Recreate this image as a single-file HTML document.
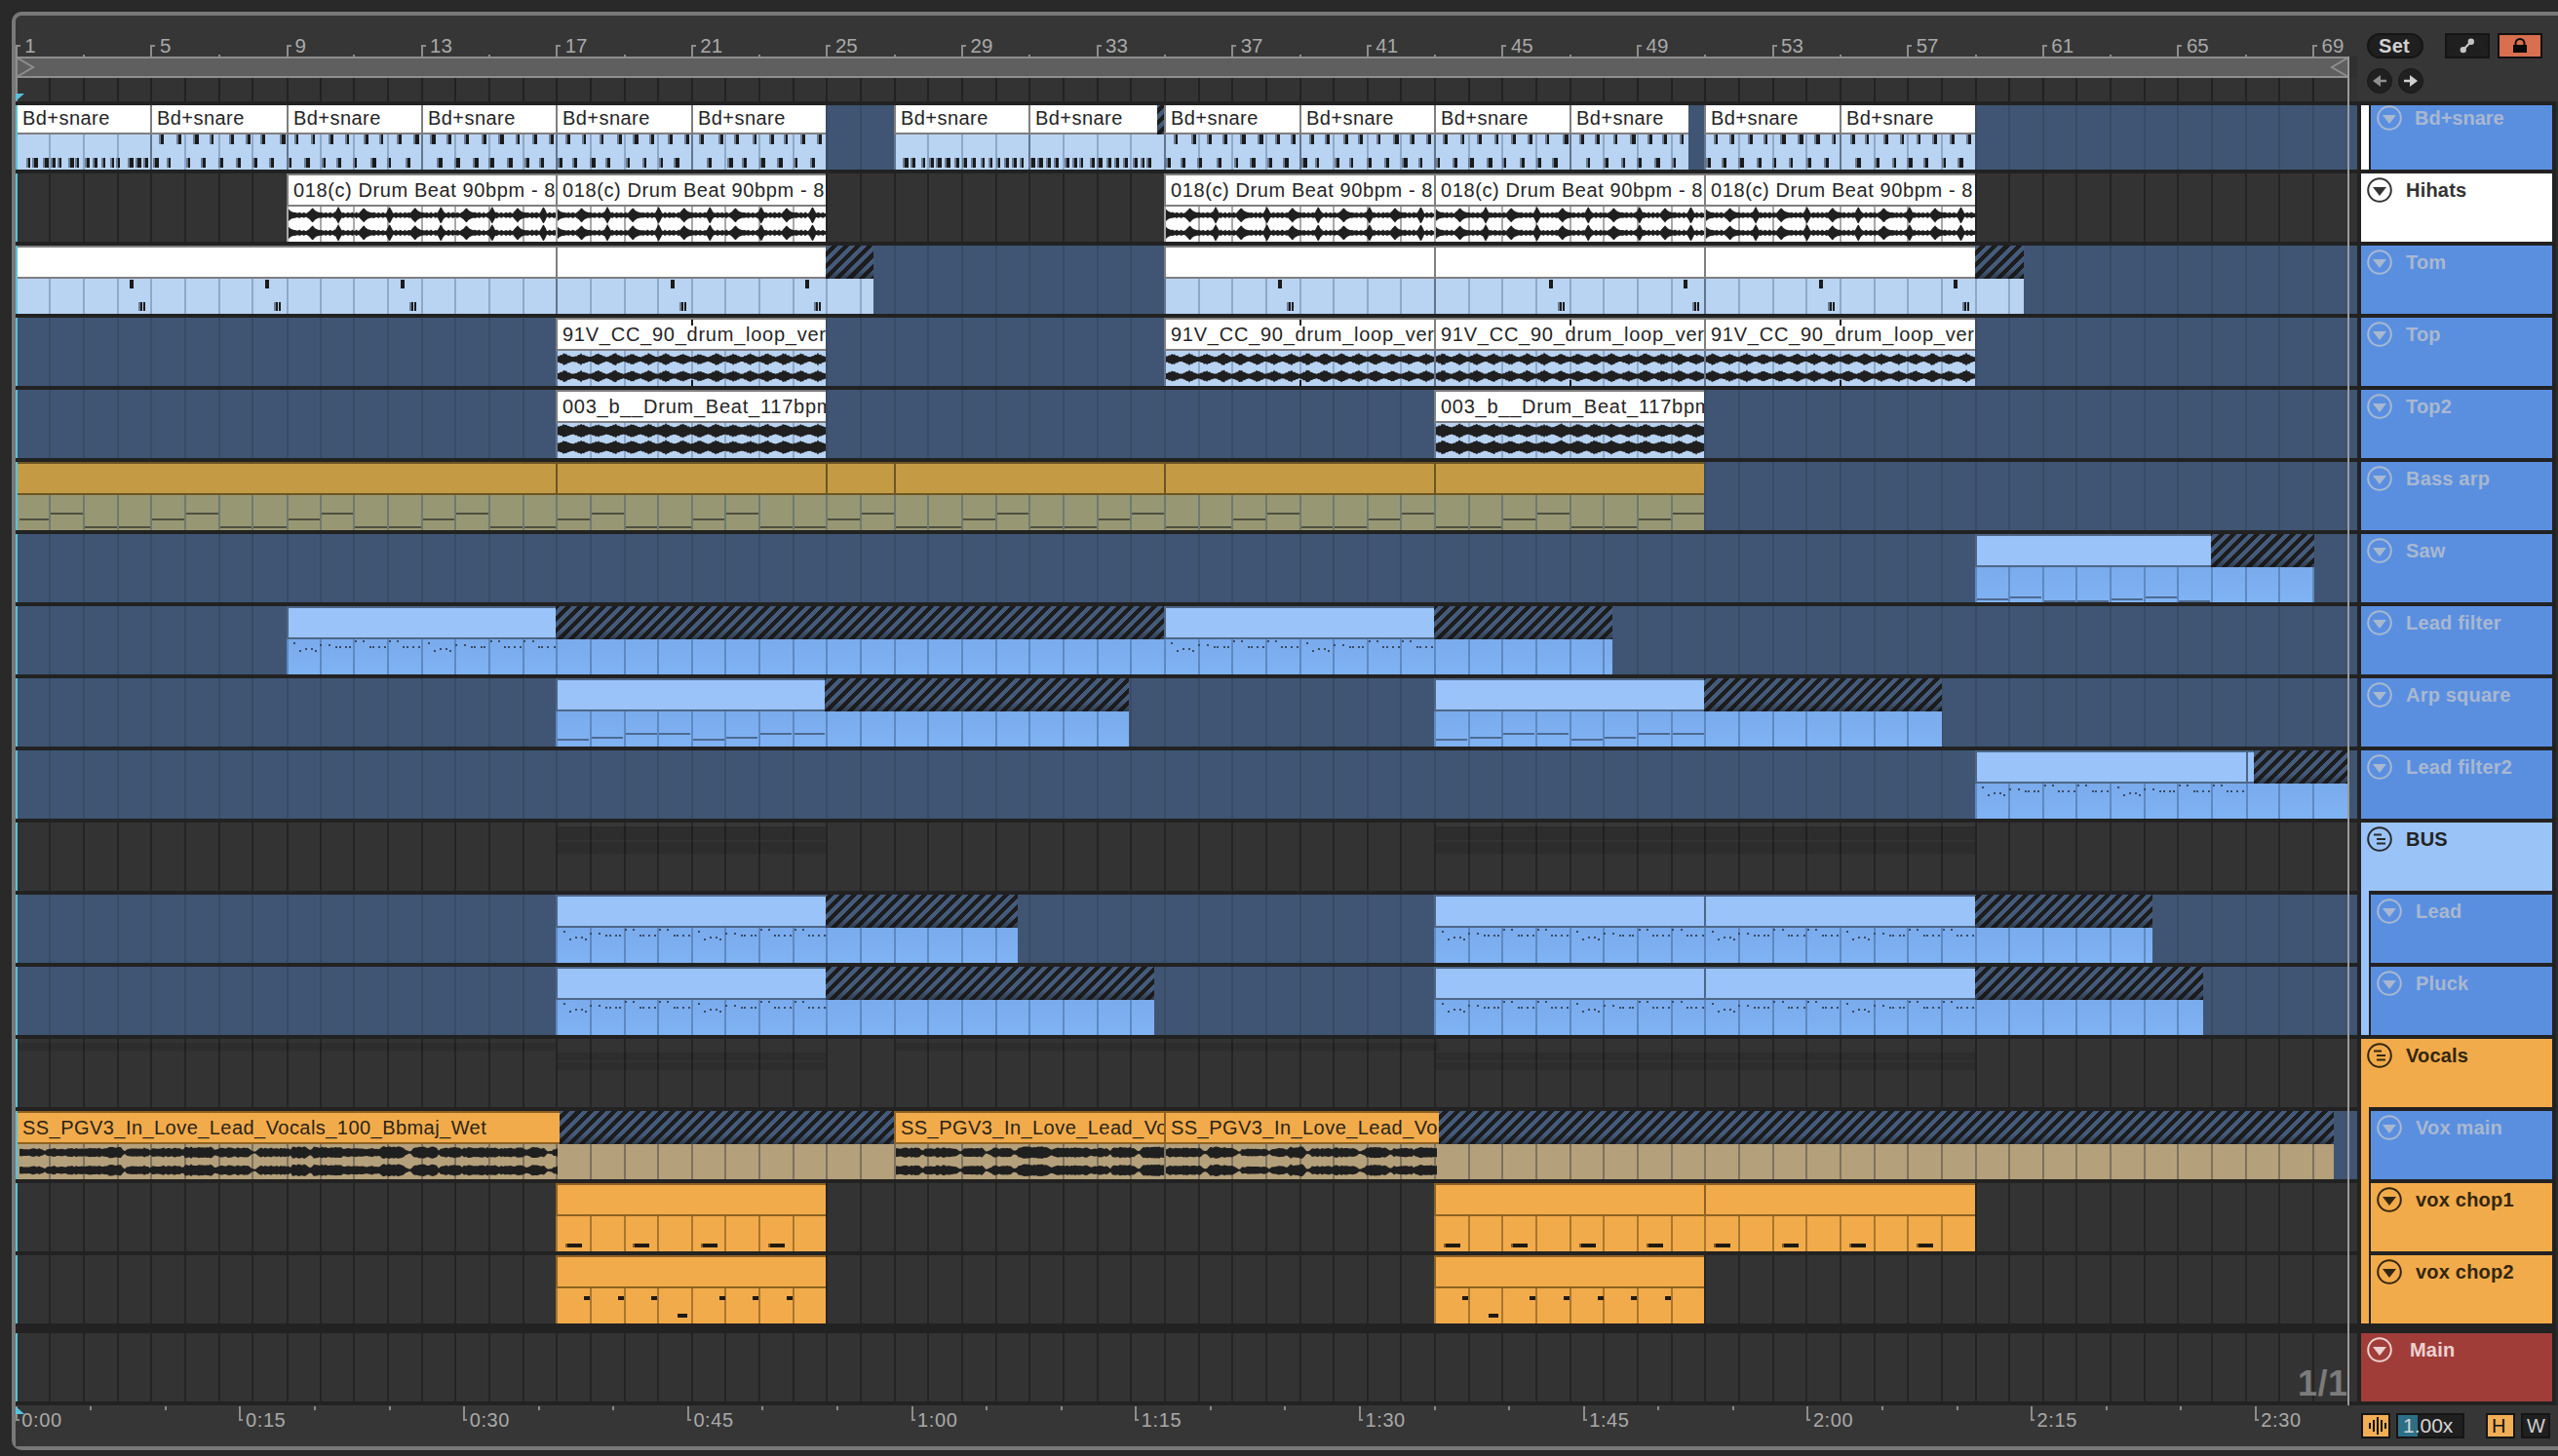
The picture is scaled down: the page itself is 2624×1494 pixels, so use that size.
<!DOCTYPE html><html><head><meta charset="utf-8"><style>html,body{margin:0;padding:0;width:2624px;height:1494px;overflow:hidden;background:#292929}#r{position:relative;width:2624px;height:1494px;overflow:hidden;font-family:"Liberation Sans",sans-serif}#r div,#r span,#r svg,#r i{position:absolute;box-sizing:content-box;display:block}#r svg path,#r svg line,#r svg circle,#r svg polygon,#r svg rect,#r svg polyline{position:static}</style></head><body><div id="r"><i style="left:0px;top:0px;width:2624px;height:1494px;background:#292929;"></i>
<div style="left:12px;top:12px;width:2640px;height:1468px;border:4px solid #787878;border-radius:10px;background:#363636;"></div>
<i style="left:16px;top:46px;width:2px;height:12px;background:#8c8c8c;"></i>
<i style="left:16px;top:46px;width:5px;height:2px;background:#8c8c8c;"></i>
<span style="left:25.3px;top:35.75px;font-size:20.5px;line-height:22.90px;color:#a9a9a9;font-weight:normal;">1</span>
<i style="left:154px;top:46px;width:2px;height:12px;background:#8c8c8c;"></i>
<i style="left:154px;top:46px;width:5px;height:2px;background:#8c8c8c;"></i>
<span style="left:163.9px;top:35.75px;font-size:20.5px;line-height:22.90px;color:#a9a9a9;font-weight:normal;">5</span>
<i style="left:294px;top:46px;width:2px;height:12px;background:#8c8c8c;"></i>
<i style="left:294px;top:46px;width:5px;height:2px;background:#8c8c8c;"></i>
<span style="left:302.5px;top:35.75px;font-size:20.5px;line-height:22.90px;color:#a9a9a9;font-weight:normal;">9</span>
<i style="left:432px;top:46px;width:2px;height:12px;background:#8c8c8c;"></i>
<i style="left:432px;top:46px;width:5px;height:2px;background:#8c8c8c;"></i>
<span style="left:441.1px;top:35.75px;font-size:20.5px;line-height:22.90px;color:#a9a9a9;font-weight:normal;">13</span>
<i style="left:570px;top:46px;width:2px;height:12px;background:#8c8c8c;"></i>
<i style="left:570px;top:46px;width:5px;height:2px;background:#8c8c8c;"></i>
<span style="left:579.7px;top:35.75px;font-size:20.5px;line-height:22.90px;color:#a9a9a9;font-weight:normal;">17</span>
<i style="left:709px;top:46px;width:2px;height:12px;background:#8c8c8c;"></i>
<i style="left:709px;top:46px;width:5px;height:2px;background:#8c8c8c;"></i>
<span style="left:718.3px;top:35.75px;font-size:20.5px;line-height:22.90px;color:#a9a9a9;font-weight:normal;">21</span>
<i style="left:847px;top:46px;width:2px;height:12px;background:#8c8c8c;"></i>
<i style="left:847px;top:46px;width:5px;height:2px;background:#8c8c8c;"></i>
<span style="left:856.9px;top:35.75px;font-size:20.5px;line-height:22.90px;color:#a9a9a9;font-weight:normal;">25</span>
<i style="left:986px;top:46px;width:2px;height:12px;background:#8c8c8c;"></i>
<i style="left:986px;top:46px;width:5px;height:2px;background:#8c8c8c;"></i>
<span style="left:995.5px;top:35.75px;font-size:20.5px;line-height:22.90px;color:#a9a9a9;font-weight:normal;">29</span>
<i style="left:1125px;top:46px;width:2px;height:12px;background:#8c8c8c;"></i>
<i style="left:1125px;top:46px;width:5px;height:2px;background:#8c8c8c;"></i>
<span style="left:1134.1px;top:35.75px;font-size:20.5px;line-height:22.90px;color:#a9a9a9;font-weight:normal;">33</span>
<i style="left:1263px;top:46px;width:2px;height:12px;background:#8c8c8c;"></i>
<i style="left:1263px;top:46px;width:5px;height:2px;background:#8c8c8c;"></i>
<span style="left:1272.7px;top:35.75px;font-size:20.5px;line-height:22.90px;color:#a9a9a9;font-weight:normal;">37</span>
<i style="left:1402px;top:46px;width:2px;height:12px;background:#8c8c8c;"></i>
<i style="left:1402px;top:46px;width:5px;height:2px;background:#8c8c8c;"></i>
<span style="left:1411.3px;top:35.75px;font-size:20.5px;line-height:22.90px;color:#a9a9a9;font-weight:normal;">41</span>
<i style="left:1540px;top:46px;width:2px;height:12px;background:#8c8c8c;"></i>
<i style="left:1540px;top:46px;width:5px;height:2px;background:#8c8c8c;"></i>
<span style="left:1549.9px;top:35.75px;font-size:20.5px;line-height:22.90px;color:#a9a9a9;font-weight:normal;">45</span>
<i style="left:1679px;top:46px;width:2px;height:12px;background:#8c8c8c;"></i>
<i style="left:1679px;top:46px;width:5px;height:2px;background:#8c8c8c;"></i>
<span style="left:1688.5px;top:35.75px;font-size:20.5px;line-height:22.90px;color:#a9a9a9;font-weight:normal;">49</span>
<i style="left:1818px;top:46px;width:2px;height:12px;background:#8c8c8c;"></i>
<i style="left:1818px;top:46px;width:5px;height:2px;background:#8c8c8c;"></i>
<span style="left:1827.1px;top:35.75px;font-size:20.5px;line-height:22.90px;color:#a9a9a9;font-weight:normal;">53</span>
<i style="left:1956px;top:46px;width:2px;height:12px;background:#8c8c8c;"></i>
<i style="left:1956px;top:46px;width:5px;height:2px;background:#8c8c8c;"></i>
<span style="left:1965.7px;top:35.75px;font-size:20.5px;line-height:22.90px;color:#a9a9a9;font-weight:normal;">57</span>
<i style="left:2095px;top:46px;width:2px;height:12px;background:#8c8c8c;"></i>
<i style="left:2095px;top:46px;width:5px;height:2px;background:#8c8c8c;"></i>
<span style="left:2104.3px;top:35.75px;font-size:20.5px;line-height:22.90px;color:#a9a9a9;font-weight:normal;">61</span>
<i style="left:2233px;top:46px;width:2px;height:12px;background:#8c8c8c;"></i>
<i style="left:2233px;top:46px;width:5px;height:2px;background:#8c8c8c;"></i>
<span style="left:2242.9px;top:35.75px;font-size:20.5px;line-height:22.90px;color:#a9a9a9;font-weight:normal;">65</span>
<i style="left:2372px;top:46px;width:2px;height:12px;background:#8c8c8c;"></i>
<i style="left:2372px;top:46px;width:5px;height:2px;background:#8c8c8c;"></i>
<span style="left:2381.5px;top:35.75px;font-size:20.5px;line-height:22.90px;color:#a9a9a9;font-weight:normal;">69</span>
<i style="left:85px;top:56px;width:2px;height:2px;background:#8c8c8c;"></i>
<i style="left:224px;top:56px;width:2px;height:2px;background:#8c8c8c;"></i>
<i style="left:362px;top:56px;width:2px;height:2px;background:#8c8c8c;"></i>
<i style="left:501px;top:56px;width:2px;height:2px;background:#8c8c8c;"></i>
<i style="left:640px;top:56px;width:2px;height:2px;background:#8c8c8c;"></i>
<i style="left:778px;top:56px;width:2px;height:2px;background:#8c8c8c;"></i>
<i style="left:917px;top:56px;width:2px;height:2px;background:#8c8c8c;"></i>
<i style="left:1055px;top:56px;width:2px;height:2px;background:#8c8c8c;"></i>
<i style="left:1194px;top:56px;width:2px;height:2px;background:#8c8c8c;"></i>
<i style="left:1333px;top:56px;width:2px;height:2px;background:#8c8c8c;"></i>
<i style="left:1471px;top:56px;width:2px;height:2px;background:#8c8c8c;"></i>
<i style="left:1610px;top:56px;width:2px;height:2px;background:#8c8c8c;"></i>
<i style="left:1748px;top:56px;width:2px;height:2px;background:#8c8c8c;"></i>
<i style="left:1887px;top:56px;width:2px;height:2px;background:#8c8c8c;"></i>
<i style="left:2026px;top:56px;width:2px;height:2px;background:#8c8c8c;"></i>
<i style="left:2164px;top:56px;width:2px;height:2px;background:#8c8c8c;"></i>
<i style="left:2303px;top:56px;width:2px;height:2px;background:#8c8c8c;"></i>
<i style="left:16px;top:58px;width:2394px;height:22px;background:#8e8e8e;"></i>
<i style="left:18px;top:60px;width:2390px;height:18px;background:#5f5f5f;"></i>
<svg style="left:16px;top:58px" width="24" height="22"><polyline points="1,1 18,11 1,21" fill="none" stroke="#8e8e8e" stroke-width="2"/></svg>
<svg style="left:2388px;top:58px" width="24" height="22"><polyline points="21,1 4,11 21,21" fill="none" stroke="#8e8e8e" stroke-width="2"/></svg>
<i style="left:2410px;top:58px;width:8px;height:46px;background:#303030;"></i>
<i style="left:18px;top:80px;width:2400px;height:24px;background:#333333;"></i>
<svg style="left:50px;top:80px" width="2324" height="24"><path d="M1 0v24M36 0v24M71 0v24M105 0v24M140 0v24M175 0v24M209 0v24M245 0v24M279 0v24M313 0v24M348 0v24M383 0v24M417 0v24M452 0v24M487 0v24M521 0v24M556 0v24M591 0v24M625 0v24M660 0v24M694 0v24M729 0v24M764 0v24M798 0v24M833 0v24M868 0v24M902 0v24M937 0v24M972 0v24M1006 0v24M1041 0v24M1076 0v24M1110 0v24M1145 0v24M1180 0v24M1214 0v24M1249 0v24M1284 0v24M1318 0v24M1353 0v24M1387 0v24M1422 0v24M1457 0v24M1491 0v24M1526 0v24M1561 0v24M1595 0v24M1630 0v24M1665 0v24M1699 0v24M1734 0v24M1769 0v24M1803 0v24M1838 0v24M1873 0v24M1907 0v24M1942 0v24M1977 0v24M2011 0v24M2046 0v24M2080 0v24M2115 0v24M2150 0v24M2184 0v24M2219 0v24M2254 0v24M2288 0v24M2323 0v24" stroke="#222222" stroke-width="2"/></svg>
<i style="left:16px;top:80px;width:2px;height:24px;background:#8a8a8a;"></i>
<svg style="left:16px;top:96px" width="10" height="9"><polygon points="0,0 9,0 0,8" fill="#55c3dc"/></svg>
<i style="left:16px;top:104px;width:2402px;height:1338px;background:#222222;"></i>
<i style="left:18px;top:108px;width:2400px;height:66px;background:#3f5573;"></i>
<svg style="left:50px;top:108px" width="2324" height="66"><path d="M1 0v66M36 0v66M71 0v66M105 0v66M140 0v66M175 0v66M209 0v66M245 0v66M279 0v66M313 0v66M348 0v66M383 0v66M417 0v66M452 0v66M487 0v66M521 0v66M556 0v66M591 0v66M625 0v66M660 0v66M694 0v66M729 0v66M764 0v66M798 0v66M833 0v66M868 0v66M902 0v66M937 0v66M972 0v66M1006 0v66M1041 0v66M1076 0v66M1110 0v66M1145 0v66M1180 0v66M1214 0v66M1249 0v66M1284 0v66M1318 0v66M1353 0v66M1387 0v66M1422 0v66M1457 0v66M1491 0v66M1526 0v66M1561 0v66M1595 0v66M1630 0v66M1665 0v66M1699 0v66M1734 0v66M1769 0v66M1803 0v66M1838 0v66M1873 0v66M1907 0v66M1942 0v66M1977 0v66M2011 0v66M2046 0v66M2080 0v66M2115 0v66M2150 0v66M2184 0v66M2219 0v66M2254 0v66M2288 0v66M2323 0v66" stroke="#384b67" stroke-width="2"/></svg>
<i style="left:16px;top:108px;width:2px;height:66px;background:#55c3dc;"></i>
<i style="left:18px;top:178px;width:2400px;height:70px;background:#333333;"></i>
<svg style="left:50px;top:178px" width="2324" height="70"><path d="M1 0v70M36 0v70M71 0v70M105 0v70M140 0v70M175 0v70M209 0v70M245 0v70M279 0v70M313 0v70M348 0v70M383 0v70M417 0v70M452 0v70M487 0v70M521 0v70M556 0v70M591 0v70M625 0v70M660 0v70M694 0v70M729 0v70M764 0v70M798 0v70M833 0v70M868 0v70M902 0v70M937 0v70M972 0v70M1006 0v70M1041 0v70M1076 0v70M1110 0v70M1145 0v70M1180 0v70M1214 0v70M1249 0v70M1284 0v70M1318 0v70M1353 0v70M1387 0v70M1422 0v70M1457 0v70M1491 0v70M1526 0v70M1561 0v70M1595 0v70M1630 0v70M1665 0v70M1699 0v70M1734 0v70M1769 0v70M1803 0v70M1838 0v70M1873 0v70M1907 0v70M1942 0v70M1977 0v70M2011 0v70M2046 0v70M2080 0v70M2115 0v70M2150 0v70M2184 0v70M2219 0v70M2254 0v70M2288 0v70M2323 0v70" stroke="#242424" stroke-width="2"/></svg>
<i style="left:16px;top:178px;width:2px;height:70px;background:#55c3dc;"></i>
<i style="left:18px;top:252px;width:2400px;height:70px;background:#3f5573;"></i>
<svg style="left:50px;top:252px" width="2324" height="70"><path d="M1 0v70M36 0v70M71 0v70M105 0v70M140 0v70M175 0v70M209 0v70M245 0v70M279 0v70M313 0v70M348 0v70M383 0v70M417 0v70M452 0v70M487 0v70M521 0v70M556 0v70M591 0v70M625 0v70M660 0v70M694 0v70M729 0v70M764 0v70M798 0v70M833 0v70M868 0v70M902 0v70M937 0v70M972 0v70M1006 0v70M1041 0v70M1076 0v70M1110 0v70M1145 0v70M1180 0v70M1214 0v70M1249 0v70M1284 0v70M1318 0v70M1353 0v70M1387 0v70M1422 0v70M1457 0v70M1491 0v70M1526 0v70M1561 0v70M1595 0v70M1630 0v70M1665 0v70M1699 0v70M1734 0v70M1769 0v70M1803 0v70M1838 0v70M1873 0v70M1907 0v70M1942 0v70M1977 0v70M2011 0v70M2046 0v70M2080 0v70M2115 0v70M2150 0v70M2184 0v70M2219 0v70M2254 0v70M2288 0v70M2323 0v70" stroke="#384b67" stroke-width="2"/></svg>
<i style="left:16px;top:252px;width:2px;height:70px;background:#55c3dc;"></i>
<i style="left:18px;top:326px;width:2400px;height:70px;background:#3f5573;"></i>
<svg style="left:50px;top:326px" width="2324" height="70"><path d="M1 0v70M36 0v70M71 0v70M105 0v70M140 0v70M175 0v70M209 0v70M245 0v70M279 0v70M313 0v70M348 0v70M383 0v70M417 0v70M452 0v70M487 0v70M521 0v70M556 0v70M591 0v70M625 0v70M660 0v70M694 0v70M729 0v70M764 0v70M798 0v70M833 0v70M868 0v70M902 0v70M937 0v70M972 0v70M1006 0v70M1041 0v70M1076 0v70M1110 0v70M1145 0v70M1180 0v70M1214 0v70M1249 0v70M1284 0v70M1318 0v70M1353 0v70M1387 0v70M1422 0v70M1457 0v70M1491 0v70M1526 0v70M1561 0v70M1595 0v70M1630 0v70M1665 0v70M1699 0v70M1734 0v70M1769 0v70M1803 0v70M1838 0v70M1873 0v70M1907 0v70M1942 0v70M1977 0v70M2011 0v70M2046 0v70M2080 0v70M2115 0v70M2150 0v70M2184 0v70M2219 0v70M2254 0v70M2288 0v70M2323 0v70" stroke="#384b67" stroke-width="2"/></svg>
<i style="left:16px;top:326px;width:2px;height:70px;background:#55c3dc;"></i>
<i style="left:18px;top:400px;width:2400px;height:70px;background:#3f5573;"></i>
<svg style="left:50px;top:400px" width="2324" height="70"><path d="M1 0v70M36 0v70M71 0v70M105 0v70M140 0v70M175 0v70M209 0v70M245 0v70M279 0v70M313 0v70M348 0v70M383 0v70M417 0v70M452 0v70M487 0v70M521 0v70M556 0v70M591 0v70M625 0v70M660 0v70M694 0v70M729 0v70M764 0v70M798 0v70M833 0v70M868 0v70M902 0v70M937 0v70M972 0v70M1006 0v70M1041 0v70M1076 0v70M1110 0v70M1145 0v70M1180 0v70M1214 0v70M1249 0v70M1284 0v70M1318 0v70M1353 0v70M1387 0v70M1422 0v70M1457 0v70M1491 0v70M1526 0v70M1561 0v70M1595 0v70M1630 0v70M1665 0v70M1699 0v70M1734 0v70M1769 0v70M1803 0v70M1838 0v70M1873 0v70M1907 0v70M1942 0v70M1977 0v70M2011 0v70M2046 0v70M2080 0v70M2115 0v70M2150 0v70M2184 0v70M2219 0v70M2254 0v70M2288 0v70M2323 0v70" stroke="#384b67" stroke-width="2"/></svg>
<i style="left:16px;top:400px;width:2px;height:70px;background:#55c3dc;"></i>
<i style="left:18px;top:474px;width:2400px;height:70px;background:#3f5573;"></i>
<svg style="left:50px;top:474px" width="2324" height="70"><path d="M1 0v70M36 0v70M71 0v70M105 0v70M140 0v70M175 0v70M209 0v70M245 0v70M279 0v70M313 0v70M348 0v70M383 0v70M417 0v70M452 0v70M487 0v70M521 0v70M556 0v70M591 0v70M625 0v70M660 0v70M694 0v70M729 0v70M764 0v70M798 0v70M833 0v70M868 0v70M902 0v70M937 0v70M972 0v70M1006 0v70M1041 0v70M1076 0v70M1110 0v70M1145 0v70M1180 0v70M1214 0v70M1249 0v70M1284 0v70M1318 0v70M1353 0v70M1387 0v70M1422 0v70M1457 0v70M1491 0v70M1526 0v70M1561 0v70M1595 0v70M1630 0v70M1665 0v70M1699 0v70M1734 0v70M1769 0v70M1803 0v70M1838 0v70M1873 0v70M1907 0v70M1942 0v70M1977 0v70M2011 0v70M2046 0v70M2080 0v70M2115 0v70M2150 0v70M2184 0v70M2219 0v70M2254 0v70M2288 0v70M2323 0v70" stroke="#384b67" stroke-width="2"/></svg>
<i style="left:16px;top:474px;width:2px;height:70px;background:#55c3dc;"></i>
<i style="left:18px;top:548px;width:2400px;height:70px;background:#3f5573;"></i>
<svg style="left:50px;top:548px" width="2324" height="70"><path d="M1 0v70M36 0v70M71 0v70M105 0v70M140 0v70M175 0v70M209 0v70M245 0v70M279 0v70M313 0v70M348 0v70M383 0v70M417 0v70M452 0v70M487 0v70M521 0v70M556 0v70M591 0v70M625 0v70M660 0v70M694 0v70M729 0v70M764 0v70M798 0v70M833 0v70M868 0v70M902 0v70M937 0v70M972 0v70M1006 0v70M1041 0v70M1076 0v70M1110 0v70M1145 0v70M1180 0v70M1214 0v70M1249 0v70M1284 0v70M1318 0v70M1353 0v70M1387 0v70M1422 0v70M1457 0v70M1491 0v70M1526 0v70M1561 0v70M1595 0v70M1630 0v70M1665 0v70M1699 0v70M1734 0v70M1769 0v70M1803 0v70M1838 0v70M1873 0v70M1907 0v70M1942 0v70M1977 0v70M2011 0v70M2046 0v70M2080 0v70M2115 0v70M2150 0v70M2184 0v70M2219 0v70M2254 0v70M2288 0v70M2323 0v70" stroke="#384b67" stroke-width="2"/></svg>
<i style="left:16px;top:548px;width:2px;height:70px;background:#55c3dc;"></i>
<i style="left:18px;top:622px;width:2400px;height:70px;background:#3f5573;"></i>
<svg style="left:50px;top:622px" width="2324" height="70"><path d="M1 0v70M36 0v70M71 0v70M105 0v70M140 0v70M175 0v70M209 0v70M245 0v70M279 0v70M313 0v70M348 0v70M383 0v70M417 0v70M452 0v70M487 0v70M521 0v70M556 0v70M591 0v70M625 0v70M660 0v70M694 0v70M729 0v70M764 0v70M798 0v70M833 0v70M868 0v70M902 0v70M937 0v70M972 0v70M1006 0v70M1041 0v70M1076 0v70M1110 0v70M1145 0v70M1180 0v70M1214 0v70M1249 0v70M1284 0v70M1318 0v70M1353 0v70M1387 0v70M1422 0v70M1457 0v70M1491 0v70M1526 0v70M1561 0v70M1595 0v70M1630 0v70M1665 0v70M1699 0v70M1734 0v70M1769 0v70M1803 0v70M1838 0v70M1873 0v70M1907 0v70M1942 0v70M1977 0v70M2011 0v70M2046 0v70M2080 0v70M2115 0v70M2150 0v70M2184 0v70M2219 0v70M2254 0v70M2288 0v70M2323 0v70" stroke="#384b67" stroke-width="2"/></svg>
<i style="left:16px;top:622px;width:2px;height:70px;background:#55c3dc;"></i>
<i style="left:18px;top:696px;width:2400px;height:70px;background:#3f5573;"></i>
<svg style="left:50px;top:696px" width="2324" height="70"><path d="M1 0v70M36 0v70M71 0v70M105 0v70M140 0v70M175 0v70M209 0v70M245 0v70M279 0v70M313 0v70M348 0v70M383 0v70M417 0v70M452 0v70M487 0v70M521 0v70M556 0v70M591 0v70M625 0v70M660 0v70M694 0v70M729 0v70M764 0v70M798 0v70M833 0v70M868 0v70M902 0v70M937 0v70M972 0v70M1006 0v70M1041 0v70M1076 0v70M1110 0v70M1145 0v70M1180 0v70M1214 0v70M1249 0v70M1284 0v70M1318 0v70M1353 0v70M1387 0v70M1422 0v70M1457 0v70M1491 0v70M1526 0v70M1561 0v70M1595 0v70M1630 0v70M1665 0v70M1699 0v70M1734 0v70M1769 0v70M1803 0v70M1838 0v70M1873 0v70M1907 0v70M1942 0v70M1977 0v70M2011 0v70M2046 0v70M2080 0v70M2115 0v70M2150 0v70M2184 0v70M2219 0v70M2254 0v70M2288 0v70M2323 0v70" stroke="#384b67" stroke-width="2"/></svg>
<i style="left:16px;top:696px;width:2px;height:70px;background:#55c3dc;"></i>
<i style="left:18px;top:770px;width:2400px;height:70px;background:#3f5573;"></i>
<svg style="left:50px;top:770px" width="2324" height="70"><path d="M1 0v70M36 0v70M71 0v70M105 0v70M140 0v70M175 0v70M209 0v70M245 0v70M279 0v70M313 0v70M348 0v70M383 0v70M417 0v70M452 0v70M487 0v70M521 0v70M556 0v70M591 0v70M625 0v70M660 0v70M694 0v70M729 0v70M764 0v70M798 0v70M833 0v70M868 0v70M902 0v70M937 0v70M972 0v70M1006 0v70M1041 0v70M1076 0v70M1110 0v70M1145 0v70M1180 0v70M1214 0v70M1249 0v70M1284 0v70M1318 0v70M1353 0v70M1387 0v70M1422 0v70M1457 0v70M1491 0v70M1526 0v70M1561 0v70M1595 0v70M1630 0v70M1665 0v70M1699 0v70M1734 0v70M1769 0v70M1803 0v70M1838 0v70M1873 0v70M1907 0v70M1942 0v70M1977 0v70M2011 0v70M2046 0v70M2080 0v70M2115 0v70M2150 0v70M2184 0v70M2219 0v70M2254 0v70M2288 0v70M2323 0v70" stroke="#384b67" stroke-width="2"/></svg>
<i style="left:16px;top:770px;width:2px;height:70px;background:#55c3dc;"></i>
<i style="left:18px;top:844px;width:2400px;height:70px;background:#333333;"></i>
<svg style="left:50px;top:844px" width="2324" height="70"><path d="M1 0v70M36 0v70M71 0v70M105 0v70M140 0v70M175 0v70M209 0v70M245 0v70M279 0v70M313 0v70M348 0v70M383 0v70M417 0v70M452 0v70M487 0v70M521 0v70M556 0v70M591 0v70M625 0v70M660 0v70M694 0v70M729 0v70M764 0v70M798 0v70M833 0v70M868 0v70M902 0v70M937 0v70M972 0v70M1006 0v70M1041 0v70M1076 0v70M1110 0v70M1145 0v70M1180 0v70M1214 0v70M1249 0v70M1284 0v70M1318 0v70M1353 0v70M1387 0v70M1422 0v70M1457 0v70M1491 0v70M1526 0v70M1561 0v70M1595 0v70M1630 0v70M1665 0v70M1699 0v70M1734 0v70M1769 0v70M1803 0v70M1838 0v70M1873 0v70M1907 0v70M1942 0v70M1977 0v70M2011 0v70M2046 0v70M2080 0v70M2115 0v70M2150 0v70M2184 0v70M2219 0v70M2254 0v70M2288 0v70M2323 0v70" stroke="#242424" stroke-width="2"/></svg>
<i style="left:16px;top:844px;width:2px;height:70px;background:#55c3dc;"></i>
<i style="left:18px;top:918px;width:2400px;height:70px;background:#3f5573;"></i>
<svg style="left:50px;top:918px" width="2324" height="70"><path d="M1 0v70M36 0v70M71 0v70M105 0v70M140 0v70M175 0v70M209 0v70M245 0v70M279 0v70M313 0v70M348 0v70M383 0v70M417 0v70M452 0v70M487 0v70M521 0v70M556 0v70M591 0v70M625 0v70M660 0v70M694 0v70M729 0v70M764 0v70M798 0v70M833 0v70M868 0v70M902 0v70M937 0v70M972 0v70M1006 0v70M1041 0v70M1076 0v70M1110 0v70M1145 0v70M1180 0v70M1214 0v70M1249 0v70M1284 0v70M1318 0v70M1353 0v70M1387 0v70M1422 0v70M1457 0v70M1491 0v70M1526 0v70M1561 0v70M1595 0v70M1630 0v70M1665 0v70M1699 0v70M1734 0v70M1769 0v70M1803 0v70M1838 0v70M1873 0v70M1907 0v70M1942 0v70M1977 0v70M2011 0v70M2046 0v70M2080 0v70M2115 0v70M2150 0v70M2184 0v70M2219 0v70M2254 0v70M2288 0v70M2323 0v70" stroke="#384b67" stroke-width="2"/></svg>
<i style="left:16px;top:918px;width:2px;height:70px;background:#55c3dc;"></i>
<i style="left:18px;top:992px;width:2400px;height:70px;background:#3f5573;"></i>
<svg style="left:50px;top:992px" width="2324" height="70"><path d="M1 0v70M36 0v70M71 0v70M105 0v70M140 0v70M175 0v70M209 0v70M245 0v70M279 0v70M313 0v70M348 0v70M383 0v70M417 0v70M452 0v70M487 0v70M521 0v70M556 0v70M591 0v70M625 0v70M660 0v70M694 0v70M729 0v70M764 0v70M798 0v70M833 0v70M868 0v70M902 0v70M937 0v70M972 0v70M1006 0v70M1041 0v70M1076 0v70M1110 0v70M1145 0v70M1180 0v70M1214 0v70M1249 0v70M1284 0v70M1318 0v70M1353 0v70M1387 0v70M1422 0v70M1457 0v70M1491 0v70M1526 0v70M1561 0v70M1595 0v70M1630 0v70M1665 0v70M1699 0v70M1734 0v70M1769 0v70M1803 0v70M1838 0v70M1873 0v70M1907 0v70M1942 0v70M1977 0v70M2011 0v70M2046 0v70M2080 0v70M2115 0v70M2150 0v70M2184 0v70M2219 0v70M2254 0v70M2288 0v70M2323 0v70" stroke="#384b67" stroke-width="2"/></svg>
<i style="left:16px;top:992px;width:2px;height:70px;background:#55c3dc;"></i>
<i style="left:18px;top:1066px;width:2400px;height:70px;background:#333333;"></i>
<svg style="left:50px;top:1066px" width="2324" height="70"><path d="M1 0v70M36 0v70M71 0v70M105 0v70M140 0v70M175 0v70M209 0v70M245 0v70M279 0v70M313 0v70M348 0v70M383 0v70M417 0v70M452 0v70M487 0v70M521 0v70M556 0v70M591 0v70M625 0v70M660 0v70M694 0v70M729 0v70M764 0v70M798 0v70M833 0v70M868 0v70M902 0v70M937 0v70M972 0v70M1006 0v70M1041 0v70M1076 0v70M1110 0v70M1145 0v70M1180 0v70M1214 0v70M1249 0v70M1284 0v70M1318 0v70M1353 0v70M1387 0v70M1422 0v70M1457 0v70M1491 0v70M1526 0v70M1561 0v70M1595 0v70M1630 0v70M1665 0v70M1699 0v70M1734 0v70M1769 0v70M1803 0v70M1838 0v70M1873 0v70M1907 0v70M1942 0v70M1977 0v70M2011 0v70M2046 0v70M2080 0v70M2115 0v70M2150 0v70M2184 0v70M2219 0v70M2254 0v70M2288 0v70M2323 0v70" stroke="#242424" stroke-width="2"/></svg>
<i style="left:16px;top:1066px;width:2px;height:70px;background:#55c3dc;"></i>
<i style="left:18px;top:1140px;width:2400px;height:70px;background:#3f5573;"></i>
<svg style="left:50px;top:1140px" width="2324" height="70"><path d="M1 0v70M36 0v70M71 0v70M105 0v70M140 0v70M175 0v70M209 0v70M245 0v70M279 0v70M313 0v70M348 0v70M383 0v70M417 0v70M452 0v70M487 0v70M521 0v70M556 0v70M591 0v70M625 0v70M660 0v70M694 0v70M729 0v70M764 0v70M798 0v70M833 0v70M868 0v70M902 0v70M937 0v70M972 0v70M1006 0v70M1041 0v70M1076 0v70M1110 0v70M1145 0v70M1180 0v70M1214 0v70M1249 0v70M1284 0v70M1318 0v70M1353 0v70M1387 0v70M1422 0v70M1457 0v70M1491 0v70M1526 0v70M1561 0v70M1595 0v70M1630 0v70M1665 0v70M1699 0v70M1734 0v70M1769 0v70M1803 0v70M1838 0v70M1873 0v70M1907 0v70M1942 0v70M1977 0v70M2011 0v70M2046 0v70M2080 0v70M2115 0v70M2150 0v70M2184 0v70M2219 0v70M2254 0v70M2288 0v70M2323 0v70" stroke="#384b67" stroke-width="2"/></svg>
<i style="left:16px;top:1140px;width:2px;height:70px;background:#55c3dc;"></i>
<i style="left:18px;top:1214px;width:2400px;height:70px;background:#333333;"></i>
<svg style="left:50px;top:1214px" width="2324" height="70"><path d="M1 0v70M36 0v70M71 0v70M105 0v70M140 0v70M175 0v70M209 0v70M245 0v70M279 0v70M313 0v70M348 0v70M383 0v70M417 0v70M452 0v70M487 0v70M521 0v70M556 0v70M591 0v70M625 0v70M660 0v70M694 0v70M729 0v70M764 0v70M798 0v70M833 0v70M868 0v70M902 0v70M937 0v70M972 0v70M1006 0v70M1041 0v70M1076 0v70M1110 0v70M1145 0v70M1180 0v70M1214 0v70M1249 0v70M1284 0v70M1318 0v70M1353 0v70M1387 0v70M1422 0v70M1457 0v70M1491 0v70M1526 0v70M1561 0v70M1595 0v70M1630 0v70M1665 0v70M1699 0v70M1734 0v70M1769 0v70M1803 0v70M1838 0v70M1873 0v70M1907 0v70M1942 0v70M1977 0v70M2011 0v70M2046 0v70M2080 0v70M2115 0v70M2150 0v70M2184 0v70M2219 0v70M2254 0v70M2288 0v70M2323 0v70" stroke="#242424" stroke-width="2"/></svg>
<i style="left:16px;top:1214px;width:2px;height:70px;background:#55c3dc;"></i>
<i style="left:18px;top:1288px;width:2400px;height:70px;background:#333333;"></i>
<svg style="left:50px;top:1288px" width="2324" height="70"><path d="M1 0v70M36 0v70M71 0v70M105 0v70M140 0v70M175 0v70M209 0v70M245 0v70M279 0v70M313 0v70M348 0v70M383 0v70M417 0v70M452 0v70M487 0v70M521 0v70M556 0v70M591 0v70M625 0v70M660 0v70M694 0v70M729 0v70M764 0v70M798 0v70M833 0v70M868 0v70M902 0v70M937 0v70M972 0v70M1006 0v70M1041 0v70M1076 0v70M1110 0v70M1145 0v70M1180 0v70M1214 0v70M1249 0v70M1284 0v70M1318 0v70M1353 0v70M1387 0v70M1422 0v70M1457 0v70M1491 0v70M1526 0v70M1561 0v70M1595 0v70M1630 0v70M1665 0v70M1699 0v70M1734 0v70M1769 0v70M1803 0v70M1838 0v70M1873 0v70M1907 0v70M1942 0v70M1977 0v70M2011 0v70M2046 0v70M2080 0v70M2115 0v70M2150 0v70M2184 0v70M2219 0v70M2254 0v70M2288 0v70M2323 0v70" stroke="#242424" stroke-width="2"/></svg>
<i style="left:16px;top:1288px;width:2px;height:70px;background:#55c3dc;"></i>
<i style="left:18px;top:1368px;width:2400px;height:70px;background:#333333;"></i>
<svg style="left:50px;top:1368px" width="2324" height="70"><path d="M1 0v70M36 0v70M71 0v70M105 0v70M140 0v70M175 0v70M209 0v70M245 0v70M279 0v70M313 0v70M348 0v70M383 0v70M417 0v70M452 0v70M487 0v70M521 0v70M556 0v70M591 0v70M625 0v70M660 0v70M694 0v70M729 0v70M764 0v70M798 0v70M833 0v70M868 0v70M902 0v70M937 0v70M972 0v70M1006 0v70M1041 0v70M1076 0v70M1110 0v70M1145 0v70M1180 0v70M1214 0v70M1249 0v70M1284 0v70M1318 0v70M1353 0v70M1387 0v70M1422 0v70M1457 0v70M1491 0v70M1526 0v70M1561 0v70M1595 0v70M1630 0v70M1665 0v70M1699 0v70M1734 0v70M1769 0v70M1803 0v70M1838 0v70M1873 0v70M1907 0v70M1942 0v70M1977 0v70M2011 0v70M2046 0v70M2080 0v70M2115 0v70M2150 0v70M2184 0v70M2219 0v70M2254 0v70M2288 0v70M2323 0v70" stroke="#242424" stroke-width="2"/></svg>
<i style="left:16px;top:1368px;width:2px;height:70px;background:#55c3dc;"></i>
<i style="left:18px;top:104px;width:136px;height:2px;background:#7f7f7f;"></i>
<i style="left:18px;top:106px;width:136px;height:30px;background:#ffffff;"></i>
<i style="left:18px;top:136px;width:136px;height:2px;background:#7f7f7f;"></i>
<i style="left:18px;top:138px;width:136px;height:36px;background:#b9d3f2;"></i>
<svg style="left:50px;top:138px" width="72" height="36"><path d="M1 0v36M36 0v36M71 0v36" stroke="#8ea8c8" stroke-width="2"/></svg>
<div style="left:18px;top:106px;width:136px;height:30px;overflow:hidden"><span style="left:5px;top:3.90px;font-size:20px;line-height:22.34px;color:#242424;white-space:nowrap;letter-spacing:0.45px">Bd+snare</span></div>
<i style="left:27px;top:162px;width:2px;height:10px;background:#6b7e96;"></i>
<i style="left:29px;top:162px;width:2px;height:10px;background:#1b1b1b;"></i>
<i style="left:33px;top:162px;width:2px;height:10px;background:#6b7e96;"></i>
<i style="left:35px;top:162px;width:4px;height:10px;background:#1b1b1b;"></i>
<i style="left:44px;top:162px;width:2px;height:10px;background:#6b7e96;"></i>
<i style="left:46px;top:162px;width:4px;height:10px;background:#1b1b1b;"></i>
<i style="left:52px;top:162px;width:2px;height:10px;background:#6b7e96;"></i>
<i style="left:54px;top:162px;width:3px;height:10px;background:#1b1b1b;"></i>
<i style="left:59px;top:162px;width:2px;height:10px;background:#6b7e96;"></i>
<i style="left:61px;top:162px;width:2px;height:10px;background:#1b1b1b;"></i>
<i style="left:70px;top:162px;width:2px;height:10px;background:#6b7e96;"></i>
<i style="left:72px;top:162px;width:4px;height:10px;background:#1b1b1b;"></i>
<i style="left:77px;top:162px;width:2px;height:10px;background:#6b7e96;"></i>
<i style="left:79px;top:162px;width:2px;height:10px;background:#1b1b1b;"></i>
<i style="left:87px;top:162px;width:2px;height:10px;background:#6b7e96;"></i>
<i style="left:89px;top:162px;width:3px;height:10px;background:#1b1b1b;"></i>
<i style="left:95px;top:162px;width:2px;height:10px;background:#6b7e96;"></i>
<i style="left:97px;top:162px;width:3px;height:10px;background:#1b1b1b;"></i>
<i style="left:104px;top:162px;width:2px;height:10px;background:#6b7e96;"></i>
<i style="left:106px;top:162px;width:2px;height:10px;background:#1b1b1b;"></i>
<i style="left:113px;top:162px;width:2px;height:10px;background:#6b7e96;"></i>
<i style="left:115px;top:162px;width:2px;height:10px;background:#1b1b1b;"></i>
<i style="left:119px;top:162px;width:2px;height:10px;background:#6b7e96;"></i>
<i style="left:121px;top:162px;width:2px;height:10px;background:#1b1b1b;"></i>
<i style="left:131px;top:162px;width:2px;height:10px;background:#6b7e96;"></i>
<i style="left:133px;top:162px;width:4px;height:10px;background:#1b1b1b;"></i>
<i style="left:139px;top:162px;width:2px;height:10px;background:#6b7e96;"></i>
<i style="left:141px;top:162px;width:4px;height:10px;background:#1b1b1b;"></i>
<i style="left:147px;top:162px;width:2px;height:10px;background:#6b7e96;"></i>
<i style="left:149px;top:162px;width:3px;height:10px;background:#1b1b1b;"></i>
<i style="left:154px;top:104px;width:2px;height:34px;background:#7f7f7f;"></i>
<i style="left:154px;top:104px;width:140px;height:2px;background:#7f7f7f;"></i>
<i style="left:156px;top:106px;width:138px;height:30px;background:#ffffff;"></i>
<i style="left:154px;top:136px;width:140px;height:2px;background:#7f7f7f;"></i>
<i style="left:154px;top:138px;width:140px;height:36px;background:#b9d3f2;"></i>
<i style="left:154px;top:138px;width:2px;height:36px;background:#63758c;"></i>
<svg style="left:189px;top:138px" width="71" height="36"><path d="M1 0v36M36 0v36M70 0v36" stroke="#8ea8c8" stroke-width="2"/></svg>
<div style="left:156px;top:106px;width:138px;height:30px;overflow:hidden"><span style="left:5px;top:3.90px;font-size:20px;line-height:22.34px;color:#242424;white-space:nowrap;letter-spacing:0.45px">Bd+snare</span></div>
<i style="left:163px;top:138px;width:2px;height:10px;background:#6b7e96;"></i>
<i style="left:165px;top:138px;width:3px;height:10px;background:#1b1b1b;"></i>
<i style="left:181px;top:138px;width:2px;height:10px;background:#6b7e96;"></i>
<i style="left:183px;top:138px;width:3px;height:10px;background:#1b1b1b;"></i>
<i style="left:157px;top:162px;width:2px;height:10px;background:#6b7e96;"></i>
<i style="left:159px;top:162px;width:4px;height:10px;background:#1b1b1b;"></i>
<i style="left:171px;top:162px;width:2px;height:10px;background:#6b7e96;"></i>
<i style="left:173px;top:162px;width:2px;height:10px;background:#1b1b1b;"></i>
<i style="left:198px;top:138px;width:2px;height:10px;background:#6b7e96;"></i>
<i style="left:200px;top:138px;width:4px;height:10px;background:#1b1b1b;"></i>
<i style="left:215px;top:138px;width:2px;height:10px;background:#6b7e96;"></i>
<i style="left:217px;top:138px;width:2px;height:10px;background:#1b1b1b;"></i>
<i style="left:191px;top:162px;width:2px;height:10px;background:#6b7e96;"></i>
<i style="left:193px;top:162px;width:2px;height:10px;background:#1b1b1b;"></i>
<i style="left:206px;top:162px;width:2px;height:10px;background:#6b7e96;"></i>
<i style="left:208px;top:162px;width:3px;height:10px;background:#1b1b1b;"></i>
<i style="left:235px;top:138px;width:2px;height:10px;background:#6b7e96;"></i>
<i style="left:237px;top:138px;width:3px;height:10px;background:#1b1b1b;"></i>
<i style="left:252px;top:138px;width:2px;height:10px;background:#6b7e96;"></i>
<i style="left:254px;top:138px;width:3px;height:10px;background:#1b1b1b;"></i>
<i style="left:224px;top:162px;width:2px;height:10px;background:#6b7e96;"></i>
<i style="left:226px;top:162px;width:3px;height:10px;background:#1b1b1b;"></i>
<i style="left:242px;top:162px;width:2px;height:10px;background:#6b7e96;"></i>
<i style="left:244px;top:162px;width:3px;height:10px;background:#1b1b1b;"></i>
<i style="left:267px;top:138px;width:2px;height:10px;background:#6b7e96;"></i>
<i style="left:269px;top:138px;width:3px;height:10px;background:#1b1b1b;"></i>
<i style="left:287px;top:138px;width:2px;height:10px;background:#6b7e96;"></i>
<i style="left:289px;top:138px;width:4px;height:10px;background:#1b1b1b;"></i>
<i style="left:259px;top:162px;width:2px;height:10px;background:#6b7e96;"></i>
<i style="left:261px;top:162px;width:3px;height:10px;background:#1b1b1b;"></i>
<i style="left:276px;top:162px;width:2px;height:10px;background:#6b7e96;"></i>
<i style="left:278px;top:162px;width:3px;height:10px;background:#1b1b1b;"></i>
<i style="left:294px;top:104px;width:2px;height:34px;background:#7f7f7f;"></i>
<i style="left:294px;top:104px;width:138px;height:2px;background:#7f7f7f;"></i>
<i style="left:296px;top:106px;width:136px;height:30px;background:#ffffff;"></i>
<i style="left:294px;top:136px;width:138px;height:2px;background:#7f7f7f;"></i>
<i style="left:294px;top:138px;width:138px;height:36px;background:#b9d3f2;"></i>
<i style="left:294px;top:138px;width:2px;height:36px;background:#63758c;"></i>
<svg style="left:328px;top:138px" width="71" height="36"><path d="M1 0v36M35 0v36M70 0v36" stroke="#8ea8c8" stroke-width="2"/></svg>
<div style="left:296px;top:106px;width:136px;height:30px;overflow:hidden"><span style="left:5px;top:3.90px;font-size:20px;line-height:22.34px;color:#242424;white-space:nowrap;letter-spacing:0.45px">Bd+snare</span></div>
<i style="left:302px;top:138px;width:2px;height:10px;background:#6b7e96;"></i>
<i style="left:304px;top:138px;width:2px;height:10px;background:#1b1b1b;"></i>
<i style="left:319px;top:138px;width:2px;height:10px;background:#6b7e96;"></i>
<i style="left:321px;top:138px;width:2px;height:10px;background:#1b1b1b;"></i>
<i style="left:295px;top:162px;width:2px;height:10px;background:#6b7e96;"></i>
<i style="left:297px;top:162px;width:2px;height:10px;background:#1b1b1b;"></i>
<i style="left:312px;top:162px;width:2px;height:10px;background:#6b7e96;"></i>
<i style="left:314px;top:162px;width:4px;height:10px;background:#1b1b1b;"></i>
<i style="left:337px;top:138px;width:2px;height:10px;background:#6b7e96;"></i>
<i style="left:339px;top:138px;width:3px;height:10px;background:#1b1b1b;"></i>
<i style="left:354px;top:138px;width:2px;height:10px;background:#6b7e96;"></i>
<i style="left:356px;top:138px;width:2px;height:10px;background:#1b1b1b;"></i>
<i style="left:330px;top:162px;width:2px;height:10px;background:#6b7e96;"></i>
<i style="left:332px;top:162px;width:2px;height:10px;background:#1b1b1b;"></i>
<i style="left:345px;top:162px;width:2px;height:10px;background:#6b7e96;"></i>
<i style="left:347px;top:162px;width:3px;height:10px;background:#1b1b1b;"></i>
<i style="left:373px;top:138px;width:2px;height:10px;background:#6b7e96;"></i>
<i style="left:375px;top:138px;width:3px;height:10px;background:#1b1b1b;"></i>
<i style="left:389px;top:138px;width:2px;height:10px;background:#6b7e96;"></i>
<i style="left:391px;top:138px;width:2px;height:10px;background:#1b1b1b;"></i>
<i style="left:362px;top:162px;width:2px;height:10px;background:#6b7e96;"></i>
<i style="left:364px;top:162px;width:2px;height:10px;background:#1b1b1b;"></i>
<i style="left:380px;top:162px;width:2px;height:10px;background:#6b7e96;"></i>
<i style="left:382px;top:162px;width:4px;height:10px;background:#1b1b1b;"></i>
<i style="left:407px;top:138px;width:2px;height:10px;background:#6b7e96;"></i>
<i style="left:409px;top:138px;width:3px;height:10px;background:#1b1b1b;"></i>
<i style="left:424px;top:138px;width:2px;height:10px;background:#6b7e96;"></i>
<i style="left:426px;top:138px;width:4px;height:10px;background:#1b1b1b;"></i>
<i style="left:397px;top:162px;width:2px;height:10px;background:#6b7e96;"></i>
<i style="left:399px;top:162px;width:2px;height:10px;background:#1b1b1b;"></i>
<i style="left:416px;top:162px;width:2px;height:10px;background:#6b7e96;"></i>
<i style="left:418px;top:162px;width:3px;height:10px;background:#1b1b1b;"></i>
<i style="left:432px;top:104px;width:2px;height:34px;background:#7f7f7f;"></i>
<i style="left:432px;top:104px;width:138px;height:2px;background:#7f7f7f;"></i>
<i style="left:434px;top:106px;width:136px;height:30px;background:#ffffff;"></i>
<i style="left:432px;top:136px;width:138px;height:2px;background:#7f7f7f;"></i>
<i style="left:432px;top:138px;width:138px;height:36px;background:#b9d3f2;"></i>
<i style="left:432px;top:138px;width:2px;height:36px;background:#63758c;"></i>
<svg style="left:466px;top:138px" width="72" height="36"><path d="M1 0v36M36 0v36M71 0v36" stroke="#8ea8c8" stroke-width="2"/></svg>
<div style="left:434px;top:106px;width:136px;height:30px;overflow:hidden"><span style="left:5px;top:3.90px;font-size:20px;line-height:22.34px;color:#242424;white-space:nowrap;letter-spacing:0.45px">Bd+snare</span></div>
<i style="left:441px;top:138px;width:2px;height:10px;background:#6b7e96;"></i>
<i style="left:443px;top:138px;width:4px;height:10px;background:#1b1b1b;"></i>
<i style="left:458px;top:138px;width:2px;height:10px;background:#6b7e96;"></i>
<i style="left:460px;top:138px;width:3px;height:10px;background:#1b1b1b;"></i>
<i style="left:448px;top:162px;width:2px;height:10px;background:#6b7e96;"></i>
<i style="left:450px;top:162px;width:4px;height:10px;background:#1b1b1b;"></i>
<i style="left:476px;top:138px;width:2px;height:10px;background:#6b7e96;"></i>
<i style="left:478px;top:138px;width:3px;height:10px;background:#1b1b1b;"></i>
<i style="left:494px;top:138px;width:2px;height:10px;background:#6b7e96;"></i>
<i style="left:496px;top:138px;width:3px;height:10px;background:#1b1b1b;"></i>
<i style="left:466px;top:162px;width:2px;height:10px;background:#6b7e96;"></i>
<i style="left:468px;top:162px;width:4px;height:10px;background:#1b1b1b;"></i>
<i style="left:485px;top:162px;width:2px;height:10px;background:#6b7e96;"></i>
<i style="left:487px;top:162px;width:4px;height:10px;background:#1b1b1b;"></i>
<i style="left:511px;top:138px;width:2px;height:10px;background:#6b7e96;"></i>
<i style="left:513px;top:138px;width:4px;height:10px;background:#1b1b1b;"></i>
<i style="left:529px;top:138px;width:2px;height:10px;background:#6b7e96;"></i>
<i style="left:531px;top:138px;width:2px;height:10px;background:#1b1b1b;"></i>
<i style="left:501px;top:162px;width:2px;height:10px;background:#6b7e96;"></i>
<i style="left:503px;top:162px;width:4px;height:10px;background:#1b1b1b;"></i>
<i style="left:520px;top:162px;width:2px;height:10px;background:#6b7e96;"></i>
<i style="left:522px;top:162px;width:4px;height:10px;background:#1b1b1b;"></i>
<i style="left:546px;top:138px;width:2px;height:10px;background:#6b7e96;"></i>
<i style="left:548px;top:138px;width:3px;height:10px;background:#1b1b1b;"></i>
<i style="left:563px;top:138px;width:2px;height:10px;background:#6b7e96;"></i>
<i style="left:565px;top:138px;width:3px;height:10px;background:#1b1b1b;"></i>
<i style="left:538px;top:162px;width:2px;height:10px;background:#6b7e96;"></i>
<i style="left:540px;top:162px;width:3px;height:10px;background:#1b1b1b;"></i>
<i style="left:553px;top:162px;width:2px;height:10px;background:#6b7e96;"></i>
<i style="left:555px;top:162px;width:3px;height:10px;background:#1b1b1b;"></i>
<i style="left:570px;top:104px;width:2px;height:34px;background:#7f7f7f;"></i>
<i style="left:570px;top:104px;width:139px;height:2px;background:#7f7f7f;"></i>
<i style="left:572px;top:106px;width:137px;height:30px;background:#ffffff;"></i>
<i style="left:570px;top:136px;width:139px;height:2px;background:#7f7f7f;"></i>
<i style="left:570px;top:138px;width:139px;height:36px;background:#b9d3f2;"></i>
<i style="left:570px;top:138px;width:2px;height:36px;background:#63758c;"></i>
<svg style="left:605px;top:138px" width="71" height="36"><path d="M1 0v36M36 0v36M70 0v36" stroke="#8ea8c8" stroke-width="2"/></svg>
<div style="left:572px;top:106px;width:137px;height:30px;overflow:hidden"><span style="left:5px;top:3.90px;font-size:20px;line-height:22.34px;color:#242424;white-space:nowrap;letter-spacing:0.45px">Bd+snare</span></div>
<i style="left:580px;top:138px;width:2px;height:10px;background:#6b7e96;"></i>
<i style="left:582px;top:138px;width:3px;height:10px;background:#1b1b1b;"></i>
<i style="left:597px;top:138px;width:2px;height:10px;background:#6b7e96;"></i>
<i style="left:599px;top:138px;width:2px;height:10px;background:#1b1b1b;"></i>
<i style="left:572px;top:162px;width:2px;height:10px;background:#6b7e96;"></i>
<i style="left:574px;top:162px;width:3px;height:10px;background:#1b1b1b;"></i>
<i style="left:587px;top:162px;width:2px;height:10px;background:#6b7e96;"></i>
<i style="left:589px;top:162px;width:3px;height:10px;background:#1b1b1b;"></i>
<i style="left:615px;top:138px;width:2px;height:10px;background:#6b7e96;"></i>
<i style="left:617px;top:138px;width:2px;height:10px;background:#1b1b1b;"></i>
<i style="left:633px;top:138px;width:2px;height:10px;background:#6b7e96;"></i>
<i style="left:635px;top:138px;width:3px;height:10px;background:#1b1b1b;"></i>
<i style="left:605px;top:162px;width:2px;height:10px;background:#6b7e96;"></i>
<i style="left:607px;top:162px;width:4px;height:10px;background:#1b1b1b;"></i>
<i style="left:621px;top:162px;width:2px;height:10px;background:#6b7e96;"></i>
<i style="left:623px;top:162px;width:3px;height:10px;background:#1b1b1b;"></i>
<i style="left:649px;top:138px;width:2px;height:10px;background:#6b7e96;"></i>
<i style="left:651px;top:138px;width:4px;height:10px;background:#1b1b1b;"></i>
<i style="left:666px;top:138px;width:2px;height:10px;background:#6b7e96;"></i>
<i style="left:668px;top:138px;width:3px;height:10px;background:#1b1b1b;"></i>
<i style="left:642px;top:162px;width:2px;height:10px;background:#6b7e96;"></i>
<i style="left:644px;top:162px;width:2px;height:10px;background:#1b1b1b;"></i>
<i style="left:659px;top:162px;width:2px;height:10px;background:#6b7e96;"></i>
<i style="left:661px;top:162px;width:2px;height:10px;background:#1b1b1b;"></i>
<i style="left:685px;top:138px;width:2px;height:10px;background:#6b7e96;"></i>
<i style="left:687px;top:138px;width:3px;height:10px;background:#1b1b1b;"></i>
<i style="left:702px;top:138px;width:2px;height:10px;background:#6b7e96;"></i>
<i style="left:704px;top:138px;width:3px;height:10px;background:#1b1b1b;"></i>
<i style="left:676px;top:162px;width:2px;height:10px;background:#6b7e96;"></i>
<i style="left:678px;top:162px;width:2px;height:10px;background:#1b1b1b;"></i>
<i style="left:691px;top:162px;width:2px;height:10px;background:#6b7e96;"></i>
<i style="left:693px;top:162px;width:4px;height:10px;background:#1b1b1b;"></i>
<i style="left:709px;top:104px;width:2px;height:34px;background:#7f7f7f;"></i>
<i style="left:709px;top:104px;width:138px;height:2px;background:#7f7f7f;"></i>
<i style="left:711px;top:106px;width:136px;height:30px;background:#ffffff;"></i>
<i style="left:709px;top:136px;width:138px;height:2px;background:#7f7f7f;"></i>
<i style="left:709px;top:138px;width:138px;height:36px;background:#b9d3f2;"></i>
<i style="left:709px;top:138px;width:2px;height:36px;background:#63758c;"></i>
<svg style="left:743px;top:138px" width="72" height="36"><path d="M1 0v36M36 0v36M71 0v36" stroke="#8ea8c8" stroke-width="2"/></svg>
<div style="left:711px;top:106px;width:136px;height:30px;overflow:hidden"><span style="left:5px;top:3.90px;font-size:20px;line-height:22.34px;color:#242424;white-space:nowrap;letter-spacing:0.45px">Bd+snare</span></div>
<i style="left:717px;top:138px;width:2px;height:10px;background:#6b7e96;"></i>
<i style="left:719px;top:138px;width:3px;height:10px;background:#1b1b1b;"></i>
<i style="left:737px;top:138px;width:2px;height:10px;background:#6b7e96;"></i>
<i style="left:739px;top:138px;width:3px;height:10px;background:#1b1b1b;"></i>
<i style="left:725px;top:162px;width:2px;height:10px;background:#6b7e96;"></i>
<i style="left:727px;top:162px;width:3px;height:10px;background:#1b1b1b;"></i>
<i style="left:753px;top:138px;width:2px;height:10px;background:#6b7e96;"></i>
<i style="left:755px;top:138px;width:3px;height:10px;background:#1b1b1b;"></i>
<i style="left:772px;top:138px;width:2px;height:10px;background:#6b7e96;"></i>
<i style="left:774px;top:138px;width:2px;height:10px;background:#1b1b1b;"></i>
<i style="left:746px;top:162px;width:2px;height:10px;background:#6b7e96;"></i>
<i style="left:748px;top:162px;width:4px;height:10px;background:#1b1b1b;"></i>
<i style="left:761px;top:162px;width:2px;height:10px;background:#6b7e96;"></i>
<i style="left:763px;top:162px;width:3px;height:10px;background:#1b1b1b;"></i>
<i style="left:789px;top:138px;width:2px;height:10px;background:#6b7e96;"></i>
<i style="left:791px;top:138px;width:3px;height:10px;background:#1b1b1b;"></i>
<i style="left:804px;top:138px;width:2px;height:10px;background:#6b7e96;"></i>
<i style="left:806px;top:138px;width:2px;height:10px;background:#1b1b1b;"></i>
<i style="left:779px;top:162px;width:2px;height:10px;background:#6b7e96;"></i>
<i style="left:781px;top:162px;width:4px;height:10px;background:#1b1b1b;"></i>
<i style="left:797px;top:162px;width:2px;height:10px;background:#6b7e96;"></i>
<i style="left:799px;top:162px;width:4px;height:10px;background:#1b1b1b;"></i>
<i style="left:821px;top:138px;width:2px;height:10px;background:#6b7e96;"></i>
<i style="left:823px;top:138px;width:3px;height:10px;background:#1b1b1b;"></i>
<i style="left:838px;top:138px;width:2px;height:10px;background:#6b7e96;"></i>
<i style="left:840px;top:138px;width:3px;height:10px;background:#1b1b1b;"></i>
<i style="left:814px;top:162px;width:2px;height:10px;background:#6b7e96;"></i>
<i style="left:816px;top:162px;width:2px;height:10px;background:#1b1b1b;"></i>
<i style="left:831px;top:162px;width:2px;height:10px;background:#6b7e96;"></i>
<i style="left:833px;top:162px;width:3px;height:10px;background:#1b1b1b;"></i>
<i style="left:917px;top:104px;width:2px;height:34px;background:#7f7f7f;"></i>
<i style="left:917px;top:104px;width:138px;height:2px;background:#7f7f7f;"></i>
<i style="left:919px;top:106px;width:136px;height:30px;background:#ffffff;"></i>
<i style="left:917px;top:136px;width:138px;height:2px;background:#7f7f7f;"></i>
<i style="left:917px;top:138px;width:138px;height:36px;background:#b9d3f2;"></i>
<i style="left:917px;top:138px;width:2px;height:36px;background:#63758c;"></i>
<svg style="left:951px;top:138px" width="72" height="36"><path d="M1 0v36M36 0v36M71 0v36" stroke="#8ea8c8" stroke-width="2"/></svg>
<div style="left:919px;top:106px;width:136px;height:30px;overflow:hidden"><span style="left:5px;top:3.90px;font-size:20px;line-height:22.34px;color:#242424;white-space:nowrap;letter-spacing:0.45px">Bd+snare</span></div>
<i style="left:926px;top:162px;width:2px;height:10px;background:#6b7e96;"></i>
<i style="left:928px;top:162px;width:4px;height:10px;background:#1b1b1b;"></i>
<i style="left:934px;top:162px;width:2px;height:10px;background:#6b7e96;"></i>
<i style="left:936px;top:162px;width:3px;height:10px;background:#1b1b1b;"></i>
<i style="left:945px;top:162px;width:2px;height:10px;background:#6b7e96;"></i>
<i style="left:947px;top:162px;width:2px;height:10px;background:#1b1b1b;"></i>
<i style="left:953px;top:162px;width:2px;height:10px;background:#6b7e96;"></i>
<i style="left:955px;top:162px;width:3px;height:10px;background:#1b1b1b;"></i>
<i style="left:960px;top:162px;width:2px;height:10px;background:#6b7e96;"></i>
<i style="left:962px;top:162px;width:4px;height:10px;background:#1b1b1b;"></i>
<i style="left:969px;top:162px;width:2px;height:10px;background:#6b7e96;"></i>
<i style="left:971px;top:162px;width:4px;height:10px;background:#1b1b1b;"></i>
<i style="left:979px;top:162px;width:2px;height:10px;background:#6b7e96;"></i>
<i style="left:981px;top:162px;width:3px;height:10px;background:#1b1b1b;"></i>
<i style="left:987px;top:162px;width:2px;height:10px;background:#6b7e96;"></i>
<i style="left:989px;top:162px;width:3px;height:10px;background:#1b1b1b;"></i>
<i style="left:996px;top:162px;width:2px;height:10px;background:#6b7e96;"></i>
<i style="left:998px;top:162px;width:3px;height:10px;background:#1b1b1b;"></i>
<i style="left:1006px;top:162px;width:2px;height:10px;background:#6b7e96;"></i>
<i style="left:1008px;top:162px;width:2px;height:10px;background:#1b1b1b;"></i>
<i style="left:1014px;top:162px;width:2px;height:10px;background:#6b7e96;"></i>
<i style="left:1016px;top:162px;width:2px;height:10px;background:#1b1b1b;"></i>
<i style="left:1022px;top:162px;width:2px;height:10px;background:#6b7e96;"></i>
<i style="left:1024px;top:162px;width:2px;height:10px;background:#1b1b1b;"></i>
<i style="left:1030px;top:162px;width:2px;height:10px;background:#6b7e96;"></i>
<i style="left:1032px;top:162px;width:3px;height:10px;background:#1b1b1b;"></i>
<i style="left:1038px;top:162px;width:2px;height:10px;background:#6b7e96;"></i>
<i style="left:1040px;top:162px;width:3px;height:10px;background:#1b1b1b;"></i>
<i style="left:1046px;top:162px;width:2px;height:10px;background:#6b7e96;"></i>
<i style="left:1048px;top:162px;width:2px;height:10px;background:#1b1b1b;"></i>
<i style="left:1055px;top:104px;width:2px;height:34px;background:#7f7f7f;"></i>
<i style="left:1055px;top:104px;width:132px;height:2px;background:#7f7f7f;"></i>
<i style="left:1057px;top:106px;width:130px;height:30px;background:#ffffff;"></i>
<i style="left:1055px;top:136px;width:132px;height:2px;background:#7f7f7f;"></i>
<i style="left:1055px;top:138px;width:132px;height:36px;background:#b9d3f2;"></i>
<i style="left:1055px;top:138px;width:2px;height:36px;background:#63758c;"></i>
<svg style="left:1090px;top:138px" width="71" height="36"><path d="M1 0v36M36 0v36M70 0v36" stroke="#8ea8c8" stroke-width="2"/></svg>
<div style="left:1057px;top:106px;width:130px;height:30px;overflow:hidden"><span style="left:5px;top:3.90px;font-size:20px;line-height:22.34px;color:#242424;white-space:nowrap;letter-spacing:0.45px">Bd+snare</span></div>
<i style="left:1056px;top:162px;width:2px;height:10px;background:#6b7e96;"></i>
<i style="left:1058px;top:162px;width:4px;height:10px;background:#1b1b1b;"></i>
<i style="left:1064px;top:162px;width:2px;height:10px;background:#6b7e96;"></i>
<i style="left:1066px;top:162px;width:4px;height:10px;background:#1b1b1b;"></i>
<i style="left:1073px;top:162px;width:2px;height:10px;background:#6b7e96;"></i>
<i style="left:1075px;top:162px;width:3px;height:10px;background:#1b1b1b;"></i>
<i style="left:1081px;top:162px;width:2px;height:10px;background:#6b7e96;"></i>
<i style="left:1083px;top:162px;width:3px;height:10px;background:#1b1b1b;"></i>
<i style="left:1092px;top:162px;width:2px;height:10px;background:#6b7e96;"></i>
<i style="left:1094px;top:162px;width:3px;height:10px;background:#1b1b1b;"></i>
<i style="left:1100px;top:162px;width:2px;height:10px;background:#6b7e96;"></i>
<i style="left:1102px;top:162px;width:3px;height:10px;background:#1b1b1b;"></i>
<i style="left:1107px;top:162px;width:2px;height:10px;background:#6b7e96;"></i>
<i style="left:1109px;top:162px;width:2px;height:10px;background:#1b1b1b;"></i>
<i style="left:1118px;top:162px;width:2px;height:10px;background:#6b7e96;"></i>
<i style="left:1120px;top:162px;width:3px;height:10px;background:#1b1b1b;"></i>
<i style="left:1125px;top:162px;width:2px;height:10px;background:#6b7e96;"></i>
<i style="left:1127px;top:162px;width:4px;height:10px;background:#1b1b1b;"></i>
<i style="left:1135px;top:162px;width:2px;height:10px;background:#6b7e96;"></i>
<i style="left:1137px;top:162px;width:3px;height:10px;background:#1b1b1b;"></i>
<i style="left:1143px;top:162px;width:2px;height:10px;background:#6b7e96;"></i>
<i style="left:1145px;top:162px;width:3px;height:10px;background:#1b1b1b;"></i>
<i style="left:1152px;top:162px;width:2px;height:10px;background:#6b7e96;"></i>
<i style="left:1154px;top:162px;width:3px;height:10px;background:#1b1b1b;"></i>
<i style="left:1162px;top:162px;width:2px;height:10px;background:#6b7e96;"></i>
<i style="left:1164px;top:162px;width:3px;height:10px;background:#1b1b1b;"></i>
<i style="left:1170px;top:162px;width:2px;height:10px;background:#6b7e96;"></i>
<i style="left:1172px;top:162px;width:2px;height:10px;background:#1b1b1b;"></i>
<i style="left:1176px;top:162px;width:2px;height:10px;background:#6b7e96;"></i>
<i style="left:1178px;top:162px;width:3px;height:10px;background:#1b1b1b;"></i>
<i style="left:1194px;top:104px;width:2px;height:34px;background:#7f7f7f;"></i>
<i style="left:1194px;top:104px;width:139px;height:2px;background:#7f7f7f;"></i>
<i style="left:1196px;top:106px;width:137px;height:30px;background:#ffffff;"></i>
<i style="left:1194px;top:136px;width:139px;height:2px;background:#7f7f7f;"></i>
<i style="left:1194px;top:138px;width:139px;height:36px;background:#b9d3f2;"></i>
<i style="left:1194px;top:138px;width:2px;height:36px;background:#63758c;"></i>
<svg style="left:1229px;top:138px" width="71" height="36"><path d="M1 0v36M35 0v36M70 0v36" stroke="#8ea8c8" stroke-width="2"/></svg>
<div style="left:1196px;top:106px;width:137px;height:30px;overflow:hidden"><span style="left:5px;top:3.90px;font-size:20px;line-height:22.34px;color:#242424;white-space:nowrap;letter-spacing:0.45px">Bd+snare</span></div>
<i style="left:1204px;top:138px;width:2px;height:10px;background:#6b7e96;"></i>
<i style="left:1206px;top:138px;width:2px;height:10px;background:#1b1b1b;"></i>
<i style="left:1222px;top:138px;width:2px;height:10px;background:#6b7e96;"></i>
<i style="left:1224px;top:138px;width:3px;height:10px;background:#1b1b1b;"></i>
<i style="left:1196px;top:162px;width:2px;height:10px;background:#6b7e96;"></i>
<i style="left:1198px;top:162px;width:3px;height:10px;background:#1b1b1b;"></i>
<i style="left:1211px;top:162px;width:2px;height:10px;background:#6b7e96;"></i>
<i style="left:1213px;top:162px;width:3px;height:10px;background:#1b1b1b;"></i>
<i style="left:1238px;top:138px;width:2px;height:10px;background:#6b7e96;"></i>
<i style="left:1240px;top:138px;width:3px;height:10px;background:#1b1b1b;"></i>
<i style="left:1254px;top:138px;width:2px;height:10px;background:#6b7e96;"></i>
<i style="left:1256px;top:138px;width:3px;height:10px;background:#1b1b1b;"></i>
<i style="left:1228px;top:162px;width:2px;height:10px;background:#6b7e96;"></i>
<i style="left:1230px;top:162px;width:3px;height:10px;background:#1b1b1b;"></i>
<i style="left:1248px;top:162px;width:2px;height:10px;background:#6b7e96;"></i>
<i style="left:1250px;top:162px;width:3px;height:10px;background:#1b1b1b;"></i>
<i style="left:1272px;top:138px;width:2px;height:10px;background:#6b7e96;"></i>
<i style="left:1274px;top:138px;width:4px;height:10px;background:#1b1b1b;"></i>
<i style="left:1290px;top:138px;width:2px;height:10px;background:#6b7e96;"></i>
<i style="left:1292px;top:138px;width:4px;height:10px;background:#1b1b1b;"></i>
<i style="left:1266px;top:162px;width:2px;height:10px;background:#6b7e96;"></i>
<i style="left:1268px;top:162px;width:2px;height:10px;background:#1b1b1b;"></i>
<i style="left:1282px;top:162px;width:2px;height:10px;background:#6b7e96;"></i>
<i style="left:1284px;top:162px;width:4px;height:10px;background:#1b1b1b;"></i>
<i style="left:1308px;top:138px;width:2px;height:10px;background:#6b7e96;"></i>
<i style="left:1310px;top:138px;width:3px;height:10px;background:#1b1b1b;"></i>
<i style="left:1324px;top:138px;width:2px;height:10px;background:#6b7e96;"></i>
<i style="left:1326px;top:138px;width:3px;height:10px;background:#1b1b1b;"></i>
<i style="left:1300px;top:162px;width:2px;height:10px;background:#6b7e96;"></i>
<i style="left:1302px;top:162px;width:3px;height:10px;background:#1b1b1b;"></i>
<i style="left:1316px;top:162px;width:2px;height:10px;background:#6b7e96;"></i>
<i style="left:1318px;top:162px;width:4px;height:10px;background:#1b1b1b;"></i>
<i style="left:1333px;top:104px;width:2px;height:34px;background:#7f7f7f;"></i>
<i style="left:1333px;top:104px;width:138px;height:2px;background:#7f7f7f;"></i>
<i style="left:1335px;top:106px;width:136px;height:30px;background:#ffffff;"></i>
<i style="left:1333px;top:136px;width:138px;height:2px;background:#7f7f7f;"></i>
<i style="left:1333px;top:138px;width:138px;height:36px;background:#b9d3f2;"></i>
<i style="left:1333px;top:138px;width:2px;height:36px;background:#63758c;"></i>
<svg style="left:1367px;top:138px" width="71" height="36"><path d="M1 0v36M36 0v36M70 0v36" stroke="#8ea8c8" stroke-width="2"/></svg>
<div style="left:1335px;top:106px;width:136px;height:30px;overflow:hidden"><span style="left:5px;top:3.90px;font-size:20px;line-height:22.34px;color:#242424;white-space:nowrap;letter-spacing:0.45px">Bd+snare</span></div>
<i style="left:1343px;top:138px;width:2px;height:10px;background:#6b7e96;"></i>
<i style="left:1345px;top:138px;width:3px;height:10px;background:#1b1b1b;"></i>
<i style="left:1359px;top:138px;width:2px;height:10px;background:#6b7e96;"></i>
<i style="left:1361px;top:138px;width:3px;height:10px;background:#1b1b1b;"></i>
<i style="left:1335px;top:162px;width:2px;height:10px;background:#6b7e96;"></i>
<i style="left:1337px;top:162px;width:4px;height:10px;background:#1b1b1b;"></i>
<i style="left:1349px;top:162px;width:2px;height:10px;background:#6b7e96;"></i>
<i style="left:1351px;top:162px;width:2px;height:10px;background:#1b1b1b;"></i>
<i style="left:1378px;top:138px;width:2px;height:10px;background:#6b7e96;"></i>
<i style="left:1380px;top:138px;width:3px;height:10px;background:#1b1b1b;"></i>
<i style="left:1393px;top:138px;width:2px;height:10px;background:#6b7e96;"></i>
<i style="left:1395px;top:138px;width:3px;height:10px;background:#1b1b1b;"></i>
<i style="left:1369px;top:162px;width:2px;height:10px;background:#6b7e96;"></i>
<i style="left:1371px;top:162px;width:3px;height:10px;background:#1b1b1b;"></i>
<i style="left:1384px;top:162px;width:2px;height:10px;background:#6b7e96;"></i>
<i style="left:1386px;top:162px;width:2px;height:10px;background:#1b1b1b;"></i>
<i style="left:1412px;top:138px;width:2px;height:10px;background:#6b7e96;"></i>
<i style="left:1414px;top:138px;width:2px;height:10px;background:#1b1b1b;"></i>
<i style="left:1429px;top:138px;width:2px;height:10px;background:#6b7e96;"></i>
<i style="left:1431px;top:138px;width:4px;height:10px;background:#1b1b1b;"></i>
<i style="left:1402px;top:162px;width:2px;height:10px;background:#6b7e96;"></i>
<i style="left:1404px;top:162px;width:3px;height:10px;background:#1b1b1b;"></i>
<i style="left:1420px;top:162px;width:2px;height:10px;background:#6b7e96;"></i>
<i style="left:1422px;top:162px;width:3px;height:10px;background:#1b1b1b;"></i>
<i style="left:1446px;top:138px;width:2px;height:10px;background:#6b7e96;"></i>
<i style="left:1448px;top:138px;width:3px;height:10px;background:#1b1b1b;"></i>
<i style="left:1463px;top:138px;width:2px;height:10px;background:#6b7e96;"></i>
<i style="left:1465px;top:138px;width:3px;height:10px;background:#1b1b1b;"></i>
<i style="left:1438px;top:162px;width:2px;height:10px;background:#6b7e96;"></i>
<i style="left:1440px;top:162px;width:4px;height:10px;background:#1b1b1b;"></i>
<i style="left:1455px;top:162px;width:2px;height:10px;background:#6b7e96;"></i>
<i style="left:1457px;top:162px;width:2px;height:10px;background:#1b1b1b;"></i>
<i style="left:1471px;top:104px;width:2px;height:34px;background:#7f7f7f;"></i>
<i style="left:1471px;top:104px;width:139px;height:2px;background:#7f7f7f;"></i>
<i style="left:1473px;top:106px;width:137px;height:30px;background:#ffffff;"></i>
<i style="left:1471px;top:136px;width:139px;height:2px;background:#7f7f7f;"></i>
<i style="left:1471px;top:138px;width:139px;height:36px;background:#b9d3f2;"></i>
<i style="left:1471px;top:138px;width:2px;height:36px;background:#63758c;"></i>
<svg style="left:1506px;top:138px" width="71" height="36"><path d="M1 0v36M35 0v36M70 0v36" stroke="#8ea8c8" stroke-width="2"/></svg>
<div style="left:1473px;top:106px;width:137px;height:30px;overflow:hidden"><span style="left:5px;top:3.90px;font-size:20px;line-height:22.34px;color:#242424;white-space:nowrap;letter-spacing:0.45px">Bd+snare</span></div>
<i style="left:1480px;top:138px;width:2px;height:10px;background:#6b7e96;"></i>
<i style="left:1482px;top:138px;width:3px;height:10px;background:#1b1b1b;"></i>
<i style="left:1498px;top:138px;width:2px;height:10px;background:#6b7e96;"></i>
<i style="left:1500px;top:138px;width:2px;height:10px;background:#1b1b1b;"></i>
<i style="left:1473px;top:162px;width:2px;height:10px;background:#6b7e96;"></i>
<i style="left:1475px;top:162px;width:2px;height:10px;background:#1b1b1b;"></i>
<i style="left:1490px;top:162px;width:2px;height:10px;background:#6b7e96;"></i>
<i style="left:1492px;top:162px;width:3px;height:10px;background:#1b1b1b;"></i>
<i style="left:1515px;top:138px;width:2px;height:10px;background:#6b7e96;"></i>
<i style="left:1517px;top:138px;width:3px;height:10px;background:#1b1b1b;"></i>
<i style="left:1533px;top:138px;width:2px;height:10px;background:#6b7e96;"></i>
<i style="left:1535px;top:138px;width:2px;height:10px;background:#1b1b1b;"></i>
<i style="left:1506px;top:162px;width:2px;height:10px;background:#6b7e96;"></i>
<i style="left:1508px;top:162px;width:4px;height:10px;background:#1b1b1b;"></i>
<i style="left:1525px;top:162px;width:2px;height:10px;background:#6b7e96;"></i>
<i style="left:1527px;top:162px;width:4px;height:10px;background:#1b1b1b;"></i>
<i style="left:1550px;top:138px;width:2px;height:10px;background:#6b7e96;"></i>
<i style="left:1552px;top:138px;width:3px;height:10px;background:#1b1b1b;"></i>
<i style="left:1567px;top:138px;width:2px;height:10px;background:#6b7e96;"></i>
<i style="left:1569px;top:138px;width:3px;height:10px;background:#1b1b1b;"></i>
<i style="left:1541px;top:162px;width:2px;height:10px;background:#6b7e96;"></i>
<i style="left:1543px;top:162px;width:2px;height:10px;background:#1b1b1b;"></i>
<i style="left:1559px;top:162px;width:2px;height:10px;background:#6b7e96;"></i>
<i style="left:1561px;top:162px;width:3px;height:10px;background:#1b1b1b;"></i>
<i style="left:1585px;top:138px;width:2px;height:10px;background:#6b7e96;"></i>
<i style="left:1587px;top:138px;width:2px;height:10px;background:#1b1b1b;"></i>
<i style="left:1603px;top:138px;width:2px;height:10px;background:#6b7e96;"></i>
<i style="left:1605px;top:138px;width:4px;height:10px;background:#1b1b1b;"></i>
<i style="left:1576px;top:162px;width:2px;height:10px;background:#6b7e96;"></i>
<i style="left:1578px;top:162px;width:3px;height:10px;background:#1b1b1b;"></i>
<i style="left:1592px;top:162px;width:2px;height:10px;background:#6b7e96;"></i>
<i style="left:1594px;top:162px;width:4px;height:10px;background:#1b1b1b;"></i>
<i style="left:1610px;top:104px;width:2px;height:34px;background:#7f7f7f;"></i>
<i style="left:1610px;top:104px;width:122px;height:2px;background:#7f7f7f;"></i>
<i style="left:1612px;top:106px;width:120px;height:30px;background:#ffffff;"></i>
<i style="left:1610px;top:136px;width:122px;height:2px;background:#7f7f7f;"></i>
<i style="left:1610px;top:138px;width:122px;height:36px;background:#b9d3f2;"></i>
<i style="left:1610px;top:138px;width:2px;height:36px;background:#63758c;"></i>
<svg style="left:1644px;top:138px" width="72" height="36"><path d="M1 0v36M36 0v36M71 0v36" stroke="#8ea8c8" stroke-width="2"/></svg>
<div style="left:1612px;top:106px;width:120px;height:30px;overflow:hidden"><span style="left:5px;top:3.90px;font-size:20px;line-height:22.34px;color:#242424;white-space:nowrap;letter-spacing:0.45px">Bd+snare</span></div>
<i style="left:1620px;top:138px;width:2px;height:10px;background:#6b7e96;"></i>
<i style="left:1622px;top:138px;width:3px;height:10px;background:#1b1b1b;"></i>
<i style="left:1636px;top:138px;width:2px;height:10px;background:#6b7e96;"></i>
<i style="left:1638px;top:138px;width:3px;height:10px;background:#1b1b1b;"></i>
<i style="left:1627px;top:162px;width:2px;height:10px;background:#6b7e96;"></i>
<i style="left:1629px;top:162px;width:2px;height:10px;background:#1b1b1b;"></i>
<i style="left:1655px;top:138px;width:2px;height:10px;background:#6b7e96;"></i>
<i style="left:1657px;top:138px;width:2px;height:10px;background:#1b1b1b;"></i>
<i style="left:1672px;top:138px;width:2px;height:10px;background:#6b7e96;"></i>
<i style="left:1674px;top:138px;width:4px;height:10px;background:#1b1b1b;"></i>
<i style="left:1645px;top:162px;width:2px;height:10px;background:#6b7e96;"></i>
<i style="left:1647px;top:162px;width:3px;height:10px;background:#1b1b1b;"></i>
<i style="left:1663px;top:162px;width:2px;height:10px;background:#6b7e96;"></i>
<i style="left:1665px;top:162px;width:2px;height:10px;background:#1b1b1b;"></i>
<i style="left:1690px;top:138px;width:2px;height:10px;background:#6b7e96;"></i>
<i style="left:1692px;top:138px;width:3px;height:10px;background:#1b1b1b;"></i>
<i style="left:1705px;top:138px;width:2px;height:10px;background:#6b7e96;"></i>
<i style="left:1707px;top:138px;width:3px;height:10px;background:#1b1b1b;"></i>
<i style="left:1679px;top:162px;width:2px;height:10px;background:#6b7e96;"></i>
<i style="left:1681px;top:162px;width:3px;height:10px;background:#1b1b1b;"></i>
<i style="left:1697px;top:162px;width:2px;height:10px;background:#6b7e96;"></i>
<i style="left:1699px;top:162px;width:4px;height:10px;background:#1b1b1b;"></i>
<i style="left:1723px;top:138px;width:2px;height:10px;background:#6b7e96;"></i>
<i style="left:1725px;top:138px;width:2px;height:10px;background:#1b1b1b;"></i>
<i style="left:1715px;top:162px;width:2px;height:10px;background:#6b7e96;"></i>
<i style="left:1717px;top:162px;width:2px;height:10px;background:#1b1b1b;"></i>
<i style="left:1748px;top:104px;width:2px;height:34px;background:#7f7f7f;"></i>
<i style="left:1748px;top:104px;width:139px;height:2px;background:#7f7f7f;"></i>
<i style="left:1750px;top:106px;width:137px;height:30px;background:#ffffff;"></i>
<i style="left:1748px;top:136px;width:139px;height:2px;background:#7f7f7f;"></i>
<i style="left:1748px;top:138px;width:139px;height:36px;background:#b9d3f2;"></i>
<i style="left:1748px;top:138px;width:2px;height:36px;background:#63758c;"></i>
<svg style="left:1783px;top:138px" width="71" height="36"><path d="M1 0v36M36 0v36M70 0v36" stroke="#8ea8c8" stroke-width="2"/></svg>
<div style="left:1750px;top:106px;width:137px;height:30px;overflow:hidden"><span style="left:5px;top:3.90px;font-size:20px;line-height:22.34px;color:#242424;white-space:nowrap;letter-spacing:0.45px">Bd+snare</span></div>
<i style="left:1758px;top:138px;width:2px;height:10px;background:#6b7e96;"></i>
<i style="left:1760px;top:138px;width:2px;height:10px;background:#1b1b1b;"></i>
<i style="left:1774px;top:138px;width:2px;height:10px;background:#6b7e96;"></i>
<i style="left:1776px;top:138px;width:3px;height:10px;background:#1b1b1b;"></i>
<i style="left:1750px;top:162px;width:2px;height:10px;background:#6b7e96;"></i>
<i style="left:1752px;top:162px;width:3px;height:10px;background:#1b1b1b;"></i>
<i style="left:1766px;top:162px;width:2px;height:10px;background:#6b7e96;"></i>
<i style="left:1768px;top:162px;width:3px;height:10px;background:#1b1b1b;"></i>
<i style="left:1793px;top:138px;width:2px;height:10px;background:#6b7e96;"></i>
<i style="left:1795px;top:138px;width:3px;height:10px;background:#1b1b1b;"></i>
<i style="left:1809px;top:138px;width:2px;height:10px;background:#6b7e96;"></i>
<i style="left:1811px;top:138px;width:2px;height:10px;background:#1b1b1b;"></i>
<i style="left:1783px;top:162px;width:2px;height:10px;background:#6b7e96;"></i>
<i style="left:1785px;top:162px;width:4px;height:10px;background:#1b1b1b;"></i>
<i style="left:1802px;top:162px;width:2px;height:10px;background:#6b7e96;"></i>
<i style="left:1804px;top:162px;width:3px;height:10px;background:#1b1b1b;"></i>
<i style="left:1826px;top:138px;width:2px;height:10px;background:#6b7e96;"></i>
<i style="left:1828px;top:138px;width:4px;height:10px;background:#1b1b1b;"></i>
<i style="left:1844px;top:138px;width:2px;height:10px;background:#6b7e96;"></i>
<i style="left:1846px;top:138px;width:4px;height:10px;background:#1b1b1b;"></i>
<i style="left:1818px;top:162px;width:2px;height:10px;background:#6b7e96;"></i>
<i style="left:1820px;top:162px;width:2px;height:10px;background:#1b1b1b;"></i>
<i style="left:1835px;top:162px;width:2px;height:10px;background:#6b7e96;"></i>
<i style="left:1837px;top:162px;width:2px;height:10px;background:#1b1b1b;"></i>
<i style="left:1861px;top:138px;width:2px;height:10px;background:#6b7e96;"></i>
<i style="left:1863px;top:138px;width:4px;height:10px;background:#1b1b1b;"></i>
<i style="left:1879px;top:138px;width:2px;height:10px;background:#6b7e96;"></i>
<i style="left:1881px;top:138px;width:2px;height:10px;background:#1b1b1b;"></i>
<i style="left:1853px;top:162px;width:2px;height:10px;background:#6b7e96;"></i>
<i style="left:1855px;top:162px;width:3px;height:10px;background:#1b1b1b;"></i>
<i style="left:1871px;top:162px;width:2px;height:10px;background:#6b7e96;"></i>
<i style="left:1873px;top:162px;width:3px;height:10px;background:#1b1b1b;"></i>
<i style="left:1887px;top:104px;width:2px;height:34px;background:#7f7f7f;"></i>
<i style="left:1887px;top:104px;width:139px;height:2px;background:#7f7f7f;"></i>
<i style="left:1889px;top:106px;width:137px;height:30px;background:#ffffff;"></i>
<i style="left:1887px;top:136px;width:139px;height:2px;background:#7f7f7f;"></i>
<i style="left:1887px;top:138px;width:139px;height:36px;background:#b9d3f2;"></i>
<i style="left:1887px;top:138px;width:2px;height:36px;background:#63758c;"></i>
<svg style="left:1922px;top:138px" width="71" height="36"><path d="M1 0v36M35 0v36M70 0v36" stroke="#8ea8c8" stroke-width="2"/></svg>
<div style="left:1889px;top:106px;width:137px;height:30px;overflow:hidden"><span style="left:5px;top:3.90px;font-size:20px;line-height:22.34px;color:#242424;white-space:nowrap;letter-spacing:0.45px">Bd+snare</span></div>
<i style="left:1898px;top:138px;width:2px;height:10px;background:#6b7e96;"></i>
<i style="left:1900px;top:138px;width:3px;height:10px;background:#1b1b1b;"></i>
<i style="left:1913px;top:138px;width:2px;height:10px;background:#6b7e96;"></i>
<i style="left:1915px;top:138px;width:2px;height:10px;background:#1b1b1b;"></i>
<i style="left:1903px;top:162px;width:2px;height:10px;background:#6b7e96;"></i>
<i style="left:1905px;top:162px;width:4px;height:10px;background:#1b1b1b;"></i>
<i style="left:1932px;top:138px;width:2px;height:10px;background:#6b7e96;"></i>
<i style="left:1934px;top:138px;width:3px;height:10px;background:#1b1b1b;"></i>
<i style="left:1949px;top:138px;width:2px;height:10px;background:#6b7e96;"></i>
<i style="left:1951px;top:138px;width:2px;height:10px;background:#1b1b1b;"></i>
<i style="left:1923px;top:162px;width:2px;height:10px;background:#6b7e96;"></i>
<i style="left:1925px;top:162px;width:3px;height:10px;background:#1b1b1b;"></i>
<i style="left:1941px;top:162px;width:2px;height:10px;background:#6b7e96;"></i>
<i style="left:1943px;top:162px;width:2px;height:10px;background:#1b1b1b;"></i>
<i style="left:1966px;top:138px;width:2px;height:10px;background:#6b7e96;"></i>
<i style="left:1968px;top:138px;width:2px;height:10px;background:#1b1b1b;"></i>
<i style="left:1982px;top:138px;width:2px;height:10px;background:#6b7e96;"></i>
<i style="left:1984px;top:138px;width:3px;height:10px;background:#1b1b1b;"></i>
<i style="left:1956px;top:162px;width:2px;height:10px;background:#6b7e96;"></i>
<i style="left:1958px;top:162px;width:4px;height:10px;background:#1b1b1b;"></i>
<i style="left:1973px;top:162px;width:2px;height:10px;background:#6b7e96;"></i>
<i style="left:1975px;top:162px;width:3px;height:10px;background:#1b1b1b;"></i>
<i style="left:2000px;top:138px;width:2px;height:10px;background:#6b7e96;"></i>
<i style="left:2002px;top:138px;width:3px;height:10px;background:#1b1b1b;"></i>
<i style="left:2017px;top:138px;width:2px;height:10px;background:#6b7e96;"></i>
<i style="left:2019px;top:138px;width:3px;height:10px;background:#1b1b1b;"></i>
<i style="left:1992px;top:162px;width:2px;height:10px;background:#6b7e96;"></i>
<i style="left:1994px;top:162px;width:2px;height:10px;background:#1b1b1b;"></i>
<i style="left:2008px;top:162px;width:2px;height:10px;background:#6b7e96;"></i>
<i style="left:2010px;top:162px;width:4px;height:10px;background:#1b1b1b;"></i>
<div style="left:1187px;top:104px;width:7px;height:34px;background:repeating-linear-gradient(135deg,#1d1d1d 0 4.25px,#445b7c 4.25px 8.5px);background-attachment:fixed"></div>
<div style="left:1187px;top:128px;width:7px;height:10px;background:linear-gradient(rgba(20,20,20,0),rgba(20,20,20,0.45))"></div>
<i style="left:1187px;top:138px;width:7px;height:36px;background:#b9d3f2;"></i>
<i style="left:1732px;top:108px;width:0px;height:0px;background:transparent;"></i>
<i style="left:294px;top:178px;width:2px;height:34px;background:#7f7f7f;"></i>
<i style="left:294px;top:178px;width:276px;height:2px;background:#7f7f7f;"></i>
<i style="left:296px;top:180px;width:274px;height:30px;background:#ffffff;"></i>
<i style="left:294px;top:210px;width:276px;height:2px;background:#7f7f7f;"></i>
<i style="left:294px;top:212px;width:276px;height:36px;background:#ffffff;"></i>
<i style="left:294px;top:212px;width:2px;height:36px;background:#a8a8a8;"></i>
<svg style="left:328px;top:212px" width="210" height="36"><path d="M1 0v36M35 0v36M70 0v36M105 0v36M139 0v36M174 0v36M209 0v36" stroke="#a8a8a8" stroke-width="2"/></svg>
<div style="left:296px;top:180px;width:274px;height:30px;overflow:hidden"><span style="left:5px;top:3.90px;font-size:20px;line-height:22.34px;color:#242424;white-space:nowrap;letter-spacing:0.6px">018(c) Drum Beat 90bpm - 8 Bars</span></div>
<svg style="left:296px;top:212px" width="275" height="36"><path d="M0 2.5 1 3.6 2 4.4 3 5.0 4 5.4 5 5.7 6 5.9 7 5.8 8 6.3 9 6.4 10 6.4 11 5.7 12 6.0 13 6.8 14 6.7 15 6.3 16 5.8 17 6.8 18 6.8 19 6.4 20 5.6 21 5.1 22 4.0 23 2.9 24 1.8 25 1.4 26 2.8 27 3.8 28 4.6 29 5.1 30 5.5 31 5.8 32 6.0 33 5.9 34 5.8 35 6.4 36 6.4 37 6.8 38 5.7 39 6.1 40 7.0 41 6.8 42 5.9 43 5.8 44 6.5 45 7.0 46 6.5 47 5.4 48 5.6 49 3.7 50 1.8 51 -0.1 52 1.6 53 3.5 54 5.4 55 6.4 56 5.7 57 6.2 58 6.7 59 7.0 60 6.1 61 5.8 62 6.5 63 6.6 64 6.8 65 5.6 66 6.0 67 7.0 68 6.9 69 5.9 70 5.4 71 6.8 72 6.7 73 5.8 74 4.7 75 3.6 76 2.5 77 1.4 78 2.0 79 3.3 80 4.2 81 4.8 82 5.3 83 5.5 84 5.9 85 6.1 86 6.2 87 5.9 88 5.6 89 6.5 90 6.7 91 6.7 92 5.7 93 6.2 94 6.8 95 6.9 96 6.3 97 5.6 98 6.8 99 6.7 100 6.8 101 4.8 102 2.9 103 1.0 104 0.5 105 2.4 106 4.3 107 6.2 108 6.9 109 6.3 110 5.7 111 6.2 112 6.6 113 6.9 114 6.0 115 5.8 116 6.4 117 6.9 118 6.8 119 5.4 120 6.3 121 6.6 122 6.6 123 6.0 124 5.9 125 6.4 126 5.3 127 4.2 128 3.1 129 2.0 130 1.1 131 2.6 132 3.6 133 4.4 134 5.0 135 5.4 136 5.8 137 5.9 138 6.1 139 6.3 140 6.4 141 6.2 142 5.4 143 6.7 144 6.7 145 6.4 146 5.4 147 6.1 148 7.0 149 7.0 150 6.1 151 5.8 152 6.5 153 6.0 154 4.1 155 2.2 156 0.3 157 1.2 158 3.1 159 5.0 160 5.7 161 6.7 162 6.8 163 6.3 164 5.6 165 5.9 166 7.0 167 6.6 168 5.9 169 5.6 170 6.6 171 6.8 172 6.4 173 5.9 174 6.0 175 6.8 176 6.9 177 6.0 178 5.5 179 4.9 180 3.8 181 2.7 182 1.6 183 1.7 184 3.0 185 4.0 186 4.7 187 5.2 188 5.6 189 5.9 190 6.1 191 5.6 192 5.9 193 6.4 194 6.4 195 6.0 196 5.5 197 6.6 198 7.0 199 6.7 200 5.6 201 6.3 202 7.0 203 6.9 204 6.1 205 5.6 206 5.2 207 3.3 208 1.4 209 0.1 210 2.0 211 3.9 212 5.8 213 5.9 214 5.4 215 6.4 216 7.0 217 6.6 218 5.8 219 6.0 220 7.0 221 6.9 222 6.3 223 5.8 224 6.3 225 6.6 226 6.6 227 5.5 228 6.1 229 6.8 230 6.9 231 5.6 232 4.5 233 3.4 234 2.3 235 1.2 236 2.3 237 3.5 238 4.3 239 4.9 240 5.4 241 5.7 242 5.9 243 6.1 244 6.2 245 5.8 246 6.3 247 6.5 248 6.9 249 5.9 250 5.4 251 6.4 252 6.6 253 6.4 254 5.4 255 5.9 256 6.6 257 7.0 258 6.2 259 4.5 260 2.6 261 0.7 262 0.8 263 2.7 264 4.6 265 6.9 266 6.9 267 6.1 268 5.6 269 6.5 270 6.8 271 6.7 272 5.7 273 6.2 274 6.2 274 11.4 273 11.4 272 11.9 271 10.9 270 10.8 269 11.1 268 12.0 267 11.5 266 10.7 265 10.7 264 13.0 263 14.9 262 16.8 261 16.9 260 15.0 259 13.1 258 11.4 257 10.6 256 11.0 255 11.7 254 12.2 253 11.2 252 11.0 251 11.2 250 12.2 249 11.7 248 10.7 247 11.1 246 11.3 245 11.8 244 11.4 243 11.5 242 11.7 241 11.9 240 12.2 239 12.7 238 13.3 237 14.1 236 15.3 235 16.4 234 15.3 233 14.2 232 13.1 231 12.0 230 10.7 229 10.8 228 11.5 227 12.1 226 11.0 225 11.0 224 11.3 223 11.8 222 11.3 221 10.7 220 10.6 219 11.6 218 11.8 217 11.0 216 10.6 215 11.2 214 12.2 213 11.7 212 11.8 211 13.7 210 15.6 209 17.5 208 16.2 207 14.3 206 12.4 205 12.0 204 11.5 203 10.7 202 10.6 201 11.3 200 12.0 199 10.9 198 10.6 197 11.0 196 12.1 195 11.6 194 11.2 193 11.2 192 11.7 191 12.0 190 11.5 189 11.7 188 12.0 187 12.4 186 12.9 185 13.6 184 14.6 183 15.9 182 16.0 181 14.9 180 13.8 179 12.7 178 12.1 177 11.6 176 10.7 175 10.8 174 11.6 173 11.7 172 11.2 171 10.8 170 11.0 169 12.0 168 11.7 167 11.0 166 10.6 165 11.7 164 12.0 163 11.3 162 10.8 161 10.9 160 11.9 159 12.6 158 14.5 157 16.4 156 17.3 155 15.4 154 13.5 153 11.6 152 11.1 151 11.8 150 11.5 149 10.6 148 10.6 147 11.5 146 12.2 145 11.2 144 10.9 143 10.9 142 12.2 141 11.4 140 11.2 139 11.3 138 11.5 137 11.7 136 11.8 135 12.2 134 12.6 133 13.2 132 14.0 131 15.0 130 16.5 129 15.6 128 14.5 127 13.4 126 12.3 125 11.2 124 11.7 123 11.6 122 11.0 121 11.0 120 11.3 119 12.2 118 10.8 117 10.7 116 11.2 115 11.8 114 11.6 113 10.7 112 11.0 111 11.4 110 11.9 109 11.3 108 10.7 107 11.4 106 13.3 105 15.2 104 17.1 103 16.6 102 14.7 101 12.8 100 10.8 99 10.9 98 10.8 97 12.0 96 11.3 95 10.7 94 10.8 93 11.4 92 11.9 91 10.9 90 10.9 89 11.1 88 12.0 87 11.7 86 11.4 85 11.5 84 11.7 83 12.1 82 12.3 81 12.8 80 13.4 79 14.3 78 15.6 77 16.2 76 15.1 75 14.0 74 12.9 73 11.8 72 10.9 71 10.8 70 12.2 69 11.7 68 10.7 67 10.6 66 11.6 65 12.0 64 10.8 63 11.0 62 11.1 61 11.8 60 11.5 59 10.6 58 10.9 57 11.4 56 11.9 55 11.2 54 12.2 53 14.1 52 16.0 51 17.7 50 15.8 49 13.9 48 12.0 47 12.2 46 11.1 45 10.6 44 11.1 43 11.8 42 11.7 41 10.8 40 10.6 39 11.5 38 11.9 37 10.8 36 11.2 35 11.2 34 11.8 33 11.7 32 11.6 31 11.8 30 12.1 29 12.5 28 13.0 27 13.8 26 14.8 25 16.2 24 15.8 23 14.7 22 13.6 21 12.5 20 12.0 19 11.2 18 10.8 17 10.8 16 11.8 15 11.3 14 10.9 13 10.8 12 11.6 11 11.9 10 11.2 9 11.2 8 11.3 7 11.8 6 11.7 5 11.9 4 12.2 3 12.6 2 13.2 1 14.0 0 15.1Z" fill="#1f1f1f"/><path d="M0 20.6 1 21.7 2 22.5 3 23.1 4 23.5 5 23.8 6 24.0 7 23.9 8 24.4 9 24.5 10 24.5 11 23.8 12 24.1 13 24.9 14 24.8 15 24.4 16 23.9 17 24.9 18 24.9 19 24.5 20 23.7 21 23.2 22 22.1 23 21.0 24 19.9 25 19.5 26 20.9 27 21.9 28 22.7 29 23.2 30 23.6 31 23.9 32 24.1 33 24.0 34 23.9 35 24.5 36 24.5 37 24.9 38 23.8 39 24.2 40 25.1 41 24.9 42 24.0 43 23.9 44 24.6 45 25.1 46 24.6 47 23.5 48 23.7 49 21.8 50 19.9 51 18.0 52 19.7 53 21.6 54 23.5 55 24.5 56 23.8 57 24.3 58 24.8 59 25.1 60 24.2 61 23.9 62 24.6 63 24.7 64 24.9 65 23.7 66 24.1 67 25.1 68 25.0 69 24.0 70 23.5 71 24.9 72 24.8 73 23.9 74 22.8 75 21.7 76 20.6 77 19.5 78 20.1 79 21.4 80 22.3 81 22.9 82 23.4 83 23.6 84 24.0 85 24.2 86 24.3 87 24.0 88 23.7 89 24.6 90 24.8 91 24.8 92 23.8 93 24.3 94 24.9 95 25.0 96 24.4 97 23.7 98 24.9 99 24.8 100 24.9 101 22.9 102 21.0 103 19.1 104 18.6 105 20.5 106 22.4 107 24.3 108 25.0 109 24.4 110 23.8 111 24.3 112 24.7 113 25.0 114 24.1 115 23.9 116 24.5 117 25.0 118 24.9 119 23.5 120 24.4 121 24.7 122 24.7 123 24.1 124 24.0 125 24.5 126 23.4 127 22.3 128 21.2 129 20.1 130 19.2 131 20.7 132 21.7 133 22.5 134 23.1 135 23.5 136 23.9 137 24.0 138 24.2 139 24.4 140 24.5 141 24.3 142 23.5 143 24.8 144 24.8 145 24.5 146 23.5 147 24.2 148 25.1 149 25.1 150 24.2 151 23.9 152 24.6 153 24.1 154 22.2 155 20.3 156 18.4 157 19.3 158 21.2 159 23.1 160 23.8 161 24.8 162 24.9 163 24.4 164 23.7 165 24.0 166 25.1 167 24.7 168 24.0 169 23.7 170 24.7 171 24.9 172 24.5 173 24.0 174 24.1 175 24.9 176 25.0 177 24.1 178 23.6 179 23.0 180 21.9 181 20.8 182 19.7 183 19.8 184 21.1 185 22.1 186 22.8 187 23.3 188 23.7 189 24.0 190 24.2 191 23.7 192 24.0 193 24.5 194 24.5 195 24.1 196 23.6 197 24.7 198 25.1 199 24.8 200 23.7 201 24.4 202 25.1 203 25.0 204 24.2 205 23.7 206 23.3 207 21.4 208 19.5 209 18.2 210 20.1 211 22.0 212 23.9 213 24.0 214 23.5 215 24.5 216 25.1 217 24.7 218 23.9 219 24.1 220 25.1 221 25.0 222 24.4 223 23.9 224 24.4 225 24.7 226 24.7 227 23.6 228 24.2 229 24.9 230 25.0 231 23.7 232 22.6 233 21.5 234 20.4 235 19.3 236 20.4 237 21.6 238 22.4 239 23.0 240 23.5 241 23.8 242 24.0 243 24.2 244 24.3 245 23.9 246 24.4 247 24.6 248 25.0 249 24.0 250 23.5 251 24.5 252 24.7 253 24.5 254 23.5 255 24.0 256 24.7 257 25.1 258 24.3 259 22.6 260 20.7 261 18.8 262 18.9 263 20.8 264 22.7 265 25.0 266 25.0 267 24.2 268 23.7 269 24.6 270 24.9 271 24.8 272 23.8 273 24.3 274 24.3 274 29.5 273 29.5 272 30.0 271 29.0 270 28.9 269 29.2 268 30.1 267 29.6 266 28.8 265 28.8 264 31.1 263 33.0 262 34.9 261 35.0 260 33.1 259 31.2 258 29.5 257 28.7 256 29.1 255 29.8 254 30.3 253 29.3 252 29.1 251 29.3 250 30.3 249 29.8 248 28.8 247 29.2 246 29.4 245 29.9 244 29.5 243 29.6 242 29.8 241 30.0 240 30.3 239 30.8 238 31.4 237 32.2 236 33.4 235 34.5 234 33.4 233 32.3 232 31.2 231 30.1 230 28.8 229 28.9 228 29.6 227 30.2 226 29.1 225 29.1 224 29.4 223 29.9 222 29.4 221 28.8 220 28.7 219 29.7 218 29.9 217 29.1 216 28.7 215 29.3 214 30.3 213 29.8 212 29.9 211 31.8 210 33.7 209 35.6 208 34.3 207 32.4 206 30.5 205 30.1 204 29.6 203 28.8 202 28.7 201 29.4 200 30.1 199 29.0 198 28.7 197 29.1 196 30.2 195 29.7 194 29.3 193 29.3 192 29.8 191 30.1 190 29.6 189 29.8 188 30.1 187 30.5 186 31.0 185 31.7 184 32.7 183 34.0 182 34.1 181 33.0 180 31.9 179 30.8 178 30.2 177 29.7 176 28.8 175 28.9 174 29.7 173 29.8 172 29.3 171 28.9 170 29.1 169 30.1 168 29.8 167 29.1 166 28.7 165 29.8 164 30.1 163 29.4 162 28.9 161 29.0 160 30.0 159 30.7 158 32.6 157 34.5 156 35.4 155 33.5 154 31.6 153 29.7 152 29.2 151 29.9 150 29.6 149 28.7 148 28.7 147 29.6 146 30.3 145 29.3 144 29.0 143 29.0 142 30.3 141 29.5 140 29.3 139 29.4 138 29.6 137 29.8 136 29.9 135 30.3 134 30.7 133 31.3 132 32.1 131 33.1 130 34.6 129 33.7 128 32.6 127 31.5 126 30.4 125 29.3 124 29.8 123 29.7 122 29.1 121 29.1 120 29.4 119 30.3 118 28.9 117 28.8 116 29.3 115 29.9 114 29.7 113 28.8 112 29.1 111 29.5 110 30.0 109 29.4 108 28.8 107 29.5 106 31.4 105 33.3 104 35.2 103 34.7 102 32.8 101 30.9 100 28.9 99 29.0 98 28.9 97 30.1 96 29.4 95 28.8 94 28.9 93 29.5 92 30.0 91 29.0 90 29.0 89 29.2 88 30.1 87 29.8 86 29.5 85 29.6 84 29.8 83 30.2 82 30.4 81 30.9 80 31.5 79 32.4 78 33.7 77 34.3 76 33.2 75 32.1 74 31.0 73 29.9 72 29.0 71 28.9 70 30.3 69 29.8 68 28.8 67 28.7 66 29.7 65 30.1 64 28.9 63 29.1 62 29.2 61 29.9 60 29.6 59 28.7 58 29.0 57 29.5 56 30.0 55 29.3 54 30.3 53 32.2 52 34.1 51 35.8 50 33.9 49 32.0 48 30.1 47 30.3 46 29.2 45 28.7 44 29.2 43 29.9 42 29.8 41 28.9 40 28.7 39 29.6 38 30.0 37 28.9 36 29.3 35 29.3 34 29.9 33 29.8 32 29.7 31 29.9 30 30.2 29 30.6 28 31.1 27 31.9 26 32.9 25 34.3 24 33.9 23 32.8 22 31.7 21 30.6 20 30.1 19 29.3 18 28.9 17 28.9 16 29.9 15 29.4 14 29.0 13 28.9 12 29.7 11 30.0 10 29.3 9 29.3 8 29.4 7 29.9 6 29.8 5 30.0 4 30.3 3 30.7 2 31.3 1 32.1 0 33.2Z" fill="#1f1f1f"/></svg>
<i style="left:570px;top:178px;width:2px;height:34px;background:#7f7f7f;"></i>
<i style="left:570px;top:178px;width:277px;height:2px;background:#7f7f7f;"></i>
<i style="left:572px;top:180px;width:275px;height:30px;background:#ffffff;"></i>
<i style="left:570px;top:210px;width:277px;height:2px;background:#7f7f7f;"></i>
<i style="left:570px;top:212px;width:277px;height:36px;background:#ffffff;"></i>
<i style="left:570px;top:212px;width:2px;height:36px;background:#a8a8a8;"></i>
<svg style="left:605px;top:212px" width="210" height="36"><path d="M1 0v36M36 0v36M70 0v36M105 0v36M139 0v36M174 0v36M209 0v36" stroke="#a8a8a8" stroke-width="2"/></svg>
<div style="left:572px;top:180px;width:275px;height:30px;overflow:hidden"><span style="left:5px;top:3.90px;font-size:20px;line-height:22.34px;color:#242424;white-space:nowrap;letter-spacing:0.6px">018(c) Drum Beat 90bpm - 8 Bars</span></div>
<svg style="left:572px;top:212px" width="276" height="36"><path d="M0 2.5 1 3.6 2 4.4 3 5.0 4 5.4 5 5.7 6 6.0 7 5.8 8 6.3 9 6.4 10 6.4 11 5.8 12 6.1 13 6.9 14 6.6 15 5.9 16 5.7 17 6.3 18 7.0 19 6.4 20 5.4 21 5.1 22 4.0 23 2.9 24 1.8 25 1.4 26 2.8 27 3.8 28 4.6 29 5.1 30 5.5 31 5.8 32 6.0 33 5.9 34 5.8 35 6.4 36 6.4 37 6.4 38 5.9 39 6.2 40 7.0 41 6.7 42 6.2 43 5.4 44 6.6 45 6.7 46 6.4 47 5.8 48 5.6 49 3.7 50 1.8 51 -0.1 52 1.6 53 3.5 54 5.4 55 6.5 56 5.6 57 6.1 58 7.0 59 6.7 60 5.9 61 5.7 62 6.7 63 6.6 64 6.5 65 5.7 66 6.3 67 6.7 68 6.9 69 6.1 70 5.7 71 6.5 72 6.7 73 5.8 74 4.7 75 3.6 76 2.5 77 1.4 78 2.0 79 3.3 80 4.2 81 4.8 82 5.3 83 5.6 84 5.9 85 6.1 86 6.2 87 6.3 88 5.8 89 6.5 90 6.6 91 6.5 92 5.5 93 5.9 94 6.6 95 7.0 96 5.9 97 5.8 98 6.4 99 6.6 100 6.5 101 4.8 102 2.9 103 1.0 104 0.5 105 2.4 106 4.3 107 6.2 108 7.0 109 6.7 110 5.5 111 6.1 112 6.9 113 6.8 114 6.1 115 5.6 116 6.6 117 6.6 118 6.4 119 5.8 120 6.2 121 7.0 122 6.9 123 6.3 124 5.5 125 6.4 126 5.3 127 4.2 128 3.1 129 2.0 130 1.1 131 2.6 132 3.6 133 4.4 134 5.0 135 5.4 136 5.8 137 5.7 138 6.1 139 6.3 140 6.4 141 6.3 142 5.6 143 6.5 144 6.7 145 6.6 146 5.7 147 6.1 148 6.8 149 6.8 150 6.3 151 5.8 152 6.3 153 6.0 154 4.1 155 2.2 156 0.3 157 1.2 158 3.1 159 5.0 160 5.9 161 6.6 162 6.6 163 6.5 164 5.4 165 6.3 166 6.6 167 6.6 168 6.3 169 5.6 170 6.4 171 6.9 172 6.5 173 5.5 174 6.0 175 6.8 176 7.0 177 6.1 178 5.8 179 4.9 180 3.8 181 2.7 182 1.6 183 1.7 184 3.0 185 4.0 186 4.7 187 5.2 188 5.6 189 5.9 190 6.1 191 5.9 192 6.0 193 6.4 194 6.4 195 6.2 196 5.6 197 6.7 198 6.8 199 6.7 200 5.8 201 6.2 202 6.7 203 6.9 204 6.2 205 5.7 206 5.2 207 3.3 208 1.4 209 0.1 210 2.0 211 3.9 212 5.8 213 6.2 214 5.6 215 6.4 216 7.0 217 6.5 218 5.8 219 6.1 220 6.9 221 6.6 222 5.9 223 5.4 224 6.6 225 6.7 226 6.7 227 5.5 228 6.0 229 6.8 230 6.9 231 5.6 232 4.5 233 3.4 234 2.3 235 1.2 236 2.3 237 3.5 238 4.3 239 4.9 240 5.4 241 5.7 242 5.9 243 6.1 244 6.2 245 5.4 246 6.3 247 6.5 248 6.7 249 6.2 250 5.4 251 6.4 252 6.9 253 6.4 254 5.4 255 6.1 256 7.0 257 7.0 258 5.9 259 4.5 260 2.6 261 0.7 262 0.8 263 2.7 264 4.6 265 6.6 266 6.6 267 6.1 268 5.7 269 6.8 270 6.8 271 6.4 272 5.8 273 6.2 274 7.0 275 7.0 275 10.6 274 10.6 273 11.4 272 11.8 271 11.2 270 10.8 269 10.8 268 11.9 267 11.5 266 11.0 265 11.0 264 13.0 263 14.9 262 16.8 261 16.9 260 15.0 259 13.1 258 11.7 257 10.6 256 10.6 255 11.5 254 12.2 253 11.2 252 10.7 251 11.2 250 12.2 249 11.4 248 10.9 247 11.1 246 11.3 245 12.2 244 11.4 243 11.5 242 11.7 241 11.9 240 12.2 239 12.7 238 13.3 237 14.1 236 15.3 235 16.4 234 15.3 233 14.2 232 13.1 231 12.0 230 10.7 229 10.8 228 11.6 227 12.1 226 10.9 225 10.9 224 11.0 223 12.2 222 11.7 221 11.0 220 10.7 219 11.5 218 11.8 217 11.1 216 10.6 215 11.2 214 12.0 213 11.4 212 11.8 211 13.7 210 15.6 209 17.5 208 16.2 207 14.3 206 12.4 205 11.9 204 11.4 203 10.7 202 10.9 201 11.4 200 11.8 199 10.9 198 10.8 197 10.9 196 12.0 195 11.4 194 11.2 193 11.2 192 11.6 191 11.7 190 11.5 189 11.7 188 12.0 187 12.4 186 12.9 185 13.6 184 14.6 183 15.9 182 16.0 181 14.9 180 13.8 179 12.7 178 11.8 177 11.5 176 10.6 175 10.8 174 11.6 173 12.1 172 11.1 171 10.7 170 11.2 169 12.0 168 11.3 167 11.0 166 11.0 165 11.3 164 12.2 163 11.1 162 11.0 161 11.0 160 11.7 159 12.6 158 14.5 157 16.4 156 17.3 155 15.4 154 13.5 153 11.6 152 11.3 151 11.8 150 11.3 149 10.8 148 10.8 147 11.5 146 11.9 145 11.0 144 10.9 143 11.1 142 12.0 141 11.3 140 11.2 139 11.3 138 11.5 137 11.9 136 11.8 135 12.2 134 12.6 133 13.2 132 14.0 131 15.0 130 16.5 129 15.6 128 14.5 127 13.4 126 12.3 125 11.2 124 12.1 123 11.3 122 10.7 121 10.6 120 11.4 119 11.8 118 11.2 117 11.0 116 11.0 115 12.0 114 11.5 113 10.8 112 10.7 111 11.5 110 12.1 109 10.9 108 10.6 107 11.4 106 13.3 105 15.2 104 17.1 103 16.6 102 14.7 101 12.8 100 11.1 99 11.0 98 11.2 97 11.8 96 11.7 95 10.6 94 11.0 93 11.7 92 12.1 91 11.1 90 11.0 89 11.1 88 11.8 87 11.3 86 11.4 85 11.5 84 11.7 83 12.0 82 12.3 81 12.8 80 13.4 79 14.3 78 15.6 77 16.2 76 15.1 75 14.0 74 12.9 73 11.8 72 10.9 71 11.1 70 11.9 69 11.5 68 10.7 67 10.9 66 11.3 65 11.9 64 11.1 63 11.0 62 10.9 61 11.9 60 11.7 59 10.9 58 10.6 57 11.5 56 12.0 55 11.1 54 12.2 53 14.1 52 16.0 51 17.7 50 15.8 49 13.9 48 12.0 47 11.8 46 11.2 45 10.9 44 11.0 43 12.2 42 11.4 41 10.9 40 10.6 39 11.4 38 11.7 37 11.2 36 11.2 35 11.2 34 11.8 33 11.7 32 11.6 31 11.8 30 12.1 29 12.5 28 13.0 27 13.8 26 14.8 25 16.2 24 15.8 23 14.7 22 13.6 21 12.5 20 12.2 19 11.2 18 10.6 17 11.3 16 11.9 15 11.7 14 11.0 13 10.7 12 11.5 11 11.8 10 11.2 9 11.2 8 11.3 7 11.8 6 11.6 5 11.9 4 12.2 3 12.6 2 13.2 1 14.0 0 15.1Z" fill="#1f1f1f"/><path d="M0 20.6 1 21.7 2 22.5 3 23.1 4 23.5 5 23.8 6 24.1 7 23.9 8 24.4 9 24.5 10 24.5 11 23.9 12 24.2 13 25.0 14 24.7 15 24.0 16 23.8 17 24.4 18 25.1 19 24.5 20 23.5 21 23.2 22 22.1 23 21.0 24 19.9 25 19.5 26 20.9 27 21.9 28 22.7 29 23.2 30 23.6 31 23.9 32 24.1 33 24.0 34 23.9 35 24.5 36 24.5 37 24.5 38 24.0 39 24.3 40 25.1 41 24.8 42 24.3 43 23.5 44 24.7 45 24.8 46 24.5 47 23.9 48 23.7 49 21.8 50 19.9 51 18.0 52 19.7 53 21.6 54 23.5 55 24.6 56 23.7 57 24.2 58 25.1 59 24.8 60 24.0 61 23.8 62 24.8 63 24.7 64 24.6 65 23.8 66 24.4 67 24.8 68 25.0 69 24.2 70 23.8 71 24.6 72 24.8 73 23.9 74 22.8 75 21.7 76 20.6 77 19.5 78 20.1 79 21.4 80 22.3 81 22.9 82 23.4 83 23.7 84 24.0 85 24.2 86 24.3 87 24.4 88 23.9 89 24.6 90 24.7 91 24.6 92 23.6 93 24.0 94 24.7 95 25.1 96 24.0 97 23.9 98 24.5 99 24.7 100 24.6 101 22.9 102 21.0 103 19.1 104 18.6 105 20.5 106 22.4 107 24.3 108 25.1 109 24.8 110 23.6 111 24.2 112 25.0 113 24.9 114 24.2 115 23.7 116 24.7 117 24.7 118 24.5 119 23.9 120 24.3 121 25.1 122 25.0 123 24.4 124 23.6 125 24.5 126 23.4 127 22.3 128 21.2 129 20.1 130 19.2 131 20.7 132 21.7 133 22.5 134 23.1 135 23.5 136 23.9 137 23.8 138 24.2 139 24.4 140 24.5 141 24.4 142 23.7 143 24.6 144 24.8 145 24.7 146 23.8 147 24.2 148 24.9 149 24.9 150 24.4 151 23.9 152 24.4 153 24.1 154 22.2 155 20.3 156 18.4 157 19.3 158 21.2 159 23.1 160 24.0 161 24.7 162 24.7 163 24.6 164 23.5 165 24.4 166 24.7 167 24.7 168 24.4 169 23.7 170 24.5 171 25.0 172 24.6 173 23.6 174 24.1 175 24.9 176 25.1 177 24.2 178 23.9 179 23.0 180 21.9 181 20.8 182 19.7 183 19.8 184 21.1 185 22.1 186 22.8 187 23.3 188 23.7 189 24.0 190 24.2 191 24.0 192 24.1 193 24.5 194 24.5 195 24.3 196 23.7 197 24.8 198 24.9 199 24.8 200 23.9 201 24.3 202 24.8 203 25.0 204 24.3 205 23.8 206 23.3 207 21.4 208 19.5 209 18.2 210 20.1 211 22.0 212 23.9 213 24.3 214 23.7 215 24.5 216 25.1 217 24.6 218 23.9 219 24.2 220 25.0 221 24.7 222 24.0 223 23.5 224 24.7 225 24.8 226 24.8 227 23.6 228 24.1 229 24.9 230 25.0 231 23.7 232 22.6 233 21.5 234 20.4 235 19.3 236 20.4 237 21.6 238 22.4 239 23.0 240 23.5 241 23.8 242 24.0 243 24.2 244 24.3 245 23.5 246 24.4 247 24.6 248 24.8 249 24.3 250 23.5 251 24.5 252 25.0 253 24.5 254 23.5 255 24.2 256 25.1 257 25.1 258 24.0 259 22.6 260 20.7 261 18.8 262 18.9 263 20.8 264 22.7 265 24.7 266 24.7 267 24.2 268 23.8 269 24.9 270 24.9 271 24.5 272 23.9 273 24.3 274 25.1 275 25.1 275 28.7 274 28.7 273 29.5 272 29.9 271 29.3 270 28.9 269 28.9 268 30.0 267 29.6 266 29.1 265 29.1 264 31.1 263 33.0 262 34.9 261 35.0 260 33.1 259 31.2 258 29.8 257 28.7 256 28.7 255 29.6 254 30.3 253 29.3 252 28.8 251 29.3 250 30.3 249 29.5 248 29.0 247 29.2 246 29.4 245 30.3 244 29.5 243 29.6 242 29.8 241 30.0 240 30.3 239 30.8 238 31.4 237 32.2 236 33.4 235 34.5 234 33.4 233 32.3 232 31.2 231 30.1 230 28.8 229 28.9 228 29.7 227 30.2 226 29.0 225 29.0 224 29.1 223 30.3 222 29.8 221 29.1 220 28.8 219 29.6 218 29.9 217 29.2 216 28.7 215 29.3 214 30.1 213 29.5 212 29.9 211 31.8 210 33.7 209 35.6 208 34.3 207 32.4 206 30.5 205 30.0 204 29.5 203 28.8 202 29.0 201 29.5 200 29.9 199 29.0 198 28.9 197 29.0 196 30.1 195 29.5 194 29.3 193 29.3 192 29.7 191 29.8 190 29.6 189 29.8 188 30.1 187 30.5 186 31.0 185 31.7 184 32.7 183 34.0 182 34.1 181 33.0 180 31.9 179 30.8 178 29.9 177 29.6 176 28.7 175 28.9 174 29.7 173 30.2 172 29.2 171 28.8 170 29.3 169 30.1 168 29.4 167 29.1 166 29.1 165 29.4 164 30.3 163 29.2 162 29.1 161 29.1 160 29.8 159 30.7 158 32.6 157 34.5 156 35.4 155 33.5 154 31.6 153 29.7 152 29.4 151 29.9 150 29.4 149 28.9 148 28.9 147 29.6 146 30.0 145 29.1 144 29.0 143 29.2 142 30.1 141 29.4 140 29.3 139 29.4 138 29.6 137 30.0 136 29.9 135 30.3 134 30.7 133 31.3 132 32.1 131 33.1 130 34.6 129 33.7 128 32.6 127 31.5 126 30.4 125 29.3 124 30.2 123 29.4 122 28.8 121 28.7 120 29.5 119 29.9 118 29.3 117 29.1 116 29.1 115 30.1 114 29.6 113 28.9 112 28.8 111 29.6 110 30.2 109 29.0 108 28.7 107 29.5 106 31.4 105 33.3 104 35.2 103 34.7 102 32.8 101 30.9 100 29.2 99 29.1 98 29.3 97 29.9 96 29.8 95 28.7 94 29.1 93 29.8 92 30.2 91 29.2 90 29.1 89 29.2 88 29.9 87 29.4 86 29.5 85 29.6 84 29.8 83 30.1 82 30.4 81 30.9 80 31.5 79 32.4 78 33.7 77 34.3 76 33.2 75 32.1 74 31.0 73 29.9 72 29.0 71 29.2 70 30.0 69 29.6 68 28.8 67 29.0 66 29.4 65 30.0 64 29.2 63 29.1 62 29.0 61 30.0 60 29.8 59 29.0 58 28.7 57 29.6 56 30.1 55 29.2 54 30.3 53 32.2 52 34.1 51 35.8 50 33.9 49 32.0 48 30.1 47 29.9 46 29.3 45 29.0 44 29.1 43 30.3 42 29.5 41 29.0 40 28.7 39 29.5 38 29.8 37 29.3 36 29.3 35 29.3 34 29.9 33 29.8 32 29.7 31 29.9 30 30.2 29 30.6 28 31.1 27 31.9 26 32.9 25 34.3 24 33.9 23 32.8 22 31.7 21 30.6 20 30.3 19 29.3 18 28.7 17 29.4 16 30.0 15 29.8 14 29.1 13 28.8 12 29.6 11 29.9 10 29.3 9 29.3 8 29.4 7 29.9 6 29.7 5 30.0 4 30.3 3 30.7 2 31.3 1 32.1 0 33.2Z" fill="#1f1f1f"/></svg>
<i style="left:1194px;top:178px;width:2px;height:34px;background:#7f7f7f;"></i>
<i style="left:1194px;top:178px;width:277px;height:2px;background:#7f7f7f;"></i>
<i style="left:1196px;top:180px;width:275px;height:30px;background:#ffffff;"></i>
<i style="left:1194px;top:210px;width:277px;height:2px;background:#7f7f7f;"></i>
<i style="left:1194px;top:212px;width:277px;height:36px;background:#ffffff;"></i>
<i style="left:1194px;top:212px;width:2px;height:36px;background:#a8a8a8;"></i>
<svg style="left:1229px;top:212px" width="209" height="36"><path d="M1 0v36M35 0v36M70 0v36M105 0v36M139 0v36M174 0v36M208 0v36" stroke="#a8a8a8" stroke-width="2"/></svg>
<div style="left:1196px;top:180px;width:275px;height:30px;overflow:hidden"><span style="left:5px;top:3.90px;font-size:20px;line-height:22.34px;color:#242424;white-space:nowrap;letter-spacing:0.6px">018(c) Drum Beat 90bpm - 8 Bars</span></div>
<svg style="left:1196px;top:212px" width="276" height="36"><path d="M0 2.5 1 3.6 2 4.4 3 5.0 4 5.4 5 5.7 6 6.0 7 5.5 8 6.3 9 6.4 10 6.4 11 5.7 12 6.0 13 6.8 14 6.7 15 6.2 16 5.4 17 6.8 18 6.7 19 6.6 20 5.9 21 5.1 22 4.0 23 2.9 24 1.8 25 1.4 26 2.8 27 3.8 28 4.6 29 5.1 30 5.5 31 5.8 32 6.0 33 6.1 34 5.5 35 6.3 36 6.4 37 6.6 38 5.7 39 6.2 40 6.8 41 6.6 42 6.1 43 5.5 44 6.4 45 6.6 46 6.5 47 5.6 48 5.6 49 3.7 50 1.8 51 -0.1 52 1.6 53 3.5 54 5.4 55 6.7 56 5.5 57 5.9 58 7.0 59 6.7 60 6.3 61 5.4 62 6.7 63 7.0 64 6.4 65 5.6 66 6.3 67 6.8 68 6.6 69 6.3 70 5.5 71 6.7 72 6.8 73 5.8 74 4.7 75 3.6 76 2.5 77 1.4 78 2.0 79 3.3 80 4.2 81 4.8 82 5.3 83 5.6 84 5.9 85 6.1 86 6.2 87 6.2 88 5.7 89 6.5 90 6.7 91 6.8 92 5.4 93 6.0 94 7.0 95 6.7 96 5.9 97 5.7 98 6.4 99 7.0 100 6.6 101 4.8 102 2.9 103 1.0 104 0.5 105 2.4 106 4.3 107 6.2 108 6.7 109 6.7 110 5.5 111 6.0 112 6.8 113 6.7 114 5.9 115 5.8 116 6.3 117 6.8 118 6.4 119 5.5 120 5.9 121 6.7 122 6.9 123 6.3 124 5.7 125 6.4 126 5.3 127 4.2 128 3.1 129 2.0 130 1.1 131 2.6 132 3.6 133 4.4 134 5.0 135 5.4 136 5.8 137 5.9 138 6.1 139 6.3 140 6.4 141 6.1 142 5.8 143 6.4 144 6.9 145 6.6 146 5.6 147 6.3 148 6.9 149 6.6 150 6.3 151 5.7 152 6.4 153 6.0 154 4.1 155 2.2 156 0.3 157 1.2 158 3.1 159 5.0 160 5.5 161 6.7 162 6.8 163 6.8 164 5.5 165 6.1 166 7.0 167 6.8 168 6.3 169 5.7 170 6.7 171 6.7 172 6.5 173 5.8 174 6.2 175 6.8 176 6.6 177 6.2 178 5.5 179 4.9 180 3.8 181 2.7 182 1.6 183 1.7 184 3.0 185 4.0 186 4.7 187 5.2 188 5.6 189 5.9 190 6.1 191 5.7 192 6.3 193 6.4 194 6.4 195 6.3 196 5.7 197 6.8 198 6.8 199 6.7 200 5.6 201 6.3 202 6.6 203 6.8 204 6.0 205 5.8 206 5.2 207 3.3 208 1.4 209 0.1 210 2.0 211 3.9 212 5.8 213 6.3 214 5.5 215 6.7 216 6.8 217 6.6 218 5.6 219 6.3 220 6.7 221 6.9 222 5.9 223 5.4 224 6.6 225 6.6 226 6.3 227 5.8 228 6.2 229 6.6 230 6.6 231 5.6 232 4.5 233 3.4 234 2.3 235 1.2 236 2.3 237 3.5 238 4.3 239 4.9 240 5.4 241 5.4 242 5.9 243 6.1 244 6.2 245 5.4 246 6.0 247 6.5 248 7.0 249 6.0 250 5.7 251 6.4 252 7.0 253 6.5 254 5.5 255 6.0 256 6.6 257 6.6 258 6.0 259 4.5 260 2.6 261 0.7 262 0.8 263 2.7 264 4.6 265 6.9 266 7.0 267 6.2 268 5.5 269 6.8 270 6.9 271 6.5 272 5.8 273 6.0 274 7.0 275 7.0 275 10.6 274 10.6 273 11.6 272 11.8 271 11.1 270 10.7 269 10.8 268 12.1 267 11.4 266 10.6 265 10.7 264 13.0 263 14.9 262 16.8 261 16.9 260 15.0 259 13.1 258 11.6 257 11.0 256 11.0 255 11.6 254 12.1 253 11.1 252 10.6 251 11.2 250 11.9 249 11.6 248 10.6 247 11.1 246 11.6 245 12.2 244 11.4 243 11.5 242 11.7 241 12.2 240 12.2 239 12.7 238 13.3 237 14.1 236 15.3 235 16.4 234 15.3 233 14.2 232 13.1 231 12.0 230 11.0 229 11.0 228 11.4 227 11.8 226 11.3 225 11.0 224 11.0 223 12.2 222 11.7 221 10.7 220 10.9 219 11.3 218 12.0 217 11.0 216 10.8 215 10.9 214 12.1 213 11.3 212 11.8 211 13.7 210 15.6 209 17.5 208 16.2 207 14.3 206 12.4 205 11.8 204 11.6 203 10.8 202 11.0 201 11.3 200 12.0 199 10.9 198 10.8 197 10.8 196 11.9 195 11.3 194 11.2 193 11.2 192 11.3 191 11.9 190 11.5 189 11.7 188 12.0 187 12.4 186 12.9 185 13.6 184 14.6 183 15.9 182 16.0 181 14.9 180 13.8 179 12.7 178 12.1 177 11.4 176 11.0 175 10.8 174 11.4 173 11.8 172 11.1 171 10.9 170 10.9 169 11.9 168 11.3 167 10.8 166 10.6 165 11.5 164 12.1 163 10.8 162 10.8 161 10.9 160 12.1 159 12.6 158 14.5 157 16.4 156 17.3 155 15.4 154 13.5 153 11.6 152 11.2 151 11.9 150 11.3 149 11.0 148 10.7 147 11.3 146 12.0 145 11.0 144 10.7 143 11.2 142 11.8 141 11.5 140 11.2 139 11.3 138 11.5 137 11.7 136 11.8 135 12.2 134 12.6 133 13.2 132 14.0 131 15.0 130 16.5 129 15.6 128 14.5 127 13.4 126 12.3 125 11.2 124 11.9 123 11.3 122 10.7 121 10.9 120 11.7 119 12.1 118 11.2 117 10.8 116 11.3 115 11.8 114 11.7 113 10.9 112 10.8 111 11.6 110 12.1 109 10.9 108 10.9 107 11.4 106 13.3 105 15.2 104 17.1 103 16.6 102 14.7 101 12.8 100 11.0 99 10.6 98 11.2 97 11.9 96 11.7 95 10.9 94 10.6 93 11.6 92 12.2 91 10.8 90 10.9 89 11.1 88 11.9 87 11.4 86 11.4 85 11.5 84 11.7 83 12.0 82 12.3 81 12.8 80 13.4 79 14.3 78 15.6 77 16.2 76 15.1 75 14.0 74 12.9 73 11.8 72 10.8 71 10.9 70 12.1 69 11.3 68 11.0 67 10.8 66 11.3 65 12.0 64 11.2 63 10.6 62 10.9 61 12.2 60 11.3 59 10.9 58 10.6 57 11.7 56 12.1 55 10.9 54 12.2 53 14.1 52 16.0 51 17.7 50 15.8 49 13.9 48 12.0 47 12.0 46 11.1 45 11.0 44 11.2 43 12.1 42 11.5 41 11.0 40 10.8 39 11.4 38 11.9 37 11.0 36 11.2 35 11.3 34 12.1 33 11.5 32 11.6 31 11.8 30 12.1 29 12.5 28 13.0 27 13.8 26 14.8 25 16.2 24 15.8 23 14.7 22 13.6 21 12.5 20 11.7 19 11.0 18 10.9 17 10.8 16 12.2 15 11.4 14 10.9 13 10.8 12 11.6 11 11.9 10 11.2 9 11.2 8 11.3 7 12.1 6 11.6 5 11.9 4 12.2 3 12.6 2 13.2 1 14.0 0 15.1Z" fill="#1f1f1f"/><path d="M0 20.6 1 21.7 2 22.5 3 23.1 4 23.5 5 23.8 6 24.1 7 23.6 8 24.4 9 24.5 10 24.5 11 23.8 12 24.1 13 24.9 14 24.8 15 24.3 16 23.5 17 24.9 18 24.8 19 24.7 20 24.0 21 23.2 22 22.1 23 21.0 24 19.9 25 19.5 26 20.9 27 21.9 28 22.7 29 23.2 30 23.6 31 23.9 32 24.1 33 24.2 34 23.6 35 24.4 36 24.5 37 24.7 38 23.8 39 24.3 40 24.9 41 24.7 42 24.2 43 23.6 44 24.5 45 24.7 46 24.6 47 23.7 48 23.7 49 21.8 50 19.9 51 18.0 52 19.7 53 21.6 54 23.5 55 24.8 56 23.6 57 24.0 58 25.1 59 24.8 60 24.4 61 23.5 62 24.8 63 25.1 64 24.5 65 23.7 66 24.4 67 24.9 68 24.7 69 24.4 70 23.6 71 24.8 72 24.9 73 23.9 74 22.8 75 21.7 76 20.6 77 19.5 78 20.1 79 21.4 80 22.3 81 22.9 82 23.4 83 23.7 84 24.0 85 24.2 86 24.3 87 24.3 88 23.8 89 24.6 90 24.8 91 24.9 92 23.5 93 24.1 94 25.1 95 24.8 96 24.0 97 23.8 98 24.5 99 25.1 100 24.7 101 22.9 102 21.0 103 19.1 104 18.6 105 20.5 106 22.4 107 24.3 108 24.8 109 24.8 110 23.6 111 24.1 112 24.9 113 24.8 114 24.0 115 23.9 116 24.4 117 24.9 118 24.5 119 23.6 120 24.0 121 24.8 122 25.0 123 24.4 124 23.8 125 24.5 126 23.4 127 22.3 128 21.2 129 20.1 130 19.2 131 20.7 132 21.7 133 22.5 134 23.1 135 23.5 136 23.9 137 24.0 138 24.2 139 24.4 140 24.5 141 24.2 142 23.9 143 24.5 144 25.0 145 24.7 146 23.7 147 24.4 148 25.0 149 24.7 150 24.4 151 23.8 152 24.5 153 24.1 154 22.2 155 20.3 156 18.4 157 19.3 158 21.2 159 23.1 160 23.6 161 24.8 162 24.9 163 24.9 164 23.6 165 24.2 166 25.1 167 24.9 168 24.4 169 23.8 170 24.8 171 24.8 172 24.6 173 23.9 174 24.3 175 24.9 176 24.7 177 24.3 178 23.6 179 23.0 180 21.9 181 20.8 182 19.7 183 19.8 184 21.1 185 22.1 186 22.8 187 23.3 188 23.7 189 24.0 190 24.2 191 23.8 192 24.4 193 24.5 194 24.5 195 24.4 196 23.8 197 24.9 198 24.9 199 24.8 200 23.7 201 24.4 202 24.7 203 24.9 204 24.1 205 23.9 206 23.3 207 21.4 208 19.5 209 18.2 210 20.1 211 22.0 212 23.9 213 24.4 214 23.6 215 24.8 216 24.9 217 24.7 218 23.7 219 24.4 220 24.8 221 25.0 222 24.0 223 23.5 224 24.7 225 24.7 226 24.4 227 23.9 228 24.3 229 24.7 230 24.7 231 23.7 232 22.6 233 21.5 234 20.4 235 19.3 236 20.4 237 21.6 238 22.4 239 23.0 240 23.5 241 23.5 242 24.0 243 24.2 244 24.3 245 23.5 246 24.1 247 24.6 248 25.1 249 24.1 250 23.8 251 24.5 252 25.1 253 24.6 254 23.6 255 24.1 256 24.7 257 24.7 258 24.1 259 22.6 260 20.7 261 18.8 262 18.9 263 20.8 264 22.7 265 25.0 266 25.1 267 24.3 268 23.6 269 24.9 270 25.0 271 24.6 272 23.9 273 24.1 274 25.1 275 25.1 275 28.7 274 28.7 273 29.7 272 29.9 271 29.2 270 28.8 269 28.9 268 30.2 267 29.5 266 28.7 265 28.8 264 31.1 263 33.0 262 34.9 261 35.0 260 33.1 259 31.2 258 29.7 257 29.1 256 29.1 255 29.7 254 30.2 253 29.2 252 28.7 251 29.3 250 30.0 249 29.7 248 28.7 247 29.2 246 29.7 245 30.3 244 29.5 243 29.6 242 29.8 241 30.3 240 30.3 239 30.8 238 31.4 237 32.2 236 33.4 235 34.5 234 33.4 233 32.3 232 31.2 231 30.1 230 29.1 229 29.1 228 29.5 227 29.9 226 29.4 225 29.1 224 29.1 223 30.3 222 29.8 221 28.8 220 29.0 219 29.4 218 30.1 217 29.1 216 28.9 215 29.0 214 30.2 213 29.4 212 29.9 211 31.8 210 33.7 209 35.6 208 34.3 207 32.4 206 30.5 205 29.9 204 29.7 203 28.9 202 29.1 201 29.4 200 30.1 199 29.0 198 28.9 197 28.9 196 30.0 195 29.4 194 29.3 193 29.3 192 29.4 191 30.0 190 29.6 189 29.8 188 30.1 187 30.5 186 31.0 185 31.7 184 32.7 183 34.0 182 34.1 181 33.0 180 31.9 179 30.8 178 30.2 177 29.5 176 29.1 175 28.9 174 29.5 173 29.9 172 29.2 171 29.0 170 29.0 169 30.0 168 29.4 167 28.9 166 28.7 165 29.6 164 30.2 163 28.9 162 28.9 161 29.0 160 30.2 159 30.7 158 32.6 157 34.5 156 35.4 155 33.5 154 31.6 153 29.7 152 29.3 151 30.0 150 29.4 149 29.1 148 28.8 147 29.4 146 30.1 145 29.1 144 28.8 143 29.3 142 29.9 141 29.6 140 29.3 139 29.4 138 29.6 137 29.8 136 29.9 135 30.3 134 30.7 133 31.3 132 32.1 131 33.1 130 34.6 129 33.7 128 32.6 127 31.5 126 30.4 125 29.3 124 30.0 123 29.4 122 28.8 121 29.0 120 29.8 119 30.2 118 29.3 117 28.9 116 29.4 115 29.9 114 29.8 113 29.0 112 28.9 111 29.7 110 30.2 109 29.0 108 29.0 107 29.5 106 31.4 105 33.3 104 35.2 103 34.7 102 32.8 101 30.9 100 29.1 99 28.7 98 29.3 97 30.0 96 29.8 95 29.0 94 28.7 93 29.7 92 30.3 91 28.9 90 29.0 89 29.2 88 30.0 87 29.5 86 29.5 85 29.6 84 29.8 83 30.1 82 30.4 81 30.9 80 31.5 79 32.4 78 33.7 77 34.3 76 33.2 75 32.1 74 31.0 73 29.9 72 28.9 71 29.0 70 30.2 69 29.4 68 29.1 67 28.9 66 29.4 65 30.1 64 29.3 63 28.7 62 29.0 61 30.3 60 29.4 59 29.0 58 28.7 57 29.8 56 30.2 55 29.0 54 30.3 53 32.2 52 34.1 51 35.8 50 33.9 49 32.0 48 30.1 47 30.1 46 29.2 45 29.1 44 29.3 43 30.2 42 29.6 41 29.1 40 28.9 39 29.5 38 30.0 37 29.1 36 29.3 35 29.4 34 30.2 33 29.6 32 29.7 31 29.9 30 30.2 29 30.6 28 31.1 27 31.9 26 32.9 25 34.3 24 33.9 23 32.8 22 31.7 21 30.6 20 29.8 19 29.1 18 29.0 17 28.9 16 30.3 15 29.5 14 29.0 13 28.9 12 29.7 11 30.0 10 29.3 9 29.3 8 29.4 7 30.2 6 29.7 5 30.0 4 30.3 3 30.7 2 31.3 1 32.1 0 33.2Z" fill="#1f1f1f"/></svg>
<i style="left:1471px;top:178px;width:2px;height:34px;background:#7f7f7f;"></i>
<i style="left:1471px;top:178px;width:277px;height:2px;background:#7f7f7f;"></i>
<i style="left:1473px;top:180px;width:275px;height:30px;background:#ffffff;"></i>
<i style="left:1471px;top:210px;width:277px;height:2px;background:#7f7f7f;"></i>
<i style="left:1471px;top:212px;width:277px;height:36px;background:#ffffff;"></i>
<i style="left:1471px;top:212px;width:2px;height:36px;background:#a8a8a8;"></i>
<svg style="left:1506px;top:212px" width="210" height="36"><path d="M1 0v36M35 0v36M70 0v36M105 0v36M139 0v36M174 0v36M209 0v36" stroke="#a8a8a8" stroke-width="2"/></svg>
<div style="left:1473px;top:180px;width:275px;height:30px;overflow:hidden"><span style="left:5px;top:3.90px;font-size:20px;line-height:22.34px;color:#242424;white-space:nowrap;letter-spacing:0.6px">018(c) Drum Beat 90bpm - 8 Bars</span></div>
<svg style="left:1473px;top:212px" width="276" height="36"><path d="M0 2.5 1 3.6 2 4.4 3 5.0 4 5.4 5 5.7 6 6.0 7 5.6 8 6.3 9 6.4 10 6.4 11 5.5 12 6.1 13 6.7 14 6.8 15 6.3 16 5.5 17 6.4 18 6.9 19 6.8 20 5.6 21 5.1 22 4.0 23 2.9 24 1.8 25 1.4 26 2.8 27 3.8 28 4.6 29 5.1 30 5.5 31 5.8 32 6.0 33 6.1 34 5.8 35 6.4 36 6.4 37 6.4 38 5.5 39 6.3 40 6.7 41 6.7 42 5.9 43 5.7 44 6.6 45 6.7 46 6.7 47 5.5 48 5.6 49 3.7 50 1.8 51 -0.1 52 1.6 53 3.5 54 5.4 55 6.5 56 5.8 57 6.1 58 6.7 59 6.6 60 6.0 61 5.9 62 6.3 63 6.7 64 6.8 65 5.8 66 6.3 67 6.7 68 7.0 69 5.9 70 5.8 71 6.5 72 6.8 73 5.8 74 4.7 75 3.6 76 2.5 77 1.4 78 2.0 79 3.3 80 4.2 81 4.8 82 5.3 83 5.5 84 5.9 85 6.1 86 6.2 87 5.9 88 5.5 89 6.5 90 6.7 91 6.8 92 5.8 93 5.9 94 6.8 95 6.7 96 6.1 97 5.8 98 6.5 99 6.6 100 6.7 101 4.8 102 2.9 103 1.0 104 0.5 105 2.4 106 4.3 107 6.2 108 6.6 109 6.7 110 5.8 111 6.2 112 6.9 113 6.6 114 6.2 115 5.7 116 6.8 117 7.0 118 6.5 119 5.6 120 6.1 121 6.6 122 6.6 123 5.9 124 5.6 125 6.4 126 5.3 127 4.2 128 3.1 129 2.0 130 1.1 131 2.6 132 3.6 133 4.4 134 5.0 135 5.4 136 5.8 137 5.7 138 6.1 139 6.3 140 6.4 141 6.0 142 5.8 143 6.8 144 6.9 145 6.5 146 5.7 147 6.0 148 7.0 149 6.7 150 6.3 151 5.8 152 6.5 153 6.0 154 4.1 155 2.2 156 0.3 157 1.2 158 3.1 159 5.0 160 5.4 161 6.4 162 6.8 163 6.4 164 5.6 165 6.0 166 6.8 167 6.8 168 6.2 169 5.4 170 6.5 171 6.6 172 6.5 173 5.9 174 6.3 175 6.6 176 6.7 177 5.9 178 5.4 179 4.9 180 3.8 181 2.7 182 1.6 183 1.7 184 3.0 185 4.0 186 4.7 187 5.2 188 5.6 189 5.9 190 6.1 191 5.8 192 5.9 193 6.4 194 6.4 195 6.0 196 5.5 197 6.6 198 6.9 199 6.4 200 5.8 201 6.1 202 6.9 203 6.6 204 6.2 205 5.6 206 5.2 207 3.3 208 1.4 209 0.1 210 2.0 211 3.9 212 5.8 213 5.9 214 5.6 215 6.5 216 6.6 217 6.7 218 5.6 219 5.9 220 7.0 221 6.9 222 5.9 223 5.5 224 6.6 225 7.0 226 6.4 227 5.7 228 6.0 229 6.9 230 7.0 231 5.6 232 4.5 233 3.4 234 2.3 235 1.2 236 2.3 237 3.5 238 4.3 239 4.9 240 5.4 241 5.5 242 5.9 243 6.1 244 6.2 245 5.5 246 6.0 247 6.5 248 6.8 249 5.9 250 5.7 251 6.8 252 6.9 253 6.8 254 5.4 255 5.9 256 7.0 257 6.7 258 6.2 259 4.5 260 2.6 261 0.7 262 0.8 263 2.7 264 4.6 265 6.6 266 6.7 267 6.2 268 5.5 269 6.8 270 7.0 271 6.7 272 5.8 273 5.9 274 6.7 275 6.7 275 10.9 274 10.9 273 11.7 272 11.8 271 10.9 270 10.6 269 10.8 268 12.1 267 11.4 266 10.9 265 11.0 264 13.0 263 14.9 262 16.8 261 16.9 260 15.0 259 13.1 258 11.4 257 10.9 256 10.6 255 11.7 254 12.2 253 10.8 252 10.7 251 10.8 250 11.9 249 11.7 248 10.8 247 11.1 246 11.6 245 12.1 244 11.4 243 11.5 242 11.7 241 12.1 240 12.2 239 12.7 238 13.3 237 14.1 236 15.3 235 16.4 234 15.3 233 14.2 232 13.1 231 12.0 230 10.6 229 10.7 228 11.6 227 11.9 226 11.2 225 10.6 224 11.0 223 12.1 222 11.7 221 10.7 220 10.6 219 11.7 218 12.0 217 10.9 216 11.0 215 11.1 214 12.0 213 11.7 212 11.8 211 13.7 210 15.6 209 17.5 208 16.2 207 14.3 206 12.4 205 12.0 204 11.4 203 11.0 202 10.7 201 11.5 200 11.8 199 11.2 198 10.7 197 11.0 196 12.1 195 11.6 194 11.2 193 11.2 192 11.7 191 11.8 190 11.5 189 11.7 188 12.0 187 12.4 186 12.9 185 13.6 184 14.6 183 15.9 182 16.0 181 14.9 180 13.8 179 12.7 178 12.2 177 11.7 176 10.9 175 11.0 174 11.3 173 11.7 172 11.1 171 11.0 170 11.1 169 12.2 168 11.4 167 10.8 166 10.8 165 11.6 164 12.0 163 11.2 162 10.8 161 11.2 160 12.2 159 12.6 158 14.5 157 16.4 156 17.3 155 15.4 154 13.5 153 11.6 152 11.1 151 11.8 150 11.3 149 10.9 148 10.6 147 11.6 146 11.9 145 11.1 144 10.7 143 10.8 142 11.8 141 11.6 140 11.2 139 11.3 138 11.5 137 11.9 136 11.8 135 12.2 134 12.6 133 13.2 132 14.0 131 15.0 130 16.5 129 15.6 128 14.5 127 13.4 126 12.3 125 11.2 124 12.0 123 11.7 122 11.0 121 11.0 120 11.5 119 12.0 118 11.1 117 10.6 116 10.8 115 11.9 114 11.4 113 11.0 112 10.7 111 11.4 110 11.8 109 10.9 108 11.0 107 11.4 106 13.3 105 15.2 104 17.1 103 16.6 102 14.7 101 12.8 100 10.9 99 11.0 98 11.1 97 11.8 96 11.5 95 10.9 94 10.8 93 11.7 92 11.8 91 10.8 90 10.9 89 11.1 88 12.1 87 11.7 86 11.4 85 11.5 84 11.7 83 12.1 82 12.3 81 12.8 80 13.4 79 14.3 78 15.6 77 16.2 76 15.1 75 14.0 74 12.9 73 11.8 72 10.8 71 11.1 70 11.8 69 11.7 68 10.6 67 10.9 66 11.3 65 11.8 64 10.8 63 10.9 62 11.3 61 11.7 60 11.6 59 11.0 58 10.9 57 11.5 56 11.8 55 11.1 54 12.2 53 14.1 52 16.0 51 17.7 50 15.8 49 13.9 48 12.0 47 12.1 46 10.9 45 10.9 44 11.0 43 11.9 42 11.7 41 10.9 40 10.9 39 11.3 38 12.1 37 11.2 36 11.2 35 11.2 34 11.8 33 11.5 32 11.6 31 11.8 30 12.1 29 12.5 28 13.0 27 13.8 26 14.8 25 16.2 24 15.8 23 14.7 22 13.6 21 12.5 20 12.0 19 10.8 18 10.7 17 11.2 16 12.1 15 11.3 14 10.8 13 10.9 12 11.5 11 12.1 10 11.2 9 11.2 8 11.3 7 12.0 6 11.6 5 11.9 4 12.2 3 12.6 2 13.2 1 14.0 0 15.1Z" fill="#1f1f1f"/><path d="M0 20.6 1 21.7 2 22.5 3 23.1 4 23.5 5 23.8 6 24.1 7 23.7 8 24.4 9 24.5 10 24.5 11 23.6 12 24.2 13 24.8 14 24.9 15 24.4 16 23.6 17 24.5 18 25.0 19 24.9 20 23.7 21 23.2 22 22.1 23 21.0 24 19.9 25 19.5 26 20.9 27 21.9 28 22.7 29 23.2 30 23.6 31 23.9 32 24.1 33 24.2 34 23.9 35 24.5 36 24.5 37 24.5 38 23.6 39 24.4 40 24.8 41 24.8 42 24.0 43 23.8 44 24.7 45 24.8 46 24.8 47 23.6 48 23.7 49 21.8 50 19.9 51 18.0 52 19.7 53 21.6 54 23.5 55 24.6 56 23.9 57 24.2 58 24.8 59 24.7 60 24.1 61 24.0 62 24.4 63 24.8 64 24.9 65 23.9 66 24.4 67 24.8 68 25.1 69 24.0 70 23.9 71 24.6 72 24.9 73 23.9 74 22.8 75 21.7 76 20.6 77 19.5 78 20.1 79 21.4 80 22.3 81 22.9 82 23.4 83 23.6 84 24.0 85 24.2 86 24.3 87 24.0 88 23.6 89 24.6 90 24.8 91 24.9 92 23.9 93 24.0 94 24.9 95 24.8 96 24.2 97 23.9 98 24.6 99 24.7 100 24.8 101 22.9 102 21.0 103 19.1 104 18.6 105 20.5 106 22.4 107 24.3 108 24.7 109 24.8 110 23.9 111 24.3 112 25.0 113 24.7 114 24.3 115 23.8 116 24.9 117 25.1 118 24.6 119 23.7 120 24.2 121 24.7 122 24.7 123 24.0 124 23.7 125 24.5 126 23.4 127 22.3 128 21.2 129 20.1 130 19.2 131 20.7 132 21.7 133 22.5 134 23.1 135 23.5 136 23.9 137 23.8 138 24.2 139 24.4 140 24.5 141 24.1 142 23.9 143 24.9 144 25.0 145 24.6 146 23.8 147 24.1 148 25.1 149 24.8 150 24.4 151 23.9 152 24.6 153 24.1 154 22.2 155 20.3 156 18.4 157 19.3 158 21.2 159 23.1 160 23.5 161 24.5 162 24.9 163 24.5 164 23.7 165 24.1 166 24.9 167 24.9 168 24.3 169 23.5 170 24.6 171 24.7 172 24.6 173 24.0 174 24.4 175 24.7 176 24.8 177 24.0 178 23.5 179 23.0 180 21.9 181 20.8 182 19.7 183 19.8 184 21.1 185 22.1 186 22.8 187 23.3 188 23.7 189 24.0 190 24.2 191 23.9 192 24.0 193 24.5 194 24.5 195 24.1 196 23.6 197 24.7 198 25.0 199 24.5 200 23.9 201 24.2 202 25.0 203 24.7 204 24.3 205 23.7 206 23.3 207 21.4 208 19.5 209 18.2 210 20.1 211 22.0 212 23.9 213 24.0 214 23.7 215 24.6 216 24.7 217 24.8 218 23.7 219 24.0 220 25.1 221 25.0 222 24.0 223 23.6 224 24.7 225 25.1 226 24.5 227 23.8 228 24.1 229 25.0 230 25.1 231 23.7 232 22.6 233 21.5 234 20.4 235 19.3 236 20.4 237 21.6 238 22.4 239 23.0 240 23.5 241 23.6 242 24.0 243 24.2 244 24.3 245 23.6 246 24.1 247 24.6 248 24.9 249 24.0 250 23.8 251 24.9 252 25.0 253 24.9 254 23.5 255 24.0 256 25.1 257 24.8 258 24.3 259 22.6 260 20.7 261 18.8 262 18.9 263 20.8 264 22.7 265 24.7 266 24.8 267 24.3 268 23.6 269 24.9 270 25.1 271 24.8 272 23.9 273 24.0 274 24.8 275 24.8 275 29.0 274 29.0 273 29.8 272 29.9 271 29.0 270 28.7 269 28.9 268 30.2 267 29.5 266 29.0 265 29.1 264 31.1 263 33.0 262 34.9 261 35.0 260 33.1 259 31.2 258 29.5 257 29.0 256 28.7 255 29.8 254 30.3 253 28.9 252 28.8 251 28.9 250 30.0 249 29.8 248 28.9 247 29.2 246 29.7 245 30.2 244 29.5 243 29.6 242 29.8 241 30.2 240 30.3 239 30.8 238 31.4 237 32.2 236 33.4 235 34.5 234 33.4 233 32.3 232 31.2 231 30.1 230 28.7 229 28.8 228 29.7 227 30.0 226 29.3 225 28.7 224 29.1 223 30.2 222 29.8 221 28.8 220 28.7 219 29.8 218 30.1 217 29.0 216 29.1 215 29.2 214 30.1 213 29.8 212 29.9 211 31.8 210 33.7 209 35.6 208 34.3 207 32.4 206 30.5 205 30.1 204 29.5 203 29.1 202 28.8 201 29.6 200 29.9 199 29.3 198 28.8 197 29.1 196 30.2 195 29.7 194 29.3 193 29.3 192 29.8 191 29.9 190 29.6 189 29.8 188 30.1 187 30.5 186 31.0 185 31.7 184 32.7 183 34.0 182 34.1 181 33.0 180 31.9 179 30.8 178 30.3 177 29.8 176 29.0 175 29.1 174 29.4 173 29.8 172 29.2 171 29.1 170 29.2 169 30.3 168 29.5 167 28.9 166 28.9 165 29.7 164 30.1 163 29.3 162 28.9 161 29.3 160 30.3 159 30.7 158 32.6 157 34.5 156 35.4 155 33.5 154 31.6 153 29.7 152 29.2 151 29.9 150 29.4 149 29.0 148 28.7 147 29.7 146 30.0 145 29.2 144 28.8 143 28.9 142 29.9 141 29.7 140 29.3 139 29.4 138 29.6 137 30.0 136 29.9 135 30.3 134 30.7 133 31.3 132 32.1 131 33.1 130 34.6 129 33.7 128 32.6 127 31.5 126 30.4 125 29.3 124 30.1 123 29.8 122 29.1 121 29.1 120 29.6 119 30.1 118 29.2 117 28.7 116 28.9 115 30.0 114 29.5 113 29.1 112 28.8 111 29.5 110 29.9 109 29.0 108 29.1 107 29.5 106 31.4 105 33.3 104 35.2 103 34.7 102 32.8 101 30.9 100 29.0 99 29.1 98 29.2 97 29.9 96 29.6 95 29.0 94 28.9 93 29.8 92 29.9 91 28.9 90 29.0 89 29.2 88 30.2 87 29.8 86 29.5 85 29.6 84 29.8 83 30.2 82 30.4 81 30.9 80 31.5 79 32.4 78 33.7 77 34.3 76 33.2 75 32.1 74 31.0 73 29.9 72 28.9 71 29.2 70 29.9 69 29.8 68 28.7 67 29.0 66 29.4 65 29.9 64 28.9 63 29.0 62 29.4 61 29.8 60 29.7 59 29.1 58 29.0 57 29.6 56 29.9 55 29.2 54 30.3 53 32.2 52 34.1 51 35.8 50 33.9 49 32.0 48 30.1 47 30.2 46 29.0 45 29.0 44 29.1 43 30.0 42 29.8 41 29.0 40 29.0 39 29.4 38 30.2 37 29.3 36 29.3 35 29.3 34 29.9 33 29.6 32 29.7 31 29.9 30 30.2 29 30.6 28 31.1 27 31.9 26 32.9 25 34.3 24 33.9 23 32.8 22 31.7 21 30.6 20 30.1 19 28.9 18 28.8 17 29.3 16 30.2 15 29.4 14 28.9 13 29.0 12 29.6 11 30.2 10 29.3 9 29.3 8 29.4 7 30.1 6 29.7 5 30.0 4 30.3 3 30.7 2 31.3 1 32.1 0 33.2Z" fill="#1f1f1f"/></svg>
<i style="left:1748px;top:178px;width:2px;height:34px;background:#7f7f7f;"></i>
<i style="left:1748px;top:178px;width:278px;height:2px;background:#7f7f7f;"></i>
<i style="left:1750px;top:180px;width:276px;height:30px;background:#ffffff;"></i>
<i style="left:1748px;top:210px;width:278px;height:2px;background:#7f7f7f;"></i>
<i style="left:1748px;top:212px;width:278px;height:36px;background:#ffffff;"></i>
<i style="left:1748px;top:212px;width:2px;height:36px;background:#a8a8a8;"></i>
<svg style="left:1783px;top:212px" width="210" height="36"><path d="M1 0v36M36 0v36M70 0v36M105 0v36M140 0v36M174 0v36M209 0v36" stroke="#a8a8a8" stroke-width="2"/></svg>
<div style="left:1750px;top:180px;width:276px;height:30px;overflow:hidden"><span style="left:5px;top:3.90px;font-size:20px;line-height:22.34px;color:#242424;white-space:nowrap;letter-spacing:0.6px">018(c) Drum Beat 90bpm - 8 Bars</span></div>
<svg style="left:1750px;top:212px" width="277" height="36"><path d="M0 2.5 1 3.6 2 4.4 3 5.0 4 5.4 5 5.7 6 5.9 7 5.7 8 6.3 9 6.4 10 6.4 11 5.6 12 6.1 13 6.9 14 6.6 15 6.1 16 5.4 17 6.4 18 7.0 19 6.7 20 5.6 21 5.1 22 4.0 23 2.9 24 1.8 25 1.4 26 2.8 27 3.8 28 4.6 29 5.1 30 5.5 31 5.8 32 6.0 33 5.9 34 5.4 35 6.4 36 6.4 37 6.4 38 5.6 39 6.3 40 6.6 41 6.8 42 6.3 43 5.7 44 6.6 45 6.9 46 6.3 47 5.8 48 5.6 49 3.7 50 1.8 51 -0.1 52 1.6 53 3.5 54 5.4 55 6.5 56 5.4 57 5.9 58 6.7 59 6.6 60 5.9 61 5.6 62 6.5 63 6.8 64 6.4 65 5.4 66 5.9 67 6.6 68 7.0 69 6.1 70 5.8 71 6.5 72 6.8 73 5.8 74 4.7 75 3.6 76 2.5 77 1.4 78 2.0 79 3.3 80 4.2 81 4.8 82 5.3 83 5.6 84 5.9 85 6.1 86 6.2 87 6.2 88 5.6 89 6.5 90 6.7 91 6.6 92 5.5 93 6.3 94 6.8 95 6.6 96 6.3 97 5.6 98 6.5 99 6.7 100 6.5 101 4.8 102 2.9 103 1.0 104 0.5 105 2.4 106 4.3 107 6.2 108 7.0 109 6.4 110 5.7 111 6.0 112 6.6 113 6.7 114 6.1 115 5.5 116 6.6 117 6.9 118 6.5 119 5.6 120 6.0 121 6.8 122 6.8 123 6.0 124 5.7 125 6.4 126 5.3 127 4.2 128 3.1 129 2.0 130 1.1 131 2.6 132 3.6 133 4.4 134 5.0 135 5.4 136 5.8 137 5.5 138 6.1 139 6.3 140 6.4 141 6.1 142 5.6 143 6.4 144 7.0 145 6.4 146 5.7 147 6.0 148 6.6 149 6.8 150 6.3 151 5.5 152 6.6 153 6.0 154 4.1 155 2.2 156 0.3 157 1.2 158 3.1 159 5.0 160 5.6 161 6.4 162 7.0 163 6.4 164 5.6 165 6.0 166 7.0 167 6.8 168 6.1 169 5.8 170 6.3 171 6.6 172 6.6 173 5.8 174 5.9 175 7.0 176 6.8 177 6.1 178 5.5 179 4.9 180 3.8 181 2.7 182 1.6 183 1.7 184 3.0 185 4.0 186 4.7 187 5.2 188 5.6 189 5.9 190 6.1 191 5.8 192 5.9 193 6.4 194 6.4 195 6.3 196 5.5 197 6.8 198 6.8 199 6.4 200 5.6 201 6.3 202 7.0 203 6.6 204 6.2 205 5.8 206 5.2 207 3.3 208 1.4 209 0.1 210 2.0 211 3.9 212 5.8 213 6.3 214 5.5 215 6.5 216 6.8 217 6.6 218 5.9 219 6.1 220 6.8 221 6.7 222 6.3 223 5.8 224 6.8 225 6.8 226 6.8 227 5.6 228 6.1 229 6.9 230 7.0 231 5.6 232 4.5 233 3.4 234 2.3 235 1.2 236 2.3 237 3.5 238 4.3 239 4.9 240 5.4 241 5.7 242 5.9 243 6.1 244 6.2 245 5.5 246 6.0 247 6.5 248 6.7 249 6.2 250 5.6 251 6.6 252 6.7 253 6.8 254 5.8 255 6.0 256 6.7 257 6.9 258 6.0 259 4.5 260 2.6 261 0.7 262 0.8 263 2.7 264 4.6 265 6.6 266 7.0 267 6.3 268 5.7 269 6.3 270 6.9 271 6.3 272 5.5 273 5.9 274 6.6 275 6.7 276 6.7 276 10.9 275 10.9 274 11.0 273 11.7 272 12.1 271 11.3 270 10.7 269 11.3 268 11.9 267 11.3 266 10.6 265 11.0 264 13.0 263 14.9 262 16.8 261 16.9 260 15.0 259 13.1 258 11.6 257 10.7 256 10.9 255 11.6 254 11.8 253 10.8 252 10.9 251 11.0 250 12.0 249 11.4 248 10.9 247 11.1 246 11.6 245 12.1 244 11.4 243 11.5 242 11.7 241 11.9 240 12.2 239 12.7 238 13.3 237 14.1 236 15.3 235 16.4 234 15.3 233 14.2 232 13.1 231 12.0 230 10.6 229 10.7 228 11.5 227 12.0 226 10.8 225 10.8 224 10.8 223 11.8 222 11.3 221 10.9 220 10.8 219 11.5 218 11.7 217 11.0 216 10.8 215 11.1 214 12.1 213 11.3 212 11.8 211 13.7 210 15.6 209 17.5 208 16.2 207 14.3 206 12.4 205 11.8 204 11.4 203 11.0 202 10.6 201 11.3 200 12.0 199 11.2 198 10.8 197 10.8 196 12.1 195 11.3 194 11.2 193 11.2 192 11.7 191 11.8 190 11.5 189 11.7 188 12.0 187 12.4 186 12.9 185 13.6 184 14.6 183 15.9 182 16.0 181 14.9 180 13.8 179 12.7 178 12.1 177 11.5 176 10.8 175 10.6 174 11.7 173 11.8 172 11.0 171 11.0 170 11.3 169 11.8 168 11.5 167 10.8 166 10.6 165 11.6 164 12.0 163 11.2 162 10.6 161 11.2 160 12.0 159 12.6 158 14.5 157 16.4 156 17.3 155 15.4 154 13.5 153 11.6 152 11.0 151 12.1 150 11.3 149 10.8 148 11.0 147 11.6 146 11.9 145 11.2 144 10.6 143 11.2 142 12.0 141 11.5 140 11.2 139 11.3 138 11.5 137 12.1 136 11.8 135 12.2 134 12.6 133 13.2 132 14.0 131 15.0 130 16.5 129 15.6 128 14.5 127 13.4 126 12.3 125 11.2 124 11.9 123 11.6 122 10.8 121 10.8 120 11.6 119 12.0 118 11.1 117 10.7 116 11.0 115 12.1 114 11.5 113 10.9 112 11.0 111 11.6 110 11.9 109 11.2 108 10.6 107 11.4 106 13.3 105 15.2 104 17.1 103 16.6 102 14.7 101 12.8 100 11.1 99 10.9 98 11.1 97 12.0 96 11.3 95 11.0 94 10.8 93 11.3 92 12.1 91 11.0 90 10.9 89 11.1 88 12.0 87 11.4 86 11.4 85 11.5 84 11.7 83 12.0 82 12.3 81 12.8 80 13.4 79 14.3 78 15.6 77 16.2 76 15.1 75 14.0 74 12.9 73 11.8 72 10.8 71 11.1 70 11.8 69 11.5 68 10.6 67 11.0 66 11.7 65 12.2 64 11.2 63 10.8 62 11.1 61 12.0 60 11.7 59 11.0 58 10.9 57 11.7 56 12.2 55 11.1 54 12.2 53 14.1 52 16.0 51 17.7 50 15.8 49 13.9 48 12.0 47 11.8 46 11.3 45 10.7 44 11.0 43 11.9 42 11.3 41 10.8 40 11.0 39 11.3 38 12.0 37 11.2 36 11.2 35 11.2 34 12.2 33 11.7 32 11.6 31 11.8 30 12.1 29 12.5 28 13.0 27 13.8 26 14.8 25 16.2 24 15.8 23 14.7 22 13.6 21 12.5 20 12.0 19 10.9 18 10.6 17 11.2 16 12.2 15 11.5 14 11.0 13 10.7 12 11.5 11 12.0 10 11.2 9 11.2 8 11.3 7 11.9 6 11.7 5 11.9 4 12.2 3 12.6 2 13.2 1 14.0 0 15.1Z" fill="#1f1f1f"/><path d="M0 20.6 1 21.7 2 22.5 3 23.1 4 23.5 5 23.8 6 24.0 7 23.8 8 24.4 9 24.5 10 24.5 11 23.7 12 24.2 13 25.0 14 24.7 15 24.2 16 23.5 17 24.5 18 25.1 19 24.8 20 23.7 21 23.2 22 22.1 23 21.0 24 19.9 25 19.5 26 20.9 27 21.9 28 22.7 29 23.2 30 23.6 31 23.9 32 24.1 33 24.0 34 23.5 35 24.5 36 24.5 37 24.5 38 23.7 39 24.4 40 24.7 41 24.9 42 24.4 43 23.8 44 24.7 45 25.0 46 24.4 47 23.9 48 23.7 49 21.8 50 19.9 51 18.0 52 19.7 53 21.6 54 23.5 55 24.6 56 23.5 57 24.0 58 24.8 59 24.7 60 24.0 61 23.7 62 24.6 63 24.9 64 24.5 65 23.5 66 24.0 67 24.7 68 25.1 69 24.2 70 23.9 71 24.6 72 24.9 73 23.9 74 22.8 75 21.7 76 20.6 77 19.5 78 20.1 79 21.4 80 22.3 81 22.9 82 23.4 83 23.7 84 24.0 85 24.2 86 24.3 87 24.3 88 23.7 89 24.6 90 24.8 91 24.7 92 23.6 93 24.4 94 24.9 95 24.7 96 24.4 97 23.7 98 24.6 99 24.8 100 24.6 101 22.9 102 21.0 103 19.1 104 18.6 105 20.5 106 22.4 107 24.3 108 25.1 109 24.5 110 23.8 111 24.1 112 24.7 113 24.8 114 24.2 115 23.6 116 24.7 117 25.0 118 24.6 119 23.7 120 24.1 121 24.9 122 24.9 123 24.1 124 23.8 125 24.5 126 23.4 127 22.3 128 21.2 129 20.1 130 19.2 131 20.7 132 21.7 133 22.5 134 23.1 135 23.5 136 23.9 137 23.6 138 24.2 139 24.4 140 24.5 141 24.2 142 23.7 143 24.5 144 25.1 145 24.5 146 23.8 147 24.1 148 24.7 149 24.9 150 24.4 151 23.6 152 24.7 153 24.1 154 22.2 155 20.3 156 18.4 157 19.3 158 21.2 159 23.1 160 23.7 161 24.5 162 25.1 163 24.5 164 23.7 165 24.1 166 25.1 167 24.9 168 24.2 169 23.9 170 24.4 171 24.7 172 24.7 173 23.9 174 24.0 175 25.1 176 24.9 177 24.2 178 23.6 179 23.0 180 21.9 181 20.8 182 19.7 183 19.8 184 21.1 185 22.1 186 22.8 187 23.3 188 23.7 189 24.0 190 24.2 191 23.9 192 24.0 193 24.5 194 24.5 195 24.4 196 23.6 197 24.9 198 24.9 199 24.5 200 23.7 201 24.4 202 25.1 203 24.7 204 24.3 205 23.9 206 23.3 207 21.4 208 19.5 209 18.2 210 20.1 211 22.0 212 23.9 213 24.4 214 23.6 215 24.6 216 24.9 217 24.7 218 24.0 219 24.2 220 24.9 221 24.8 222 24.4 223 23.9 224 24.9 225 24.9 226 24.9 227 23.7 228 24.2 229 25.0 230 25.1 231 23.7 232 22.6 233 21.5 234 20.4 235 19.3 236 20.4 237 21.6 238 22.4 239 23.0 240 23.5 241 23.8 242 24.0 243 24.2 244 24.3 245 23.6 246 24.1 247 24.6 248 24.8 249 24.3 250 23.7 251 24.7 252 24.8 253 24.9 254 23.9 255 24.1 256 24.8 257 25.0 258 24.1 259 22.6 260 20.7 261 18.8 262 18.9 263 20.8 264 22.7 265 24.7 266 25.1 267 24.4 268 23.8 269 24.4 270 25.0 271 24.4 272 23.6 273 24.0 274 24.7 275 24.8 276 24.8 276 29.0 275 29.0 274 29.1 273 29.8 272 30.2 271 29.4 270 28.8 269 29.4 268 30.0 267 29.4 266 28.7 265 29.1 264 31.1 263 33.0 262 34.9 261 35.0 260 33.1 259 31.2 258 29.7 257 28.8 256 29.0 255 29.7 254 29.9 253 28.9 252 29.0 251 29.1 250 30.1 249 29.5 248 29.0 247 29.2 246 29.7 245 30.2 244 29.5 243 29.6 242 29.8 241 30.0 240 30.3 239 30.8 238 31.4 237 32.2 236 33.4 235 34.5 234 33.4 233 32.3 232 31.2 231 30.1 230 28.7 229 28.8 228 29.6 227 30.1 226 28.9 225 28.9 224 28.9 223 29.9 222 29.4 221 29.0 220 28.9 219 29.6 218 29.8 217 29.1 216 28.9 215 29.2 214 30.2 213 29.4 212 29.9 211 31.8 210 33.7 209 35.6 208 34.3 207 32.4 206 30.5 205 29.9 204 29.5 203 29.1 202 28.7 201 29.4 200 30.1 199 29.3 198 28.9 197 28.9 196 30.2 195 29.4 194 29.3 193 29.3 192 29.8 191 29.9 190 29.6 189 29.8 188 30.1 187 30.5 186 31.0 185 31.7 184 32.7 183 34.0 182 34.1 181 33.0 180 31.9 179 30.8 178 30.2 177 29.6 176 28.9 175 28.7 174 29.8 173 29.9 172 29.1 171 29.1 170 29.4 169 29.9 168 29.6 167 28.9 166 28.7 165 29.7 164 30.1 163 29.3 162 28.7 161 29.3 160 30.1 159 30.7 158 32.6 157 34.5 156 35.4 155 33.5 154 31.6 153 29.7 152 29.1 151 30.2 150 29.4 149 28.9 148 29.1 147 29.7 146 30.0 145 29.3 144 28.7 143 29.3 142 30.1 141 29.6 140 29.3 139 29.4 138 29.6 137 30.2 136 29.9 135 30.3 134 30.7 133 31.3 132 32.1 131 33.1 130 34.6 129 33.7 128 32.6 127 31.5 126 30.4 125 29.3 124 30.0 123 29.7 122 28.9 121 28.9 120 29.7 119 30.1 118 29.2 117 28.8 116 29.1 115 30.2 114 29.6 113 29.0 112 29.1 111 29.7 110 30.0 109 29.3 108 28.7 107 29.5 106 31.4 105 33.3 104 35.2 103 34.7 102 32.8 101 30.9 100 29.2 99 29.0 98 29.2 97 30.1 96 29.4 95 29.1 94 28.9 93 29.4 92 30.2 91 29.1 90 29.0 89 29.2 88 30.1 87 29.5 86 29.5 85 29.6 84 29.8 83 30.1 82 30.4 81 30.9 80 31.5 79 32.4 78 33.7 77 34.3 76 33.2 75 32.1 74 31.0 73 29.9 72 28.9 71 29.2 70 29.9 69 29.6 68 28.7 67 29.1 66 29.8 65 30.3 64 29.3 63 28.9 62 29.2 61 30.1 60 29.8 59 29.1 58 29.0 57 29.8 56 30.3 55 29.2 54 30.3 53 32.2 52 34.1 51 35.8 50 33.9 49 32.0 48 30.1 47 29.9 46 29.4 45 28.8 44 29.1 43 30.0 42 29.4 41 28.9 40 29.1 39 29.4 38 30.1 37 29.3 36 29.3 35 29.3 34 30.3 33 29.8 32 29.7 31 29.9 30 30.2 29 30.6 28 31.1 27 31.9 26 32.9 25 34.3 24 33.9 23 32.8 22 31.7 21 30.6 20 30.1 19 29.0 18 28.7 17 29.3 16 30.3 15 29.6 14 29.1 13 28.8 12 29.6 11 30.1 10 29.3 9 29.3 8 29.4 7 30.0 6 29.8 5 30.0 4 30.3 3 30.7 2 31.3 1 32.1 0 33.2Z" fill="#1f1f1f"/></svg>
<i style="left:18px;top:252px;width:552px;height:2px;background:#7f7f7f;"></i>
<i style="left:18px;top:254px;width:552px;height:30px;background:#ffffff;"></i>
<i style="left:18px;top:284px;width:552px;height:2px;background:#7f7f7f;"></i>
<i style="left:18px;top:286px;width:552px;height:36px;background:#b9d3f2;"></i>
<svg style="left:50px;top:286px" width="488" height="36"><path d="M1 0v36M36 0v36M71 0v36M105 0v36M140 0v36M175 0v36M209 0v36M245 0v36M279 0v36M313 0v36M348 0v36M383 0v36M417 0v36M452 0v36M487 0v36" stroke="#8ea8c8" stroke-width="2"/></svg>
<i style="left:133px;top:287px;width:4px;height:9px;background:#1b1b1b;"></i>
<i style="left:142px;top:310px;width:2px;height:9px;background:#6b7e96;"></i>
<i style="left:144px;top:310px;width:2px;height:9px;background:#1b1b1b;"></i>
<i style="left:147px;top:310px;width:2px;height:9px;background:#1b1b1b;"></i>
<i style="left:272px;top:287px;width:4px;height:9px;background:#1b1b1b;"></i>
<i style="left:281px;top:310px;width:2px;height:9px;background:#6b7e96;"></i>
<i style="left:283px;top:310px;width:2px;height:9px;background:#1b1b1b;"></i>
<i style="left:286px;top:310px;width:2px;height:9px;background:#1b1b1b;"></i>
<i style="left:411px;top:287px;width:4px;height:9px;background:#1b1b1b;"></i>
<i style="left:420px;top:310px;width:2px;height:9px;background:#6b7e96;"></i>
<i style="left:422px;top:310px;width:2px;height:9px;background:#1b1b1b;"></i>
<i style="left:425px;top:310px;width:2px;height:9px;background:#1b1b1b;"></i>
<i style="left:570px;top:252px;width:2px;height:34px;background:#7f7f7f;"></i>
<i style="left:570px;top:252px;width:277px;height:2px;background:#7f7f7f;"></i>
<i style="left:572px;top:254px;width:275px;height:30px;background:#ffffff;"></i>
<i style="left:570px;top:284px;width:277px;height:2px;background:#7f7f7f;"></i>
<i style="left:570px;top:286px;width:277px;height:36px;background:#b9d3f2;"></i>
<i style="left:570px;top:286px;width:2px;height:36px;background:#63758c;"></i>
<svg style="left:605px;top:286px" width="210" height="36"><path d="M1 0v36M36 0v36M70 0v36M105 0v36M139 0v36M174 0v36M209 0v36" stroke="#8ea8c8" stroke-width="2"/></svg>
<i style="left:688px;top:287px;width:4px;height:9px;background:#1b1b1b;"></i>
<i style="left:697px;top:310px;width:2px;height:9px;background:#6b7e96;"></i>
<i style="left:699px;top:310px;width:2px;height:9px;background:#1b1b1b;"></i>
<i style="left:702px;top:310px;width:2px;height:9px;background:#1b1b1b;"></i>
<i style="left:826px;top:287px;width:4px;height:9px;background:#1b1b1b;"></i>
<i style="left:835px;top:310px;width:2px;height:9px;background:#6b7e96;"></i>
<i style="left:837px;top:310px;width:2px;height:9px;background:#1b1b1b;"></i>
<i style="left:840px;top:310px;width:2px;height:9px;background:#1b1b1b;"></i>
<i style="left:1194px;top:252px;width:2px;height:34px;background:#7f7f7f;"></i>
<i style="left:1194px;top:252px;width:277px;height:2px;background:#7f7f7f;"></i>
<i style="left:1196px;top:254px;width:275px;height:30px;background:#ffffff;"></i>
<i style="left:1194px;top:284px;width:277px;height:2px;background:#7f7f7f;"></i>
<i style="left:1194px;top:286px;width:277px;height:36px;background:#b9d3f2;"></i>
<i style="left:1194px;top:286px;width:2px;height:36px;background:#63758c;"></i>
<svg style="left:1229px;top:286px" width="209" height="36"><path d="M1 0v36M35 0v36M70 0v36M105 0v36M139 0v36M174 0v36M208 0v36" stroke="#8ea8c8" stroke-width="2"/></svg>
<i style="left:1311px;top:287px;width:4px;height:9px;background:#1b1b1b;"></i>
<i style="left:1320px;top:310px;width:2px;height:9px;background:#6b7e96;"></i>
<i style="left:1322px;top:310px;width:2px;height:9px;background:#1b1b1b;"></i>
<i style="left:1325px;top:310px;width:2px;height:9px;background:#1b1b1b;"></i>
<i style="left:1471px;top:252px;width:2px;height:34px;background:#7f7f7f;"></i>
<i style="left:1471px;top:252px;width:277px;height:2px;background:#7f7f7f;"></i>
<i style="left:1473px;top:254px;width:275px;height:30px;background:#ffffff;"></i>
<i style="left:1471px;top:284px;width:277px;height:2px;background:#7f7f7f;"></i>
<i style="left:1471px;top:286px;width:277px;height:36px;background:#b9d3f2;"></i>
<i style="left:1471px;top:286px;width:2px;height:36px;background:#63758c;"></i>
<svg style="left:1506px;top:286px" width="210" height="36"><path d="M1 0v36M35 0v36M70 0v36M105 0v36M139 0v36M174 0v36M209 0v36" stroke="#8ea8c8" stroke-width="2"/></svg>
<i style="left:1589px;top:287px;width:4px;height:9px;background:#1b1b1b;"></i>
<i style="left:1598px;top:310px;width:2px;height:9px;background:#6b7e96;"></i>
<i style="left:1600px;top:310px;width:2px;height:9px;background:#1b1b1b;"></i>
<i style="left:1603px;top:310px;width:2px;height:9px;background:#1b1b1b;"></i>
<i style="left:1727px;top:287px;width:4px;height:9px;background:#1b1b1b;"></i>
<i style="left:1736px;top:310px;width:2px;height:9px;background:#6b7e96;"></i>
<i style="left:1738px;top:310px;width:2px;height:9px;background:#1b1b1b;"></i>
<i style="left:1741px;top:310px;width:2px;height:9px;background:#1b1b1b;"></i>
<i style="left:1748px;top:252px;width:2px;height:34px;background:#7f7f7f;"></i>
<i style="left:1748px;top:252px;width:278px;height:2px;background:#7f7f7f;"></i>
<i style="left:1750px;top:254px;width:276px;height:30px;background:#ffffff;"></i>
<i style="left:1748px;top:284px;width:278px;height:2px;background:#7f7f7f;"></i>
<i style="left:1748px;top:286px;width:278px;height:36px;background:#b9d3f2;"></i>
<i style="left:1748px;top:286px;width:2px;height:36px;background:#63758c;"></i>
<svg style="left:1783px;top:286px" width="210" height="36"><path d="M1 0v36M36 0v36M70 0v36M105 0v36M140 0v36M174 0v36M209 0v36" stroke="#8ea8c8" stroke-width="2"/></svg>
<i style="left:1866px;top:287px;width:4px;height:9px;background:#1b1b1b;"></i>
<i style="left:1875px;top:310px;width:2px;height:9px;background:#6b7e96;"></i>
<i style="left:1877px;top:310px;width:2px;height:9px;background:#1b1b1b;"></i>
<i style="left:1880px;top:310px;width:2px;height:9px;background:#1b1b1b;"></i>
<i style="left:2004px;top:287px;width:4px;height:9px;background:#1b1b1b;"></i>
<i style="left:2013px;top:310px;width:2px;height:9px;background:#6b7e96;"></i>
<i style="left:2015px;top:310px;width:2px;height:9px;background:#1b1b1b;"></i>
<i style="left:2018px;top:310px;width:2px;height:9px;background:#1b1b1b;"></i>
<div style="left:847px;top:252px;width:49px;height:34px;background:repeating-linear-gradient(135deg,#1d1d1d 0 4.25px,#445b7c 4.25px 8.5px);background-attachment:fixed"></div>
<div style="left:847px;top:276px;width:49px;height:10px;background:linear-gradient(rgba(20,20,20,0),rgba(20,20,20,0.45))"></div>
<i style="left:847px;top:286px;width:49px;height:36px;background:#b9d3f2;"></i>
<svg style="left:847px;top:286px" width="37" height="36"><path d="M1 0v36M36 0v36" stroke="#8ea8c8" stroke-width="2"/></svg>
<div style="left:2026px;top:252px;width:50px;height:34px;background:repeating-linear-gradient(135deg,#1d1d1d 0 4.25px,#445b7c 4.25px 8.5px);background-attachment:fixed"></div>
<div style="left:2026px;top:276px;width:50px;height:10px;background:linear-gradient(rgba(20,20,20,0),rgba(20,20,20,0.45))"></div>
<i style="left:2026px;top:286px;width:50px;height:36px;background:#b9d3f2;"></i>
<svg style="left:2026px;top:286px" width="36" height="36"><path d="M1 0v36M35 0v36" stroke="#8ea8c8" stroke-width="2"/></svg>
<i style="left:570px;top:326px;width:2px;height:34px;background:#7f7f7f;"></i>
<i style="left:570px;top:326px;width:277px;height:2px;background:#7f7f7f;"></i>
<i style="left:572px;top:328px;width:275px;height:30px;background:#ffffff;"></i>
<i style="left:570px;top:358px;width:277px;height:2px;background:#7f7f7f;"></i>
<i style="left:570px;top:360px;width:277px;height:36px;background:#b9d3f2;"></i>
<i style="left:570px;top:360px;width:2px;height:36px;background:#63758c;"></i>
<svg style="left:605px;top:360px" width="210" height="36"><path d="M1 0v36M36 0v36M70 0v36M105 0v36M139 0v36M174 0v36M209 0v36" stroke="#8ea8c8" stroke-width="2"/></svg>
<div style="left:572px;top:328px;width:275px;height:30px;overflow:hidden"><span style="left:5px;top:3.90px;font-size:20px;line-height:22.34px;color:#242424;white-space:nowrap;letter-spacing:0.75px">91V_CC_90_drum_loop_version_2</span></div>
<svg style="left:572px;top:360px" width="276" height="36"><path d="M0 5.5 1 5.5 2 5.2 3 4.0 4 4.6 5 4.0 6 2.5 7 2.7 8 3.6 9 2.9 10 4.5 11 5.0 12 4.6 13 5.5 14 6.0 15 5.8 16 6.3 17 6.0 18 5.5 19 5.6 20 5.4 21 4.0 22 4.3 23 3.8 24 2.2 25 3.9 26 4.5 27 4.0 28 4.8 29 5.2 30 5.2 31 5.8 32 6.1 33 6.1 34 6.1 35 5.9 36 5.1 37 5.2 38 4.5 39 3.4 40 3.5 41 3.2 42 2.4 43 3.7 44 4.2 45 3.9 46 5.1 47 5.4 48 5.3 49 6.1 50 6.5 51 6.0 52 5.9 53 5.5 54 4.6 55 4.8 56 4.2 57 2.8 58 3.2 59 2.5 60 2.3 61 4.1 62 4.6 63 4.3 64 5.3 65 5.5 66 5.6 67 6.3 68 6.4 69 5.8 70 5.7 71 5.5 72 4.4 73 4.6 74 4.6 75 3.1 76 3.7 77 3.5 78 3.2 79 4.4 80 5.0 81 4.8 82 5.7 83 5.9 84 5.9 85 6.5 86 6.2 87 5.4 88 5.4 89 4.9 90 4.0 91 4.2 92 3.9 93 2.0 94 3.0 95 3.6 96 3.4 97 4.6 98 5.1 99 5.0 100 5.9 101 6.0 102 6.1 103 6.3 104 6.0 105 4.9 106 5.1 107 5.0 108 3.4 109 3.8 110 3.3 111 2.1 112 3.5 113 3.6 114 3.4 115 5.0 116 5.4 117 5.3 118 6.1 119 6.2 120 6.1 121 6.0 122 5.8 123 4.9 124 5.1 125 4.7 126 3.7 127 4.1 128 3.8 129 2.8 130 4.2 131 4.3 132 4.4 133 5.1 134 5.6 135 5.6 136 6.2 137 6.4 138 5.8 139 5.9 140 5.7 141 4.8 142 5.1 143 4.6 144 3.0 145 4.0 146 3.9 147 3.5 148 4.4 149 4.9 150 4.6 151 5.5 152 5.8 153 5.9 154 6.4 155 6.3 156 5.6 157 5.5 158 5.1 159 4.2 160 4.1 161 4.0 162 2.5 163 2.5 164 3.5 165 2.7 166 4.2 167 4.6 168 4.5 169 5.7 170 5.9 171 6.0 172 6.4 173 6.2 174 5.3 175 5.4 176 5.2 177 4.2 178 4.5 179 4.0 180 2.5 181 3.8 182 4.1 183 3.7 184 4.8 185 5.2 186 5.0 187 6.0 188 6.3 189 6.2 190 6.3 191 5.8 192 4.8 193 5.0 194 4.9 195 3.4 196 3.7 197 3.2 198 2.3 199 4.2 200 4.1 201 4.2 202 5.1 203 5.4 204 5.4 205 6.2 206 6.3 207 6.0 208 5.9 209 5.5 210 4.6 211 5.0 212 4.5 213 3.1 214 3.3 215 3.2 216 2.5 217 4.0 218 4.6 219 4.0 220 5.4 221 5.6 222 5.6 223 6.2 224 6.4 225 5.6 226 5.8 227 5.2 228 4.4 229 4.5 230 4.0 231 2.3 232 3.2 233 3.4 234 2.6 235 4.4 236 4.7 237 4.3 238 5.5 239 5.8 240 5.9 241 6.4 242 6.2 243 5.5 244 5.5 245 5.0 246 3.9 247 4.1 248 4.0 249 2.5 250 3.0 251 3.7 252 3.1 253 4.8 254 5.0 255 4.7 256 5.8 257 6.0 258 6.1 259 6.2 260 6.1 261 5.2 262 5.2 263 5.1 264 3.6 265 4.2 266 3.6 267 1.8 268 3.8 269 4.2 270 3.5 271 4.8 272 5.4 273 5.1 274 5.9 275 5.9 275 11.3 274 11.3 273 12.1 272 11.8 271 12.4 270 13.7 269 13.0 268 13.4 267 15.4 266 13.6 265 13.0 264 13.6 263 12.1 262 12.0 261 12.0 260 11.1 259 11.0 258 11.1 257 11.2 256 11.4 255 12.5 254 12.2 253 12.4 252 14.1 251 13.5 250 14.2 249 14.7 248 13.2 247 13.1 246 13.3 245 12.2 244 11.7 243 11.7 242 11.0 241 10.8 240 11.3 239 11.4 238 11.7 237 12.9 236 12.5 235 12.8 234 14.6 233 13.8 232 14.0 231 14.9 230 13.2 229 12.7 228 12.8 227 12.0 226 11.4 225 11.6 224 10.8 223 11.0 222 11.6 221 11.6 220 11.8 219 13.2 218 12.6 217 13.2 216 14.7 215 14.0 214 13.9 213 14.1 212 12.7 211 12.2 210 12.6 209 11.7 208 11.3 207 11.2 206 10.9 205 11.0 204 11.8 203 11.8 202 12.1 201 13.0 200 13.1 199 13.0 198 14.9 197 14.0 196 13.5 195 13.8 194 12.3 193 12.2 192 12.4 191 11.4 190 10.9 189 11.0 188 10.9 187 11.2 186 12.2 185 12.0 184 12.4 183 13.5 182 13.1 181 13.4 180 14.7 179 13.2 178 12.7 177 13.0 176 12.0 175 11.8 174 11.9 173 11.0 172 10.8 171 11.2 170 11.3 169 11.5 168 12.7 167 12.6 166 13.0 165 14.5 164 13.7 163 14.7 162 14.7 161 13.2 160 13.1 159 13.0 158 12.1 157 11.7 156 11.6 155 10.9 154 10.8 153 11.3 152 11.4 151 11.7 150 12.6 149 12.3 148 12.8 147 13.7 146 13.3 145 13.2 144 14.2 143 12.6 142 12.1 141 12.4 140 11.5 139 11.3 138 11.4 137 10.8 136 11.0 135 11.6 134 11.6 133 12.1 132 12.8 131 12.9 130 13.0 129 14.4 128 13.4 127 13.1 126 13.5 125 12.5 124 12.1 123 12.3 122 11.4 121 11.2 120 11.1 119 11.0 118 11.1 117 11.9 116 11.8 115 12.2 114 13.8 113 13.6 112 13.7 111 15.1 110 13.9 109 13.4 108 13.8 107 12.2 106 12.1 105 12.3 104 11.2 103 10.9 102 11.1 101 11.2 100 11.3 99 12.2 98 12.1 97 12.6 96 13.8 95 13.6 94 14.2 93 15.2 92 13.3 91 13.0 90 13.2 89 12.3 88 11.8 87 11.8 86 11.0 85 10.7 84 11.3 83 11.3 82 11.5 81 12.4 80 12.2 79 12.8 78 14.0 77 13.7 76 13.5 75 14.1 74 12.6 73 12.6 72 12.8 71 11.7 70 11.5 69 11.4 68 10.8 67 10.9 66 11.6 65 11.7 64 11.9 63 12.9 62 12.6 61 13.1 60 14.9 59 14.7 58 14.0 57 14.4 56 13.0 55 12.4 54 12.6 53 11.7 52 11.3 51 11.2 50 10.7 49 11.1 48 11.9 47 11.8 46 12.1 45 13.3 44 13.0 43 13.5 42 14.8 41 14.0 40 13.7 39 13.8 38 12.7 37 12.0 36 12.1 35 11.3 34 11.1 33 11.1 32 11.1 31 11.4 30 12.0 29 12.0 28 12.4 27 13.2 26 12.7 25 13.3 24 15.0 23 13.4 22 12.9 21 13.2 20 11.8 19 11.6 18 11.7 17 11.2 16 10.9 15 11.4 14 11.2 13 11.7 12 12.6 11 12.2 10 12.7 9 14.3 8 13.6 7 14.5 6 14.7 5 13.2 4 12.6 3 13.2 2 12.0 1 11.7 0 11.7Z" fill="#1f1f1f"/><path d="M0 22.9 1 22.9 2 22.6 3 21.4 4 22.0 5 21.4 6 19.9 7 20.1 8 21.0 9 20.3 10 21.9 11 22.4 12 22.0 13 22.9 14 23.4 15 23.2 16 23.7 17 23.4 18 22.9 19 23.0 20 22.8 21 21.4 22 21.7 23 21.2 24 19.6 25 21.3 26 21.9 27 21.4 28 22.2 29 22.6 30 22.6 31 23.2 32 23.5 33 23.5 34 23.5 35 23.3 36 22.5 37 22.6 38 21.9 39 20.8 40 20.9 41 20.6 42 19.8 43 21.1 44 21.6 45 21.3 46 22.5 47 22.8 48 22.7 49 23.5 50 23.9 51 23.4 52 23.3 53 22.9 54 22.0 55 22.2 56 21.6 57 20.2 58 20.6 59 19.9 60 19.7 61 21.5 62 22.0 63 21.7 64 22.7 65 22.9 66 23.0 67 23.7 68 23.8 69 23.2 70 23.1 71 22.9 72 21.8 73 22.0 74 22.0 75 20.5 76 21.1 77 20.9 78 20.6 79 21.8 80 22.4 81 22.2 82 23.1 83 23.3 84 23.3 85 23.9 86 23.6 87 22.8 88 22.8 89 22.3 90 21.4 91 21.6 92 21.3 93 19.4 94 20.4 95 21.0 96 20.8 97 22.0 98 22.5 99 22.4 100 23.3 101 23.4 102 23.5 103 23.7 104 23.4 105 22.3 106 22.5 107 22.4 108 20.8 109 21.2 110 20.7 111 19.5 112 20.9 113 21.0 114 20.8 115 22.4 116 22.8 117 22.7 118 23.5 119 23.6 120 23.5 121 23.4 122 23.2 123 22.3 124 22.5 125 22.1 126 21.1 127 21.5 128 21.2 129 20.2 130 21.6 131 21.7 132 21.8 133 22.5 134 23.0 135 23.0 136 23.6 137 23.8 138 23.2 139 23.3 140 23.1 141 22.2 142 22.5 143 22.0 144 20.4 145 21.4 146 21.3 147 20.9 148 21.8 149 22.3 150 22.0 151 22.9 152 23.2 153 23.3 154 23.8 155 23.7 156 23.0 157 22.9 158 22.5 159 21.6 160 21.5 161 21.4 162 19.9 163 19.9 164 20.9 165 20.1 166 21.6 167 22.0 168 21.9 169 23.1 170 23.3 171 23.4 172 23.8 173 23.6 174 22.7 175 22.8 176 22.6 177 21.6 178 21.9 179 21.4 180 19.9 181 21.2 182 21.5 183 21.1 184 22.2 185 22.6 186 22.4 187 23.4 188 23.7 189 23.6 190 23.7 191 23.2 192 22.2 193 22.4 194 22.3 195 20.8 196 21.1 197 20.6 198 19.7 199 21.6 200 21.5 201 21.6 202 22.5 203 22.8 204 22.8 205 23.6 206 23.7 207 23.4 208 23.3 209 22.9 210 22.0 211 22.4 212 21.9 213 20.5 214 20.7 215 20.6 216 19.9 217 21.4 218 22.0 219 21.4 220 22.8 221 23.0 222 23.0 223 23.6 224 23.8 225 23.0 226 23.2 227 22.6 228 21.8 229 21.9 230 21.4 231 19.7 232 20.6 233 20.8 234 20.0 235 21.8 236 22.1 237 21.7 238 22.9 239 23.2 240 23.3 241 23.8 242 23.6 243 22.9 244 22.9 245 22.4 246 21.3 247 21.5 248 21.4 249 19.9 250 20.4 251 21.1 252 20.5 253 22.2 254 22.4 255 22.1 256 23.2 257 23.4 258 23.5 259 23.6 260 23.5 261 22.6 262 22.6 263 22.5 264 21.0 265 21.6 266 21.0 267 19.2 268 21.2 269 21.6 270 20.9 271 22.2 272 22.8 273 22.5 274 23.3 275 23.3 275 28.7 274 28.7 273 29.5 272 29.2 271 29.8 270 31.1 269 30.4 268 30.8 267 32.8 266 31.0 265 30.4 264 31.0 263 29.5 262 29.4 261 29.4 260 28.5 259 28.4 258 28.5 257 28.6 256 28.8 255 29.9 254 29.6 253 29.8 252 31.5 251 30.9 250 31.6 249 32.1 248 30.6 247 30.5 246 30.7 245 29.6 244 29.1 243 29.1 242 28.4 241 28.2 240 28.7 239 28.8 238 29.1 237 30.3 236 29.9 235 30.2 234 32.0 233 31.2 232 31.4 231 32.3 230 30.6 229 30.1 228 30.2 227 29.4 226 28.8 225 29.0 224 28.2 223 28.4 222 29.0 221 29.0 220 29.2 219 30.6 218 30.0 217 30.6 216 32.1 215 31.4 214 31.3 213 31.5 212 30.1 211 29.6 210 30.0 209 29.1 208 28.7 207 28.6 206 28.3 205 28.4 204 29.2 203 29.2 202 29.5 201 30.4 200 30.5 199 30.4 198 32.3 197 31.4 196 30.9 195 31.2 194 29.7 193 29.6 192 29.8 191 28.8 190 28.3 189 28.4 188 28.3 187 28.6 186 29.6 185 29.4 184 29.8 183 30.9 182 30.5 181 30.8 180 32.1 179 30.6 178 30.1 177 30.4 176 29.4 175 29.2 174 29.3 173 28.4 172 28.2 171 28.6 170 28.7 169 28.9 168 30.1 167 30.0 166 30.4 165 31.9 164 31.1 163 32.1 162 32.1 161 30.6 160 30.5 159 30.4 158 29.5 157 29.1 156 29.0 155 28.3 154 28.2 153 28.7 152 28.8 151 29.1 150 30.0 149 29.7 148 30.2 147 31.1 146 30.7 145 30.6 144 31.6 143 30.0 142 29.5 141 29.8 140 28.9 139 28.7 138 28.8 137 28.2 136 28.4 135 29.0 134 29.0 133 29.5 132 30.2 131 30.3 130 30.4 129 31.8 128 30.8 127 30.5 126 30.9 125 29.9 124 29.5 123 29.7 122 28.8 121 28.6 120 28.5 119 28.4 118 28.5 117 29.3 116 29.2 115 29.6 114 31.2 113 31.0 112 31.1 111 32.5 110 31.3 109 30.8 108 31.2 107 29.6 106 29.5 105 29.7 104 28.6 103 28.3 102 28.5 101 28.6 100 28.7 99 29.6 98 29.5 97 30.0 96 31.2 95 31.0 94 31.6 93 32.6 92 30.7 91 30.4 90 30.6 89 29.7 88 29.2 87 29.2 86 28.4 85 28.1 84 28.7 83 28.7 82 28.9 81 29.8 80 29.6 79 30.2 78 31.4 77 31.1 76 30.9 75 31.5 74 30.0 73 30.0 72 30.2 71 29.1 70 28.9 69 28.8 68 28.2 67 28.3 66 29.0 65 29.1 64 29.3 63 30.3 62 30.0 61 30.5 60 32.3 59 32.1 58 31.4 57 31.8 56 30.4 55 29.8 54 30.0 53 29.1 52 28.7 51 28.6 50 28.1 49 28.5 48 29.3 47 29.2 46 29.5 45 30.7 44 30.4 43 30.9 42 32.2 41 31.4 40 31.1 39 31.2 38 30.1 37 29.4 36 29.5 35 28.7 34 28.5 33 28.5 32 28.5 31 28.8 30 29.4 29 29.4 28 29.8 27 30.6 26 30.1 25 30.7 24 32.4 23 30.8 22 30.3 21 30.6 20 29.2 19 29.0 18 29.1 17 28.6 16 28.3 15 28.8 14 28.6 13 29.1 12 30.0 11 29.6 10 30.1 9 31.7 8 31.0 7 31.9 6 32.1 5 30.6 4 30.0 3 30.6 2 29.4 1 29.1 0 29.1Z" fill="#1f1f1f"/></svg>
<i style="left:709px;top:328px;width:2px;height:6px;background:#1b1b1b;"></i>
<i style="left:709px;top:390px;width:2px;height:6px;background:#1b1b1b;"></i>
<i style="left:1194px;top:326px;width:2px;height:34px;background:#7f7f7f;"></i>
<i style="left:1194px;top:326px;width:277px;height:2px;background:#7f7f7f;"></i>
<i style="left:1196px;top:328px;width:275px;height:30px;background:#ffffff;"></i>
<i style="left:1194px;top:358px;width:277px;height:2px;background:#7f7f7f;"></i>
<i style="left:1194px;top:360px;width:277px;height:36px;background:#b9d3f2;"></i>
<i style="left:1194px;top:360px;width:2px;height:36px;background:#63758c;"></i>
<svg style="left:1229px;top:360px" width="209" height="36"><path d="M1 0v36M35 0v36M70 0v36M105 0v36M139 0v36M174 0v36M208 0v36" stroke="#8ea8c8" stroke-width="2"/></svg>
<div style="left:1196px;top:328px;width:275px;height:30px;overflow:hidden"><span style="left:5px;top:3.90px;font-size:20px;line-height:22.34px;color:#242424;white-space:nowrap;letter-spacing:0.75px">91V_CC_90_drum_loop_version_2</span></div>
<svg style="left:1196px;top:360px" width="276" height="36"><path d="M0 5.5 1 5.6 2 5.4 3 4.2 4 4.7 5 4.3 6 3.1 7 3.7 8 4.0 9 3.3 10 4.9 11 5.0 12 4.6 13 5.9 14 6.2 15 5.9 16 6.4 17 6.1 18 5.3 19 5.2 20 4.8 21 3.6 22 3.9 23 3.5 24 1.9 25 3.6 26 3.9 27 3.3 28 4.9 29 5.2 30 5.0 31 5.9 32 6.2 33 6.1 34 6.2 35 5.9 36 5.2 37 5.2 38 4.9 39 3.5 40 3.9 41 4.1 42 2.6 43 4.0 44 4.3 45 4.2 46 5.0 47 5.6 48 5.3 49 6.2 50 6.3 51 5.8 52 6.0 53 5.7 54 4.5 55 4.6 56 4.4 57 2.8 58 3.0 59 2.6 60 2.1 61 4.1 62 4.1 63 4.1 64 5.3 65 5.4 66 5.7 67 6.4 68 6.3 69 5.7 70 5.7 71 5.4 72 4.3 73 4.3 74 4.0 75 2.4 76 2.8 77 2.9 78 2.5 79 4.2 80 4.5 81 4.4 82 5.4 83 5.9 84 5.9 85 6.4 86 6.1 87 5.5 88 5.4 89 5.1 90 4.0 91 4.4 92 3.7 93 2.6 94 3.0 95 3.8 96 3.2 97 4.6 98 4.9 99 4.7 100 5.9 101 6.2 102 6.2 103 6.2 104 5.9 105 5.2 106 5.4 107 5.0 108 3.9 109 4.3 110 3.8 111 2.1 112 3.6 113 3.9 114 3.9 115 5.1 116 5.4 117 5.2 118 6.0 119 6.4 120 6.1 121 6.0 122 5.8 123 4.9 124 5.0 125 4.7 126 3.2 127 3.9 128 3.2 129 2.3 130 3.8 131 4.5 132 4.0 133 5.1 134 5.6 135 5.3 136 6.3 137 6.5 138 5.8 139 5.9 140 5.3 141 4.2 142 4.7 143 4.1 144 2.4 145 2.7 146 2.9 147 2.6 148 4.1 149 4.7 150 4.5 151 5.4 152 5.9 153 5.7 154 6.4 155 6.3 156 5.4 157 5.7 158 5.2 159 4.1 160 4.0 161 3.6 162 2.4 163 3.0 164 3.4 165 2.8 166 4.1 167 4.8 168 4.7 169 5.6 170 6.1 171 5.9 172 6.2 173 6.0 174 5.2 175 5.3 176 4.9 177 3.8 178 3.8 179 3.3 180 2.2 181 3.3 182 3.6 183 3.5 184 4.7 185 5.2 186 4.9 187 6.0 188 6.1 189 6.2 190 6.1 191 5.7 192 4.7 193 5.3 194 4.7 195 3.5 196 3.6 197 3.4 198 2.1 199 3.8 200 3.9 201 3.9 202 5.0 203 5.5 204 5.2 205 6.0 206 6.4 207 6.0 208 6.1 209 5.7 210 4.7 211 4.6 212 4.5 213 3.1 214 3.5 215 3.1 216 2.9 217 3.9 218 4.7 219 4.1 220 5.3 221 5.7 222 5.7 223 6.3 224 6.3 225 5.8 226 5.8 227 5.6 228 4.5 229 4.5 230 4.5 231 3.1 232 3.5 233 3.6 234 3.3 235 4.5 236 4.9 237 4.8 238 5.7 239 6.1 240 5.9 241 6.3 242 6.3 243 5.3 244 5.5 245 5.2 246 4.4 247 4.7 248 4.1 249 2.7 250 3.7 251 4.1 252 3.8 253 4.9 254 5.4 255 5.2 256 5.9 257 6.1 258 6.0 259 6.4 260 6.1 261 5.2 262 5.2 263 5.1 264 3.7 265 4.2 266 3.6 267 2.0 268 3.7 269 4.3 270 3.5 271 5.1 272 5.2 273 5.3 274 6.0 275 6.0 275 11.2 274 11.2 273 11.9 272 12.0 271 12.1 270 13.7 269 12.9 268 13.5 267 15.2 266 13.6 265 13.0 264 13.5 263 12.1 262 12.0 261 12.0 260 11.1 259 10.8 258 11.2 257 11.1 256 11.3 255 12.0 254 11.8 253 12.3 252 13.4 251 13.1 250 13.5 249 14.5 248 13.1 247 12.5 246 12.8 245 12.0 244 11.7 243 11.9 242 10.9 241 10.9 240 11.3 239 11.1 238 11.5 237 12.4 236 12.3 235 12.7 234 13.9 233 13.6 232 13.7 231 14.1 230 12.7 229 12.7 228 12.7 227 11.6 226 11.4 225 11.4 224 10.9 223 10.9 222 11.5 221 11.5 220 11.9 219 13.1 218 12.5 217 13.3 216 14.3 215 14.1 214 13.7 213 14.1 212 12.7 211 12.6 210 12.5 209 11.5 208 11.1 207 11.2 206 10.8 205 11.2 204 12.0 203 11.7 202 12.2 201 13.3 200 13.3 199 13.4 198 15.1 197 13.8 196 13.6 195 13.7 194 12.5 193 11.9 192 12.5 191 11.5 190 11.1 189 11.0 188 11.1 187 11.2 186 12.3 185 12.0 184 12.5 183 13.7 182 13.6 181 13.9 180 15.0 179 13.9 178 13.4 177 13.4 176 12.3 175 11.9 174 12.0 173 11.2 172 11.0 171 11.3 170 11.1 169 11.6 168 12.5 167 12.4 166 13.1 165 14.4 164 13.8 163 14.2 162 14.8 161 13.6 160 13.2 159 13.1 158 12.0 157 11.5 156 11.8 155 10.9 154 10.8 153 11.5 152 11.3 151 11.8 150 12.7 149 12.5 148 13.1 147 14.6 146 14.3 145 14.5 144 14.8 143 13.1 142 12.5 141 13.0 140 11.9 139 11.3 138 11.4 137 10.7 136 10.9 135 11.9 134 11.6 133 12.1 132 13.2 131 12.7 130 13.4 129 14.9 128 14.0 127 13.3 126 14.0 125 12.5 124 12.2 123 12.3 122 11.4 121 11.2 120 11.1 119 10.8 118 11.2 117 12.0 116 11.8 115 12.1 114 13.3 113 13.3 112 13.6 111 15.1 110 13.4 109 12.9 108 13.3 107 12.2 106 11.8 105 12.0 104 11.3 103 11.0 102 11.0 101 11.0 100 11.3 99 12.5 98 12.3 97 12.6 96 14.0 95 13.4 94 14.2 93 14.6 92 13.5 91 12.8 90 13.2 89 12.1 88 11.8 87 11.7 86 11.1 85 10.8 84 11.3 83 11.3 82 11.8 81 12.8 80 12.7 79 13.0 78 14.7 77 14.3 76 14.4 75 14.8 74 13.2 73 12.9 72 12.9 71 11.8 70 11.5 69 11.5 68 10.9 67 10.8 66 11.5 65 11.8 64 11.9 63 13.1 62 13.1 61 13.1 60 15.1 59 14.6 58 14.2 57 14.4 56 12.8 55 12.6 54 12.7 53 11.5 52 11.2 51 11.4 50 10.9 49 11.0 48 11.9 47 11.6 46 12.2 45 13.0 44 12.9 43 13.2 42 14.6 41 13.1 40 13.3 39 13.7 38 12.3 37 12.0 36 12.0 35 11.3 34 11.0 33 11.1 32 11.0 31 11.3 30 12.2 29 12.0 28 12.3 27 13.9 26 13.3 25 13.6 24 15.3 23 13.7 22 13.3 21 13.6 20 12.4 19 12.0 18 11.9 17 11.1 16 10.8 15 11.3 14 11.0 13 11.3 12 12.6 11 12.2 10 12.3 9 13.9 8 13.2 7 13.5 6 14.1 5 12.9 4 12.5 3 13.0 2 11.8 1 11.6 0 11.7Z" fill="#1f1f1f"/><path d="M0 22.9 1 23.0 2 22.8 3 21.6 4 22.1 5 21.7 6 20.5 7 21.1 8 21.4 9 20.7 10 22.3 11 22.4 12 22.0 13 23.3 14 23.6 15 23.3 16 23.8 17 23.5 18 22.7 19 22.6 20 22.2 21 21.0 22 21.3 23 20.9 24 19.3 25 21.0 26 21.3 27 20.7 28 22.3 29 22.6 30 22.4 31 23.3 32 23.6 33 23.5 34 23.6 35 23.3 36 22.6 37 22.6 38 22.3 39 20.9 40 21.3 41 21.5 42 20.0 43 21.4 44 21.7 45 21.6 46 22.4 47 23.0 48 22.7 49 23.6 50 23.7 51 23.2 52 23.4 53 23.1 54 21.9 55 22.0 56 21.8 57 20.2 58 20.4 59 20.0 60 19.5 61 21.5 62 21.5 63 21.5 64 22.7 65 22.8 66 23.1 67 23.8 68 23.7 69 23.1 70 23.1 71 22.8 72 21.7 73 21.7 74 21.4 75 19.8 76 20.2 77 20.3 78 19.9 79 21.6 80 21.9 81 21.8 82 22.8 83 23.3 84 23.3 85 23.8 86 23.5 87 22.9 88 22.8 89 22.5 90 21.4 91 21.8 92 21.1 93 20.0 94 20.4 95 21.2 96 20.6 97 22.0 98 22.3 99 22.1 100 23.3 101 23.6 102 23.6 103 23.6 104 23.3 105 22.6 106 22.8 107 22.4 108 21.3 109 21.7 110 21.2 111 19.5 112 21.0 113 21.3 114 21.3 115 22.5 116 22.8 117 22.6 118 23.4 119 23.8 120 23.5 121 23.4 122 23.2 123 22.3 124 22.4 125 22.1 126 20.6 127 21.3 128 20.6 129 19.7 130 21.2 131 21.9 132 21.4 133 22.5 134 23.0 135 22.7 136 23.7 137 23.9 138 23.2 139 23.3 140 22.7 141 21.6 142 22.1 143 21.5 144 19.8 145 20.1 146 20.3 147 20.0 148 21.5 149 22.1 150 21.9 151 22.8 152 23.3 153 23.1 154 23.8 155 23.7 156 22.8 157 23.1 158 22.6 159 21.5 160 21.4 161 21.0 162 19.8 163 20.4 164 20.8 165 20.2 166 21.5 167 22.2 168 22.1 169 23.0 170 23.5 171 23.3 172 23.6 173 23.4 174 22.6 175 22.7 176 22.3 177 21.2 178 21.2 179 20.7 180 19.6 181 20.7 182 21.0 183 20.9 184 22.1 185 22.6 186 22.3 187 23.4 188 23.5 189 23.6 190 23.5 191 23.1 192 22.1 193 22.7 194 22.1 195 20.9 196 21.0 197 20.8 198 19.5 199 21.2 200 21.3 201 21.3 202 22.4 203 22.9 204 22.6 205 23.4 206 23.8 207 23.4 208 23.5 209 23.1 210 22.1 211 22.0 212 21.9 213 20.5 214 20.9 215 20.5 216 20.3 217 21.3 218 22.1 219 21.5 220 22.7 221 23.1 222 23.1 223 23.7 224 23.7 225 23.2 226 23.2 227 23.0 228 21.9 229 21.9 230 21.9 231 20.5 232 20.9 233 21.0 234 20.7 235 21.9 236 22.3 237 22.2 238 23.1 239 23.5 240 23.3 241 23.7 242 23.7 243 22.7 244 22.9 245 22.6 246 21.8 247 22.1 248 21.5 249 20.1 250 21.1 251 21.5 252 21.2 253 22.3 254 22.8 255 22.6 256 23.3 257 23.5 258 23.4 259 23.8 260 23.5 261 22.6 262 22.6 263 22.5 264 21.1 265 21.6 266 21.0 267 19.4 268 21.1 269 21.7 270 20.9 271 22.5 272 22.6 273 22.7 274 23.4 275 23.4 275 28.6 274 28.6 273 29.3 272 29.4 271 29.5 270 31.1 269 30.3 268 30.9 267 32.6 266 31.0 265 30.4 264 30.9 263 29.5 262 29.4 261 29.4 260 28.5 259 28.2 258 28.6 257 28.5 256 28.7 255 29.4 254 29.2 253 29.7 252 30.8 251 30.5 250 30.9 249 31.9 248 30.5 247 29.9 246 30.2 245 29.4 244 29.1 243 29.3 242 28.3 241 28.3 240 28.7 239 28.5 238 28.9 237 29.8 236 29.7 235 30.1 234 31.3 233 31.0 232 31.1 231 31.5 230 30.1 229 30.1 228 30.1 227 29.0 226 28.8 225 28.8 224 28.3 223 28.3 222 28.9 221 28.9 220 29.3 219 30.5 218 29.9 217 30.7 216 31.7 215 31.5 214 31.1 213 31.5 212 30.1 211 30.0 210 29.9 209 28.9 208 28.5 207 28.6 206 28.2 205 28.6 204 29.4 203 29.1 202 29.6 201 30.7 200 30.7 199 30.8 198 32.5 197 31.2 196 31.0 195 31.1 194 29.9 193 29.3 192 29.9 191 28.9 190 28.5 189 28.4 188 28.5 187 28.6 186 29.7 185 29.4 184 29.9 183 31.1 182 31.0 181 31.3 180 32.4 179 31.3 178 30.8 177 30.8 176 29.7 175 29.3 174 29.4 173 28.6 172 28.4 171 28.7 170 28.5 169 29.0 168 29.9 167 29.8 166 30.5 165 31.8 164 31.2 163 31.6 162 32.2 161 31.0 160 30.6 159 30.5 158 29.4 157 28.9 156 29.2 155 28.3 154 28.2 153 28.9 152 28.7 151 29.2 150 30.1 149 29.9 148 30.5 147 32.0 146 31.7 145 31.9 144 32.2 143 30.5 142 29.9 141 30.4 140 29.3 139 28.7 138 28.8 137 28.1 136 28.3 135 29.3 134 29.0 133 29.5 132 30.6 131 30.1 130 30.8 129 32.3 128 31.4 127 30.7 126 31.4 125 29.9 124 29.6 123 29.7 122 28.8 121 28.6 120 28.5 119 28.2 118 28.6 117 29.4 116 29.2 115 29.5 114 30.7 113 30.7 112 31.0 111 32.5 110 30.8 109 30.3 108 30.7 107 29.6 106 29.2 105 29.4 104 28.7 103 28.4 102 28.4 101 28.4 100 28.7 99 29.9 98 29.7 97 30.0 96 31.4 95 30.8 94 31.6 93 32.0 92 30.9 91 30.2 90 30.6 89 29.5 88 29.2 87 29.1 86 28.5 85 28.2 84 28.7 83 28.7 82 29.2 81 30.2 80 30.1 79 30.4 78 32.1 77 31.7 76 31.8 75 32.2 74 30.6 73 30.3 72 30.3 71 29.2 70 28.9 69 28.9 68 28.3 67 28.2 66 28.9 65 29.2 64 29.3 63 30.5 62 30.5 61 30.5 60 32.5 59 32.0 58 31.6 57 31.8 56 30.2 55 30.0 54 30.1 53 28.9 52 28.6 51 28.8 50 28.3 49 28.4 48 29.3 47 29.0 46 29.6 45 30.4 44 30.3 43 30.6 42 32.0 41 30.5 40 30.7 39 31.1 38 29.7 37 29.4 36 29.4 35 28.7 34 28.4 33 28.5 32 28.4 31 28.7 30 29.6 29 29.4 28 29.7 27 31.3 26 30.7 25 31.0 24 32.7 23 31.1 22 30.7 21 31.0 20 29.8 19 29.4 18 29.3 17 28.5 16 28.2 15 28.7 14 28.4 13 28.7 12 30.0 11 29.6 10 29.7 9 31.3 8 30.6 7 30.9 6 31.5 5 30.3 4 29.9 3 30.4 2 29.2 1 29.0 0 29.1Z" fill="#1f1f1f"/></svg>
<i style="left:1333px;top:328px;width:2px;height:6px;background:#1b1b1b;"></i>
<i style="left:1333px;top:390px;width:2px;height:6px;background:#1b1b1b;"></i>
<i style="left:1471px;top:326px;width:2px;height:34px;background:#7f7f7f;"></i>
<i style="left:1471px;top:326px;width:277px;height:2px;background:#7f7f7f;"></i>
<i style="left:1473px;top:328px;width:275px;height:30px;background:#ffffff;"></i>
<i style="left:1471px;top:358px;width:277px;height:2px;background:#7f7f7f;"></i>
<i style="left:1471px;top:360px;width:277px;height:36px;background:#b9d3f2;"></i>
<i style="left:1471px;top:360px;width:2px;height:36px;background:#63758c;"></i>
<svg style="left:1506px;top:360px" width="210" height="36"><path d="M1 0v36M35 0v36M70 0v36M105 0v36M139 0v36M174 0v36M209 0v36" stroke="#8ea8c8" stroke-width="2"/></svg>
<div style="left:1473px;top:328px;width:275px;height:30px;overflow:hidden"><span style="left:5px;top:3.90px;font-size:20px;line-height:22.34px;color:#242424;white-space:nowrap;letter-spacing:0.75px">91V_CC_90_drum_loop_version_2</span></div>
<svg style="left:1473px;top:360px" width="276" height="36"><path d="M0 5.6 1 5.6 2 5.1 3 3.9 4 4.6 5 4.2 6 2.3 7 3.2 8 3.2 9 2.7 10 4.6 11 5.0 12 4.8 13 5.5 14 5.9 15 6.0 16 6.3 17 6.2 18 5.2 19 5.3 20 5.2 21 4.0 22 4.0 23 3.6 24 2.0 25 3.2 26 3.8 27 3.5 28 4.8 29 5.1 30 5.1 31 6.0 32 6.2 33 6.2 34 6.2 35 5.7 36 4.7 37 5.1 38 4.8 39 3.1 40 3.7 41 3.2 42 1.9 43 3.4 44 3.8 45 3.9 46 4.7 47 5.2 48 5.2 49 6.0 50 6.3 51 5.9 52 6.1 53 5.6 54 4.6 55 4.7 56 4.4 57 3.4 58 3.6 59 2.9 60 2.5 61 3.9 62 4.6 63 4.1 64 5.5 65 5.7 66 5.6 67 6.3 68 6.4 69 5.7 70 5.8 71 5.4 72 4.2 73 4.7 74 4.1 75 2.7 76 3.6 77 3.7 78 2.7 79 4.3 80 4.8 81 4.7 82 5.7 83 5.9 84 5.9 85 6.4 86 6.1 87 5.5 88 5.6 89 5.2 90 3.9 91 4.4 92 3.8 93 2.2 94 2.8 95 3.6 96 3.2 97 4.7 98 5.0 99 4.8 100 5.7 101 6.0 102 6.0 103 6.3 104 6.1 105 4.9 106 5.0 107 4.8 108 3.2 109 3.7 110 3.5 111 1.5 112 3.0 113 3.6 114 3.7 115 4.5 116 5.4 117 5.3 118 5.9 119 6.3 120 6.0 121 6.1 122 6.0 123 4.9 124 5.3 125 4.9 126 3.5 127 3.7 128 3.2 129 2.9 130 4.1 131 4.6 132 4.3 133 5.4 134 5.8 135 5.5 136 6.3 137 6.3 138 5.9 139 5.9 140 5.6 141 4.7 142 5.0 143 4.5 144 3.1 145 3.5 146 3.6 147 2.9 148 4.6 149 4.5 150 4.5 151 5.3 152 5.8 153 5.7 154 6.3 155 6.2 156 5.4 157 5.7 158 5.2 159 4.1 160 4.4 161 3.7 162 2.8 163 3.3 164 3.3 165 3.0 166 4.3 167 4.8 168 4.8 169 5.8 170 6.1 171 6.0 172 6.3 173 6.0 174 5.2 175 5.4 176 5.1 177 3.6 178 3.9 179 3.3 180 2.1 181 3.3 182 3.7 183 3.3 184 4.8 185 5.2 186 5.0 187 5.9 188 6.1 189 6.1 190 6.3 191 6.0 192 4.9 193 5.2 194 5.1 195 4.0 196 4.2 197 3.7 198 2.5 199 4.0 200 4.7 201 4.0 202 5.4 203 5.4 204 5.5 205 6.2 206 6.3 207 6.0 208 6.1 209 5.5 210 4.4 211 4.8 212 4.0 213 2.8 214 3.0 215 3.1 216 2.5 217 3.9 218 4.3 219 3.9 220 5.2 221 5.5 222 5.5 223 6.2 224 6.3 225 5.8 226 5.7 227 5.2 228 4.2 229 4.8 230 4.3 231 2.5 232 3.6 233 3.6 234 3.3 235 4.7 236 4.8 237 4.4 238 5.8 239 5.9 240 5.9 241 6.4 242 6.1 243 5.2 244 5.5 245 5.2 246 3.9 247 4.4 248 3.5 249 1.9 250 3.5 251 3.4 252 3.1 253 4.7 254 4.9 255 4.9 256 5.8 257 6.0 258 6.2 259 6.4 260 6.0 261 5.1 262 5.3 263 5.0 264 4.1 265 4.2 266 3.7 267 2.8 268 3.8 269 4.7 270 3.8 271 5.1 272 5.4 273 5.4 274 6.2 275 6.2 275 11.0 274 11.0 273 11.8 272 11.8 271 12.1 270 13.4 269 12.5 268 13.4 267 14.4 266 13.5 265 13.0 264 13.1 263 12.2 262 11.9 261 12.1 260 11.2 259 10.8 258 11.0 257 11.2 256 11.4 255 12.3 254 12.3 253 12.5 252 14.1 251 13.8 250 13.7 249 15.3 248 13.7 247 12.8 246 13.3 245 12.0 244 11.7 243 12.0 242 11.1 241 10.8 240 11.3 239 11.3 238 11.4 237 12.8 236 12.4 235 12.5 234 13.9 233 13.6 232 13.6 231 14.7 230 12.9 229 12.4 228 13.0 227 12.0 226 11.5 225 11.4 224 10.9 223 11.0 222 11.7 221 11.7 220 12.0 219 13.3 218 12.9 217 13.3 216 14.7 215 14.1 214 14.2 213 14.4 212 13.2 211 12.4 210 12.8 209 11.7 208 11.1 207 11.2 206 10.9 205 11.0 204 11.7 203 11.8 202 11.8 201 13.2 200 12.5 199 13.2 198 14.7 197 13.5 196 13.0 195 13.2 194 12.1 193 12.0 192 12.3 191 11.2 190 10.9 189 11.1 188 11.1 187 11.3 186 12.2 185 12.0 184 12.4 183 13.9 182 13.5 181 13.9 180 15.1 179 13.9 178 13.3 177 13.6 176 12.1 175 11.8 174 12.0 173 11.2 172 10.9 171 11.2 170 11.1 169 11.4 168 12.4 167 12.4 166 12.9 165 14.2 164 13.9 163 13.9 162 14.4 161 13.5 160 12.8 159 13.1 158 12.0 157 11.5 156 11.8 155 11.0 154 10.9 153 11.5 152 11.4 151 11.9 150 12.7 149 12.7 148 12.6 147 14.3 146 13.6 145 13.7 144 14.1 143 12.7 142 12.2 141 12.5 140 11.6 139 11.3 138 11.3 137 10.9 136 10.9 135 11.7 134 11.4 133 11.8 132 12.9 131 12.6 130 13.1 129 14.3 128 14.0 127 13.5 126 13.7 125 12.3 124 11.9 123 12.3 122 11.2 121 11.1 120 11.2 119 10.9 118 11.3 117 11.9 116 11.8 115 12.7 114 13.5 113 13.6 112 14.2 111 15.7 110 13.7 109 13.5 108 14.0 107 12.4 106 12.2 105 12.3 104 11.1 103 10.9 102 11.2 101 11.2 100 11.5 99 12.4 98 12.2 97 12.5 96 14.0 95 13.6 94 14.4 93 15.0 92 13.4 91 12.8 90 13.3 89 12.0 88 11.6 87 11.7 86 11.1 85 10.8 84 11.3 83 11.3 82 11.5 81 12.5 80 12.4 79 12.9 78 14.5 77 13.5 76 13.6 75 14.5 74 13.1 73 12.5 72 13.0 71 11.8 70 11.4 69 11.5 68 10.8 67 10.9 66 11.6 65 11.5 64 11.7 63 13.1 62 12.6 61 13.3 60 14.7 59 14.3 58 13.6 57 13.8 56 12.8 55 12.5 54 12.6 53 11.6 52 11.1 51 11.3 50 10.9 49 11.2 48 12.0 47 12.0 46 12.5 45 13.3 44 13.4 43 13.8 42 15.3 41 14.0 40 13.5 39 14.1 38 12.4 37 12.1 36 12.5 35 11.5 34 11.0 33 11.0 32 11.0 31 11.2 30 12.1 29 12.1 28 12.4 27 13.7 26 13.4 25 14.0 24 15.2 23 13.6 22 13.2 21 13.2 20 12.0 19 11.9 18 12.0 17 11.0 16 10.9 15 11.2 14 11.3 13 11.7 12 12.4 11 12.2 10 12.6 9 14.5 8 14.0 7 14.0 6 14.9 5 13.0 4 12.6 3 13.3 2 12.1 1 11.6 0 11.6Z" fill="#1f1f1f"/><path d="M0 23.0 1 23.0 2 22.5 3 21.3 4 22.0 5 21.6 6 19.7 7 20.6 8 20.6 9 20.1 10 22.0 11 22.4 12 22.2 13 22.9 14 23.3 15 23.4 16 23.7 17 23.6 18 22.6 19 22.7 20 22.6 21 21.4 22 21.4 23 21.0 24 19.4 25 20.6 26 21.2 27 20.9 28 22.2 29 22.5 30 22.5 31 23.4 32 23.6 33 23.6 34 23.6 35 23.1 36 22.1 37 22.5 38 22.2 39 20.5 40 21.1 41 20.6 42 19.3 43 20.8 44 21.2 45 21.3 46 22.1 47 22.6 48 22.6 49 23.4 50 23.7 51 23.3 52 23.5 53 23.0 54 22.0 55 22.1 56 21.8 57 20.8 58 21.0 59 20.3 60 19.9 61 21.3 62 22.0 63 21.5 64 22.9 65 23.1 66 23.0 67 23.7 68 23.8 69 23.1 70 23.2 71 22.8 72 21.6 73 22.1 74 21.5 75 20.1 76 21.0 77 21.1 78 20.1 79 21.7 80 22.2 81 22.1 82 23.1 83 23.3 84 23.3 85 23.8 86 23.5 87 22.9 88 23.0 89 22.6 90 21.3 91 21.8 92 21.2 93 19.6 94 20.2 95 21.0 96 20.6 97 22.1 98 22.4 99 22.2 100 23.1 101 23.4 102 23.4 103 23.7 104 23.5 105 22.3 106 22.4 107 22.2 108 20.6 109 21.1 110 20.9 111 18.9 112 20.4 113 21.0 114 21.1 115 21.9 116 22.8 117 22.7 118 23.3 119 23.7 120 23.4 121 23.5 122 23.4 123 22.3 124 22.7 125 22.3 126 20.9 127 21.1 128 20.6 129 20.3 130 21.5 131 22.0 132 21.7 133 22.8 134 23.2 135 22.9 136 23.7 137 23.7 138 23.3 139 23.3 140 23.0 141 22.1 142 22.4 143 21.9 144 20.5 145 20.9 146 21.0 147 20.3 148 22.0 149 21.9 150 21.9 151 22.7 152 23.2 153 23.1 154 23.7 155 23.6 156 22.8 157 23.1 158 22.6 159 21.5 160 21.8 161 21.1 162 20.2 163 20.7 164 20.7 165 20.4 166 21.7 167 22.2 168 22.2 169 23.2 170 23.5 171 23.4 172 23.7 173 23.4 174 22.6 175 22.8 176 22.5 177 21.0 178 21.3 179 20.7 180 19.5 181 20.7 182 21.1 183 20.7 184 22.2 185 22.6 186 22.4 187 23.3 188 23.5 189 23.5 190 23.7 191 23.4 192 22.3 193 22.6 194 22.5 195 21.4 196 21.6 197 21.1 198 19.9 199 21.4 200 22.1 201 21.4 202 22.8 203 22.8 204 22.9 205 23.6 206 23.7 207 23.4 208 23.5 209 22.9 210 21.8 211 22.2 212 21.4 213 20.2 214 20.4 215 20.5 216 19.9 217 21.3 218 21.7 219 21.3 220 22.6 221 22.9 222 22.9 223 23.6 224 23.7 225 23.2 226 23.1 227 22.6 228 21.6 229 22.2 230 21.7 231 19.9 232 21.0 233 21.0 234 20.7 235 22.1 236 22.2 237 21.8 238 23.2 239 23.3 240 23.3 241 23.8 242 23.5 243 22.6 244 22.9 245 22.6 246 21.3 247 21.8 248 20.9 249 19.3 250 20.9 251 20.8 252 20.5 253 22.1 254 22.3 255 22.3 256 23.2 257 23.4 258 23.6 259 23.8 260 23.4 261 22.5 262 22.7 263 22.4 264 21.5 265 21.6 266 21.1 267 20.2 268 21.2 269 22.1 270 21.2 271 22.5 272 22.8 273 22.8 274 23.6 275 23.6 275 28.4 274 28.4 273 29.2 272 29.2 271 29.5 270 30.8 269 29.9 268 30.8 267 31.8 266 30.9 265 30.4 264 30.5 263 29.6 262 29.3 261 29.5 260 28.6 259 28.2 258 28.4 257 28.6 256 28.8 255 29.7 254 29.7 253 29.9 252 31.5 251 31.2 250 31.1 249 32.7 248 31.1 247 30.2 246 30.7 245 29.4 244 29.1 243 29.4 242 28.5 241 28.2 240 28.7 239 28.7 238 28.8 237 30.2 236 29.8 235 29.9 234 31.3 233 31.0 232 31.0 231 32.1 230 30.3 229 29.8 228 30.4 227 29.4 226 28.9 225 28.8 224 28.3 223 28.4 222 29.1 221 29.1 220 29.4 219 30.7 218 30.3 217 30.7 216 32.1 215 31.5 214 31.6 213 31.8 212 30.6 211 29.8 210 30.2 209 29.1 208 28.5 207 28.6 206 28.3 205 28.4 204 29.1 203 29.2 202 29.2 201 30.6 200 29.9 199 30.6 198 32.1 197 30.9 196 30.4 195 30.6 194 29.5 193 29.4 192 29.7 191 28.6 190 28.3 189 28.5 188 28.5 187 28.7 186 29.6 185 29.4 184 29.8 183 31.3 182 30.9 181 31.3 180 32.5 179 31.3 178 30.7 177 31.0 176 29.5 175 29.2 174 29.4 173 28.6 172 28.3 171 28.6 170 28.5 169 28.8 168 29.8 167 29.8 166 30.3 165 31.6 164 31.3 163 31.3 162 31.8 161 30.9 160 30.2 159 30.5 158 29.4 157 28.9 156 29.2 155 28.4 154 28.3 153 28.9 152 28.8 151 29.3 150 30.1 149 30.1 148 30.0 147 31.7 146 31.0 145 31.1 144 31.5 143 30.1 142 29.6 141 29.9 140 29.0 139 28.7 138 28.7 137 28.3 136 28.3 135 29.1 134 28.8 133 29.2 132 30.3 131 30.0 130 30.5 129 31.7 128 31.4 127 30.9 126 31.1 125 29.7 124 29.3 123 29.7 122 28.6 121 28.5 120 28.6 119 28.3 118 28.7 117 29.3 116 29.2 115 30.1 114 30.9 113 31.0 112 31.6 111 33.1 110 31.1 109 30.9 108 31.4 107 29.8 106 29.6 105 29.7 104 28.5 103 28.3 102 28.6 101 28.6 100 28.9 99 29.8 98 29.6 97 29.9 96 31.4 95 31.0 94 31.8 93 32.4 92 30.8 91 30.2 90 30.7 89 29.4 88 29.0 87 29.1 86 28.5 85 28.2 84 28.7 83 28.7 82 28.9 81 29.9 80 29.8 79 30.3 78 31.9 77 30.9 76 31.0 75 31.9 74 30.5 73 29.9 72 30.4 71 29.2 70 28.8 69 28.9 68 28.2 67 28.3 66 29.0 65 28.9 64 29.1 63 30.5 62 30.0 61 30.7 60 32.1 59 31.7 58 31.0 57 31.2 56 30.2 55 29.9 54 30.0 53 29.0 52 28.5 51 28.7 50 28.3 49 28.6 48 29.4 47 29.4 46 29.9 45 30.7 44 30.8 43 31.2 42 32.7 41 31.4 40 30.9 39 31.5 38 29.8 37 29.5 36 29.9 35 28.9 34 28.4 33 28.4 32 28.4 31 28.6 30 29.5 29 29.5 28 29.8 27 31.1 26 30.8 25 31.4 24 32.6 23 31.0 22 30.6 21 30.6 20 29.4 19 29.3 18 29.4 17 28.4 16 28.3 15 28.6 14 28.7 13 29.1 12 29.8 11 29.6 10 30.0 9 31.9 8 31.4 7 31.4 6 32.3 5 30.4 4 30.0 3 30.7 2 29.5 1 29.0 0 29.0Z" fill="#1f1f1f"/></svg>
<i style="left:1610px;top:328px;width:2px;height:6px;background:#1b1b1b;"></i>
<i style="left:1610px;top:390px;width:2px;height:6px;background:#1b1b1b;"></i>
<i style="left:1748px;top:326px;width:2px;height:34px;background:#7f7f7f;"></i>
<i style="left:1748px;top:326px;width:278px;height:2px;background:#7f7f7f;"></i>
<i style="left:1750px;top:328px;width:276px;height:30px;background:#ffffff;"></i>
<i style="left:1748px;top:358px;width:278px;height:2px;background:#7f7f7f;"></i>
<i style="left:1748px;top:360px;width:278px;height:36px;background:#b9d3f2;"></i>
<i style="left:1748px;top:360px;width:2px;height:36px;background:#63758c;"></i>
<svg style="left:1783px;top:360px" width="210" height="36"><path d="M1 0v36M36 0v36M70 0v36M105 0v36M140 0v36M174 0v36M209 0v36" stroke="#8ea8c8" stroke-width="2"/></svg>
<div style="left:1750px;top:328px;width:276px;height:30px;overflow:hidden"><span style="left:5px;top:3.90px;font-size:20px;line-height:22.34px;color:#242424;white-space:nowrap;letter-spacing:0.75px">91V_CC_90_drum_loop_version_2</span></div>
<svg style="left:1750px;top:360px" width="277" height="36"><path d="M0 5.7 1 5.5 2 5.4 3 4.1 4 4.2 5 4.3 6 2.3 7 3.0 8 3.5 9 3.3 10 4.6 11 4.8 12 4.8 13 5.5 14 6.0 15 6.0 16 6.4 17 6.0 18 5.5 19 5.5 20 5.3 21 3.9 22 4.6 23 4.0 24 2.4 25 3.8 26 4.3 27 3.7 28 5.0 29 5.4 30 5.2 31 6.1 32 6.3 33 6.2 34 6.2 35 5.9 36 4.9 37 5.1 38 4.6 39 3.5 40 4.1 41 3.3 42 1.8 43 3.9 44 4.3 45 3.7 46 4.8 47 5.3 48 5.3 49 6.2 50 6.3 51 5.9 52 6.1 53 5.9 54 4.6 55 5.2 56 4.8 57 3.3 58 3.9 59 3.7 60 3.3 61 4.4 62 4.6 63 4.5 64 5.5 65 5.9 66 5.7 67 6.4 68 6.3 69 5.6 70 5.8 71 5.4 72 4.2 73 4.6 74 4.1 75 2.8 76 3.6 77 3.6 78 2.9 79 4.5 80 4.6 81 4.7 82 5.5 83 5.9 84 5.9 85 6.3 86 6.1 87 5.4 88 5.5 89 5.3 90 4.2 91 4.1 92 3.9 93 2.7 94 3.1 95 3.8 96 3.5 97 4.9 98 5.2 99 5.0 100 5.9 101 6.1 102 6.1 103 6.3 104 6.1 105 5.1 106 5.3 107 4.8 108 3.6 109 4.2 110 3.6 111 2.0 112 3.3 113 4.3 114 3.5 115 5.0 116 5.3 117 5.1 118 6.0 119 6.4 120 6.0 121 6.1 122 5.7 123 4.9 124 5.1 125 4.3 126 3.0 127 3.8 128 3.2 129 2.4 130 4.0 131 4.4 132 3.8 133 5.2 134 5.6 135 5.4 136 6.2 137 6.4 138 5.7 139 6.0 140 5.7 141 4.8 142 4.7 143 4.3 144 3.4 145 3.7 146 3.5 147 2.9 148 4.3 149 4.7 150 4.4 151 5.6 152 5.9 153 5.8 154 6.3 155 6.3 156 5.4 157 5.4 158 5.3 159 4.2 160 4.2 161 3.7 162 2.2 163 2.9 164 3.4 165 3.0 166 4.2 167 4.7 168 4.7 169 5.5 170 5.9 171 5.9 172 6.3 173 6.0 174 5.5 175 5.5 176 5.0 177 3.8 178 4.3 179 3.8 180 2.3 181 3.7 182 4.5 183 3.9 184 5.0 185 5.4 186 5.3 187 6.1 188 6.2 189 6.2 190 6.1 191 6.0 192 5.0 193 5.0 194 4.7 195 3.6 196 4.1 197 3.4 198 2.3 199 3.9 200 4.5 201 4.2 202 5.1 203 5.4 204 5.3 205 6.3 206 6.4 207 6.0 208 5.9 209 5.6 210 4.5 211 5.0 212 4.5 213 3.4 214 3.9 215 3.1 216 2.9 217 4.3 218 4.7 219 4.6 220 5.6 221 5.7 222 5.7 223 6.4 224 6.2 225 5.6 226 5.5 227 5.2 228 4.0 229 4.6 230 3.8 231 2.3 232 2.8 233 3.1 234 2.6 235 4.1 236 4.6 237 4.6 238 5.6 239 5.9 240 5.8 241 6.4 242 6.3 243 5.4 244 5.6 245 5.3 246 4.1 247 4.3 248 4.1 249 2.9 250 4.0 251 4.2 252 3.7 253 5.0 254 5.4 255 5.1 256 6.0 257 6.1 258 6.0 259 6.3 260 5.8 261 5.1 262 5.1 263 4.8 264 3.5 265 3.7 266 3.5 267 1.6 268 3.2 269 4.2 270 3.4 271 4.8 272 5.5 273 5.3 274 6.1 275 6.2 276 6.2 276 11.0 275 11.0 274 11.1 273 11.9 272 11.7 271 12.4 270 13.8 269 13.0 268 14.0 267 15.6 266 13.7 265 13.5 264 13.7 263 12.4 262 12.1 261 12.1 260 11.4 259 10.9 258 11.2 257 11.1 256 11.2 255 12.1 254 11.8 253 12.2 252 13.5 251 13.0 250 13.2 249 14.3 248 13.1 247 12.9 246 13.1 245 11.9 244 11.6 243 11.8 242 10.9 241 10.8 240 11.4 239 11.3 238 11.6 237 12.6 236 12.6 235 13.1 234 14.6 233 14.1 232 14.4 231 14.9 230 13.4 229 12.6 228 13.2 227 12.0 226 11.7 225 11.6 224 11.0 223 10.8 222 11.5 221 11.5 220 11.6 219 12.6 218 12.5 217 12.9 216 14.3 215 14.1 214 13.3 213 13.8 212 12.7 211 12.2 210 12.7 209 11.6 208 11.3 207 11.2 206 10.8 205 10.9 204 11.9 203 11.8 202 12.1 201 13.0 200 12.7 199 13.3 198 14.9 197 13.8 196 13.1 195 13.6 194 12.5 193 12.2 192 12.2 191 11.2 190 11.1 189 11.0 188 11.0 187 11.1 186 11.9 185 11.8 184 12.2 183 13.3 182 12.7 181 13.5 180 14.9 179 13.4 178 12.9 177 13.4 176 12.2 175 11.7 174 11.7 173 11.2 172 10.9 171 11.3 170 11.3 169 11.7 168 12.5 167 12.5 166 13.0 165 14.2 164 13.8 163 14.3 162 15.0 161 13.5 160 13.0 159 13.0 158 11.9 157 11.8 156 11.8 155 10.9 154 10.9 153 11.4 152 11.3 151 11.6 150 12.8 149 12.5 148 12.9 147 14.3 146 13.7 145 13.5 144 13.8 143 12.9 142 12.5 141 12.4 140 11.5 139 11.2 138 11.5 137 10.8 136 11.0 135 11.8 134 11.6 133 12.0 132 13.4 131 12.8 130 13.2 129 14.8 128 14.0 127 13.4 126 14.2 125 12.9 124 12.1 123 12.3 122 11.5 121 11.1 120 11.2 119 10.8 118 11.2 117 12.1 116 11.9 115 12.2 114 13.7 113 12.9 112 13.9 111 15.2 110 13.6 109 13.0 108 13.6 107 12.4 106 11.9 105 12.1 104 11.1 103 10.9 102 11.1 101 11.1 100 11.3 99 12.2 98 12.0 97 12.3 96 13.7 95 13.4 94 14.1 93 14.5 92 13.3 91 13.1 90 13.0 89 11.9 88 11.7 87 11.8 86 11.1 85 10.9 84 11.3 83 11.3 82 11.7 81 12.5 80 12.6 79 12.7 78 14.3 77 13.6 76 13.6 75 14.4 74 13.1 73 12.6 72 13.0 71 11.8 70 11.4 69 11.6 68 10.9 67 10.8 66 11.5 65 11.3 64 11.7 63 12.7 62 12.6 61 12.8 60 13.9 59 13.5 58 13.3 57 13.9 56 12.4 55 12.0 54 12.6 53 11.3 52 11.1 51 11.3 50 10.9 49 11.0 48 11.9 47 11.9 46 12.4 45 13.5 44 12.9 43 13.3 42 15.4 41 13.9 40 13.1 39 13.7 38 12.6 37 12.1 36 12.3 35 11.3 34 11.0 33 11.0 32 10.9 31 11.1 30 12.0 29 11.8 28 12.2 27 13.5 26 12.9 25 13.4 24 14.8 23 13.2 22 12.6 21 13.3 20 11.9 19 11.7 18 11.7 17 11.2 16 10.8 15 11.2 14 11.2 13 11.7 12 12.4 11 12.4 10 12.6 9 13.9 8 13.7 7 14.2 6 14.9 5 12.9 4 13.0 3 13.1 2 11.8 1 11.7 0 11.5Z" fill="#1f1f1f"/><path d="M0 23.1 1 22.9 2 22.8 3 21.5 4 21.6 5 21.7 6 19.7 7 20.4 8 20.9 9 20.7 10 22.0 11 22.2 12 22.2 13 22.9 14 23.4 15 23.4 16 23.8 17 23.4 18 22.9 19 22.9 20 22.7 21 21.3 22 22.0 23 21.4 24 19.8 25 21.2 26 21.7 27 21.1 28 22.4 29 22.8 30 22.6 31 23.5 32 23.7 33 23.6 34 23.6 35 23.3 36 22.3 37 22.5 38 22.0 39 20.9 40 21.5 41 20.7 42 19.2 43 21.3 44 21.7 45 21.1 46 22.2 47 22.7 48 22.7 49 23.6 50 23.7 51 23.3 52 23.5 53 23.3 54 22.0 55 22.6 56 22.2 57 20.7 58 21.3 59 21.1 60 20.7 61 21.8 62 22.0 63 21.9 64 22.9 65 23.3 66 23.1 67 23.8 68 23.7 69 23.0 70 23.2 71 22.8 72 21.6 73 22.0 74 21.5 75 20.2 76 21.0 77 21.0 78 20.3 79 21.9 80 22.0 81 22.1 82 22.9 83 23.3 84 23.3 85 23.7 86 23.5 87 22.8 88 22.9 89 22.7 90 21.6 91 21.5 92 21.3 93 20.1 94 20.5 95 21.2 96 20.9 97 22.3 98 22.6 99 22.4 100 23.3 101 23.5 102 23.5 103 23.7 104 23.5 105 22.5 106 22.7 107 22.2 108 21.0 109 21.6 110 21.0 111 19.4 112 20.7 113 21.7 114 20.9 115 22.4 116 22.7 117 22.5 118 23.4 119 23.8 120 23.4 121 23.5 122 23.1 123 22.3 124 22.5 125 21.7 126 20.4 127 21.2 128 20.6 129 19.8 130 21.4 131 21.8 132 21.2 133 22.6 134 23.0 135 22.8 136 23.6 137 23.8 138 23.1 139 23.4 140 23.1 141 22.2 142 22.1 143 21.7 144 20.8 145 21.1 146 20.9 147 20.3 148 21.7 149 22.1 150 21.8 151 23.0 152 23.3 153 23.2 154 23.7 155 23.7 156 22.8 157 22.8 158 22.7 159 21.6 160 21.6 161 21.1 162 19.6 163 20.3 164 20.8 165 20.4 166 21.6 167 22.1 168 22.1 169 22.9 170 23.3 171 23.3 172 23.7 173 23.4 174 22.9 175 22.9 176 22.4 177 21.2 178 21.7 179 21.2 180 19.7 181 21.1 182 21.9 183 21.3 184 22.4 185 22.8 186 22.7 187 23.5 188 23.6 189 23.6 190 23.5 191 23.4 192 22.4 193 22.4 194 22.1 195 21.0 196 21.5 197 20.8 198 19.7 199 21.3 200 21.9 201 21.6 202 22.5 203 22.8 204 22.7 205 23.7 206 23.8 207 23.4 208 23.3 209 23.0 210 21.9 211 22.4 212 21.9 213 20.8 214 21.3 215 20.5 216 20.3 217 21.7 218 22.1 219 22.0 220 23.0 221 23.1 222 23.1 223 23.8 224 23.6 225 23.0 226 22.9 227 22.6 228 21.4 229 22.0 230 21.2 231 19.7 232 20.2 233 20.5 234 20.0 235 21.5 236 22.0 237 22.0 238 23.0 239 23.3 240 23.2 241 23.8 242 23.7 243 22.8 244 23.0 245 22.7 246 21.5 247 21.7 248 21.5 249 20.3 250 21.4 251 21.6 252 21.1 253 22.4 254 22.8 255 22.5 256 23.4 257 23.5 258 23.4 259 23.7 260 23.2 261 22.5 262 22.5 263 22.2 264 20.9 265 21.1 266 20.9 267 19.0 268 20.6 269 21.6 270 20.8 271 22.2 272 22.9 273 22.7 274 23.5 275 23.6 276 23.6 276 28.4 275 28.4 274 28.5 273 29.3 272 29.1 271 29.8 270 31.2 269 30.4 268 31.4 267 33.0 266 31.1 265 30.9 264 31.1 263 29.8 262 29.5 261 29.5 260 28.8 259 28.3 258 28.6 257 28.5 256 28.6 255 29.5 254 29.2 253 29.6 252 30.9 251 30.4 250 30.6 249 31.7 248 30.5 247 30.3 246 30.5 245 29.3 244 29.0 243 29.2 242 28.3 241 28.2 240 28.8 239 28.7 238 29.0 237 30.0 236 30.0 235 30.5 234 32.0 233 31.5 232 31.8 231 32.3 230 30.8 229 30.0 228 30.6 227 29.4 226 29.1 225 29.0 224 28.4 223 28.2 222 28.9 221 28.9 220 29.0 219 30.0 218 29.9 217 30.3 216 31.7 215 31.5 214 30.7 213 31.2 212 30.1 211 29.6 210 30.1 209 29.0 208 28.7 207 28.6 206 28.2 205 28.3 204 29.3 203 29.2 202 29.5 201 30.4 200 30.1 199 30.7 198 32.3 197 31.2 196 30.5 195 31.0 194 29.9 193 29.6 192 29.6 191 28.6 190 28.5 189 28.4 188 28.4 187 28.5 186 29.3 185 29.2 184 29.6 183 30.7 182 30.1 181 30.9 180 32.3 179 30.8 178 30.3 177 30.8 176 29.6 175 29.1 174 29.1 173 28.6 172 28.3 171 28.7 170 28.7 169 29.1 168 29.9 167 29.9 166 30.4 165 31.6 164 31.2 163 31.7 162 32.4 161 30.9 160 30.4 159 30.4 158 29.3 157 29.2 156 29.2 155 28.3 154 28.3 153 28.8 152 28.7 151 29.0 150 30.2 149 29.9 148 30.3 147 31.7 146 31.1 145 30.9 144 31.2 143 30.3 142 29.9 141 29.8 140 28.9 139 28.6 138 28.9 137 28.2 136 28.4 135 29.2 134 29.0 133 29.4 132 30.8 131 30.2 130 30.6 129 32.2 128 31.4 127 30.8 126 31.6 125 30.3 124 29.5 123 29.7 122 28.9 121 28.5 120 28.6 119 28.2 118 28.6 117 29.5 116 29.3 115 29.6 114 31.1 113 30.3 112 31.3 111 32.6 110 31.0 109 30.4 108 31.0 107 29.8 106 29.3 105 29.5 104 28.5 103 28.3 102 28.5 101 28.5 100 28.7 99 29.6 98 29.4 97 29.7 96 31.1 95 30.8 94 31.5 93 31.9 92 30.7 91 30.5 90 30.4 89 29.3 88 29.1 87 29.2 86 28.5 85 28.3 84 28.7 83 28.7 82 29.1 81 29.9 80 30.0 79 30.1 78 31.7 77 31.0 76 31.0 75 31.8 74 30.5 73 30.0 72 30.4 71 29.2 70 28.8 69 29.0 68 28.3 67 28.2 66 28.9 65 28.7 64 29.1 63 30.1 62 30.0 61 30.2 60 31.3 59 30.9 58 30.7 57 31.3 56 29.8 55 29.4 54 30.0 53 28.7 52 28.5 51 28.7 50 28.3 49 28.4 48 29.3 47 29.3 46 29.8 45 30.9 44 30.3 43 30.7 42 32.8 41 31.3 40 30.5 39 31.1 38 30.0 37 29.5 36 29.7 35 28.7 34 28.4 33 28.4 32 28.3 31 28.5 30 29.4 29 29.2 28 29.6 27 30.9 26 30.3 25 30.8 24 32.2 23 30.6 22 30.0 21 30.7 20 29.3 19 29.1 18 29.1 17 28.6 16 28.2 15 28.6 14 28.6 13 29.1 12 29.8 11 29.8 10 30.0 9 31.3 8 31.1 7 31.6 6 32.3 5 30.3 4 30.4 3 30.5 2 29.2 1 29.1 0 28.9Z" fill="#1f1f1f"/></svg>
<i style="left:1887px;top:328px;width:2px;height:6px;background:#1b1b1b;"></i>
<i style="left:1887px;top:390px;width:2px;height:6px;background:#1b1b1b;"></i>
<i style="left:570px;top:400px;width:2px;height:34px;background:#7f7f7f;"></i>
<i style="left:570px;top:400px;width:277px;height:2px;background:#7f7f7f;"></i>
<i style="left:572px;top:402px;width:275px;height:30px;background:#ffffff;"></i>
<i style="left:570px;top:432px;width:277px;height:2px;background:#7f7f7f;"></i>
<i style="left:570px;top:434px;width:277px;height:36px;background:#b9d3f2;"></i>
<i style="left:570px;top:434px;width:2px;height:36px;background:#63758c;"></i>
<svg style="left:605px;top:434px" width="210" height="36"><path d="M1 0v36M36 0v36M70 0v36M105 0v36M139 0v36M174 0v36M209 0v36" stroke="#8ea8c8" stroke-width="2"/></svg>
<div style="left:572px;top:402px;width:275px;height:30px;overflow:hidden"><span style="left:5px;top:3.90px;font-size:20px;line-height:22.34px;color:#242424;white-space:nowrap;letter-spacing:0.75px">003_b__Drum_Beat_117bpm</span></div>
<svg style="left:572px;top:434px" width="276" height="36"><path d="M0 3.6 1 3.8 2 3.5 3 2.7 4 3.0 5 2.3 6 1.1 7 1.9 8 1.9 9 1.7 10 2.7 11 3.3 12 3.1 13 4.0 14 4.1 15 4.1 16 4.4 17 4.2 18 3.3 19 3.5 20 3.3 21 1.7 22 2.4 23 1.9 24 0.7 25 1.7 26 2.3 27 1.5 28 2.7 29 3.5 30 3.0 31 4.0 32 4.2 33 4.2 34 4.2 35 4.1 36 3.1 37 3.4 38 3.0 39 1.8 40 2.6 41 2.5 42 1.3 43 2.6 44 3.0 45 2.5 46 3.2 47 3.6 48 3.5 49 4.3 50 4.4 51 3.9 52 4.0 53 3.8 54 2.9 55 3.1 56 3.0 57 1.5 58 2.3 59 1.5 60 0.8 61 2.5 62 2.9 63 2.5 64 3.6 65 4.0 66 3.8 67 4.3 68 4.5 69 3.9 70 3.9 71 3.4 72 2.6 73 2.7 74 2.4 75 1.2 76 1.7 77 2.0 78 1.4 79 2.6 80 2.8 81 2.7 82 3.7 83 4.1 84 4.0 85 4.4 86 4.3 87 3.4 88 3.6 89 3.4 90 1.9 91 2.5 92 2.2 93 0.4 94 1.4 95 2.0 96 1.3 97 2.9 98 3.2 99 3.0 100 3.9 101 4.3 102 4.2 103 4.3 104 4.1 105 3.2 106 3.4 107 3.0 108 1.8 109 1.9 110 1.8 111 -0.1 112 1.5 113 1.9 114 1.8 115 3.1 116 3.4 117 3.2 118 4.0 119 4.3 120 4.1 121 4.2 122 3.8 123 3.0 124 3.3 125 2.5 126 1.5 127 1.5 128 1.6 129 0.4 130 2.1 131 2.2 132 1.9 133 3.5 134 3.5 135 3.4 136 4.4 137 4.6 138 3.8 139 4.1 140 3.7 141 2.5 142 3.0 143 2.2 144 1.3 145 1.6 146 1.5 147 1.1 148 2.2 149 2.6 150 2.5 151 3.5 152 3.8 153 3.7 154 4.4 155 4.4 156 3.7 157 3.7 158 3.2 159 2.1 160 2.5 161 1.8 162 0.6 163 1.4 164 1.9 165 1.5 166 2.7 167 3.2 168 2.7 169 3.8 170 4.1 171 4.1 172 4.5 173 4.1 174 3.6 175 3.9 176 3.6 177 2.2 178 3.0 179 2.2 180 1.3 181 2.4 182 2.4 183 1.9 184 3.2 185 3.7 186 3.4 187 4.0 188 4.3 189 4.2 190 4.3 191 4.0 192 3.2 193 3.7 194 3.1 195 1.9 196 2.7 197 2.3 198 1.1 199 2.4 200 2.9 201 2.3 202 3.4 203 3.7 204 3.4 205 4.4 206 4.5 207 4.1 208 4.2 209 3.7 210 2.7 211 3.2 212 2.5 213 1.6 214 2.0 215 1.2 216 0.7 217 2.4 218 3.0 219 2.7 220 3.5 221 3.9 222 3.9 223 4.4 224 4.5 225 3.9 226 3.8 227 3.5 228 2.8 229 2.9 230 2.3 231 1.2 232 1.6 233 2.0 234 1.7 235 2.5 236 3.0 237 2.7 238 3.7 239 4.0 240 3.9 241 4.6 242 4.3 243 3.5 244 3.8 245 3.7 246 2.4 247 2.7 248 2.5 249 1.2 250 1.7 251 2.6 252 2.0 253 2.9 254 3.5 255 3.2 256 3.9 257 4.2 258 4.1 259 4.3 260 4.2 261 3.2 262 3.3 263 2.9 264 1.9 265 2.5 266 2.1 267 0.3 268 2.1 269 2.4 270 2.2 271 3.1 272 3.4 273 3.5 274 4.2 275 4.2 275 11.8 274 11.8 273 12.5 272 12.6 271 12.9 270 13.8 269 13.6 268 13.9 267 15.7 266 13.9 265 13.5 264 14.1 263 13.1 262 12.7 261 12.8 260 11.8 259 11.7 258 11.9 257 11.8 256 12.1 255 12.8 254 12.5 253 13.1 252 14.0 251 13.4 250 14.3 249 14.8 248 13.5 247 13.3 246 13.6 245 12.3 244 12.2 243 12.5 242 11.7 241 11.4 240 12.1 239 12.0 238 12.3 237 13.3 236 13.0 235 13.5 234 14.3 233 14.0 232 14.4 231 14.8 230 13.7 229 13.1 228 13.2 227 12.5 226 12.2 225 12.1 224 11.5 223 11.6 222 12.1 221 12.1 220 12.5 219 13.3 218 13.0 217 13.6 216 15.3 215 14.8 214 14.0 213 14.4 212 13.5 211 12.8 210 13.3 209 12.3 208 11.8 207 11.9 206 11.5 205 11.6 204 12.6 203 12.3 202 12.6 201 13.7 200 13.1 199 13.6 198 14.9 197 13.7 196 13.3 195 14.1 194 12.9 193 12.3 192 12.8 191 12.0 190 11.7 189 11.8 188 11.7 187 12.0 186 12.6 185 12.3 184 12.8 183 14.1 182 13.6 181 13.6 180 14.7 179 13.8 178 13.0 177 13.8 176 12.4 175 12.1 174 12.4 173 11.9 172 11.5 171 11.9 170 11.9 169 12.2 168 13.3 167 12.8 166 13.3 165 14.5 164 14.1 163 14.6 162 15.4 161 14.2 160 13.5 159 13.9 158 12.8 157 12.3 156 12.3 155 11.6 154 11.6 153 12.3 152 12.2 151 12.5 150 13.5 149 13.4 148 13.8 147 14.9 146 14.5 145 14.4 144 14.7 143 13.8 142 13.0 141 13.5 140 12.3 139 11.9 138 12.2 137 11.4 136 11.6 135 12.6 134 12.5 133 12.5 132 14.1 131 13.8 130 13.9 129 15.6 128 14.4 127 14.5 126 14.5 125 13.5 124 12.7 123 13.0 122 12.2 121 11.8 120 11.9 119 11.7 118 12.0 117 12.8 116 12.6 115 12.9 114 14.2 113 14.1 112 14.5 111 16.1 110 14.2 109 14.1 108 14.2 107 13.0 106 12.6 105 12.8 104 11.9 103 11.7 102 11.8 101 11.7 100 12.1 99 13.0 98 12.8 97 13.1 96 14.7 95 14.0 94 14.6 93 15.6 92 13.8 91 13.5 90 14.1 89 12.6 88 12.4 87 12.6 86 11.7 85 11.6 84 12.0 83 11.9 82 12.3 81 13.3 80 13.2 79 13.4 78 14.6 77 14.0 76 14.3 75 14.8 74 13.6 73 13.3 72 13.4 71 12.6 70 12.1 69 12.1 68 11.5 67 11.7 66 12.2 65 12.0 64 12.4 63 13.5 62 13.1 61 13.5 60 15.2 59 14.5 58 13.7 57 14.5 56 13.0 55 12.9 54 13.1 53 12.2 52 12.0 51 12.1 50 11.6 49 11.7 48 12.5 47 12.4 46 12.8 45 13.5 44 13.0 43 13.4 42 14.7 41 13.5 40 13.4 39 14.2 38 13.0 37 12.6 36 12.9 35 11.9 34 11.8 33 11.8 32 11.8 31 12.0 30 13.0 29 12.5 28 13.3 27 14.5 26 13.7 25 14.3 24 15.3 23 14.1 22 13.6 21 14.3 20 12.7 19 12.5 18 12.7 17 11.8 16 11.6 15 11.9 14 11.9 13 12.0 12 12.9 11 12.7 10 13.3 9 14.3 8 14.1 7 14.1 6 14.9 5 13.7 4 13.0 3 13.3 2 12.5 1 12.2 0 12.4Z" fill="#1f1f1f"/><path d="M0 20.6 1 20.8 2 20.5 3 19.7 4 20.0 5 19.3 6 18.1 7 18.9 8 18.9 9 18.7 10 19.7 11 20.3 12 20.1 13 21.0 14 21.1 15 21.1 16 21.4 17 21.2 18 20.3 19 20.5 20 20.3 21 18.7 22 19.4 23 18.9 24 17.7 25 18.7 26 19.3 27 18.5 28 19.7 29 20.5 30 20.0 31 21.0 32 21.2 33 21.2 34 21.2 35 21.1 36 20.1 37 20.4 38 20.0 39 18.8 40 19.6 41 19.5 42 18.3 43 19.6 44 20.0 45 19.5 46 20.2 47 20.6 48 20.5 49 21.3 50 21.4 51 20.9 52 21.0 53 20.8 54 19.9 55 20.1 56 20.0 57 18.5 58 19.3 59 18.5 60 17.8 61 19.5 62 19.9 63 19.5 64 20.6 65 21.0 66 20.8 67 21.3 68 21.5 69 20.9 70 20.9 71 20.4 72 19.6 73 19.7 74 19.4 75 18.2 76 18.7 77 19.0 78 18.4 79 19.6 80 19.8 81 19.7 82 20.7 83 21.1 84 21.0 85 21.4 86 21.3 87 20.4 88 20.6 89 20.4 90 18.9 91 19.5 92 19.2 93 17.4 94 18.4 95 19.0 96 18.3 97 19.9 98 20.2 99 20.0 100 20.9 101 21.3 102 21.2 103 21.3 104 21.1 105 20.2 106 20.4 107 20.0 108 18.8 109 18.9 110 18.8 111 16.9 112 18.5 113 18.9 114 18.8 115 20.1 116 20.4 117 20.2 118 21.0 119 21.3 120 21.1 121 21.2 122 20.8 123 20.0 124 20.3 125 19.5 126 18.5 127 18.5 128 18.6 129 17.4 130 19.1 131 19.2 132 18.9 133 20.5 134 20.5 135 20.4 136 21.4 137 21.6 138 20.8 139 21.1 140 20.7 141 19.5 142 20.0 143 19.2 144 18.3 145 18.6 146 18.5 147 18.1 148 19.2 149 19.6 150 19.5 151 20.5 152 20.8 153 20.7 154 21.4 155 21.4 156 20.7 157 20.7 158 20.2 159 19.1 160 19.5 161 18.8 162 17.6 163 18.4 164 18.9 165 18.5 166 19.7 167 20.2 168 19.7 169 20.8 170 21.1 171 21.1 172 21.5 173 21.1 174 20.6 175 20.9 176 20.6 177 19.2 178 20.0 179 19.2 180 18.3 181 19.4 182 19.4 183 18.9 184 20.2 185 20.7 186 20.4 187 21.0 188 21.3 189 21.2 190 21.3 191 21.0 192 20.2 193 20.7 194 20.1 195 18.9 196 19.7 197 19.3 198 18.1 199 19.4 200 19.9 201 19.3 202 20.4 203 20.7 204 20.4 205 21.4 206 21.5 207 21.1 208 21.2 209 20.7 210 19.7 211 20.2 212 19.5 213 18.6 214 19.0 215 18.2 216 17.7 217 19.4 218 20.0 219 19.7 220 20.5 221 20.9 222 20.9 223 21.4 224 21.5 225 20.9 226 20.8 227 20.5 228 19.8 229 19.9 230 19.3 231 18.2 232 18.6 233 19.0 234 18.7 235 19.5 236 20.0 237 19.7 238 20.7 239 21.0 240 20.9 241 21.6 242 21.3 243 20.5 244 20.8 245 20.7 246 19.4 247 19.7 248 19.5 249 18.2 250 18.7 251 19.6 252 19.0 253 19.9 254 20.5 255 20.2 256 20.9 257 21.2 258 21.1 259 21.3 260 21.2 261 20.2 262 20.3 263 19.9 264 18.9 265 19.5 266 19.1 267 17.3 268 19.1 269 19.4 270 19.2 271 20.1 272 20.4 273 20.5 274 21.2 275 21.2 275 28.8 274 28.8 273 29.5 272 29.6 271 29.9 270 30.8 269 30.6 268 30.9 267 32.7 266 30.9 265 30.5 264 31.1 263 30.1 262 29.7 261 29.8 260 28.8 259 28.7 258 28.9 257 28.8 256 29.1 255 29.8 254 29.5 253 30.1 252 31.0 251 30.4 250 31.3 249 31.8 248 30.5 247 30.3 246 30.6 245 29.3 244 29.2 243 29.5 242 28.7 241 28.4 240 29.1 239 29.0 238 29.3 237 30.3 236 30.0 235 30.5 234 31.3 233 31.0 232 31.4 231 31.8 230 30.7 229 30.1 228 30.2 227 29.5 226 29.2 225 29.1 224 28.5 223 28.6 222 29.1 221 29.1 220 29.5 219 30.3 218 30.0 217 30.6 216 32.3 215 31.8 214 31.0 213 31.4 212 30.5 211 29.8 210 30.3 209 29.3 208 28.8 207 28.9 206 28.5 205 28.6 204 29.6 203 29.3 202 29.6 201 30.7 200 30.1 199 30.6 198 31.9 197 30.7 196 30.3 195 31.1 194 29.9 193 29.3 192 29.8 191 29.0 190 28.7 189 28.8 188 28.7 187 29.0 186 29.6 185 29.3 184 29.8 183 31.1 182 30.6 181 30.6 180 31.7 179 30.8 178 30.0 177 30.8 176 29.4 175 29.1 174 29.4 173 28.9 172 28.5 171 28.9 170 28.9 169 29.2 168 30.3 167 29.8 166 30.3 165 31.5 164 31.1 163 31.6 162 32.4 161 31.2 160 30.5 159 30.9 158 29.8 157 29.3 156 29.3 155 28.6 154 28.6 153 29.3 152 29.2 151 29.5 150 30.5 149 30.4 148 30.8 147 31.9 146 31.5 145 31.4 144 31.7 143 30.8 142 30.0 141 30.5 140 29.3 139 28.9 138 29.2 137 28.4 136 28.6 135 29.6 134 29.5 133 29.5 132 31.1 131 30.8 130 30.9 129 32.6 128 31.4 127 31.5 126 31.5 125 30.5 124 29.7 123 30.0 122 29.2 121 28.8 120 28.9 119 28.7 118 29.0 117 29.8 116 29.6 115 29.9 114 31.2 113 31.1 112 31.5 111 33.1 110 31.2 109 31.1 108 31.2 107 30.0 106 29.6 105 29.8 104 28.9 103 28.7 102 28.8 101 28.7 100 29.1 99 30.0 98 29.8 97 30.1 96 31.7 95 31.0 94 31.6 93 32.6 92 30.8 91 30.5 90 31.1 89 29.6 88 29.4 87 29.6 86 28.7 85 28.6 84 29.0 83 28.9 82 29.3 81 30.3 80 30.2 79 30.4 78 31.6 77 31.0 76 31.3 75 31.8 74 30.6 73 30.3 72 30.4 71 29.6 70 29.1 69 29.1 68 28.5 67 28.7 66 29.2 65 29.0 64 29.4 63 30.5 62 30.1 61 30.5 60 32.2 59 31.5 58 30.7 57 31.5 56 30.0 55 29.9 54 30.1 53 29.2 52 29.0 51 29.1 50 28.6 49 28.7 48 29.5 47 29.4 46 29.8 45 30.5 44 30.0 43 30.4 42 31.7 41 30.5 40 30.4 39 31.2 38 30.0 37 29.6 36 29.9 35 28.9 34 28.8 33 28.8 32 28.8 31 29.0 30 30.0 29 29.5 28 30.3 27 31.5 26 30.7 25 31.3 24 32.3 23 31.1 22 30.6 21 31.3 20 29.7 19 29.5 18 29.7 17 28.8 16 28.6 15 28.9 14 28.9 13 29.0 12 29.9 11 29.7 10 30.3 9 31.3 8 31.1 7 31.1 6 31.9 5 30.7 4 30.0 3 30.3 2 29.5 1 29.2 0 29.4Z" fill="#1f1f1f"/></svg>
<i style="left:1471px;top:400px;width:2px;height:34px;background:#7f7f7f;"></i>
<i style="left:1471px;top:400px;width:277px;height:2px;background:#7f7f7f;"></i>
<i style="left:1473px;top:402px;width:275px;height:30px;background:#ffffff;"></i>
<i style="left:1471px;top:432px;width:277px;height:2px;background:#7f7f7f;"></i>
<i style="left:1471px;top:434px;width:277px;height:36px;background:#b9d3f2;"></i>
<i style="left:1471px;top:434px;width:2px;height:36px;background:#63758c;"></i>
<svg style="left:1506px;top:434px" width="210" height="36"><path d="M1 0v36M35 0v36M70 0v36M105 0v36M139 0v36M174 0v36M209 0v36" stroke="#8ea8c8" stroke-width="2"/></svg>
<div style="left:1473px;top:402px;width:275px;height:30px;overflow:hidden"><span style="left:5px;top:3.90px;font-size:20px;line-height:22.34px;color:#242424;white-space:nowrap;letter-spacing:0.75px">003_b__Drum_Beat_117bpm</span></div>
<svg style="left:1473px;top:434px" width="276" height="36"><path d="M0 3.8 1 3.8 2 3.6 3 2.2 4 2.9 5 2.5 6 0.7 7 1.3 8 1.7 9 1.3 10 2.7 11 3.0 12 2.8 13 3.7 14 4.1 15 4.1 16 4.5 17 4.3 18 3.4 19 3.4 20 3.4 21 1.8 22 2.5 23 1.6 24 0.2 25 1.3 26 2.2 27 1.6 28 2.9 29 3.5 30 3.2 31 4.1 32 4.3 33 4.3 34 4.2 35 4.1 36 3.3 37 3.3 38 2.8 39 1.7 40 2.2 41 1.6 42 0.7 43 2.1 44 2.6 45 2.1 46 3.1 47 3.5 48 3.4 49 4.3 50 4.5 51 4.0 52 4.2 53 3.7 54 2.9 55 3.2 56 2.8 57 1.7 58 2.2 59 1.3 60 0.7 61 2.4 62 3.0 63 2.6 64 3.5 65 4.0 66 3.6 67 4.4 68 4.5 69 3.9 70 3.8 71 3.6 72 2.7 73 3.1 74 2.3 75 1.3 76 2.0 77 2.1 78 1.4 79 2.6 80 3.0 81 2.8 82 3.9 83 4.0 84 3.9 85 4.5 86 4.3 87 3.6 88 3.8 89 3.4 90 2.6 91 2.5 92 2.3 93 1.0 94 1.9 95 2.3 96 1.8 97 3.1 98 3.2 99 3.2 100 4.0 101 4.3 102 4.1 103 4.4 104 4.2 105 3.4 106 3.4 107 3.4 108 1.9 109 2.7 110 2.5 111 1.0 112 2.5 113 2.8 114 2.1 115 3.2 116 3.5 117 3.4 118 4.3 119 4.4 120 4.0 121 4.2 122 3.8 123 3.0 124 3.1 125 2.5 126 1.5 127 1.7 128 1.1 129 0.2 130 1.7 131 2.3 132 2.3 133 3.2 134 3.7 135 3.4 136 4.3 137 4.5 138 3.9 139 4.1 140 3.7 141 2.4 142 2.7 143 2.5 144 1.2 145 1.6 146 1.8 147 1.3 148 2.5 149 2.6 150 2.5 151 3.6 152 4.0 153 3.7 154 4.4 155 4.4 156 3.7 157 3.8 158 3.5 159 2.0 160 2.3 161 2.0 162 0.4 163 1.4 164 1.9 165 1.3 166 2.8 167 3.1 168 2.6 169 3.6 170 4.0 171 4.1 172 4.3 173 4.3 174 3.5 175 3.5 176 3.3 177 2.2 178 2.3 179 1.6 180 0.5 181 1.5 182 2.3 183 1.9 184 3.1 185 3.5 186 3.2 187 4.0 188 4.2 189 4.2 190 4.3 191 4.1 192 3.2 193 3.5 194 3.1 195 1.8 196 2.1 197 1.8 198 0.9 199 2.1 200 2.9 201 2.2 202 3.4 203 3.6 204 3.5 205 4.2 206 4.6 207 4.0 208 4.1 209 3.7 210 2.8 211 3.2 212 2.9 213 1.5 214 1.8 215 1.5 216 1.0 217 2.4 218 2.6 219 2.3 220 3.4 221 4.0 222 3.9 223 4.3 224 4.5 225 3.7 226 3.8 227 3.6 228 2.6 229 3.0 230 2.7 231 1.4 232 2.0 233 2.2 234 1.7 235 2.8 236 3.2 237 3.0 238 3.9 239 4.0 240 3.9 241 4.6 242 4.2 243 3.7 244 3.9 245 3.4 246 2.2 247 2.6 248 2.2 249 0.7 250 1.8 251 2.0 252 1.6 253 3.0 254 3.2 255 3.2 256 4.0 257 4.4 258 4.3 259 4.3 260 4.0 261 3.3 262 3.5 263 3.1 264 1.5 265 1.9 266 1.8 267 0.3 268 1.7 269 2.4 270 1.9 271 2.8 272 3.5 273 3.3 274 4.0 275 4.0 275 12.0 274 12.0 273 12.7 272 12.5 271 13.2 270 14.1 269 13.6 268 14.3 267 15.7 266 14.2 265 14.1 264 14.5 263 12.9 262 12.5 261 12.7 260 12.0 259 11.7 258 11.7 257 11.6 256 12.0 255 12.8 254 12.8 253 13.0 252 14.4 251 14.0 250 14.2 249 15.3 248 13.8 247 13.4 246 13.8 245 12.6 244 12.1 243 12.3 242 11.8 241 11.4 240 12.1 239 12.0 238 12.1 237 13.0 236 12.8 235 13.2 234 14.3 233 13.8 232 14.0 231 14.6 230 13.3 229 13.0 228 13.4 227 12.4 226 12.2 225 12.3 224 11.5 223 11.7 222 12.1 221 12.0 220 12.6 219 13.7 218 13.4 217 13.6 216 15.0 215 14.5 214 14.2 213 14.5 212 13.1 211 12.8 210 13.2 209 12.3 208 11.9 207 12.0 206 11.4 205 11.8 204 12.5 203 12.4 202 12.6 201 13.8 200 13.1 199 13.9 198 15.1 197 14.2 196 13.9 195 14.2 194 12.9 193 12.5 192 12.8 191 11.9 190 11.7 189 11.8 188 11.8 187 12.0 186 12.8 185 12.5 184 12.9 183 14.1 182 13.7 181 14.5 180 15.5 179 14.4 178 13.7 177 13.8 176 12.7 175 12.5 174 12.5 173 11.7 172 11.7 171 11.9 170 12.0 169 12.4 168 13.4 167 12.9 166 13.2 165 14.7 164 14.1 163 14.6 162 15.6 161 14.0 160 13.7 159 14.0 158 12.5 157 12.2 156 12.3 155 11.6 154 11.6 153 12.3 152 12.0 151 12.4 150 13.5 149 13.4 148 13.5 147 14.7 146 14.2 145 14.4 144 14.8 143 13.5 142 13.3 141 13.6 140 12.3 139 11.9 138 12.1 137 11.5 136 11.7 135 12.6 134 12.3 133 12.8 132 13.7 131 13.7 130 14.3 129 15.8 128 14.9 127 14.3 126 14.5 125 13.5 124 12.9 123 13.0 122 12.2 121 11.8 120 12.0 119 11.6 118 11.7 117 12.6 116 12.5 115 12.8 114 13.9 113 13.2 112 13.5 111 15.0 110 13.5 109 13.3 108 14.1 107 12.6 106 12.6 105 12.6 104 11.8 103 11.6 102 11.9 101 11.7 100 12.0 99 12.8 98 12.8 97 12.9 96 14.2 95 13.7 94 14.1 93 15.0 92 13.7 91 13.5 90 13.4 89 12.6 88 12.2 87 12.4 86 11.7 85 11.5 84 12.1 83 12.0 82 12.1 81 13.2 80 13.0 79 13.4 78 14.6 77 13.9 76 14.0 75 14.7 74 13.7 73 12.9 72 13.3 71 12.4 70 12.2 69 12.1 68 11.5 67 11.6 66 12.4 65 12.0 64 12.5 63 13.4 62 13.0 61 13.6 60 15.3 59 14.7 58 13.8 57 14.3 56 13.2 55 12.8 54 13.1 53 12.3 52 11.8 51 12.0 50 11.5 49 11.7 48 12.6 47 12.5 46 12.9 45 13.9 44 13.4 43 13.9 42 15.3 41 14.4 40 13.8 39 14.3 38 13.2 37 12.7 36 12.7 35 11.9 34 11.8 33 11.7 32 11.7 31 11.9 30 12.8 29 12.5 28 13.1 27 14.4 26 13.8 25 14.7 24 15.8 23 14.4 22 13.5 21 14.2 20 12.6 19 12.6 18 12.6 17 11.7 16 11.5 15 11.9 14 11.9 13 12.3 12 13.2 11 13.0 10 13.3 9 14.7 8 14.3 7 14.7 6 15.3 5 13.5 4 13.1 3 13.8 2 12.4 1 12.2 0 12.2Z" fill="#1f1f1f"/><path d="M0 20.8 1 20.8 2 20.6 3 19.2 4 19.9 5 19.5 6 17.7 7 18.3 8 18.7 9 18.3 10 19.7 11 20.0 12 19.8 13 20.7 14 21.1 15 21.1 16 21.5 17 21.3 18 20.4 19 20.4 20 20.4 21 18.8 22 19.5 23 18.6 24 17.2 25 18.3 26 19.2 27 18.6 28 19.9 29 20.5 30 20.2 31 21.1 32 21.3 33 21.3 34 21.2 35 21.1 36 20.3 37 20.3 38 19.8 39 18.7 40 19.2 41 18.6 42 17.7 43 19.1 44 19.6 45 19.1 46 20.1 47 20.5 48 20.4 49 21.3 50 21.5 51 21.0 52 21.2 53 20.7 54 19.9 55 20.2 56 19.8 57 18.7 58 19.2 59 18.3 60 17.7 61 19.4 62 20.0 63 19.6 64 20.5 65 21.0 66 20.6 67 21.4 68 21.5 69 20.9 70 20.8 71 20.6 72 19.7 73 20.1 74 19.3 75 18.3 76 19.0 77 19.1 78 18.4 79 19.6 80 20.0 81 19.8 82 20.9 83 21.0 84 20.9 85 21.5 86 21.3 87 20.6 88 20.8 89 20.4 90 19.6 91 19.5 92 19.3 93 18.0 94 18.9 95 19.3 96 18.8 97 20.1 98 20.2 99 20.2 100 21.0 101 21.3 102 21.1 103 21.4 104 21.2 105 20.4 106 20.4 107 20.4 108 18.9 109 19.7 110 19.5 111 18.0 112 19.5 113 19.8 114 19.1 115 20.2 116 20.5 117 20.4 118 21.3 119 21.4 120 21.0 121 21.2 122 20.8 123 20.0 124 20.1 125 19.5 126 18.5 127 18.7 128 18.1 129 17.2 130 18.7 131 19.3 132 19.3 133 20.2 134 20.7 135 20.4 136 21.3 137 21.5 138 20.9 139 21.1 140 20.7 141 19.4 142 19.7 143 19.5 144 18.2 145 18.6 146 18.8 147 18.3 148 19.5 149 19.6 150 19.5 151 20.6 152 21.0 153 20.7 154 21.4 155 21.4 156 20.7 157 20.8 158 20.5 159 19.0 160 19.3 161 19.0 162 17.4 163 18.4 164 18.9 165 18.3 166 19.8 167 20.1 168 19.6 169 20.6 170 21.0 171 21.1 172 21.3 173 21.3 174 20.5 175 20.5 176 20.3 177 19.2 178 19.3 179 18.6 180 17.5 181 18.5 182 19.3 183 18.9 184 20.1 185 20.5 186 20.2 187 21.0 188 21.2 189 21.2 190 21.3 191 21.1 192 20.2 193 20.5 194 20.1 195 18.8 196 19.1 197 18.8 198 17.9 199 19.1 200 19.9 201 19.2 202 20.4 203 20.6 204 20.5 205 21.2 206 21.6 207 21.0 208 21.1 209 20.7 210 19.8 211 20.2 212 19.9 213 18.5 214 18.8 215 18.5 216 18.0 217 19.4 218 19.6 219 19.3 220 20.4 221 21.0 222 20.9 223 21.3 224 21.5 225 20.7 226 20.8 227 20.6 228 19.6 229 20.0 230 19.7 231 18.4 232 19.0 233 19.2 234 18.7 235 19.8 236 20.2 237 20.0 238 20.9 239 21.0 240 20.9 241 21.6 242 21.2 243 20.7 244 20.9 245 20.4 246 19.2 247 19.6 248 19.2 249 17.7 250 18.8 251 19.0 252 18.6 253 20.0 254 20.2 255 20.2 256 21.0 257 21.4 258 21.3 259 21.3 260 21.0 261 20.3 262 20.5 263 20.1 264 18.5 265 18.9 266 18.8 267 17.3 268 18.7 269 19.4 270 18.9 271 19.8 272 20.5 273 20.3 274 21.0 275 21.0 275 29.0 274 29.0 273 29.7 272 29.5 271 30.2 270 31.1 269 30.6 268 31.3 267 32.7 266 31.2 265 31.1 264 31.5 263 29.9 262 29.5 261 29.7 260 29.0 259 28.7 258 28.7 257 28.6 256 29.0 255 29.8 254 29.8 253 30.0 252 31.4 251 31.0 250 31.2 249 32.3 248 30.8 247 30.4 246 30.8 245 29.6 244 29.1 243 29.3 242 28.8 241 28.4 240 29.1 239 29.0 238 29.1 237 30.0 236 29.8 235 30.2 234 31.3 233 30.8 232 31.0 231 31.6 230 30.3 229 30.0 228 30.4 227 29.4 226 29.2 225 29.3 224 28.5 223 28.7 222 29.1 221 29.0 220 29.6 219 30.7 218 30.4 217 30.6 216 32.0 215 31.5 214 31.2 213 31.5 212 30.1 211 29.8 210 30.2 209 29.3 208 28.9 207 29.0 206 28.4 205 28.8 204 29.5 203 29.4 202 29.6 201 30.8 200 30.1 199 30.9 198 32.1 197 31.2 196 30.9 195 31.2 194 29.9 193 29.5 192 29.8 191 28.9 190 28.7 189 28.8 188 28.8 187 29.0 186 29.8 185 29.5 184 29.9 183 31.1 182 30.7 181 31.5 180 32.5 179 31.4 178 30.7 177 30.8 176 29.7 175 29.5 174 29.5 173 28.7 172 28.7 171 28.9 170 29.0 169 29.4 168 30.4 167 29.9 166 30.2 165 31.7 164 31.1 163 31.6 162 32.6 161 31.0 160 30.7 159 31.0 158 29.5 157 29.2 156 29.3 155 28.6 154 28.6 153 29.3 152 29.0 151 29.4 150 30.5 149 30.4 148 30.5 147 31.7 146 31.2 145 31.4 144 31.8 143 30.5 142 30.3 141 30.6 140 29.3 139 28.9 138 29.1 137 28.5 136 28.7 135 29.6 134 29.3 133 29.8 132 30.7 131 30.7 130 31.3 129 32.8 128 31.9 127 31.3 126 31.5 125 30.5 124 29.9 123 30.0 122 29.2 121 28.8 120 29.0 119 28.6 118 28.7 117 29.6 116 29.5 115 29.8 114 30.9 113 30.2 112 30.5 111 32.0 110 30.5 109 30.3 108 31.1 107 29.6 106 29.6 105 29.6 104 28.8 103 28.6 102 28.9 101 28.7 100 29.0 99 29.8 98 29.8 97 29.9 96 31.2 95 30.7 94 31.1 93 32.0 92 30.7 91 30.5 90 30.4 89 29.6 88 29.2 87 29.4 86 28.7 85 28.5 84 29.1 83 29.0 82 29.1 81 30.2 80 30.0 79 30.4 78 31.6 77 30.9 76 31.0 75 31.7 74 30.7 73 29.9 72 30.3 71 29.4 70 29.2 69 29.1 68 28.5 67 28.6 66 29.4 65 29.0 64 29.5 63 30.4 62 30.0 61 30.6 60 32.3 59 31.7 58 30.8 57 31.3 56 30.2 55 29.8 54 30.1 53 29.3 52 28.8 51 29.0 50 28.5 49 28.7 48 29.6 47 29.5 46 29.9 45 30.9 44 30.4 43 30.9 42 32.3 41 31.4 40 30.8 39 31.3 38 30.2 37 29.7 36 29.7 35 28.9 34 28.8 33 28.7 32 28.7 31 28.9 30 29.8 29 29.5 28 30.1 27 31.4 26 30.8 25 31.7 24 32.8 23 31.4 22 30.5 21 31.2 20 29.6 19 29.6 18 29.6 17 28.7 16 28.5 15 28.9 14 28.9 13 29.3 12 30.2 11 30.0 10 30.3 9 31.7 8 31.3 7 31.7 6 32.3 5 30.5 4 30.1 3 30.8 2 29.4 1 29.2 0 29.2Z" fill="#1f1f1f"/></svg>
<i style="left:18px;top:474px;width:552px;height:2px;background:#6e5523;"></i>
<i style="left:18px;top:476px;width:552px;height:30px;background:#c49b44;"></i>
<i style="left:18px;top:506px;width:552px;height:2px;background:#6e5523;"></i>
<i style="left:18px;top:508px;width:552px;height:36px;background:#989774;"></i>
<svg style="left:50px;top:508px" width="488" height="36"><path d="M1 0v36M36 0v36M71 0v36M105 0v36M140 0v36M175 0v36M209 0v36M245 0v36M279 0v36M313 0v36M348 0v36M383 0v36M417 0v36M452 0v36M487 0v36" stroke="#6e7a70" stroke-width="2"/></svg>
<i style="left:20px;top:532px;width:30px;height:2px;background:#4f5040;"></i>
<i style="left:52px;top:526px;width:33px;height:2px;background:#4f5040;"></i>
<i style="left:87px;top:540px;width:33px;height:2px;background:#4f5040;"></i>
<i style="left:122px;top:540px;width:32px;height:2px;background:#4f5040;"></i>
<i style="left:156px;top:532px;width:33px;height:2px;background:#4f5040;"></i>
<i style="left:191px;top:526px;width:33px;height:2px;background:#4f5040;"></i>
<i style="left:226px;top:540px;width:32px;height:2px;background:#4f5040;"></i>
<i style="left:260px;top:540px;width:34px;height:2px;background:#4f5040;"></i>
<i style="left:296px;top:532px;width:32px;height:2px;background:#4f5040;"></i>
<i style="left:330px;top:526px;width:32px;height:2px;background:#4f5040;"></i>
<i style="left:364px;top:540px;width:33px;height:2px;background:#4f5040;"></i>
<i style="left:399px;top:540px;width:33px;height:2px;background:#4f5040;"></i>
<i style="left:434px;top:532px;width:32px;height:2px;background:#4f5040;"></i>
<i style="left:468px;top:526px;width:33px;height:2px;background:#4f5040;"></i>
<i style="left:503px;top:540px;width:33px;height:2px;background:#4f5040;"></i>
<i style="left:538px;top:540px;width:32px;height:2px;background:#4f5040;"></i>
<i style="left:570px;top:474px;width:2px;height:34px;background:#6e5523;"></i>
<i style="left:570px;top:474px;width:277px;height:2px;background:#6e5523;"></i>
<i style="left:572px;top:476px;width:275px;height:30px;background:#c49b44;"></i>
<i style="left:570px;top:506px;width:277px;height:2px;background:#6e5523;"></i>
<i style="left:570px;top:508px;width:277px;height:36px;background:#989774;"></i>
<i style="left:570px;top:508px;width:2px;height:36px;background:#6e7a70;"></i>
<svg style="left:605px;top:508px" width="210" height="36"><path d="M1 0v36M36 0v36M70 0v36M105 0v36M139 0v36M174 0v36M209 0v36" stroke="#6e7a70" stroke-width="2"/></svg>
<i style="left:572px;top:532px;width:33px;height:2px;background:#4f5040;"></i>
<i style="left:607px;top:526px;width:33px;height:2px;background:#4f5040;"></i>
<i style="left:642px;top:540px;width:32px;height:2px;background:#4f5040;"></i>
<i style="left:676px;top:540px;width:33px;height:2px;background:#4f5040;"></i>
<i style="left:711px;top:532px;width:32px;height:2px;background:#4f5040;"></i>
<i style="left:745px;top:526px;width:33px;height:2px;background:#4f5040;"></i>
<i style="left:780px;top:540px;width:33px;height:2px;background:#4f5040;"></i>
<i style="left:815px;top:540px;width:32px;height:2px;background:#4f5040;"></i>
<i style="left:847px;top:474px;width:2px;height:34px;background:#6e5523;"></i>
<i style="left:847px;top:474px;width:70px;height:2px;background:#6e5523;"></i>
<i style="left:849px;top:476px;width:68px;height:30px;background:#c49b44;"></i>
<i style="left:847px;top:506px;width:70px;height:2px;background:#6e5523;"></i>
<i style="left:847px;top:508px;width:70px;height:36px;background:#989774;"></i>
<i style="left:847px;top:508px;width:2px;height:36px;background:#6e7a70;"></i>
<svg style="left:882px;top:508px" width="2" height="36"><path d="M1 0v36" stroke="#6e7a70" stroke-width="2"/></svg>
<i style="left:849px;top:532px;width:33px;height:2px;background:#4f5040;"></i>
<i style="left:884px;top:526px;width:33px;height:2px;background:#4f5040;"></i>
<i style="left:917px;top:474px;width:2px;height:34px;background:#6e5523;"></i>
<i style="left:917px;top:474px;width:277px;height:2px;background:#6e5523;"></i>
<i style="left:919px;top:476px;width:275px;height:30px;background:#c49b44;"></i>
<i style="left:917px;top:506px;width:277px;height:2px;background:#6e5523;"></i>
<i style="left:917px;top:508px;width:277px;height:36px;background:#989774;"></i>
<i style="left:917px;top:508px;width:2px;height:36px;background:#6e7a70;"></i>
<svg style="left:951px;top:508px" width="210" height="36"><path d="M1 0v36M36 0v36M71 0v36M105 0v36M140 0v36M175 0v36M209 0v36" stroke="#6e7a70" stroke-width="2"/></svg>
<i style="left:919px;top:540px;width:32px;height:2px;background:#4f5040;"></i>
<i style="left:953px;top:540px;width:33px;height:2px;background:#4f5040;"></i>
<i style="left:988px;top:532px;width:33px;height:2px;background:#4f5040;"></i>
<i style="left:1023px;top:526px;width:32px;height:2px;background:#4f5040;"></i>
<i style="left:1057px;top:540px;width:33px;height:2px;background:#4f5040;"></i>
<i style="left:1092px;top:540px;width:33px;height:2px;background:#4f5040;"></i>
<i style="left:1127px;top:532px;width:32px;height:2px;background:#4f5040;"></i>
<i style="left:1161px;top:526px;width:33px;height:2px;background:#4f5040;"></i>
<i style="left:1194px;top:474px;width:2px;height:34px;background:#6e5523;"></i>
<i style="left:1194px;top:474px;width:277px;height:2px;background:#6e5523;"></i>
<i style="left:1196px;top:476px;width:275px;height:30px;background:#c49b44;"></i>
<i style="left:1194px;top:506px;width:277px;height:2px;background:#6e5523;"></i>
<i style="left:1194px;top:508px;width:277px;height:36px;background:#989774;"></i>
<i style="left:1194px;top:508px;width:2px;height:36px;background:#6e7a70;"></i>
<svg style="left:1229px;top:508px" width="209" height="36"><path d="M1 0v36M35 0v36M70 0v36M105 0v36M139 0v36M174 0v36M208 0v36" stroke="#6e7a70" stroke-width="2"/></svg>
<i style="left:1196px;top:540px;width:33px;height:2px;background:#4f5040;"></i>
<i style="left:1231px;top:540px;width:32px;height:2px;background:#4f5040;"></i>
<i style="left:1265px;top:532px;width:33px;height:2px;background:#4f5040;"></i>
<i style="left:1300px;top:526px;width:33px;height:2px;background:#4f5040;"></i>
<i style="left:1335px;top:540px;width:32px;height:2px;background:#4f5040;"></i>
<i style="left:1369px;top:540px;width:33px;height:2px;background:#4f5040;"></i>
<i style="left:1404px;top:532px;width:32px;height:2px;background:#4f5040;"></i>
<i style="left:1438px;top:526px;width:33px;height:2px;background:#4f5040;"></i>
<i style="left:1471px;top:474px;width:2px;height:34px;background:#6e5523;"></i>
<i style="left:1471px;top:474px;width:277px;height:2px;background:#6e5523;"></i>
<i style="left:1473px;top:476px;width:275px;height:30px;background:#c49b44;"></i>
<i style="left:1471px;top:506px;width:277px;height:2px;background:#6e5523;"></i>
<i style="left:1471px;top:508px;width:277px;height:36px;background:#989774;"></i>
<i style="left:1471px;top:508px;width:2px;height:36px;background:#6e7a70;"></i>
<svg style="left:1506px;top:508px" width="210" height="36"><path d="M1 0v36M35 0v36M70 0v36M105 0v36M139 0v36M174 0v36M209 0v36" stroke="#6e7a70" stroke-width="2"/></svg>
<i style="left:1473px;top:540px;width:33px;height:2px;background:#4f5040;"></i>
<i style="left:1508px;top:540px;width:32px;height:2px;background:#4f5040;"></i>
<i style="left:1542px;top:532px;width:33px;height:2px;background:#4f5040;"></i>
<i style="left:1577px;top:526px;width:33px;height:2px;background:#4f5040;"></i>
<i style="left:1612px;top:540px;width:32px;height:2px;background:#4f5040;"></i>
<i style="left:1646px;top:540px;width:33px;height:2px;background:#4f5040;"></i>
<i style="left:1681px;top:532px;width:33px;height:2px;background:#4f5040;"></i>
<i style="left:1716px;top:526px;width:32px;height:2px;background:#4f5040;"></i>
<i style="left:2026px;top:548px;width:2px;height:34px;background:#4e6687;"></i>
<i style="left:2026px;top:548px;width:242px;height:2px;background:#4e6687;"></i>
<i style="left:2028px;top:550px;width:240px;height:30px;background:#99c3f9;"></i>
<i style="left:2026px;top:580px;width:242px;height:2px;background:#4e6687;"></i>
<i style="left:2026px;top:582px;width:242px;height:36px;background:linear-gradient(#7aabec,#80b3f4);"></i>
<i style="left:2026px;top:582px;width:2px;height:36px;background:#5e88c0;"></i>
<svg style="left:2060px;top:582px" width="175" height="36"><path d="M1 0v36M36 0v36M70 0v36M105 0v36M140 0v36M174 0v36" stroke="#5e88c0" stroke-width="2"/></svg>
<i style="left:2028px;top:614px;width:32px;height:2px;background:#4d6a92;"></i>
<i style="left:2062px;top:612px;width:32px;height:2px;background:#4d6a92;"></i>
<i style="left:2097px;top:616px;width:32px;height:2px;background:#4d6a92;"></i>
<i style="left:2131px;top:616px;width:32px;height:2px;background:#4d6a92;"></i>
<i style="left:2166px;top:614px;width:32px;height:2px;background:#4d6a92;"></i>
<i style="left:2201px;top:612px;width:32px;height:2px;background:#4d6a92;"></i>
<i style="left:2235px;top:616px;width:32px;height:2px;background:#4d6a92;"></i>
<div style="left:2268px;top:548px;width:106px;height:34px;background:repeating-linear-gradient(135deg,#1d1d1d 0 4.25px,#445b7c 4.25px 8.5px);background-attachment:fixed"></div>
<div style="left:2268px;top:572px;width:106px;height:10px;background:linear-gradient(rgba(20,20,20,0),rgba(20,20,20,0.45))"></div>
<i style="left:2268px;top:582px;width:106px;height:36px;background:linear-gradient(#7aabec,#80b3f4);"></i>
<svg style="left:2268px;top:582px" width="106" height="36"><path d="M1 0v36M36 0v36M70 0v36M105 0v36" stroke="#5e88c0" stroke-width="2"/></svg>
<i style="left:294px;top:622px;width:2px;height:34px;background:#4e6687;"></i>
<i style="left:294px;top:622px;width:276px;height:2px;background:#4e6687;"></i>
<i style="left:296px;top:624px;width:274px;height:30px;background:#99c3f9;"></i>
<i style="left:294px;top:654px;width:276px;height:2px;background:#4e6687;"></i>
<i style="left:294px;top:656px;width:276px;height:36px;background:linear-gradient(#7aabec,#80b3f4);"></i>
<i style="left:294px;top:656px;width:2px;height:36px;background:#5e88c0;"></i>
<svg style="left:328px;top:656px" width="210" height="36"><path d="M1 0v36M35 0v36M70 0v36M105 0v36M139 0v36M174 0v36M209 0v36" stroke="#5e88c0" stroke-width="2"/></svg>
<i style="left:301px;top:659px;width:2px;height:2px;background:#3b4b63;"></i>
<i style="left:307px;top:667px;width:2px;height:2px;background:#3b4b63;"></i>
<i style="left:313px;top:665px;width:2px;height:2px;background:#3b4b63;"></i>
<i style="left:319px;top:665px;width:2px;height:2px;background:#3b4b63;"></i>
<i style="left:323px;top:667px;width:2px;height:2px;background:#3b4b63;"></i>
<i style="left:328px;top:661px;width:2px;height:2px;background:#3b4b63;"></i>
<i style="left:337px;top:661px;width:2px;height:2px;background:#3b4b63;"></i>
<i style="left:344px;top:663px;width:2px;height:2px;background:#3b4b63;"></i>
<i style="left:348px;top:663px;width:2px;height:2px;background:#3b4b63;"></i>
<i style="left:354px;top:663px;width:2px;height:2px;background:#3b4b63;"></i>
<i style="left:358px;top:663px;width:2px;height:2px;background:#3b4b63;"></i>
<i style="left:364px;top:657px;width:2px;height:2px;background:#3b4b63;"></i>
<i style="left:372px;top:657px;width:2px;height:2px;background:#3b4b63;"></i>
<i style="left:379px;top:663px;width:2px;height:2px;background:#3b4b63;"></i>
<i style="left:382px;top:663px;width:2px;height:2px;background:#3b4b63;"></i>
<i style="left:388px;top:663px;width:2px;height:2px;background:#3b4b63;"></i>
<i style="left:394px;top:663px;width:2px;height:2px;background:#3b4b63;"></i>
<i style="left:399px;top:657px;width:2px;height:2px;background:#3b4b63;"></i>
<i style="left:407px;top:657px;width:2px;height:2px;background:#3b4b63;"></i>
<i style="left:413px;top:663px;width:2px;height:2px;background:#3b4b63;"></i>
<i style="left:417px;top:663px;width:2px;height:2px;background:#3b4b63;"></i>
<i style="left:423px;top:663px;width:2px;height:2px;background:#3b4b63;"></i>
<i style="left:429px;top:663px;width:2px;height:2px;background:#3b4b63;"></i>
<i style="left:439px;top:659px;width:2px;height:2px;background:#3b4b63;"></i>
<i style="left:445px;top:667px;width:2px;height:2px;background:#3b4b63;"></i>
<i style="left:451px;top:665px;width:2px;height:2px;background:#3b4b63;"></i>
<i style="left:457px;top:665px;width:2px;height:2px;background:#3b4b63;"></i>
<i style="left:461px;top:667px;width:2px;height:2px;background:#3b4b63;"></i>
<i style="left:467px;top:661px;width:2px;height:2px;background:#3b4b63;"></i>
<i style="left:476px;top:661px;width:2px;height:2px;background:#3b4b63;"></i>
<i style="left:483px;top:663px;width:2px;height:2px;background:#3b4b63;"></i>
<i style="left:486px;top:663px;width:2px;height:2px;background:#3b4b63;"></i>
<i style="left:493px;top:663px;width:2px;height:2px;background:#3b4b63;"></i>
<i style="left:496px;top:663px;width:2px;height:2px;background:#3b4b63;"></i>
<i style="left:503px;top:657px;width:2px;height:2px;background:#3b4b63;"></i>
<i style="left:511px;top:657px;width:2px;height:2px;background:#3b4b63;"></i>
<i style="left:517px;top:663px;width:2px;height:2px;background:#3b4b63;"></i>
<i style="left:521px;top:663px;width:2px;height:2px;background:#3b4b63;"></i>
<i style="left:527px;top:663px;width:2px;height:2px;background:#3b4b63;"></i>
<i style="left:533px;top:663px;width:2px;height:2px;background:#3b4b63;"></i>
<i style="left:537px;top:657px;width:2px;height:2px;background:#3b4b63;"></i>
<i style="left:546px;top:657px;width:2px;height:2px;background:#3b4b63;"></i>
<i style="left:552px;top:663px;width:2px;height:2px;background:#3b4b63;"></i>
<i style="left:555px;top:663px;width:2px;height:2px;background:#3b4b63;"></i>
<i style="left:561px;top:663px;width:2px;height:2px;background:#3b4b63;"></i>
<i style="left:568px;top:663px;width:2px;height:2px;background:#3b4b63;"></i>
<div style="left:570px;top:622px;width:624px;height:34px;background:repeating-linear-gradient(135deg,#1d1d1d 0 4.25px,#445b7c 4.25px 8.5px);background-attachment:fixed"></div>
<div style="left:570px;top:646px;width:624px;height:10px;background:linear-gradient(rgba(20,20,20,0),rgba(20,20,20,0.45))"></div>
<i style="left:570px;top:656px;width:624px;height:36px;background:linear-gradient(#7aabec,#80b3f4);"></i>
<svg style="left:570px;top:656px" width="591" height="36"><path d="M1 0v36M36 0v36M71 0v36M105 0v36M140 0v36M174 0v36M209 0v36M244 0v36M278 0v36M313 0v36M348 0v36M382 0v36M417 0v36M452 0v36M486 0v36M521 0v36M556 0v36M590 0v36" stroke="#5e88c0" stroke-width="2"/></svg>
<i style="left:1194px;top:622px;width:2px;height:34px;background:#4e6687;"></i>
<i style="left:1194px;top:622px;width:277px;height:2px;background:#4e6687;"></i>
<i style="left:1196px;top:624px;width:275px;height:30px;background:#99c3f9;"></i>
<i style="left:1194px;top:654px;width:277px;height:2px;background:#4e6687;"></i>
<i style="left:1194px;top:656px;width:277px;height:36px;background:linear-gradient(#7aabec,#80b3f4);"></i>
<i style="left:1194px;top:656px;width:2px;height:36px;background:#5e88c0;"></i>
<svg style="left:1229px;top:656px" width="209" height="36"><path d="M1 0v36M35 0v36M70 0v36M105 0v36M139 0v36M174 0v36M208 0v36" stroke="#5e88c0" stroke-width="2"/></svg>
<i style="left:1201px;top:659px;width:2px;height:2px;background:#3b4b63;"></i>
<i style="left:1207px;top:667px;width:2px;height:2px;background:#3b4b63;"></i>
<i style="left:1213px;top:665px;width:2px;height:2px;background:#3b4b63;"></i>
<i style="left:1219px;top:665px;width:2px;height:2px;background:#3b4b63;"></i>
<i style="left:1223px;top:667px;width:2px;height:2px;background:#3b4b63;"></i>
<i style="left:1229px;top:661px;width:2px;height:2px;background:#3b4b63;"></i>
<i style="left:1238px;top:661px;width:2px;height:2px;background:#3b4b63;"></i>
<i style="left:1245px;top:663px;width:2px;height:2px;background:#3b4b63;"></i>
<i style="left:1248px;top:663px;width:2px;height:2px;background:#3b4b63;"></i>
<i style="left:1255px;top:663px;width:2px;height:2px;background:#3b4b63;"></i>
<i style="left:1259px;top:663px;width:2px;height:2px;background:#3b4b63;"></i>
<i style="left:1265px;top:657px;width:2px;height:2px;background:#3b4b63;"></i>
<i style="left:1273px;top:657px;width:2px;height:2px;background:#3b4b63;"></i>
<i style="left:1280px;top:663px;width:2px;height:2px;background:#3b4b63;"></i>
<i style="left:1283px;top:663px;width:2px;height:2px;background:#3b4b63;"></i>
<i style="left:1289px;top:663px;width:2px;height:2px;background:#3b4b63;"></i>
<i style="left:1295px;top:663px;width:2px;height:2px;background:#3b4b63;"></i>
<i style="left:1300px;top:657px;width:2px;height:2px;background:#3b4b63;"></i>
<i style="left:1308px;top:657px;width:2px;height:2px;background:#3b4b63;"></i>
<i style="left:1314px;top:663px;width:2px;height:2px;background:#3b4b63;"></i>
<i style="left:1318px;top:663px;width:2px;height:2px;background:#3b4b63;"></i>
<i style="left:1324px;top:663px;width:2px;height:2px;background:#3b4b63;"></i>
<i style="left:1330px;top:663px;width:2px;height:2px;background:#3b4b63;"></i>
<i style="left:1340px;top:659px;width:2px;height:2px;background:#3b4b63;"></i>
<i style="left:1346px;top:667px;width:2px;height:2px;background:#3b4b63;"></i>
<i style="left:1352px;top:665px;width:2px;height:2px;background:#3b4b63;"></i>
<i style="left:1358px;top:665px;width:2px;height:2px;background:#3b4b63;"></i>
<i style="left:1362px;top:667px;width:2px;height:2px;background:#3b4b63;"></i>
<i style="left:1368px;top:661px;width:2px;height:2px;background:#3b4b63;"></i>
<i style="left:1377px;top:661px;width:2px;height:2px;background:#3b4b63;"></i>
<i style="left:1384px;top:663px;width:2px;height:2px;background:#3b4b63;"></i>
<i style="left:1387px;top:663px;width:2px;height:2px;background:#3b4b63;"></i>
<i style="left:1393px;top:663px;width:2px;height:2px;background:#3b4b63;"></i>
<i style="left:1397px;top:663px;width:2px;height:2px;background:#3b4b63;"></i>
<i style="left:1404px;top:657px;width:2px;height:2px;background:#3b4b63;"></i>
<i style="left:1412px;top:657px;width:2px;height:2px;background:#3b4b63;"></i>
<i style="left:1418px;top:663px;width:2px;height:2px;background:#3b4b63;"></i>
<i style="left:1422px;top:663px;width:2px;height:2px;background:#3b4b63;"></i>
<i style="left:1428px;top:663px;width:2px;height:2px;background:#3b4b63;"></i>
<i style="left:1434px;top:663px;width:2px;height:2px;background:#3b4b63;"></i>
<i style="left:1438px;top:657px;width:2px;height:2px;background:#3b4b63;"></i>
<i style="left:1446px;top:657px;width:2px;height:2px;background:#3b4b63;"></i>
<i style="left:1453px;top:663px;width:2px;height:2px;background:#3b4b63;"></i>
<i style="left:1456px;top:663px;width:2px;height:2px;background:#3b4b63;"></i>
<i style="left:1462px;top:663px;width:2px;height:2px;background:#3b4b63;"></i>
<i style="left:1468px;top:663px;width:2px;height:2px;background:#3b4b63;"></i>
<div style="left:1471px;top:622px;width:183px;height:34px;background:repeating-linear-gradient(135deg,#1d1d1d 0 4.25px,#445b7c 4.25px 8.5px);background-attachment:fixed"></div>
<div style="left:1471px;top:646px;width:183px;height:10px;background:linear-gradient(rgba(20,20,20,0),rgba(20,20,20,0.45))"></div>
<i style="left:1471px;top:656px;width:183px;height:36px;background:linear-gradient(#7aabec,#80b3f4);"></i>
<svg style="left:1471px;top:656px" width="175" height="36"><path d="M1 0v36M36 0v36M70 0v36M105 0v36M140 0v36M174 0v36" stroke="#5e88c0" stroke-width="2"/></svg>
<i style="left:570px;top:696px;width:2px;height:34px;background:#4e6687;"></i>
<i style="left:570px;top:696px;width:276px;height:2px;background:#4e6687;"></i>
<i style="left:572px;top:698px;width:274px;height:30px;background:#99c3f9;"></i>
<i style="left:570px;top:728px;width:276px;height:2px;background:#4e6687;"></i>
<i style="left:570px;top:730px;width:276px;height:36px;background:linear-gradient(#7aabec,#80b3f4);"></i>
<i style="left:570px;top:730px;width:2px;height:36px;background:#5e88c0;"></i>
<svg style="left:605px;top:730px" width="210" height="36"><path d="M1 0v36M36 0v36M70 0v36M105 0v36M139 0v36M174 0v36M209 0v36" stroke="#5e88c0" stroke-width="2"/></svg>
<i style="left:572px;top:758px;width:32px;height:2px;background:#4d6a92;"></i>
<i style="left:607px;top:756px;width:32px;height:2px;background:#4d6a92;"></i>
<i style="left:642px;top:752px;width:32px;height:2px;background:#4d6a92;"></i>
<i style="left:676px;top:752px;width:32px;height:2px;background:#4d6a92;"></i>
<i style="left:711px;top:758px;width:32px;height:2px;background:#4d6a92;"></i>
<i style="left:745px;top:756px;width:32px;height:2px;background:#4d6a92;"></i>
<i style="left:780px;top:752px;width:32px;height:2px;background:#4d6a92;"></i>
<i style="left:815px;top:752px;width:32px;height:2px;background:#4d6a92;"></i>
<div style="left:846px;top:696px;width:312px;height:34px;background:repeating-linear-gradient(135deg,#1d1d1d 0 4.25px,#445b7c 4.25px 8.5px);background-attachment:fixed"></div>
<div style="left:846px;top:720px;width:312px;height:10px;background:linear-gradient(rgba(20,20,20,0),rgba(20,20,20,0.45))"></div>
<i style="left:846px;top:730px;width:312px;height:36px;background:linear-gradient(#7aabec,#80b3f4);"></i>
<svg style="left:847px;top:730px" width="280" height="36"><path d="M1 0v36M36 0v36M71 0v36M105 0v36M140 0v36M175 0v36M209 0v36M244 0v36M279 0v36" stroke="#5e88c0" stroke-width="2"/></svg>
<i style="left:1471px;top:696px;width:2px;height:34px;background:#4e6687;"></i>
<i style="left:1471px;top:696px;width:277px;height:2px;background:#4e6687;"></i>
<i style="left:1473px;top:698px;width:275px;height:30px;background:#99c3f9;"></i>
<i style="left:1471px;top:728px;width:277px;height:2px;background:#4e6687;"></i>
<i style="left:1471px;top:730px;width:277px;height:36px;background:linear-gradient(#7aabec,#80b3f4);"></i>
<i style="left:1471px;top:730px;width:2px;height:36px;background:#5e88c0;"></i>
<svg style="left:1506px;top:730px" width="210" height="36"><path d="M1 0v36M35 0v36M70 0v36M105 0v36M139 0v36M174 0v36M209 0v36" stroke="#5e88c0" stroke-width="2"/></svg>
<i style="left:1473px;top:758px;width:32px;height:2px;background:#4d6a92;"></i>
<i style="left:1508px;top:756px;width:32px;height:2px;background:#4d6a92;"></i>
<i style="left:1542px;top:752px;width:32px;height:2px;background:#4d6a92;"></i>
<i style="left:1577px;top:752px;width:32px;height:2px;background:#4d6a92;"></i>
<i style="left:1612px;top:758px;width:32px;height:2px;background:#4d6a92;"></i>
<i style="left:1646px;top:756px;width:32px;height:2px;background:#4d6a92;"></i>
<i style="left:1681px;top:752px;width:32px;height:2px;background:#4d6a92;"></i>
<i style="left:1716px;top:752px;width:32px;height:2px;background:#4d6a92;"></i>
<div style="left:1748px;top:696px;width:244px;height:34px;background:repeating-linear-gradient(135deg,#1d1d1d 0 4.25px,#445b7c 4.25px 8.5px);background-attachment:fixed"></div>
<div style="left:1748px;top:720px;width:244px;height:10px;background:linear-gradient(rgba(20,20,20,0),rgba(20,20,20,0.45))"></div>
<i style="left:1748px;top:730px;width:244px;height:36px;background:linear-gradient(#7aabec,#80b3f4);"></i>
<svg style="left:1748px;top:730px" width="210" height="36"><path d="M1 0v36M36 0v36M71 0v36M105 0v36M140 0v36M175 0v36M209 0v36" stroke="#5e88c0" stroke-width="2"/></svg>
<i style="left:2026px;top:770px;width:2px;height:34px;background:#4e6687;"></i>
<i style="left:2026px;top:770px;width:278px;height:2px;background:#4e6687;"></i>
<i style="left:2028px;top:772px;width:276px;height:30px;background:#99c3f9;"></i>
<i style="left:2026px;top:802px;width:278px;height:2px;background:#4e6687;"></i>
<i style="left:2026px;top:804px;width:278px;height:36px;background:linear-gradient(#7aabec,#80b3f4);"></i>
<i style="left:2026px;top:804px;width:2px;height:36px;background:#5e88c0;"></i>
<svg style="left:2060px;top:804px" width="210" height="36"><path d="M1 0v36M36 0v36M70 0v36M105 0v36M140 0v36M174 0v36M209 0v36" stroke="#5e88c0" stroke-width="2"/></svg>
<i style="left:2033px;top:807px;width:2px;height:2px;background:#3b4b63;"></i>
<i style="left:2039px;top:815px;width:2px;height:2px;background:#3b4b63;"></i>
<i style="left:2045px;top:813px;width:2px;height:2px;background:#3b4b63;"></i>
<i style="left:2051px;top:813px;width:2px;height:2px;background:#3b4b63;"></i>
<i style="left:2055px;top:815px;width:2px;height:2px;background:#3b4b63;"></i>
<i style="left:2061px;top:809px;width:2px;height:2px;background:#3b4b63;"></i>
<i style="left:2070px;top:809px;width:2px;height:2px;background:#3b4b63;"></i>
<i style="left:2077px;top:811px;width:2px;height:2px;background:#3b4b63;"></i>
<i style="left:2080px;top:811px;width:2px;height:2px;background:#3b4b63;"></i>
<i style="left:2086px;top:811px;width:2px;height:2px;background:#3b4b63;"></i>
<i style="left:2090px;top:811px;width:2px;height:2px;background:#3b4b63;"></i>
<i style="left:2097px;top:805px;width:2px;height:2px;background:#3b4b63;"></i>
<i style="left:2105px;top:805px;width:2px;height:2px;background:#3b4b63;"></i>
<i style="left:2111px;top:811px;width:2px;height:2px;background:#3b4b63;"></i>
<i style="left:2115px;top:811px;width:2px;height:2px;background:#3b4b63;"></i>
<i style="left:2121px;top:811px;width:2px;height:2px;background:#3b4b63;"></i>
<i style="left:2127px;top:811px;width:2px;height:2px;background:#3b4b63;"></i>
<i style="left:2131px;top:805px;width:2px;height:2px;background:#3b4b63;"></i>
<i style="left:2139px;top:805px;width:2px;height:2px;background:#3b4b63;"></i>
<i style="left:2146px;top:811px;width:2px;height:2px;background:#3b4b63;"></i>
<i style="left:2149px;top:811px;width:2px;height:2px;background:#3b4b63;"></i>
<i style="left:2155px;top:811px;width:2px;height:2px;background:#3b4b63;"></i>
<i style="left:2161px;top:811px;width:2px;height:2px;background:#3b4b63;"></i>
<i style="left:2172px;top:807px;width:2px;height:2px;background:#3b4b63;"></i>
<i style="left:2178px;top:815px;width:2px;height:2px;background:#3b4b63;"></i>
<i style="left:2184px;top:813px;width:2px;height:2px;background:#3b4b63;"></i>
<i style="left:2190px;top:813px;width:2px;height:2px;background:#3b4b63;"></i>
<i style="left:2194px;top:815px;width:2px;height:2px;background:#3b4b63;"></i>
<i style="left:2199px;top:809px;width:2px;height:2px;background:#3b4b63;"></i>
<i style="left:2208px;top:809px;width:2px;height:2px;background:#3b4b63;"></i>
<i style="left:2215px;top:811px;width:2px;height:2px;background:#3b4b63;"></i>
<i style="left:2219px;top:811px;width:2px;height:2px;background:#3b4b63;"></i>
<i style="left:2225px;top:811px;width:2px;height:2px;background:#3b4b63;"></i>
<i style="left:2229px;top:811px;width:2px;height:2px;background:#3b4b63;"></i>
<i style="left:2235px;top:805px;width:2px;height:2px;background:#3b4b63;"></i>
<i style="left:2243px;top:805px;width:2px;height:2px;background:#3b4b63;"></i>
<i style="left:2250px;top:811px;width:2px;height:2px;background:#3b4b63;"></i>
<i style="left:2253px;top:811px;width:2px;height:2px;background:#3b4b63;"></i>
<i style="left:2259px;top:811px;width:2px;height:2px;background:#3b4b63;"></i>
<i style="left:2265px;top:811px;width:2px;height:2px;background:#3b4b63;"></i>
<i style="left:2270px;top:805px;width:2px;height:2px;background:#3b4b63;"></i>
<i style="left:2278px;top:805px;width:2px;height:2px;background:#3b4b63;"></i>
<i style="left:2284px;top:811px;width:2px;height:2px;background:#3b4b63;"></i>
<i style="left:2288px;top:811px;width:2px;height:2px;background:#3b4b63;"></i>
<i style="left:2294px;top:811px;width:2px;height:2px;background:#3b4b63;"></i>
<i style="left:2300px;top:811px;width:2px;height:2px;background:#3b4b63;"></i>
<i style="left:2304px;top:770px;width:2px;height:34px;background:#4e6687;"></i>
<i style="left:2304px;top:770px;width:8px;height:2px;background:#4e6687;"></i>
<i style="left:2306px;top:772px;width:6px;height:30px;background:#99c3f9;"></i>
<i style="left:2304px;top:802px;width:8px;height:2px;background:#4e6687;"></i>
<i style="left:2304px;top:804px;width:8px;height:36px;background:linear-gradient(#7aabec,#80b3f4);"></i>
<i style="left:2304px;top:804px;width:2px;height:36px;background:#5e88c0;"></i>
<div style="left:2312px;top:770px;width:96px;height:34px;background:repeating-linear-gradient(135deg,#1d1d1d 0 4.25px,#445b7c 4.25px 8.5px);background-attachment:fixed"></div>
<div style="left:2312px;top:794px;width:96px;height:10px;background:linear-gradient(rgba(20,20,20,0),rgba(20,20,20,0.45))"></div>
<i style="left:2312px;top:804px;width:96px;height:36px;background:linear-gradient(#7aabec,#80b3f4);"></i>
<svg style="left:2337px;top:804px" width="37" height="36"><path d="M1 0v36M36 0v36" stroke="#5e88c0" stroke-width="2"/></svg>
<i style="left:572px;top:844px;width:275px;height:4px;background:rgba(255,255,255,0.02);"></i>
<i style="left:572px;top:848px;width:275px;height:14px;background:rgba(0,0,0,0.11);"></i>
<i style="left:572px;top:864px;width:275px;height:12px;background:rgba(0,0,0,0.11);"></i>
<i style="left:1473px;top:844px;width:553px;height:4px;background:rgba(255,255,255,0.02);"></i>
<i style="left:1473px;top:848px;width:553px;height:14px;background:rgba(0,0,0,0.11);"></i>
<i style="left:1473px;top:864px;width:553px;height:12px;background:rgba(0,0,0,0.11);"></i>
<i style="left:570px;top:918px;width:2px;height:34px;background:#4e6687;"></i>
<i style="left:570px;top:918px;width:277px;height:2px;background:#4e6687;"></i>
<i style="left:572px;top:920px;width:275px;height:30px;background:#99c3f9;"></i>
<i style="left:570px;top:950px;width:277px;height:2px;background:#4e6687;"></i>
<i style="left:570px;top:952px;width:277px;height:36px;background:linear-gradient(#7aabec,#80b3f4);"></i>
<i style="left:570px;top:952px;width:2px;height:36px;background:#5e88c0;"></i>
<svg style="left:605px;top:952px" width="210" height="36"><path d="M1 0v36M36 0v36M70 0v36M105 0v36M139 0v36M174 0v36M209 0v36" stroke="#5e88c0" stroke-width="2"/></svg>
<i style="left:578px;top:955px;width:2px;height:2px;background:#3b4b63;"></i>
<i style="left:584px;top:963px;width:2px;height:2px;background:#3b4b63;"></i>
<i style="left:590px;top:961px;width:2px;height:2px;background:#3b4b63;"></i>
<i style="left:596px;top:961px;width:2px;height:2px;background:#3b4b63;"></i>
<i style="left:600px;top:963px;width:2px;height:2px;background:#3b4b63;"></i>
<i style="left:605px;top:957px;width:2px;height:2px;background:#3b4b63;"></i>
<i style="left:614px;top:957px;width:2px;height:2px;background:#3b4b63;"></i>
<i style="left:621px;top:959px;width:2px;height:2px;background:#3b4b63;"></i>
<i style="left:625px;top:959px;width:2px;height:2px;background:#3b4b63;"></i>
<i style="left:631px;top:959px;width:2px;height:2px;background:#3b4b63;"></i>
<i style="left:635px;top:959px;width:2px;height:2px;background:#3b4b63;"></i>
<i style="left:641px;top:953px;width:2px;height:2px;background:#3b4b63;"></i>
<i style="left:649px;top:953px;width:2px;height:2px;background:#3b4b63;"></i>
<i style="left:656px;top:959px;width:2px;height:2px;background:#3b4b63;"></i>
<i style="left:659px;top:959px;width:2px;height:2px;background:#3b4b63;"></i>
<i style="left:665px;top:959px;width:2px;height:2px;background:#3b4b63;"></i>
<i style="left:671px;top:959px;width:2px;height:2px;background:#3b4b63;"></i>
<i style="left:676px;top:953px;width:2px;height:2px;background:#3b4b63;"></i>
<i style="left:684px;top:953px;width:2px;height:2px;background:#3b4b63;"></i>
<i style="left:691px;top:959px;width:2px;height:2px;background:#3b4b63;"></i>
<i style="left:694px;top:959px;width:2px;height:2px;background:#3b4b63;"></i>
<i style="left:700px;top:959px;width:2px;height:2px;background:#3b4b63;"></i>
<i style="left:706px;top:959px;width:2px;height:2px;background:#3b4b63;"></i>
<i style="left:716px;top:955px;width:2px;height:2px;background:#3b4b63;"></i>
<i style="left:722px;top:963px;width:2px;height:2px;background:#3b4b63;"></i>
<i style="left:728px;top:961px;width:2px;height:2px;background:#3b4b63;"></i>
<i style="left:734px;top:961px;width:2px;height:2px;background:#3b4b63;"></i>
<i style="left:738px;top:963px;width:2px;height:2px;background:#3b4b63;"></i>
<i style="left:744px;top:957px;width:2px;height:2px;background:#3b4b63;"></i>
<i style="left:753px;top:957px;width:2px;height:2px;background:#3b4b63;"></i>
<i style="left:760px;top:959px;width:2px;height:2px;background:#3b4b63;"></i>
<i style="left:763px;top:959px;width:2px;height:2px;background:#3b4b63;"></i>
<i style="left:770px;top:959px;width:2px;height:2px;background:#3b4b63;"></i>
<i style="left:774px;top:959px;width:2px;height:2px;background:#3b4b63;"></i>
<i style="left:780px;top:953px;width:2px;height:2px;background:#3b4b63;"></i>
<i style="left:788px;top:953px;width:2px;height:2px;background:#3b4b63;"></i>
<i style="left:794px;top:959px;width:2px;height:2px;background:#3b4b63;"></i>
<i style="left:798px;top:959px;width:2px;height:2px;background:#3b4b63;"></i>
<i style="left:804px;top:959px;width:2px;height:2px;background:#3b4b63;"></i>
<i style="left:810px;top:959px;width:2px;height:2px;background:#3b4b63;"></i>
<i style="left:815px;top:953px;width:2px;height:2px;background:#3b4b63;"></i>
<i style="left:823px;top:953px;width:2px;height:2px;background:#3b4b63;"></i>
<i style="left:829px;top:959px;width:2px;height:2px;background:#3b4b63;"></i>
<i style="left:833px;top:959px;width:2px;height:2px;background:#3b4b63;"></i>
<i style="left:839px;top:959px;width:2px;height:2px;background:#3b4b63;"></i>
<i style="left:845px;top:959px;width:2px;height:2px;background:#3b4b63;"></i>
<div style="left:847px;top:918px;width:197px;height:34px;background:repeating-linear-gradient(135deg,#1d1d1d 0 4.25px,#445b7c 4.25px 8.5px);background-attachment:fixed"></div>
<div style="left:847px;top:942px;width:197px;height:10px;background:linear-gradient(rgba(20,20,20,0),rgba(20,20,20,0.45))"></div>
<i style="left:847px;top:952px;width:197px;height:36px;background:linear-gradient(#7aabec,#80b3f4);"></i>
<svg style="left:847px;top:952px" width="176" height="36"><path d="M1 0v36M36 0v36M71 0v36M105 0v36M140 0v36M175 0v36" stroke="#5e88c0" stroke-width="2"/></svg>
<i style="left:1471px;top:918px;width:2px;height:34px;background:#4e6687;"></i>
<i style="left:1471px;top:918px;width:277px;height:2px;background:#4e6687;"></i>
<i style="left:1473px;top:920px;width:275px;height:30px;background:#99c3f9;"></i>
<i style="left:1471px;top:950px;width:277px;height:2px;background:#4e6687;"></i>
<i style="left:1471px;top:952px;width:277px;height:36px;background:linear-gradient(#7aabec,#80b3f4);"></i>
<i style="left:1471px;top:952px;width:2px;height:36px;background:#5e88c0;"></i>
<svg style="left:1506px;top:952px" width="210" height="36"><path d="M1 0v36M35 0v36M70 0v36M105 0v36M139 0v36M174 0v36M209 0v36" stroke="#5e88c0" stroke-width="2"/></svg>
<i style="left:1479px;top:955px;width:2px;height:2px;background:#3b4b63;"></i>
<i style="left:1485px;top:963px;width:2px;height:2px;background:#3b4b63;"></i>
<i style="left:1491px;top:961px;width:2px;height:2px;background:#3b4b63;"></i>
<i style="left:1497px;top:961px;width:2px;height:2px;background:#3b4b63;"></i>
<i style="left:1501px;top:963px;width:2px;height:2px;background:#3b4b63;"></i>
<i style="left:1506px;top:957px;width:2px;height:2px;background:#3b4b63;"></i>
<i style="left:1515px;top:957px;width:2px;height:2px;background:#3b4b63;"></i>
<i style="left:1522px;top:959px;width:2px;height:2px;background:#3b4b63;"></i>
<i style="left:1526px;top:959px;width:2px;height:2px;background:#3b4b63;"></i>
<i style="left:1532px;top:959px;width:2px;height:2px;background:#3b4b63;"></i>
<i style="left:1536px;top:959px;width:2px;height:2px;background:#3b4b63;"></i>
<i style="left:1542px;top:953px;width:2px;height:2px;background:#3b4b63;"></i>
<i style="left:1550px;top:953px;width:2px;height:2px;background:#3b4b63;"></i>
<i style="left:1557px;top:959px;width:2px;height:2px;background:#3b4b63;"></i>
<i style="left:1560px;top:959px;width:2px;height:2px;background:#3b4b63;"></i>
<i style="left:1566px;top:959px;width:2px;height:2px;background:#3b4b63;"></i>
<i style="left:1572px;top:959px;width:2px;height:2px;background:#3b4b63;"></i>
<i style="left:1577px;top:953px;width:2px;height:2px;background:#3b4b63;"></i>
<i style="left:1585px;top:953px;width:2px;height:2px;background:#3b4b63;"></i>
<i style="left:1591px;top:959px;width:2px;height:2px;background:#3b4b63;"></i>
<i style="left:1595px;top:959px;width:2px;height:2px;background:#3b4b63;"></i>
<i style="left:1601px;top:959px;width:2px;height:2px;background:#3b4b63;"></i>
<i style="left:1607px;top:959px;width:2px;height:2px;background:#3b4b63;"></i>
<i style="left:1617px;top:955px;width:2px;height:2px;background:#3b4b63;"></i>
<i style="left:1623px;top:963px;width:2px;height:2px;background:#3b4b63;"></i>
<i style="left:1629px;top:961px;width:2px;height:2px;background:#3b4b63;"></i>
<i style="left:1635px;top:961px;width:2px;height:2px;background:#3b4b63;"></i>
<i style="left:1639px;top:963px;width:2px;height:2px;background:#3b4b63;"></i>
<i style="left:1645px;top:957px;width:2px;height:2px;background:#3b4b63;"></i>
<i style="left:1654px;top:957px;width:2px;height:2px;background:#3b4b63;"></i>
<i style="left:1661px;top:959px;width:2px;height:2px;background:#3b4b63;"></i>
<i style="left:1664px;top:959px;width:2px;height:2px;background:#3b4b63;"></i>
<i style="left:1671px;top:959px;width:2px;height:2px;background:#3b4b63;"></i>
<i style="left:1674px;top:959px;width:2px;height:2px;background:#3b4b63;"></i>
<i style="left:1681px;top:953px;width:2px;height:2px;background:#3b4b63;"></i>
<i style="left:1689px;top:953px;width:2px;height:2px;background:#3b4b63;"></i>
<i style="left:1695px;top:959px;width:2px;height:2px;background:#3b4b63;"></i>
<i style="left:1699px;top:959px;width:2px;height:2px;background:#3b4b63;"></i>
<i style="left:1705px;top:959px;width:2px;height:2px;background:#3b4b63;"></i>
<i style="left:1711px;top:959px;width:2px;height:2px;background:#3b4b63;"></i>
<i style="left:1715px;top:953px;width:2px;height:2px;background:#3b4b63;"></i>
<i style="left:1724px;top:953px;width:2px;height:2px;background:#3b4b63;"></i>
<i style="left:1730px;top:959px;width:2px;height:2px;background:#3b4b63;"></i>
<i style="left:1734px;top:959px;width:2px;height:2px;background:#3b4b63;"></i>
<i style="left:1739px;top:959px;width:2px;height:2px;background:#3b4b63;"></i>
<i style="left:1746px;top:959px;width:2px;height:2px;background:#3b4b63;"></i>
<i style="left:1748px;top:918px;width:2px;height:34px;background:#4e6687;"></i>
<i style="left:1748px;top:918px;width:278px;height:2px;background:#4e6687;"></i>
<i style="left:1750px;top:920px;width:276px;height:30px;background:#99c3f9;"></i>
<i style="left:1748px;top:950px;width:278px;height:2px;background:#4e6687;"></i>
<i style="left:1748px;top:952px;width:278px;height:36px;background:linear-gradient(#7aabec,#80b3f4);"></i>
<i style="left:1748px;top:952px;width:2px;height:36px;background:#5e88c0;"></i>
<svg style="left:1783px;top:952px" width="210" height="36"><path d="M1 0v36M36 0v36M70 0v36M105 0v36M140 0v36M174 0v36M209 0v36" stroke="#5e88c0" stroke-width="2"/></svg>
<i style="left:1756px;top:955px;width:2px;height:2px;background:#3b4b63;"></i>
<i style="left:1762px;top:963px;width:2px;height:2px;background:#3b4b63;"></i>
<i style="left:1768px;top:961px;width:2px;height:2px;background:#3b4b63;"></i>
<i style="left:1774px;top:961px;width:2px;height:2px;background:#3b4b63;"></i>
<i style="left:1778px;top:963px;width:2px;height:2px;background:#3b4b63;"></i>
<i style="left:1783px;top:957px;width:2px;height:2px;background:#3b4b63;"></i>
<i style="left:1792px;top:957px;width:2px;height:2px;background:#3b4b63;"></i>
<i style="left:1799px;top:959px;width:2px;height:2px;background:#3b4b63;"></i>
<i style="left:1803px;top:959px;width:2px;height:2px;background:#3b4b63;"></i>
<i style="left:1809px;top:959px;width:2px;height:2px;background:#3b4b63;"></i>
<i style="left:1813px;top:959px;width:2px;height:2px;background:#3b4b63;"></i>
<i style="left:1819px;top:953px;width:2px;height:2px;background:#3b4b63;"></i>
<i style="left:1828px;top:953px;width:2px;height:2px;background:#3b4b63;"></i>
<i style="left:1834px;top:959px;width:2px;height:2px;background:#3b4b63;"></i>
<i style="left:1837px;top:959px;width:2px;height:2px;background:#3b4b63;"></i>
<i style="left:1843px;top:959px;width:2px;height:2px;background:#3b4b63;"></i>
<i style="left:1850px;top:959px;width:2px;height:2px;background:#3b4b63;"></i>
<i style="left:1854px;top:953px;width:2px;height:2px;background:#3b4b63;"></i>
<i style="left:1862px;top:953px;width:2px;height:2px;background:#3b4b63;"></i>
<i style="left:1869px;top:959px;width:2px;height:2px;background:#3b4b63;"></i>
<i style="left:1872px;top:959px;width:2px;height:2px;background:#3b4b63;"></i>
<i style="left:1878px;top:959px;width:2px;height:2px;background:#3b4b63;"></i>
<i style="left:1884px;top:959px;width:2px;height:2px;background:#3b4b63;"></i>
<i style="left:1894px;top:955px;width:2px;height:2px;background:#3b4b63;"></i>
<i style="left:1900px;top:963px;width:2px;height:2px;background:#3b4b63;"></i>
<i style="left:1906px;top:961px;width:2px;height:2px;background:#3b4b63;"></i>
<i style="left:1912px;top:961px;width:2px;height:2px;background:#3b4b63;"></i>
<i style="left:1916px;top:963px;width:2px;height:2px;background:#3b4b63;"></i>
<i style="left:1922px;top:957px;width:2px;height:2px;background:#3b4b63;"></i>
<i style="left:1931px;top:957px;width:2px;height:2px;background:#3b4b63;"></i>
<i style="left:1938px;top:959px;width:2px;height:2px;background:#3b4b63;"></i>
<i style="left:1941px;top:959px;width:2px;height:2px;background:#3b4b63;"></i>
<i style="left:1948px;top:959px;width:2px;height:2px;background:#3b4b63;"></i>
<i style="left:1952px;top:959px;width:2px;height:2px;background:#3b4b63;"></i>
<i style="left:1958px;top:953px;width:2px;height:2px;background:#3b4b63;"></i>
<i style="left:1966px;top:953px;width:2px;height:2px;background:#3b4b63;"></i>
<i style="left:1973px;top:959px;width:2px;height:2px;background:#3b4b63;"></i>
<i style="left:1976px;top:959px;width:2px;height:2px;background:#3b4b63;"></i>
<i style="left:1982px;top:959px;width:2px;height:2px;background:#3b4b63;"></i>
<i style="left:1988px;top:959px;width:2px;height:2px;background:#3b4b63;"></i>
<i style="left:1993px;top:953px;width:2px;height:2px;background:#3b4b63;"></i>
<i style="left:2001px;top:953px;width:2px;height:2px;background:#3b4b63;"></i>
<i style="left:2007px;top:959px;width:2px;height:2px;background:#3b4b63;"></i>
<i style="left:2011px;top:959px;width:2px;height:2px;background:#3b4b63;"></i>
<i style="left:2017px;top:959px;width:2px;height:2px;background:#3b4b63;"></i>
<i style="left:2023px;top:959px;width:2px;height:2px;background:#3b4b63;"></i>
<div style="left:2026px;top:918px;width:182px;height:34px;background:repeating-linear-gradient(135deg,#1d1d1d 0 4.25px,#445b7c 4.25px 8.5px);background-attachment:fixed"></div>
<div style="left:2026px;top:942px;width:182px;height:10px;background:linear-gradient(rgba(20,20,20,0),rgba(20,20,20,0.45))"></div>
<i style="left:2026px;top:952px;width:182px;height:36px;background:linear-gradient(#7aabec,#80b3f4);"></i>
<svg style="left:2026px;top:952px" width="175" height="36"><path d="M1 0v36M35 0v36M70 0v36M104 0v36M139 0v36M174 0v36" stroke="#5e88c0" stroke-width="2"/></svg>
<i style="left:570px;top:992px;width:2px;height:34px;background:#4e6687;"></i>
<i style="left:570px;top:992px;width:277px;height:2px;background:#4e6687;"></i>
<i style="left:572px;top:994px;width:275px;height:30px;background:#99c3f9;"></i>
<i style="left:570px;top:1024px;width:277px;height:2px;background:#4e6687;"></i>
<i style="left:570px;top:1026px;width:277px;height:36px;background:linear-gradient(#7aabec,#80b3f4);"></i>
<i style="left:570px;top:1026px;width:2px;height:36px;background:#5e88c0;"></i>
<svg style="left:605px;top:1026px" width="210" height="36"><path d="M1 0v36M36 0v36M70 0v36M105 0v36M139 0v36M174 0v36M209 0v36" stroke="#5e88c0" stroke-width="2"/></svg>
<i style="left:578px;top:1029px;width:2px;height:2px;background:#3b4b63;"></i>
<i style="left:584px;top:1037px;width:2px;height:2px;background:#3b4b63;"></i>
<i style="left:590px;top:1035px;width:2px;height:2px;background:#3b4b63;"></i>
<i style="left:596px;top:1035px;width:2px;height:2px;background:#3b4b63;"></i>
<i style="left:600px;top:1037px;width:2px;height:2px;background:#3b4b63;"></i>
<i style="left:605px;top:1031px;width:2px;height:2px;background:#3b4b63;"></i>
<i style="left:614px;top:1031px;width:2px;height:2px;background:#3b4b63;"></i>
<i style="left:621px;top:1033px;width:2px;height:2px;background:#3b4b63;"></i>
<i style="left:625px;top:1033px;width:2px;height:2px;background:#3b4b63;"></i>
<i style="left:631px;top:1033px;width:2px;height:2px;background:#3b4b63;"></i>
<i style="left:635px;top:1033px;width:2px;height:2px;background:#3b4b63;"></i>
<i style="left:641px;top:1027px;width:2px;height:2px;background:#3b4b63;"></i>
<i style="left:649px;top:1027px;width:2px;height:2px;background:#3b4b63;"></i>
<i style="left:656px;top:1033px;width:2px;height:2px;background:#3b4b63;"></i>
<i style="left:659px;top:1033px;width:2px;height:2px;background:#3b4b63;"></i>
<i style="left:665px;top:1033px;width:2px;height:2px;background:#3b4b63;"></i>
<i style="left:671px;top:1033px;width:2px;height:2px;background:#3b4b63;"></i>
<i style="left:676px;top:1027px;width:2px;height:2px;background:#3b4b63;"></i>
<i style="left:684px;top:1027px;width:2px;height:2px;background:#3b4b63;"></i>
<i style="left:691px;top:1033px;width:2px;height:2px;background:#3b4b63;"></i>
<i style="left:694px;top:1033px;width:2px;height:2px;background:#3b4b63;"></i>
<i style="left:700px;top:1033px;width:2px;height:2px;background:#3b4b63;"></i>
<i style="left:706px;top:1033px;width:2px;height:2px;background:#3b4b63;"></i>
<i style="left:716px;top:1029px;width:2px;height:2px;background:#3b4b63;"></i>
<i style="left:722px;top:1037px;width:2px;height:2px;background:#3b4b63;"></i>
<i style="left:728px;top:1035px;width:2px;height:2px;background:#3b4b63;"></i>
<i style="left:734px;top:1035px;width:2px;height:2px;background:#3b4b63;"></i>
<i style="left:738px;top:1037px;width:2px;height:2px;background:#3b4b63;"></i>
<i style="left:744px;top:1031px;width:2px;height:2px;background:#3b4b63;"></i>
<i style="left:753px;top:1031px;width:2px;height:2px;background:#3b4b63;"></i>
<i style="left:760px;top:1033px;width:2px;height:2px;background:#3b4b63;"></i>
<i style="left:763px;top:1033px;width:2px;height:2px;background:#3b4b63;"></i>
<i style="left:770px;top:1033px;width:2px;height:2px;background:#3b4b63;"></i>
<i style="left:774px;top:1033px;width:2px;height:2px;background:#3b4b63;"></i>
<i style="left:780px;top:1027px;width:2px;height:2px;background:#3b4b63;"></i>
<i style="left:788px;top:1027px;width:2px;height:2px;background:#3b4b63;"></i>
<i style="left:794px;top:1033px;width:2px;height:2px;background:#3b4b63;"></i>
<i style="left:798px;top:1033px;width:2px;height:2px;background:#3b4b63;"></i>
<i style="left:804px;top:1033px;width:2px;height:2px;background:#3b4b63;"></i>
<i style="left:810px;top:1033px;width:2px;height:2px;background:#3b4b63;"></i>
<i style="left:815px;top:1027px;width:2px;height:2px;background:#3b4b63;"></i>
<i style="left:823px;top:1027px;width:2px;height:2px;background:#3b4b63;"></i>
<i style="left:829px;top:1033px;width:2px;height:2px;background:#3b4b63;"></i>
<i style="left:833px;top:1033px;width:2px;height:2px;background:#3b4b63;"></i>
<i style="left:839px;top:1033px;width:2px;height:2px;background:#3b4b63;"></i>
<i style="left:845px;top:1033px;width:2px;height:2px;background:#3b4b63;"></i>
<div style="left:847px;top:992px;width:337px;height:34px;background:repeating-linear-gradient(135deg,#1d1d1d 0 4.25px,#445b7c 4.25px 8.5px);background-attachment:fixed"></div>
<div style="left:847px;top:1016px;width:337px;height:10px;background:linear-gradient(rgba(20,20,20,0),rgba(20,20,20,0.45))"></div>
<i style="left:847px;top:1026px;width:337px;height:36px;background:linear-gradient(#7aabec,#80b3f4);"></i>
<svg style="left:847px;top:1026px" width="314" height="36"><path d="M1 0v36M36 0v36M71 0v36M105 0v36M140 0v36M175 0v36M209 0v36M244 0v36M279 0v36M313 0v36" stroke="#5e88c0" stroke-width="2"/></svg>
<i style="left:1471px;top:992px;width:2px;height:34px;background:#4e6687;"></i>
<i style="left:1471px;top:992px;width:277px;height:2px;background:#4e6687;"></i>
<i style="left:1473px;top:994px;width:275px;height:30px;background:#99c3f9;"></i>
<i style="left:1471px;top:1024px;width:277px;height:2px;background:#4e6687;"></i>
<i style="left:1471px;top:1026px;width:277px;height:36px;background:linear-gradient(#7aabec,#80b3f4);"></i>
<i style="left:1471px;top:1026px;width:2px;height:36px;background:#5e88c0;"></i>
<svg style="left:1506px;top:1026px" width="210" height="36"><path d="M1 0v36M35 0v36M70 0v36M105 0v36M139 0v36M174 0v36M209 0v36" stroke="#5e88c0" stroke-width="2"/></svg>
<i style="left:1479px;top:1029px;width:2px;height:2px;background:#3b4b63;"></i>
<i style="left:1485px;top:1037px;width:2px;height:2px;background:#3b4b63;"></i>
<i style="left:1491px;top:1035px;width:2px;height:2px;background:#3b4b63;"></i>
<i style="left:1497px;top:1035px;width:2px;height:2px;background:#3b4b63;"></i>
<i style="left:1501px;top:1037px;width:2px;height:2px;background:#3b4b63;"></i>
<i style="left:1506px;top:1031px;width:2px;height:2px;background:#3b4b63;"></i>
<i style="left:1515px;top:1031px;width:2px;height:2px;background:#3b4b63;"></i>
<i style="left:1522px;top:1033px;width:2px;height:2px;background:#3b4b63;"></i>
<i style="left:1526px;top:1033px;width:2px;height:2px;background:#3b4b63;"></i>
<i style="left:1532px;top:1033px;width:2px;height:2px;background:#3b4b63;"></i>
<i style="left:1536px;top:1033px;width:2px;height:2px;background:#3b4b63;"></i>
<i style="left:1542px;top:1027px;width:2px;height:2px;background:#3b4b63;"></i>
<i style="left:1550px;top:1027px;width:2px;height:2px;background:#3b4b63;"></i>
<i style="left:1557px;top:1033px;width:2px;height:2px;background:#3b4b63;"></i>
<i style="left:1560px;top:1033px;width:2px;height:2px;background:#3b4b63;"></i>
<i style="left:1566px;top:1033px;width:2px;height:2px;background:#3b4b63;"></i>
<i style="left:1572px;top:1033px;width:2px;height:2px;background:#3b4b63;"></i>
<i style="left:1577px;top:1027px;width:2px;height:2px;background:#3b4b63;"></i>
<i style="left:1585px;top:1027px;width:2px;height:2px;background:#3b4b63;"></i>
<i style="left:1591px;top:1033px;width:2px;height:2px;background:#3b4b63;"></i>
<i style="left:1595px;top:1033px;width:2px;height:2px;background:#3b4b63;"></i>
<i style="left:1601px;top:1033px;width:2px;height:2px;background:#3b4b63;"></i>
<i style="left:1607px;top:1033px;width:2px;height:2px;background:#3b4b63;"></i>
<i style="left:1617px;top:1029px;width:2px;height:2px;background:#3b4b63;"></i>
<i style="left:1623px;top:1037px;width:2px;height:2px;background:#3b4b63;"></i>
<i style="left:1629px;top:1035px;width:2px;height:2px;background:#3b4b63;"></i>
<i style="left:1635px;top:1035px;width:2px;height:2px;background:#3b4b63;"></i>
<i style="left:1639px;top:1037px;width:2px;height:2px;background:#3b4b63;"></i>
<i style="left:1645px;top:1031px;width:2px;height:2px;background:#3b4b63;"></i>
<i style="left:1654px;top:1031px;width:2px;height:2px;background:#3b4b63;"></i>
<i style="left:1661px;top:1033px;width:2px;height:2px;background:#3b4b63;"></i>
<i style="left:1664px;top:1033px;width:2px;height:2px;background:#3b4b63;"></i>
<i style="left:1671px;top:1033px;width:2px;height:2px;background:#3b4b63;"></i>
<i style="left:1674px;top:1033px;width:2px;height:2px;background:#3b4b63;"></i>
<i style="left:1681px;top:1027px;width:2px;height:2px;background:#3b4b63;"></i>
<i style="left:1689px;top:1027px;width:2px;height:2px;background:#3b4b63;"></i>
<i style="left:1695px;top:1033px;width:2px;height:2px;background:#3b4b63;"></i>
<i style="left:1699px;top:1033px;width:2px;height:2px;background:#3b4b63;"></i>
<i style="left:1705px;top:1033px;width:2px;height:2px;background:#3b4b63;"></i>
<i style="left:1711px;top:1033px;width:2px;height:2px;background:#3b4b63;"></i>
<i style="left:1715px;top:1027px;width:2px;height:2px;background:#3b4b63;"></i>
<i style="left:1724px;top:1027px;width:2px;height:2px;background:#3b4b63;"></i>
<i style="left:1730px;top:1033px;width:2px;height:2px;background:#3b4b63;"></i>
<i style="left:1734px;top:1033px;width:2px;height:2px;background:#3b4b63;"></i>
<i style="left:1739px;top:1033px;width:2px;height:2px;background:#3b4b63;"></i>
<i style="left:1746px;top:1033px;width:2px;height:2px;background:#3b4b63;"></i>
<i style="left:1748px;top:992px;width:2px;height:34px;background:#4e6687;"></i>
<i style="left:1748px;top:992px;width:278px;height:2px;background:#4e6687;"></i>
<i style="left:1750px;top:994px;width:276px;height:30px;background:#99c3f9;"></i>
<i style="left:1748px;top:1024px;width:278px;height:2px;background:#4e6687;"></i>
<i style="left:1748px;top:1026px;width:278px;height:36px;background:linear-gradient(#7aabec,#80b3f4);"></i>
<i style="left:1748px;top:1026px;width:2px;height:36px;background:#5e88c0;"></i>
<svg style="left:1783px;top:1026px" width="210" height="36"><path d="M1 0v36M36 0v36M70 0v36M105 0v36M140 0v36M174 0v36M209 0v36" stroke="#5e88c0" stroke-width="2"/></svg>
<i style="left:1756px;top:1029px;width:2px;height:2px;background:#3b4b63;"></i>
<i style="left:1762px;top:1037px;width:2px;height:2px;background:#3b4b63;"></i>
<i style="left:1768px;top:1035px;width:2px;height:2px;background:#3b4b63;"></i>
<i style="left:1774px;top:1035px;width:2px;height:2px;background:#3b4b63;"></i>
<i style="left:1778px;top:1037px;width:2px;height:2px;background:#3b4b63;"></i>
<i style="left:1783px;top:1031px;width:2px;height:2px;background:#3b4b63;"></i>
<i style="left:1792px;top:1031px;width:2px;height:2px;background:#3b4b63;"></i>
<i style="left:1799px;top:1033px;width:2px;height:2px;background:#3b4b63;"></i>
<i style="left:1803px;top:1033px;width:2px;height:2px;background:#3b4b63;"></i>
<i style="left:1809px;top:1033px;width:2px;height:2px;background:#3b4b63;"></i>
<i style="left:1813px;top:1033px;width:2px;height:2px;background:#3b4b63;"></i>
<i style="left:1819px;top:1027px;width:2px;height:2px;background:#3b4b63;"></i>
<i style="left:1828px;top:1027px;width:2px;height:2px;background:#3b4b63;"></i>
<i style="left:1834px;top:1033px;width:2px;height:2px;background:#3b4b63;"></i>
<i style="left:1837px;top:1033px;width:2px;height:2px;background:#3b4b63;"></i>
<i style="left:1843px;top:1033px;width:2px;height:2px;background:#3b4b63;"></i>
<i style="left:1850px;top:1033px;width:2px;height:2px;background:#3b4b63;"></i>
<i style="left:1854px;top:1027px;width:2px;height:2px;background:#3b4b63;"></i>
<i style="left:1862px;top:1027px;width:2px;height:2px;background:#3b4b63;"></i>
<i style="left:1869px;top:1033px;width:2px;height:2px;background:#3b4b63;"></i>
<i style="left:1872px;top:1033px;width:2px;height:2px;background:#3b4b63;"></i>
<i style="left:1878px;top:1033px;width:2px;height:2px;background:#3b4b63;"></i>
<i style="left:1884px;top:1033px;width:2px;height:2px;background:#3b4b63;"></i>
<i style="left:1894px;top:1029px;width:2px;height:2px;background:#3b4b63;"></i>
<i style="left:1900px;top:1037px;width:2px;height:2px;background:#3b4b63;"></i>
<i style="left:1906px;top:1035px;width:2px;height:2px;background:#3b4b63;"></i>
<i style="left:1912px;top:1035px;width:2px;height:2px;background:#3b4b63;"></i>
<i style="left:1916px;top:1037px;width:2px;height:2px;background:#3b4b63;"></i>
<i style="left:1922px;top:1031px;width:2px;height:2px;background:#3b4b63;"></i>
<i style="left:1931px;top:1031px;width:2px;height:2px;background:#3b4b63;"></i>
<i style="left:1938px;top:1033px;width:2px;height:2px;background:#3b4b63;"></i>
<i style="left:1941px;top:1033px;width:2px;height:2px;background:#3b4b63;"></i>
<i style="left:1948px;top:1033px;width:2px;height:2px;background:#3b4b63;"></i>
<i style="left:1952px;top:1033px;width:2px;height:2px;background:#3b4b63;"></i>
<i style="left:1958px;top:1027px;width:2px;height:2px;background:#3b4b63;"></i>
<i style="left:1966px;top:1027px;width:2px;height:2px;background:#3b4b63;"></i>
<i style="left:1973px;top:1033px;width:2px;height:2px;background:#3b4b63;"></i>
<i style="left:1976px;top:1033px;width:2px;height:2px;background:#3b4b63;"></i>
<i style="left:1982px;top:1033px;width:2px;height:2px;background:#3b4b63;"></i>
<i style="left:1988px;top:1033px;width:2px;height:2px;background:#3b4b63;"></i>
<i style="left:1993px;top:1027px;width:2px;height:2px;background:#3b4b63;"></i>
<i style="left:2001px;top:1027px;width:2px;height:2px;background:#3b4b63;"></i>
<i style="left:2007px;top:1033px;width:2px;height:2px;background:#3b4b63;"></i>
<i style="left:2011px;top:1033px;width:2px;height:2px;background:#3b4b63;"></i>
<i style="left:2017px;top:1033px;width:2px;height:2px;background:#3b4b63;"></i>
<i style="left:2023px;top:1033px;width:2px;height:2px;background:#3b4b63;"></i>
<div style="left:2026px;top:992px;width:234px;height:34px;background:repeating-linear-gradient(135deg,#1d1d1d 0 4.25px,#445b7c 4.25px 8.5px);background-attachment:fixed"></div>
<div style="left:2026px;top:1016px;width:234px;height:10px;background:linear-gradient(rgba(20,20,20,0),rgba(20,20,20,0.45))"></div>
<i style="left:2026px;top:1026px;width:234px;height:36px;background:linear-gradient(#7aabec,#80b3f4);"></i>
<svg style="left:2026px;top:1026px" width="209" height="36"><path d="M1 0v36M35 0v36M70 0v36M104 0v36M139 0v36M174 0v36M208 0v36" stroke="#5e88c0" stroke-width="2"/></svg>
<i style="left:18px;top:1070px;width:552px;height:8px;background:rgba(0,0,0,0.11);"></i>
<i style="left:919px;top:1070px;width:557px;height:8px;background:rgba(0,0,0,0.11);"></i>
<i style="left:572px;top:1080px;width:275px;height:8px;background:rgba(0,0,0,0.11);"></i>
<i style="left:572px;top:1090px;width:275px;height:8px;background:rgba(0,0,0,0.11);"></i>
<i style="left:1473px;top:1080px;width:553px;height:8px;background:rgba(0,0,0,0.11);"></i>
<i style="left:1473px;top:1090px;width:553px;height:8px;background:rgba(0,0,0,0.11);"></i>
<i style="left:18px;top:1140px;width:556px;height:2px;background:#8d6222;"></i>
<i style="left:18px;top:1142px;width:556px;height:30px;background:#f2ab4b;"></i>
<i style="left:18px;top:1172px;width:556px;height:2px;background:#8d6222;"></i>
<i style="left:18px;top:1174px;width:556px;height:36px;background:#b4a07a;"></i>
<svg style="left:50px;top:1174px" width="522" height="36"><path d="M1 0v36M36 0v36M71 0v36M105 0v36M140 0v36M175 0v36M209 0v36M245 0v36M279 0v36M313 0v36M348 0v36M383 0v36M417 0v36M452 0v36M487 0v36M521 0v36" stroke="#7b7260" stroke-width="2"/></svg>
<div style="left:18px;top:1142px;width:556px;height:30px;overflow:hidden"><span style="left:5px;top:3.90px;font-size:20px;line-height:22.34px;color:#2a2418;white-space:nowrap;letter-spacing:0.45px">SS_PGV3_In_Love_Lead_Vocals_100_Bbmaj_Wet</span></div>
<svg style="left:20px;top:1174px" width="553" height="36"><path d="M0 5.1 2 4.8 4 5.2 6 5.2 8 5.2 10 5.4 12 4.7 14 4.2 16 4.6 18 5.3 20 4.3 22 5.2 24 5.7 26 7.0 28 5.4 30 4.9 32 5.1 34 4.4 36 4.1 38 5.3 40 5.3 42 4.9 44 4.8 46 5.4 48 5.2 50 4.2 52 4.5 54 3.9 56 5.2 58 4.0 60 4.8 62 4.7 64 4.4 66 4.9 68 4.6 70 4.4 72 3.9 74 4.2 76 4.3 78 4.3 80 4.6 82 3.8 84 4.9 86 4.7 88 4.2 90 4.3 92 3.0 94 2.9 96 3.1 98 3.8 100 3.6 102 3.1 104 3.1 106 5.7 108 7.3 110 5.4 112 5.0 114 4.6 116 4.4 118 4.6 120 4.5 122 4.8 124 4.6 126 4.9 128 3.6 130 4.7 132 4.7 134 6.4 136 4.4 138 4.3 140 4.8 142 4.8 144 4.7 146 4.2 148 3.6 150 5.1 152 4.0 154 4.1 156 4.9 158 4.0 160 3.8 162 4.6 164 4.1 166 5.3 168 5.6 170 3.0 172 3.1 174 4.0 176 2.4 178 3.9 180 3.7 182 3.7 184 3.0 186 3.4 188 3.2 190 3.8 192 3.3 194 3.5 196 2.6 198 3.7 200 5.7 202 5.5 204 4.7 206 3.8 208 3.8 210 4.3 212 4.5 214 3.3 216 3.5 218 3.8 220 4.6 222 4.4 224 3.2 226 4.2 228 4.3 230 3.6 232 4.0 234 3.8 236 4.9 238 6.6 240 7.4 242 7.6 244 6.0 246 4.5 248 3.6 250 4.8 252 3.7 254 4.5 256 4.5 258 3.6 260 4.6 262 4.6 264 3.9 266 5.0 268 3.7 270 4.6 272 4.0 274 4.7 276 4.2 278 5.8 280 2.7 282 2.8 284 3.6 286 2.4 288 2.8 290 3.5 292 2.3 294 3.2 296 4.7 298 6.0 300 5.0 302 2.5 304 3.0 306 3.2 308 3.9 310 2.7 312 3.6 314 2.9 316 3.9 318 3.9 320 3.3 322 3.7 324 3.1 326 3.4 328 3.3 330 3.3 332 4.9 334 4.7 336 4.2 338 4.0 340 4.7 342 4.4 344 4.3 346 4.2 348 4.6 350 4.5 352 4.4 354 4.9 356 5.2 358 4.8 360 4.4 362 4.0 364 5.1 366 4.8 368 5.3 370 4.6 372 2.8 374 2.1 376 3.3 378 2.4 380 2.4 382 3.3 384 2.5 386 3.3 388 2.4 390 2.6 392 3.3 394 4.0 396 5.9 398 6.6 400 7.6 402 6.7 404 4.2 406 3.6 408 3.6 410 2.8 412 2.9 414 2.4 416 2.9 418 3.9 420 3.8 422 2.8 424 2.5 426 3.1 428 3.9 430 6.7 432 4.7 434 4.4 436 4.0 438 3.4 440 4.6 442 3.6 444 3.6 446 3.0 448 3.5 450 3.6 452 3.9 454 5.6 456 3.6 458 4.4 460 3.3 462 3.2 464 3.8 466 4.2 468 4.0 470 4.2 472 3.6 474 3.5 476 3.6 478 4.5 480 3.0 482 4.4 484 3.7 486 3.9 488 3.4 490 4.2 492 5.3 494 3.9 496 4.8 498 4.0 500 4.4 502 4.1 504 3.8 506 4.5 508 4.7 510 3.7 512 3.5 514 3.6 516 3.8 518 4.9 520 5.7 522 5.3 524 4.3 526 3.1 528 3.3 530 3.3 532 3.5 534 4.4 536 4.4 538 3.8 540 6.0 542 7.6 544 7.1 546 7.0 548 5.2 550 5.2 552 4.1 552 13.1 550 12.0 548 12.0 546 10.2 544 10.1 542 9.6 540 11.2 538 13.4 536 12.8 534 12.8 532 13.7 530 13.9 528 13.9 526 14.1 524 12.9 522 11.9 520 11.5 518 12.3 516 13.4 514 13.6 512 13.7 510 13.5 508 12.5 506 12.7 504 13.4 502 13.1 500 12.8 498 13.2 496 12.4 494 13.3 492 11.9 490 13.0 488 13.8 486 13.3 484 13.5 482 12.8 480 14.2 478 12.7 476 13.6 474 13.7 472 13.6 470 13.0 468 13.2 466 13.0 464 13.4 462 14.0 460 13.9 458 12.8 456 13.6 454 11.6 452 13.3 450 13.6 448 13.7 446 14.2 444 13.6 442 13.6 440 12.6 438 13.8 436 13.2 434 12.8 432 12.5 430 10.5 428 13.3 426 14.1 424 14.7 422 14.4 420 13.4 418 13.3 416 14.3 414 14.8 412 14.3 410 14.4 408 13.6 406 13.6 404 13.0 402 10.5 400 9.6 398 10.6 396 11.3 394 13.2 392 13.9 390 14.6 388 14.8 386 13.9 384 14.7 382 13.9 380 14.8 378 14.8 376 13.9 374 15.1 372 14.4 370 12.6 368 11.9 366 12.4 364 12.1 362 13.2 360 12.8 358 12.4 356 12.0 354 12.3 352 12.8 350 12.7 348 12.6 346 13.0 344 12.9 342 12.8 340 12.5 338 13.2 336 13.0 334 12.5 332 12.3 330 13.9 328 13.9 326 13.8 324 14.1 322 13.5 320 13.9 318 13.3 316 13.3 314 14.3 312 13.6 310 14.5 308 13.3 306 14.0 304 14.2 302 14.7 300 12.2 298 11.2 296 12.5 294 14.0 292 14.9 290 13.7 288 14.4 286 14.8 284 13.6 282 14.4 280 14.5 278 11.4 276 13.0 274 12.5 272 13.2 270 12.6 268 13.5 266 12.2 264 13.3 262 12.6 260 12.6 258 13.6 256 12.7 254 12.7 252 13.5 250 12.4 248 13.6 246 12.7 244 11.2 242 9.6 240 9.8 238 10.6 236 12.3 234 13.4 232 13.2 230 13.6 228 12.9 226 13.0 224 14.0 222 12.8 220 12.6 218 13.4 216 13.7 214 13.9 212 12.7 210 12.9 208 13.4 206 13.4 204 12.5 202 11.7 200 11.5 198 13.5 196 14.6 194 13.7 192 13.9 190 13.4 188 14.0 186 13.8 184 14.2 182 13.5 180 13.5 178 13.3 176 14.8 174 13.2 172 14.1 170 14.2 168 11.6 166 11.9 164 13.1 162 12.6 160 13.4 158 13.2 156 12.3 154 13.1 152 13.2 150 12.1 148 13.6 146 13.0 144 12.5 142 12.4 140 12.4 138 12.9 136 12.8 134 10.8 132 12.5 130 12.5 128 13.6 126 12.3 124 12.6 122 12.4 120 12.7 118 12.6 116 12.8 114 12.6 112 12.2 110 11.8 108 9.9 106 11.5 104 14.1 102 14.1 100 13.6 98 13.4 96 14.1 94 14.3 92 14.2 90 12.9 88 13.0 86 12.5 84 12.3 82 13.4 80 12.6 78 12.9 76 12.9 74 13.0 72 13.3 70 12.8 68 12.6 66 12.3 64 12.8 62 12.5 60 12.4 58 13.2 56 12.0 54 13.3 52 12.7 50 13.0 48 12.0 46 11.8 44 12.4 42 12.3 40 11.9 38 11.9 36 13.1 34 12.8 32 12.1 30 12.3 28 11.8 26 10.2 24 11.5 22 12.0 20 12.9 18 11.9 16 12.6 14 13.0 12 12.5 10 11.8 8 12.0 6 12.0 4 12.0 2 12.4 0 12.1Z" fill="#1f1f1f"/><path d="M0 23.3 2 23.0 4 23.4 6 23.4 8 23.4 10 23.6 12 22.9 14 22.4 16 22.8 18 23.5 20 22.5 22 23.4 24 23.9 26 25.2 28 23.6 30 23.1 32 23.3 34 22.6 36 22.3 38 23.5 40 23.5 42 23.1 44 23.0 46 23.6 48 23.4 50 22.4 52 22.7 54 22.1 56 23.4 58 22.2 60 23.0 62 22.9 64 22.6 66 23.1 68 22.8 70 22.6 72 22.1 74 22.4 76 22.5 78 22.5 80 22.8 82 22.0 84 23.1 86 22.9 88 22.4 90 22.5 92 21.2 94 21.1 96 21.3 98 22.0 100 21.8 102 21.3 104 21.3 106 23.9 108 25.5 110 23.6 112 23.2 114 22.8 116 22.6 118 22.8 120 22.7 122 23.0 124 22.8 126 23.1 128 21.8 130 22.9 132 22.9 134 24.6 136 22.6 138 22.5 140 23.0 142 23.0 144 22.9 146 22.4 148 21.8 150 23.3 152 22.2 154 22.3 156 23.1 158 22.2 160 22.0 162 22.8 164 22.3 166 23.5 168 23.8 170 21.2 172 21.3 174 22.2 176 20.6 178 22.1 180 21.9 182 21.9 184 21.2 186 21.6 188 21.4 190 22.0 192 21.5 194 21.7 196 20.8 198 21.9 200 23.9 202 23.7 204 22.9 206 22.0 208 22.0 210 22.5 212 22.7 214 21.5 216 21.7 218 22.0 220 22.8 222 22.6 224 21.4 226 22.4 228 22.5 230 21.8 232 22.2 234 22.0 236 23.1 238 24.8 240 25.6 242 25.8 244 24.2 246 22.7 248 21.8 250 23.0 252 21.9 254 22.7 256 22.7 258 21.8 260 22.8 262 22.8 264 22.1 266 23.2 268 21.9 270 22.8 272 22.2 274 22.9 276 22.4 278 24.0 280 20.9 282 21.0 284 21.8 286 20.6 288 21.0 290 21.7 292 20.5 294 21.4 296 22.9 298 24.2 300 23.2 302 20.7 304 21.2 306 21.4 308 22.1 310 20.9 312 21.8 314 21.1 316 22.1 318 22.1 320 21.5 322 21.9 324 21.3 326 21.6 328 21.5 330 21.5 332 23.1 334 22.9 336 22.4 338 22.2 340 22.9 342 22.6 344 22.5 346 22.4 348 22.8 350 22.7 352 22.6 354 23.1 356 23.4 358 23.0 360 22.6 362 22.2 364 23.3 366 23.0 368 23.5 370 22.8 372 21.0 374 20.3 376 21.5 378 20.6 380 20.6 382 21.5 384 20.7 386 21.5 388 20.6 390 20.8 392 21.5 394 22.2 396 24.1 398 24.8 400 25.8 402 24.9 404 22.4 406 21.8 408 21.8 410 21.0 412 21.1 414 20.6 416 21.1 418 22.1 420 22.0 422 21.0 424 20.7 426 21.3 428 22.1 430 24.9 432 22.9 434 22.6 436 22.2 438 21.6 440 22.8 442 21.8 444 21.8 446 21.2 448 21.7 450 21.8 452 22.1 454 23.8 456 21.8 458 22.6 460 21.5 462 21.4 464 22.0 466 22.4 468 22.2 470 22.4 472 21.8 474 21.7 476 21.8 478 22.7 480 21.2 482 22.6 484 21.9 486 22.1 488 21.6 490 22.4 492 23.5 494 22.1 496 23.0 498 22.2 500 22.6 502 22.3 504 22.0 506 22.7 508 22.9 510 21.9 512 21.7 514 21.8 516 22.0 518 23.1 520 23.9 522 23.5 524 22.5 526 21.3 528 21.5 530 21.5 532 21.7 534 22.6 536 22.6 538 22.0 540 24.2 542 25.8 544 25.3 546 25.2 548 23.4 550 23.4 552 22.3 552 31.3 550 30.2 548 30.2 546 28.4 544 28.3 542 27.8 540 29.4 538 31.6 536 31.0 534 31.0 532 31.9 530 32.1 528 32.1 526 32.3 524 31.1 522 30.1 520 29.7 518 30.5 516 31.6 514 31.8 512 31.9 510 31.7 508 30.7 506 30.9 504 31.6 502 31.3 500 31.0 498 31.4 496 30.6 494 31.5 492 30.1 490 31.2 488 32.0 486 31.5 484 31.7 482 31.0 480 32.4 478 30.9 476 31.8 474 31.9 472 31.8 470 31.2 468 31.4 466 31.2 464 31.6 462 32.2 460 32.1 458 31.0 456 31.8 454 29.8 452 31.5 450 31.8 448 31.9 446 32.4 444 31.8 442 31.8 440 30.8 438 32.0 436 31.4 434 31.0 432 30.7 430 28.7 428 31.5 426 32.3 424 32.9 422 32.6 420 31.6 418 31.5 416 32.5 414 33.0 412 32.5 410 32.6 408 31.8 406 31.8 404 31.2 402 28.7 400 27.8 398 28.8 396 29.5 394 31.4 392 32.1 390 32.8 388 33.0 386 32.1 384 32.9 382 32.1 380 33.0 378 33.0 376 32.1 374 33.3 372 32.6 370 30.8 368 30.1 366 30.6 364 30.3 362 31.4 360 31.0 358 30.6 356 30.2 354 30.5 352 31.0 350 30.9 348 30.8 346 31.2 344 31.1 342 31.0 340 30.7 338 31.4 336 31.2 334 30.7 332 30.5 330 32.1 328 32.1 326 32.0 324 32.3 322 31.7 320 32.1 318 31.5 316 31.5 314 32.5 312 31.8 310 32.7 308 31.5 306 32.2 304 32.4 302 32.9 300 30.4 298 29.4 296 30.7 294 32.2 292 33.1 290 31.9 288 32.6 286 33.0 284 31.8 282 32.6 280 32.7 278 29.6 276 31.2 274 30.7 272 31.4 270 30.8 268 31.7 266 30.4 264 31.5 262 30.8 260 30.8 258 31.8 256 30.9 254 30.9 252 31.7 250 30.6 248 31.8 246 30.9 244 29.4 242 27.8 240 28.0 238 28.8 236 30.5 234 31.6 232 31.4 230 31.8 228 31.1 226 31.2 224 32.2 222 31.0 220 30.8 218 31.6 216 31.9 214 32.1 212 30.9 210 31.1 208 31.6 206 31.6 204 30.7 202 29.9 200 29.7 198 31.7 196 32.8 194 31.9 192 32.1 190 31.6 188 32.2 186 32.0 184 32.4 182 31.7 180 31.7 178 31.5 176 33.0 174 31.4 172 32.3 170 32.4 168 29.8 166 30.1 164 31.3 162 30.8 160 31.6 158 31.4 156 30.5 154 31.3 152 31.4 150 30.3 148 31.8 146 31.2 144 30.7 142 30.6 140 30.6 138 31.1 136 31.0 134 29.0 132 30.7 130 30.7 128 31.8 126 30.5 124 30.8 122 30.6 120 30.9 118 30.8 116 31.0 114 30.8 112 30.4 110 30.0 108 28.1 106 29.7 104 32.3 102 32.3 100 31.8 98 31.6 96 32.3 94 32.5 92 32.4 90 31.1 88 31.2 86 30.7 84 30.5 82 31.6 80 30.8 78 31.1 76 31.1 74 31.2 72 31.5 70 31.0 68 30.8 66 30.5 64 31.0 62 30.7 60 30.6 58 31.4 56 30.2 54 31.5 52 30.9 50 31.2 48 30.2 46 30.0 44 30.6 42 30.5 40 30.1 38 30.1 36 31.3 34 31.0 32 30.3 30 30.5 28 30.0 26 28.4 24 29.7 22 30.2 20 31.1 18 30.1 16 30.8 14 31.2 12 30.7 10 30.0 8 30.2 6 30.2 4 30.2 2 30.6 0 30.3Z" fill="#1f1f1f"/></svg>
<div style="left:574px;top:1140px;width:343px;height:34px;background:repeating-linear-gradient(135deg,#1d1d1d 0 4.25px,#445b7c 4.25px 8.5px);background-attachment:fixed"></div>
<div style="left:574px;top:1164px;width:343px;height:10px;background:linear-gradient(rgba(20,20,20,0),rgba(20,20,20,0.45))"></div>
<i style="left:574px;top:1174px;width:343px;height:36px;background:#b4a07a;"></i>
<svg style="left:605px;top:1174px" width="279" height="36"><path d="M1 0v36M36 0v36M70 0v36M105 0v36M139 0v36M174 0v36M209 0v36M243 0v36M278 0v36" stroke="#7b7260" stroke-width="2"/></svg>
<i style="left:917px;top:1140px;width:2px;height:34px;background:#8d6222;"></i>
<i style="left:917px;top:1140px;width:277px;height:2px;background:#8d6222;"></i>
<i style="left:919px;top:1142px;width:275px;height:30px;background:#f2ab4b;"></i>
<i style="left:917px;top:1172px;width:277px;height:2px;background:#8d6222;"></i>
<i style="left:917px;top:1174px;width:277px;height:36px;background:#b4a07a;"></i>
<i style="left:917px;top:1174px;width:2px;height:36px;background:#7b7260;"></i>
<svg style="left:951px;top:1174px" width="210" height="36"><path d="M1 0v36M36 0v36M71 0v36M105 0v36M140 0v36M175 0v36M209 0v36" stroke="#7b7260" stroke-width="2"/></svg>
<div style="left:919px;top:1142px;width:275px;height:30px;overflow:hidden"><span style="left:5px;top:3.90px;font-size:20px;line-height:22.34px;color:#2a2418;white-space:nowrap;letter-spacing:0.45px">SS_PGV3_In_Love_Lead_Vocals_100_Bbmaj_Wet</span></div>
<svg style="left:919px;top:1174px" width="276" height="36"><path d="M0 4.2 2 4.2 4 4.7 6 4.4 8 3.8 10 3.5 12 4.0 14 4.7 16 3.5 18 4.2 20 3.5 22 3.7 24 3.9 26 5.9 28 6.5 30 4.6 32 4.5 34 4.5 36 4.2 38 4.7 40 4.9 42 3.4 44 3.8 46 4.8 48 3.4 50 3.4 52 4.5 54 3.9 56 4.2 58 4.5 60 4.8 62 5.0 64 6.2 66 7.4 68 6.4 70 4.2 72 4.5 74 4.3 76 4.3 78 4.1 80 4.4 82 4.2 84 3.9 86 4.6 88 3.5 90 5.1 92 7.6 94 7.3 96 6.4 98 5.5 100 4.0 102 3.5 104 4.1 106 5.0 108 4.2 110 4.0 112 4.2 114 3.9 116 4.2 118 4.3 120 6.3 122 6.7 124 6.0 126 3.7 128 3.7 130 2.8 132 2.4 134 2.6 136 2.6 138 3.0 140 3.5 142 2.9 144 3.3 146 2.5 148 2.7 150 2.3 152 3.2 154 3.1 156 3.8 158 5.1 160 5.7 162 4.8 164 4.2 166 3.5 168 4.0 170 4.0 172 3.9 174 4.3 176 3.5 178 4.5 180 3.7 182 4.1 184 3.3 186 4.1 188 3.7 190 4.1 192 4.4 194 3.5 196 3.5 198 4.6 200 5.5 202 5.0 204 4.4 206 4.9 208 4.0 210 3.8 212 4.3 214 5.0 216 4.1 218 5.4 220 7.0 222 4.2 224 3.6 226 3.7 228 4.1 230 2.8 232 3.6 234 3.4 236 3.5 238 3.9 240 2.9 242 4.2 244 4.0 246 5.4 248 6.9 250 7.1 252 4.8 254 3.0 256 3.5 258 2.8 260 3.4 262 2.9 264 3.0 266 2.7 268 3.0 270 2.5 272 3.6 274 3.3 275 3.3 275 13.9 274 13.9 272 13.6 270 14.7 268 14.2 266 14.5 264 14.2 262 14.3 260 13.8 258 14.4 256 13.7 254 14.2 252 12.4 250 10.1 248 10.3 246 11.8 244 13.2 242 13.0 240 14.3 238 13.3 236 13.7 234 13.8 232 13.6 230 14.4 228 13.1 226 13.5 224 13.6 222 13.0 220 10.2 218 11.8 216 13.1 214 12.2 212 12.9 210 13.4 208 13.2 206 12.3 204 12.8 202 12.2 200 11.7 198 12.6 196 13.7 194 13.7 192 12.8 190 13.1 188 13.5 186 13.1 184 13.9 182 13.1 180 13.5 178 12.7 176 13.7 174 12.9 172 13.3 170 13.2 168 13.2 166 13.7 164 13.0 162 12.4 160 11.5 158 12.1 156 13.4 154 14.1 152 14.0 150 14.9 148 14.5 146 14.7 144 13.9 142 14.3 140 13.7 138 14.2 136 14.6 134 14.6 132 14.8 130 14.4 128 13.5 126 13.5 124 11.2 122 10.5 120 10.9 118 12.9 116 13.0 114 13.3 112 13.0 110 13.2 108 13.0 106 12.2 104 13.1 102 13.7 100 13.2 98 11.7 96 10.8 94 9.9 92 9.6 90 12.1 88 13.7 86 12.6 84 13.3 82 13.0 80 12.8 78 13.1 76 12.9 74 12.9 72 12.7 70 13.0 68 10.8 66 9.8 64 11.0 62 12.2 60 12.4 58 12.7 56 13.0 54 13.3 52 12.7 50 13.8 48 13.8 46 12.4 44 13.4 42 13.8 40 12.3 38 12.5 36 13.0 34 12.7 32 12.7 30 12.6 28 10.7 26 11.3 24 13.3 22 13.5 20 13.7 18 13.0 16 13.7 14 12.5 12 13.2 10 13.7 8 13.4 6 12.8 4 12.5 2 13.0 0 13.0Z" fill="#1f1f1f"/><path d="M0 22.4 2 22.4 4 22.9 6 22.6 8 22.0 10 21.7 12 22.2 14 22.9 16 21.7 18 22.4 20 21.7 22 21.9 24 22.1 26 24.1 28 24.7 30 22.8 32 22.7 34 22.7 36 22.4 38 22.9 40 23.1 42 21.6 44 22.0 46 23.0 48 21.6 50 21.6 52 22.7 54 22.1 56 22.4 58 22.7 60 23.0 62 23.2 64 24.4 66 25.6 68 24.6 70 22.4 72 22.7 74 22.5 76 22.5 78 22.3 80 22.6 82 22.4 84 22.1 86 22.8 88 21.7 90 23.3 92 25.8 94 25.5 96 24.6 98 23.7 100 22.2 102 21.7 104 22.3 106 23.2 108 22.4 110 22.2 112 22.4 114 22.1 116 22.4 118 22.5 120 24.5 122 24.9 124 24.2 126 21.9 128 21.9 130 21.0 132 20.6 134 20.8 136 20.8 138 21.2 140 21.7 142 21.1 144 21.5 146 20.7 148 20.9 150 20.5 152 21.4 154 21.3 156 22.0 158 23.3 160 23.9 162 23.0 164 22.4 166 21.7 168 22.2 170 22.2 172 22.1 174 22.5 176 21.7 178 22.7 180 21.9 182 22.3 184 21.5 186 22.3 188 21.9 190 22.3 192 22.6 194 21.7 196 21.7 198 22.8 200 23.7 202 23.2 204 22.6 206 23.1 208 22.2 210 22.0 212 22.5 214 23.2 216 22.3 218 23.6 220 25.2 222 22.4 224 21.8 226 21.9 228 22.3 230 21.0 232 21.8 234 21.6 236 21.7 238 22.1 240 21.1 242 22.4 244 22.2 246 23.6 248 25.1 250 25.3 252 23.0 254 21.2 256 21.7 258 21.0 260 21.6 262 21.1 264 21.2 266 20.9 268 21.2 270 20.7 272 21.8 274 21.5 275 21.5 275 32.1 274 32.1 272 31.8 270 32.9 268 32.4 266 32.7 264 32.4 262 32.5 260 32.0 258 32.6 256 31.9 254 32.4 252 30.6 250 28.3 248 28.5 246 30.0 244 31.4 242 31.2 240 32.5 238 31.5 236 31.9 234 32.0 232 31.8 230 32.6 228 31.3 226 31.7 224 31.8 222 31.2 220 28.4 218 30.0 216 31.3 214 30.4 212 31.1 210 31.6 208 31.4 206 30.5 204 31.0 202 30.4 200 29.9 198 30.8 196 31.9 194 31.9 192 31.0 190 31.3 188 31.7 186 31.3 184 32.1 182 31.3 180 31.7 178 30.9 176 31.9 174 31.1 172 31.5 170 31.4 168 31.4 166 31.9 164 31.2 162 30.6 160 29.7 158 30.3 156 31.6 154 32.3 152 32.2 150 33.1 148 32.7 146 32.9 144 32.1 142 32.5 140 31.9 138 32.4 136 32.8 134 32.8 132 33.0 130 32.6 128 31.7 126 31.7 124 29.4 122 28.7 120 29.1 118 31.1 116 31.2 114 31.5 112 31.2 110 31.4 108 31.2 106 30.4 104 31.3 102 31.9 100 31.4 98 29.9 96 29.0 94 28.1 92 27.8 90 30.3 88 31.9 86 30.8 84 31.5 82 31.2 80 31.0 78 31.3 76 31.1 74 31.1 72 30.9 70 31.2 68 29.0 66 28.0 64 29.2 62 30.4 60 30.6 58 30.9 56 31.2 54 31.5 52 30.9 50 32.0 48 32.0 46 30.6 44 31.6 42 32.0 40 30.5 38 30.7 36 31.2 34 30.9 32 30.9 30 30.8 28 28.9 26 29.5 24 31.5 22 31.7 20 31.9 18 31.2 16 31.9 14 30.7 12 31.4 10 31.9 8 31.6 6 31.0 4 30.7 2 31.2 0 31.2Z" fill="#1f1f1f"/></svg>
<i style="left:1194px;top:1140px;width:2px;height:34px;background:#8d6222;"></i>
<i style="left:1194px;top:1140px;width:282px;height:2px;background:#8d6222;"></i>
<i style="left:1196px;top:1142px;width:280px;height:30px;background:#f2ab4b;"></i>
<i style="left:1194px;top:1172px;width:282px;height:2px;background:#8d6222;"></i>
<i style="left:1194px;top:1174px;width:282px;height:36px;background:#b4a07a;"></i>
<i style="left:1194px;top:1174px;width:2px;height:36px;background:#7b7260;"></i>
<svg style="left:1229px;top:1174px" width="244" height="36"><path d="M1 0v36M35 0v36M70 0v36M105 0v36M139 0v36M174 0v36M208 0v36M243 0v36" stroke="#7b7260" stroke-width="2"/></svg>
<div style="left:1196px;top:1142px;width:280px;height:30px;overflow:hidden"><span style="left:5px;top:3.90px;font-size:20px;line-height:22.34px;color:#2a2418;white-space:nowrap;letter-spacing:0.45px">SS_PGV3_In_Love_Lead_Vocals_100_Bbmaj_Wet</span></div>
<svg style="left:1196px;top:1174px" width="279" height="36"><path d="M0 5.6 2 4.7 4 3.5 6 4.2 8 4.4 10 3.7 12 4.2 14 4.1 16 4.4 18 3.6 20 4.0 22 3.5 24 4.5 26 4.1 28 3.9 30 3.9 32 4.6 34 3.5 36 4.4 38 6.4 40 7.1 42 6.7 44 4.6 46 2.7 48 3.7 50 2.7 52 2.5 54 2.9 56 3.8 58 4.1 60 3.1 62 3.9 64 4.0 66 4.0 68 3.7 70 4.9 72 5.8 74 7.3 76 7.6 78 5.0 80 5.5 82 5.3 84 4.6 86 4.9 88 4.8 90 4.9 92 4.8 94 4.9 96 5.1 98 5.4 100 4.7 102 5.0 104 5.7 106 7.2 108 5.6 110 5.0 112 5.0 114 4.5 116 4.0 118 4.3 120 4.3 122 5.0 124 5.8 126 4.3 128 2.4 130 3.8 132 3.7 134 3.4 136 3.2 138 2.5 140 2.4 142 4.4 144 7.0 146 7.2 148 6.3 150 4.3 152 4.8 154 4.6 156 4.0 158 5.4 160 4.0 162 4.8 164 4.6 166 4.1 168 4.2 170 5.2 172 4.4 174 3.3 176 3.5 178 4.7 180 3.5 182 4.4 184 4.0 186 4.0 188 4.6 190 4.5 192 4.1 194 4.7 196 5.5 198 7.2 200 7.2 202 6.3 204 5.6 206 3.4 208 4.1 210 3.0 212 3.5 214 2.9 216 3.2 218 3.2 220 3.3 222 4.3 224 3.5 226 4.0 228 5.5 230 6.6 232 6.0 234 3.9 236 5.1 238 4.7 240 4.5 242 4.1 244 4.3 246 3.8 248 4.3 250 4.8 252 3.9 254 5.9 256 4.7 258 4.2 260 3.4 262 2.9 264 3.8 266 3.7 268 3.6 270 3.9 272 3.4 274 3.9 276 4.3 278 3.9 278 13.3 276 12.9 274 13.3 272 13.8 270 13.3 268 13.6 266 13.5 264 13.4 262 14.3 260 13.8 258 13.0 256 12.5 254 11.3 252 13.3 250 12.4 248 12.9 246 13.4 244 12.9 242 13.1 240 12.7 238 12.5 236 12.1 234 13.3 232 11.2 230 10.6 228 11.7 226 13.2 224 13.7 222 12.9 220 13.9 218 14.0 216 14.0 214 14.3 212 13.7 210 14.2 208 13.1 206 13.8 204 11.6 202 10.9 200 10.0 198 10.0 196 11.7 194 12.5 192 13.1 190 12.7 188 12.6 186 13.2 184 13.2 182 12.8 180 13.7 178 12.5 176 13.7 174 13.9 172 12.8 170 12.0 168 13.0 166 13.1 164 12.6 162 12.4 160 13.2 158 11.8 156 13.2 154 12.6 152 12.4 150 12.9 148 10.9 146 10.0 144 10.2 142 12.8 140 14.8 138 14.7 136 14.0 134 13.8 132 13.5 130 13.4 128 14.8 126 12.9 124 11.4 122 12.2 120 12.9 118 12.9 116 13.2 114 12.7 112 12.2 110 12.2 108 11.6 106 10.0 104 11.5 102 12.2 100 12.5 98 11.8 96 12.1 94 12.3 92 12.4 90 12.3 88 12.4 86 12.3 84 12.6 82 11.9 80 11.7 78 12.2 76 9.6 74 9.9 72 11.4 70 12.3 68 13.5 66 13.2 64 13.2 62 13.3 60 14.1 58 13.1 56 13.4 54 14.3 52 14.7 50 14.5 48 13.5 46 14.5 44 12.6 42 10.5 40 10.1 38 10.8 36 12.8 34 13.7 32 12.6 30 13.3 28 13.3 26 13.1 24 12.7 22 13.7 20 13.2 18 13.6 16 12.8 14 13.1 12 13.0 10 13.5 8 12.8 6 13.0 4 13.7 2 12.5 0 11.6Z" fill="#1f1f1f"/><path d="M0 23.8 2 22.9 4 21.7 6 22.4 8 22.6 10 21.9 12 22.4 14 22.3 16 22.6 18 21.8 20 22.2 22 21.7 24 22.7 26 22.3 28 22.1 30 22.1 32 22.8 34 21.7 36 22.6 38 24.6 40 25.3 42 24.9 44 22.8 46 20.9 48 21.9 50 20.9 52 20.7 54 21.1 56 22.0 58 22.3 60 21.3 62 22.1 64 22.2 66 22.2 68 21.9 70 23.1 72 24.0 74 25.5 76 25.8 78 23.2 80 23.7 82 23.5 84 22.8 86 23.1 88 23.0 90 23.1 92 23.0 94 23.1 96 23.3 98 23.6 100 22.9 102 23.2 104 23.9 106 25.4 108 23.8 110 23.2 112 23.2 114 22.7 116 22.2 118 22.5 120 22.5 122 23.2 124 24.0 126 22.5 128 20.6 130 22.0 132 21.9 134 21.6 136 21.4 138 20.7 140 20.6 142 22.6 144 25.2 146 25.4 148 24.5 150 22.5 152 23.0 154 22.8 156 22.2 158 23.6 160 22.2 162 23.0 164 22.8 166 22.3 168 22.4 170 23.4 172 22.6 174 21.5 176 21.7 178 22.9 180 21.7 182 22.6 184 22.2 186 22.2 188 22.8 190 22.7 192 22.3 194 22.9 196 23.7 198 25.4 200 25.4 202 24.5 204 23.8 206 21.6 208 22.3 210 21.2 212 21.7 214 21.1 216 21.4 218 21.4 220 21.5 222 22.5 224 21.7 226 22.2 228 23.7 230 24.8 232 24.2 234 22.1 236 23.3 238 22.9 240 22.7 242 22.3 244 22.5 246 22.0 248 22.5 250 23.0 252 22.1 254 24.1 256 22.9 258 22.4 260 21.6 262 21.1 264 22.0 266 21.9 268 21.8 270 22.1 272 21.6 274 22.1 276 22.5 278 22.1 278 31.5 276 31.1 274 31.5 272 32.0 270 31.5 268 31.8 266 31.7 264 31.6 262 32.5 260 32.0 258 31.2 256 30.7 254 29.5 252 31.5 250 30.6 248 31.1 246 31.6 244 31.1 242 31.3 240 30.9 238 30.7 236 30.3 234 31.5 232 29.4 230 28.8 228 29.9 226 31.4 224 31.9 222 31.1 220 32.1 218 32.2 216 32.2 214 32.5 212 31.9 210 32.4 208 31.3 206 32.0 204 29.8 202 29.1 200 28.2 198 28.2 196 29.9 194 30.7 192 31.3 190 30.9 188 30.8 186 31.4 184 31.4 182 31.0 180 31.9 178 30.7 176 31.9 174 32.1 172 31.0 170 30.2 168 31.2 166 31.3 164 30.8 162 30.6 160 31.4 158 30.0 156 31.4 154 30.8 152 30.6 150 31.1 148 29.1 146 28.2 144 28.4 142 31.0 140 33.0 138 32.9 136 32.2 134 32.0 132 31.7 130 31.6 128 33.0 126 31.1 124 29.6 122 30.4 120 31.1 118 31.1 116 31.4 114 30.9 112 30.4 110 30.4 108 29.8 106 28.2 104 29.7 102 30.4 100 30.7 98 30.0 96 30.3 94 30.5 92 30.6 90 30.5 88 30.6 86 30.5 84 30.8 82 30.1 80 29.9 78 30.4 76 27.8 74 28.1 72 29.6 70 30.5 68 31.7 66 31.4 64 31.4 62 31.5 60 32.3 58 31.3 56 31.6 54 32.5 52 32.9 50 32.7 48 31.7 46 32.7 44 30.8 42 28.7 40 28.3 38 29.0 36 31.0 34 31.9 32 30.8 30 31.5 28 31.5 26 31.3 24 30.9 22 31.9 20 31.4 18 31.8 16 31.0 14 31.3 12 31.2 10 31.7 8 31.0 6 31.2 4 31.9 2 30.7 0 29.8Z" fill="#1f1f1f"/></svg>
<div style="left:1476px;top:1140px;width:918px;height:34px;background:repeating-linear-gradient(135deg,#1d1d1d 0 4.25px,#445b7c 4.25px 8.5px);background-attachment:fixed"></div>
<div style="left:1476px;top:1164px;width:918px;height:10px;background:linear-gradient(rgba(20,20,20,0),rgba(20,20,20,0.45))"></div>
<i style="left:1476px;top:1174px;width:918px;height:36px;background:#b4a07a;"></i>
<svg style="left:1506px;top:1174px" width="868" height="36"><path d="M1 0v36M35 0v36M70 0v36M105 0v36M139 0v36M174 0v36M209 0v36M243 0v36M278 0v36M313 0v36M347 0v36M382 0v36M417 0v36M451 0v36M486 0v36M521 0v36M555 0v36M590 0v36M624 0v36M659 0v36M694 0v36M728 0v36M763 0v36M798 0v36M832 0v36M867 0v36" stroke="#7b7260" stroke-width="2"/></svg>
<i style="left:570px;top:1214px;width:2px;height:34px;background:#8d6222;"></i>
<i style="left:570px;top:1214px;width:277px;height:2px;background:#8d6222;"></i>
<i style="left:572px;top:1216px;width:275px;height:30px;background:#f2ab4b;"></i>
<i style="left:570px;top:1246px;width:277px;height:2px;background:#8d6222;"></i>
<i style="left:570px;top:1248px;width:277px;height:36px;background:#f2ab4b;"></i>
<i style="left:570px;top:1248px;width:2px;height:36px;background:#a8762e;"></i>
<svg style="left:605px;top:1248px" width="210" height="36"><path d="M1 0v36M36 0v36M70 0v36M105 0v36M139 0v36M174 0v36M209 0v36" stroke="#a8762e" stroke-width="2"/></svg>
<i style="left:580px;top:1276px;width:2px;height:4px;background:#8a5a22;"></i>
<i style="left:582px;top:1276px;width:15px;height:4px;background:#1e1a12;"></i>
<i style="left:649px;top:1276px;width:2px;height:4px;background:#8a5a22;"></i>
<i style="left:651px;top:1276px;width:15px;height:4px;background:#1e1a12;"></i>
<i style="left:719px;top:1276px;width:2px;height:4px;background:#8a5a22;"></i>
<i style="left:721px;top:1276px;width:15px;height:4px;background:#1e1a12;"></i>
<i style="left:788px;top:1276px;width:2px;height:4px;background:#8a5a22;"></i>
<i style="left:790px;top:1276px;width:15px;height:4px;background:#1e1a12;"></i>
<i style="left:1471px;top:1214px;width:2px;height:34px;background:#8d6222;"></i>
<i style="left:1471px;top:1214px;width:277px;height:2px;background:#8d6222;"></i>
<i style="left:1473px;top:1216px;width:275px;height:30px;background:#f2ab4b;"></i>
<i style="left:1471px;top:1246px;width:277px;height:2px;background:#8d6222;"></i>
<i style="left:1471px;top:1248px;width:277px;height:36px;background:#f2ab4b;"></i>
<i style="left:1471px;top:1248px;width:2px;height:36px;background:#a8762e;"></i>
<svg style="left:1506px;top:1248px" width="210" height="36"><path d="M1 0v36M35 0v36M70 0v36M105 0v36M139 0v36M174 0v36M209 0v36" stroke="#a8762e" stroke-width="2"/></svg>
<i style="left:1481px;top:1276px;width:2px;height:4px;background:#8a5a22;"></i>
<i style="left:1483px;top:1276px;width:15px;height:4px;background:#1e1a12;"></i>
<i style="left:1550px;top:1276px;width:2px;height:4px;background:#8a5a22;"></i>
<i style="left:1552px;top:1276px;width:15px;height:4px;background:#1e1a12;"></i>
<i style="left:1620px;top:1276px;width:2px;height:4px;background:#8a5a22;"></i>
<i style="left:1622px;top:1276px;width:15px;height:4px;background:#1e1a12;"></i>
<i style="left:1689px;top:1276px;width:2px;height:4px;background:#8a5a22;"></i>
<i style="left:1691px;top:1276px;width:15px;height:4px;background:#1e1a12;"></i>
<i style="left:1748px;top:1214px;width:2px;height:34px;background:#8d6222;"></i>
<i style="left:1748px;top:1214px;width:278px;height:2px;background:#8d6222;"></i>
<i style="left:1750px;top:1216px;width:276px;height:30px;background:#f2ab4b;"></i>
<i style="left:1748px;top:1246px;width:278px;height:2px;background:#8d6222;"></i>
<i style="left:1748px;top:1248px;width:278px;height:36px;background:#f2ab4b;"></i>
<i style="left:1748px;top:1248px;width:2px;height:36px;background:#a8762e;"></i>
<svg style="left:1783px;top:1248px" width="210" height="36"><path d="M1 0v36M36 0v36M70 0v36M105 0v36M140 0v36M174 0v36M209 0v36" stroke="#a8762e" stroke-width="2"/></svg>
<i style="left:1758px;top:1276px;width:2px;height:4px;background:#8a5a22;"></i>
<i style="left:1760px;top:1276px;width:15px;height:4px;background:#1e1a12;"></i>
<i style="left:1828px;top:1276px;width:2px;height:4px;background:#8a5a22;"></i>
<i style="left:1830px;top:1276px;width:15px;height:4px;background:#1e1a12;"></i>
<i style="left:1897px;top:1276px;width:2px;height:4px;background:#8a5a22;"></i>
<i style="left:1899px;top:1276px;width:15px;height:4px;background:#1e1a12;"></i>
<i style="left:1966px;top:1276px;width:2px;height:4px;background:#8a5a22;"></i>
<i style="left:1968px;top:1276px;width:15px;height:4px;background:#1e1a12;"></i>
<i style="left:570px;top:1288px;width:2px;height:34px;background:#8d6222;"></i>
<i style="left:570px;top:1288px;width:277px;height:2px;background:#8d6222;"></i>
<i style="left:572px;top:1290px;width:275px;height:30px;background:#f2ab4b;"></i>
<i style="left:570px;top:1320px;width:277px;height:2px;background:#8d6222;"></i>
<i style="left:570px;top:1322px;width:277px;height:36px;background:#f2ab4b;"></i>
<i style="left:570px;top:1322px;width:2px;height:36px;background:#a8762e;"></i>
<svg style="left:605px;top:1322px" width="210" height="36"><path d="M1 0v36M36 0v36M70 0v36M105 0v36M139 0v36M174 0v36M209 0v36" stroke="#a8762e" stroke-width="2"/></svg>
<i style="left:599px;top:1330px;width:6px;height:4px;background:#1e1a12;"></i>
<i style="left:634px;top:1330px;width:6px;height:4px;background:#1e1a12;"></i>
<i style="left:668px;top:1330px;width:6px;height:4px;background:#1e1a12;"></i>
<i style="left:695px;top:1348px;width:10px;height:4px;background:#1e1a12;"></i>
<i style="left:738px;top:1330px;width:6px;height:4px;background:#1e1a12;"></i>
<i style="left:772px;top:1330px;width:6px;height:4px;background:#1e1a12;"></i>
<i style="left:807px;top:1330px;width:6px;height:4px;background:#1e1a12;"></i>
<i style="left:1471px;top:1288px;width:2px;height:34px;background:#8d6222;"></i>
<i style="left:1471px;top:1288px;width:277px;height:2px;background:#8d6222;"></i>
<i style="left:1473px;top:1290px;width:275px;height:30px;background:#f2ab4b;"></i>
<i style="left:1471px;top:1320px;width:277px;height:2px;background:#8d6222;"></i>
<i style="left:1471px;top:1322px;width:277px;height:36px;background:#f2ab4b;"></i>
<i style="left:1471px;top:1322px;width:2px;height:36px;background:#a8762e;"></i>
<svg style="left:1506px;top:1322px" width="210" height="36"><path d="M1 0v36M35 0v36M70 0v36M105 0v36M139 0v36M174 0v36M209 0v36" stroke="#a8762e" stroke-width="2"/></svg>
<i style="left:1500px;top:1330px;width:6px;height:4px;background:#1e1a12;"></i>
<i style="left:1527px;top:1348px;width:10px;height:4px;background:#1e1a12;"></i>
<i style="left:1569px;top:1330px;width:6px;height:4px;background:#1e1a12;"></i>
<i style="left:1604px;top:1330px;width:6px;height:4px;background:#1e1a12;"></i>
<i style="left:1639px;top:1330px;width:6px;height:4px;background:#1e1a12;"></i>
<i style="left:1673px;top:1330px;width:6px;height:4px;background:#1e1a12;"></i>
<i style="left:1708px;top:1330px;width:6px;height:4px;background:#1e1a12;"></i>
<i style="left:16px;top:104px;width:2402px;height:4px;background:#222222;"></i>
<i style="left:2408px;top:58px;width:2px;height:1384px;background:#9a9a9a;"></i>
<i style="left:2418px;top:104px;width:206px;height:1338px;background:#222222;"></i>
<i style="left:2422px;top:108px;width:8px;height:66px;background:#ffffff;"></i>
<i style="left:2430px;top:108px;width:2px;height:66px;background:#222222;"></i>
<i style="left:2432px;top:108px;width:186px;height:66px;background:#5a8fe0;"></i>
<svg style="left:2438px;top:108px" width="26" height="26"><circle cx="13" cy="13" r="11.8" fill="none" stroke="#a9b8d0" stroke-width="2"/><polygon points="6,10 20,10 13,19" fill="#a9b8d0"/></svg>
<span style="left:2477px;top:109.90px;font-size:20px;line-height:22.34px;color:#a9b8d0;font-weight:bold;letter-spacing:0px">Bd+snare</span>
<i style="left:2422px;top:178px;width:196px;height:70px;background:#ffffff;"></i>
<svg style="left:2428px;top:182px" width="26" height="26"><circle cx="13" cy="13" r="11.8" fill="none" stroke="#333333" stroke-width="2"/><polygon points="6,10 20,10 13,19" fill="#333333"/></svg>
<span style="left:2468px;top:183.90px;font-size:20px;line-height:22.34px;color:#333333;font-weight:bold;white-space:nowrap;letter-spacing:0.2px">Hihats</span>
<i style="left:2422px;top:252px;width:196px;height:70px;background:#5a8fe0;"></i>
<svg style="left:2428px;top:256px" width="26" height="26"><circle cx="13" cy="13" r="11.8" fill="none" stroke="#a9b8d0" stroke-width="2"/><polygon points="6,10 20,10 13,19" fill="#a9b8d0"/></svg>
<span style="left:2468px;top:257.90px;font-size:20px;line-height:22.34px;color:#a9b8d0;font-weight:bold;white-space:nowrap;letter-spacing:0.2px">Tom</span>
<i style="left:2422px;top:326px;width:196px;height:70px;background:#5a8fe0;"></i>
<svg style="left:2428px;top:330px" width="26" height="26"><circle cx="13" cy="13" r="11.8" fill="none" stroke="#a9b8d0" stroke-width="2"/><polygon points="6,10 20,10 13,19" fill="#a9b8d0"/></svg>
<span style="left:2468px;top:331.90px;font-size:20px;line-height:22.34px;color:#a9b8d0;font-weight:bold;white-space:nowrap;letter-spacing:0.2px">Top</span>
<i style="left:2422px;top:400px;width:196px;height:70px;background:#5a8fe0;"></i>
<svg style="left:2428px;top:404px" width="26" height="26"><circle cx="13" cy="13" r="11.8" fill="none" stroke="#a9b8d0" stroke-width="2"/><polygon points="6,10 20,10 13,19" fill="#a9b8d0"/></svg>
<span style="left:2468px;top:405.90px;font-size:20px;line-height:22.34px;color:#a9b8d0;font-weight:bold;white-space:nowrap;letter-spacing:0.2px">Top2</span>
<i style="left:2422px;top:474px;width:196px;height:70px;background:#5a8fe0;"></i>
<svg style="left:2428px;top:478px" width="26" height="26"><circle cx="13" cy="13" r="11.8" fill="none" stroke="#a9b8d0" stroke-width="2"/><polygon points="6,10 20,10 13,19" fill="#a9b8d0"/></svg>
<span style="left:2468px;top:479.90px;font-size:20px;line-height:22.34px;color:#a9b8d0;font-weight:bold;white-space:nowrap;letter-spacing:0.2px">Bass arp</span>
<i style="left:2422px;top:548px;width:196px;height:70px;background:#5a8fe0;"></i>
<svg style="left:2428px;top:552px" width="26" height="26"><circle cx="13" cy="13" r="11.8" fill="none" stroke="#a9b8d0" stroke-width="2"/><polygon points="6,10 20,10 13,19" fill="#a9b8d0"/></svg>
<span style="left:2468px;top:553.90px;font-size:20px;line-height:22.34px;color:#a9b8d0;font-weight:bold;white-space:nowrap;letter-spacing:0.2px">Saw</span>
<i style="left:2422px;top:622px;width:196px;height:70px;background:#5a8fe0;"></i>
<svg style="left:2428px;top:626px" width="26" height="26"><circle cx="13" cy="13" r="11.8" fill="none" stroke="#a9b8d0" stroke-width="2"/><polygon points="6,10 20,10 13,19" fill="#a9b8d0"/></svg>
<span style="left:2468px;top:627.90px;font-size:20px;line-height:22.34px;color:#a9b8d0;font-weight:bold;white-space:nowrap;letter-spacing:0.2px">Lead filter</span>
<i style="left:2422px;top:696px;width:196px;height:70px;background:#5a8fe0;"></i>
<svg style="left:2428px;top:700px" width="26" height="26"><circle cx="13" cy="13" r="11.8" fill="none" stroke="#a9b8d0" stroke-width="2"/><polygon points="6,10 20,10 13,19" fill="#a9b8d0"/></svg>
<span style="left:2468px;top:701.90px;font-size:20px;line-height:22.34px;color:#a9b8d0;font-weight:bold;white-space:nowrap;letter-spacing:0.2px">Arp square</span>
<i style="left:2422px;top:770px;width:196px;height:70px;background:#5a8fe0;"></i>
<svg style="left:2428px;top:774px" width="26" height="26"><circle cx="13" cy="13" r="11.8" fill="none" stroke="#a9b8d0" stroke-width="2"/><polygon points="6,10 20,10 13,19" fill="#a9b8d0"/></svg>
<span style="left:2468px;top:775.90px;font-size:20px;line-height:22.34px;color:#a9b8d0;font-weight:bold;white-space:nowrap;letter-spacing:0.2px">Lead filter2</span>
<i style="left:2422px;top:844px;width:196px;height:70px;background:#9ac3f8;"></i>
<svg style="left:2428px;top:848px" width="26" height="26"><circle cx="13" cy="13" r="11.8" fill="none" stroke="#2a2a2a" stroke-width="2"/><line x1="7" y1="8.5" x2="15" y2="8.5" stroke="#2a2a2a" stroke-width="2"/><line x1="10" y1="13" x2="19" y2="13" stroke="#2a2a2a" stroke-width="2"/><line x1="10" y1="17.5" x2="19" y2="17.5" stroke="#2a2a2a" stroke-width="2"/></svg>
<span style="left:2468px;top:849.90px;font-size:20px;line-height:22.34px;color:#232323;font-weight:bold;white-space:nowrap;letter-spacing:0.2px">BUS</span>
<i style="left:2422px;top:914px;width:8px;height:148px;background:#9ac3f8;"></i>
<i style="left:2430px;top:914px;width:2px;height:148px;background:#222222;"></i>
<i style="left:2432px;top:918px;width:186px;height:70px;background:#5a8fe0;"></i>
<svg style="left:2438px;top:922px" width="26" height="26"><circle cx="13" cy="13" r="11.8" fill="none" stroke="#a9b8d0" stroke-width="2"/><polygon points="6,10 20,10 13,19" fill="#a9b8d0"/></svg>
<span style="left:2478px;top:923.90px;font-size:20px;line-height:22.34px;color:#a9b8d0;font-weight:bold;white-space:nowrap;letter-spacing:0.2px">Lead</span>
<i style="left:2432px;top:992px;width:186px;height:70px;background:#5a8fe0;"></i>
<svg style="left:2438px;top:996px" width="26" height="26"><circle cx="13" cy="13" r="11.8" fill="none" stroke="#a9b8d0" stroke-width="2"/><polygon points="6,10 20,10 13,19" fill="#a9b8d0"/></svg>
<span style="left:2478px;top:997.90px;font-size:20px;line-height:22.34px;color:#a9b8d0;font-weight:bold;white-space:nowrap;letter-spacing:0.2px">Pluck</span>
<i style="left:2422px;top:1066px;width:196px;height:70px;background:#f2ab4b;"></i>
<svg style="left:2428px;top:1070px" width="26" height="26"><circle cx="13" cy="13" r="11.8" fill="none" stroke="#33260f" stroke-width="2"/><line x1="7" y1="8.5" x2="15" y2="8.5" stroke="#33260f" stroke-width="2"/><line x1="10" y1="13" x2="19" y2="13" stroke="#33260f" stroke-width="2"/><line x1="10" y1="17.5" x2="19" y2="17.5" stroke="#33260f" stroke-width="2"/></svg>
<span style="left:2468px;top:1071.90px;font-size:20px;line-height:22.34px;color:#33260f;font-weight:bold;white-space:nowrap;letter-spacing:0.2px">Vocals</span>
<i style="left:2422px;top:1136px;width:8px;height:222px;background:#f2ab4b;"></i>
<i style="left:2430px;top:1136px;width:2px;height:222px;background:#222222;"></i>
<i style="left:2432px;top:1140px;width:186px;height:70px;background:#5a8fe0;"></i>
<svg style="left:2438px;top:1144px" width="26" height="26"><circle cx="13" cy="13" r="11.8" fill="none" stroke="#a9b8d0" stroke-width="2"/><polygon points="6,10 20,10 13,19" fill="#a9b8d0"/></svg>
<span style="left:2478px;top:1145.90px;font-size:20px;line-height:22.34px;color:#a9b8d0;font-weight:bold;white-space:nowrap;letter-spacing:0.2px">Vox main</span>
<i style="left:2432px;top:1214px;width:186px;height:70px;background:#f2ab4b;"></i>
<svg style="left:2438px;top:1218px" width="26" height="26"><circle cx="13" cy="13" r="11.8" fill="none" stroke="#33260f" stroke-width="2"/><polygon points="6,10 20,10 13,19" fill="#33260f"/></svg>
<span style="left:2478px;top:1219.90px;font-size:20px;line-height:22.34px;color:#33260f;font-weight:bold;white-space:nowrap;letter-spacing:0.2px">vox chop1</span>
<i style="left:2432px;top:1288px;width:186px;height:70px;background:#f2ab4b;"></i>
<svg style="left:2438px;top:1292px" width="26" height="26"><circle cx="13" cy="13" r="11.8" fill="none" stroke="#33260f" stroke-width="2"/><polygon points="6,10 20,10 13,19" fill="#33260f"/></svg>
<span style="left:2478px;top:1293.90px;font-size:20px;line-height:22.34px;color:#33260f;font-weight:bold;white-space:nowrap;letter-spacing:0.2px">vox chop2</span>
<i style="left:2422px;top:1368px;width:196px;height:70px;background:#a13d39;"></i>
<svg style="left:2428px;top:1372px" width="26" height="26"><circle cx="13" cy="13" r="11.8" fill="none" stroke="#ecd2d2" stroke-width="2"/><polygon points="6,10 20,10 13,19" fill="#ecd2d2"/></svg>
<span style="left:2472px;top:1373.90px;font-size:20px;line-height:22.34px;color:#ecd2d2;font-weight:bold;white-space:nowrap;letter-spacing:0.2px">Main</span>
<i style="left:2618px;top:104px;width:4px;height:1338px;background:#222222;"></i>
<i style="left:2622px;top:104px;width:2px;height:1338px;background:#2c2c2c;"></i>
<div style="left:2428px;top:34px;width:54px;height:22px;border:2px solid #151515;border-radius:13px;background:#1f1f1f"></div>
<span style="left:2440px;top:36.20px;font-size:20px;line-height:22.34px;color:#d2d2d2;font-weight:bold;letter-spacing:0.3px">Set</span>
<div style="left:2508px;top:34px;width:42px;height:22px;border:2px solid #151515;background:#1f1f1f"></div>
<svg style="left:2516px;top:36px" width="26" height="22"><line x1="10.8" y1="15.1" x2="18.8" y2="6.8" stroke="#c4c4c4" stroke-width="2.2"/><circle cx="10.8" cy="15.1" r="3.2" fill="#c4c4c4"/><circle cx="18.8" cy="6.8" r="3.2" fill="#c4c4c4"/></svg>
<div style="left:2562px;top:34px;width:42px;height:22px;border:2px solid #111;background:#d86f4e"></div>
<svg style="left:2574px;top:38px" width="22" height="20"><path d="M6.5,9 V6.5 A4.5,4.5 0 0 1 15.5,6.5 V9" fill="none" stroke="#0a0a0a" stroke-width="2"/><rect x="4" y="8" width="14" height="8" fill="#0a0a0a"/></svg>
<div style="left:2428px;top:70px;width:24px;height:24px;border-radius:50%;background:#202020;border:1.5px solid #181818"></div>
<div style="left:2460px;top:70px;width:24px;height:24px;border-radius:50%;background:#202020;border:1.5px solid #181818"></div>
<svg style="left:2428px;top:70px" width="26" height="26"><polygon points="6,13 14,7 14,11.8 20,11.8 20,14.2 14,14.2 14,19" fill="#8e8e8e"/></svg>
<svg style="left:2460px;top:70px" width="26" height="26"><polygon points="20,13 12,7 12,11.8 6,11.8 6,14.2 12,14.2 12,19" fill="#d0d0d0"/></svg>
<i style="left:16px;top:1442px;width:2402px;height:42px;background:#363636;"></i>
<i style="left:2418px;top:1442px;width:206px;height:42px;background:#363636;"></i>
<i style="left:16px;top:1443px;width:2px;height:15px;background:#8c8c8c;"></i>
<i style="left:16px;top:1456px;width:4px;height:2px;background:#8c8c8c;"></i>
<span style="left:22.3px;top:1445.90px;font-size:20px;line-height:22.34px;color:#a9a9a9;font-weight:normal;letter-spacing:0.6px">0:00</span>
<i style="left:92px;top:1443px;width:2px;height:4px;background:#8c8c8c;"></i>
<i style="left:169px;top:1443px;width:2px;height:4px;background:#8c8c8c;"></i>
<i style="left:245px;top:1443px;width:2px;height:15px;background:#8c8c8c;"></i>
<i style="left:245px;top:1456px;width:4px;height:2px;background:#8c8c8c;"></i>
<span style="left:252px;top:1445.90px;font-size:20px;line-height:22.34px;color:#a9a9a9;font-weight:normal;letter-spacing:0.6px">0:15</span>
<i style="left:322px;top:1443px;width:2px;height:4px;background:#8c8c8c;"></i>
<i style="left:399px;top:1443px;width:2px;height:4px;background:#8c8c8c;"></i>
<i style="left:475px;top:1443px;width:2px;height:15px;background:#8c8c8c;"></i>
<i style="left:475px;top:1456px;width:4px;height:2px;background:#8c8c8c;"></i>
<span style="left:481.7px;top:1445.90px;font-size:20px;line-height:22.34px;color:#a9a9a9;font-weight:normal;letter-spacing:0.6px">0:30</span>
<i style="left:552px;top:1443px;width:2px;height:4px;background:#8c8c8c;"></i>
<i style="left:628px;top:1443px;width:2px;height:4px;background:#8c8c8c;"></i>
<i style="left:705px;top:1443px;width:2px;height:15px;background:#8c8c8c;"></i>
<i style="left:705px;top:1456px;width:4px;height:2px;background:#8c8c8c;"></i>
<span style="left:711.4px;top:1445.90px;font-size:20px;line-height:22.34px;color:#a9a9a9;font-weight:normal;letter-spacing:0.6px">0:45</span>
<i style="left:781px;top:1443px;width:2px;height:4px;background:#8c8c8c;"></i>
<i style="left:858px;top:1443px;width:2px;height:4px;background:#8c8c8c;"></i>
<i style="left:935px;top:1443px;width:2px;height:15px;background:#8c8c8c;"></i>
<i style="left:935px;top:1456px;width:4px;height:2px;background:#8c8c8c;"></i>
<span style="left:941.1px;top:1445.90px;font-size:20px;line-height:22.34px;color:#a9a9a9;font-weight:normal;letter-spacing:0.6px">1:00</span>
<i style="left:1011px;top:1443px;width:2px;height:4px;background:#8c8c8c;"></i>
<i style="left:1088px;top:1443px;width:2px;height:4px;background:#8c8c8c;"></i>
<i style="left:1164px;top:1443px;width:2px;height:15px;background:#8c8c8c;"></i>
<i style="left:1164px;top:1456px;width:4px;height:2px;background:#8c8c8c;"></i>
<span style="left:1170.8px;top:1445.90px;font-size:20px;line-height:22.34px;color:#a9a9a9;font-weight:normal;letter-spacing:0.6px">1:15</span>
<i style="left:1241px;top:1443px;width:2px;height:4px;background:#8c8c8c;"></i>
<i style="left:1317px;top:1443px;width:2px;height:4px;background:#8c8c8c;"></i>
<i style="left:1394px;top:1443px;width:2px;height:15px;background:#8c8c8c;"></i>
<i style="left:1394px;top:1456px;width:4px;height:2px;background:#8c8c8c;"></i>
<span style="left:1400.5px;top:1445.90px;font-size:20px;line-height:22.34px;color:#a9a9a9;font-weight:normal;letter-spacing:0.6px">1:30</span>
<i style="left:1471px;top:1443px;width:2px;height:4px;background:#8c8c8c;"></i>
<i style="left:1547px;top:1443px;width:2px;height:4px;background:#8c8c8c;"></i>
<i style="left:1624px;top:1443px;width:2px;height:15px;background:#8c8c8c;"></i>
<i style="left:1624px;top:1456px;width:4px;height:2px;background:#8c8c8c;"></i>
<span style="left:1630.2px;top:1445.90px;font-size:20px;line-height:22.34px;color:#a9a9a9;font-weight:normal;letter-spacing:0.6px">1:45</span>
<i style="left:1700px;top:1443px;width:2px;height:4px;background:#8c8c8c;"></i>
<i style="left:1777px;top:1443px;width:2px;height:4px;background:#8c8c8c;"></i>
<i style="left:1853px;top:1443px;width:2px;height:15px;background:#8c8c8c;"></i>
<i style="left:1853px;top:1456px;width:4px;height:2px;background:#8c8c8c;"></i>
<span style="left:1859.9px;top:1445.90px;font-size:20px;line-height:22.34px;color:#a9a9a9;font-weight:normal;letter-spacing:0.6px">2:00</span>
<i style="left:1930px;top:1443px;width:2px;height:4px;background:#8c8c8c;"></i>
<i style="left:2007px;top:1443px;width:2px;height:4px;background:#8c8c8c;"></i>
<i style="left:2083px;top:1443px;width:2px;height:15px;background:#8c8c8c;"></i>
<i style="left:2083px;top:1456px;width:4px;height:2px;background:#8c8c8c;"></i>
<span style="left:2089.6px;top:1445.90px;font-size:20px;line-height:22.34px;color:#a9a9a9;font-weight:normal;letter-spacing:0.6px">2:15</span>
<i style="left:2160px;top:1443px;width:2px;height:4px;background:#8c8c8c;"></i>
<i style="left:2236px;top:1443px;width:2px;height:4px;background:#8c8c8c;"></i>
<i style="left:2313px;top:1443px;width:2px;height:15px;background:#8c8c8c;"></i>
<i style="left:2313px;top:1456px;width:4px;height:2px;background:#8c8c8c;"></i>
<span style="left:2319.3px;top:1445.90px;font-size:20px;line-height:22.34px;color:#a9a9a9;font-weight:normal;letter-spacing:0.6px">2:30</span>
<svg style="left:16px;top:1443px" width="10" height="9"><polygon points="0,0 0,8 9,8" fill="#55c3dc"/></svg>
<span style="left:2357px;top:1400.42px;font-size:36px;line-height:40.21px;color:#7b7b7b;font-weight:bold;letter-spacing:0.5px">1/1</span>
<div style="left:2422px;top:1450px;width:26px;height:22px;border:2px solid #151515;background:#f2ae55"></div>
<svg style="left:2424px;top:1452px" width="26" height="22"><rect x="6" y="8.0" width="2" height="6" fill="#111"/><rect x="10" y="5.0" width="2" height="12" fill="#111"/><rect x="14" y="2.0" width="2" height="18" fill="#111"/><rect x="18" y="5.0" width="2" height="12" fill="#111"/><rect x="22" y="8.0" width="2" height="6" fill="#111"/></svg>
<div style="left:2458px;top:1450px;width:66px;height:22px;border:2px solid #151515;background:#1f1f1f"></div>
<i style="left:2460px;top:1452px;width:20px;height:22px;background:#2d6f86;"></i>
<span style="left:2465px;top:1450.99px;font-size:21px;line-height:23.46px;color:#d6d6d6">1.00x</span>
<div style="left:2550px;top:1450px;width:26px;height:22px;border:2px solid #151515;background:#f2ae55"></div>
<span style="left:2556px;top:1451.90px;font-size:20px;line-height:22.34px;color:#111">H</span>
<div style="left:2586px;top:1450px;width:26px;height:22px;border:2px solid #151515;background:#1f1f1f"></div>
<span style="left:2592px;top:1451.90px;font-size:20px;line-height:22.34px;color:#cfcfcf">W</span></div></body></html>
